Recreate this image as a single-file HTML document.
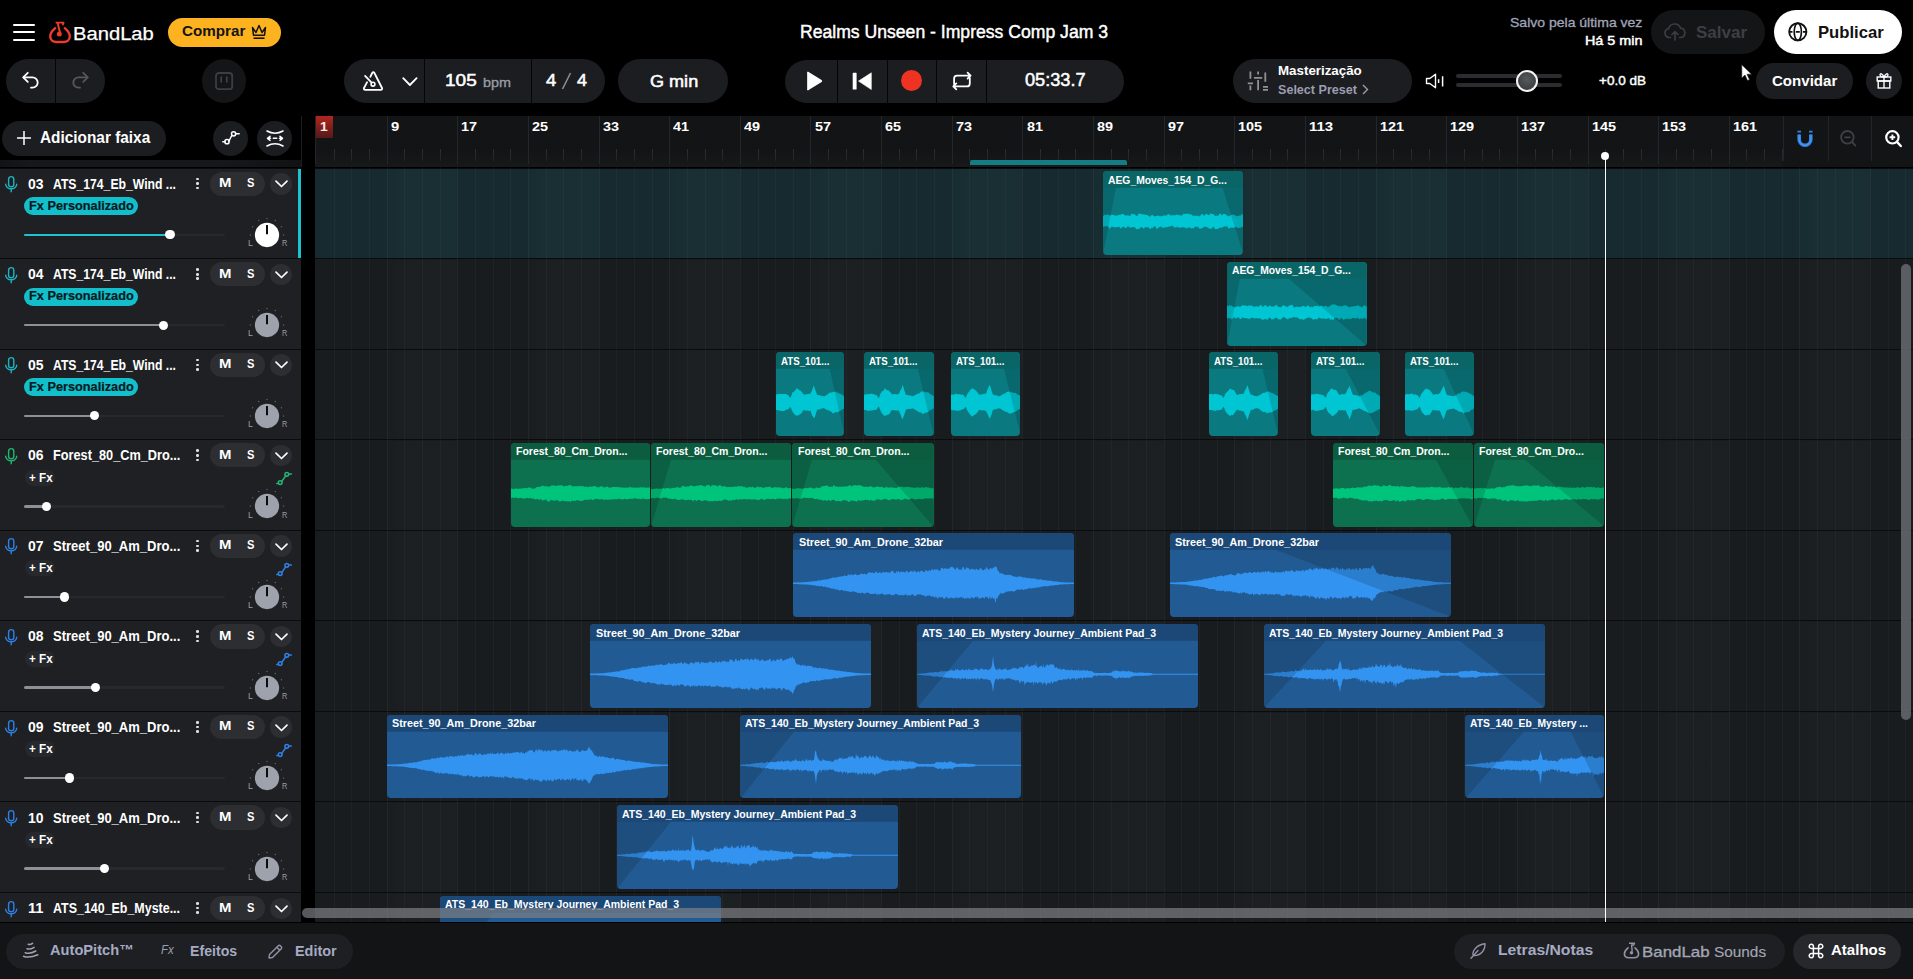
<!DOCTYPE html><html><head><meta charset="utf-8"><title>BandLab Studio</title><style>
*{margin:0;padding:0;box-sizing:border-box}
html,body{width:1913px;height:979px;overflow:hidden;background:#000;font-family:"Liberation Sans",sans-serif;color:#fff}
.abs{position:absolute}
.pill{position:absolute;border-radius:999px}
.t{position:absolute;white-space:nowrap;line-height:1}
svg{position:absolute;overflow:visible}
</style></head><body>
<div class="abs" style="left:13px;top:23.5px;width:22.3px;height:2.3px;background:#fff;border-radius:1px"></div>
<div class="abs" style="left:13px;top:31px;width:22.3px;height:2.3px;background:#fff;border-radius:1px"></div>
<div class="abs" style="left:13px;top:39px;width:22.3px;height:2.3px;background:#fff;border-radius:1px"></div>
<svg style="left:48px;top:20px" width="24" height="24" viewBox="0 0 24 24">
<path d="M7.2 8.2 C4.4 10.6 2.2 13.4 2.2 16.6 C2.2 20.2 5 22 8.5 22 H15.5 C19 22 21.8 20.2 21.8 16.6 C21.8 13.4 19.6 10.6 16.8 8.2" fill="none" stroke="#ee3b2b" stroke-width="2.4" stroke-linecap="round"/>
<path d="M8.4 2.6 H15.6 L14.9 4.4" fill="none" stroke="#ee3b2b" stroke-width="1.9" stroke-linejoin="round" stroke-linecap="round"/>
<path d="M9.6 2.8 L11.9 12.2" stroke="#ee3b2b" stroke-width="2"/>
<circle cx="11.3" cy="14" r="2.5" fill="#ee3b2b"/>
</svg>
<div class="t" style="left:73.34px;top:23.50px;font-size:19.13px;font-weight:normal;color:#fff;-webkit-text-stroke:0.25px #fff;transform:scaleX(1.0563);transform-origin:0 0">BandLab</div>
<div class="pill" style="left:168px;top:18px;width:113px;height:29px;background:#fdb21f"></div>
<div class="t" style="left:182.00px;top:24.39px;font-size:14.66px;font-weight:bold;color:#141414;;transform:scaleX(1.0379);transform-origin:0 0">Comprar</div>
<svg style="left:251px;top:23px" width="16" height="17" viewBox="0 0 16 17">
<path d="M1.5 4.5 L5 9.5 L8 2.5 L11 9.5 L14.5 4.5 L13.5 12.2 H2.5 Z" fill="none" stroke="#141414" stroke-width="1.5" stroke-linejoin="round"/>
<path d="M2.5 15.2 H13.5" stroke="#141414" stroke-width="1.6"/>
</svg>
<div class="t" style="left:800.12px;top:23.25px;font-size:18.02px;font-weight:normal;color:#fff;-webkit-text-stroke:0.45px #fff;transform:scaleX(0.9766);transform-origin:0 0">Realms Unseen - Impress Comp Jam 3</div>
<div class="t" style="left:1509.60px;top:17.20px;font-size:12.29px;font-weight:normal;color:#a0a4b8;-webkit-text-stroke:0.3px #a0a4b8;transform:scaleX(1.1406);transform-origin:0 0">Salvo pela última vez</div>
<div class="t" style="left:1585.22px;top:34.71px;font-size:12.15px;font-weight:normal;color:#fff;-webkit-text-stroke:0.45px #fff;transform:scaleX(1.1830);transform-origin:0 0">Há 5 min</div>
<div class="pill" style="left:1651px;top:10.4px;width:114.4px;height:43.3px;background:#141517"></div>
<svg style="left:1664px;top:23px" width="22" height="18" viewBox="0 0 22 18">
<path d="M6.5 14.5 H5.5 A4.5 4.5 0 0 1 4.6 5.6 A6.3 6.3 0 0 1 16.6 5.2 A4.7 4.7 0 0 1 17 14.5 H15.5" fill="none" stroke="#3b3d42" stroke-width="1.7" stroke-linecap="round"/>
<path d="M11 17 V8.5 M8 11.5 L11 8.5 L14 11.5" fill="none" stroke="#3b3d42" stroke-width="1.7" stroke-linecap="round" stroke-linejoin="round"/>
</svg>
<div class="t" style="left:1696.20px;top:24.10px;font-size:16.06px;font-weight:bold;color:#3d3f44;;transform:scaleX(1.0598);transform-origin:0 0">Salvar</div>
<div class="pill" style="left:1774px;top:9.8px;width:128px;height:44px;background:#fff"></div>
<svg style="left:1788px;top:22px" width="20" height="20" viewBox="0 0 20 20">
<circle cx="9.8" cy="9.8" r="8.6" fill="none" stroke="#111" stroke-width="1.9"/>
<ellipse cx="9.8" cy="9.8" rx="3.6" ry="8.6" fill="none" stroke="#111" stroke-width="1.7"/>
<path d="M1.2 9.8 H4.5 M7.8 9.8 H11.8 M15 9.8 H18.4" stroke="#111" stroke-width="1.7"/>
</svg>
<div class="t" style="left:1818.03px;top:25.16px;font-size:15.64px;font-weight:bold;color:#111;;transform:scaleX(1.0665);transform-origin:0 0">Publicar</div>
<div class="pill" style="left:6px;top:59px;width:99px;height:44px;background:#1c1d20"></div>
<div class="abs" style="left:55px;top:59px;width:1.2px;height:44px;background:#050505"></div>
<svg style="left:21px;top:71px" width="20" height="20" viewBox="0 0 20 20">
<path d="M6.8 1.8 L2.2 6.3 L6.8 10.8" fill="none" stroke="#fff" stroke-width="1.8" stroke-linejoin="round" stroke-linecap="round"/>
<path d="M2.6 6.3 H11.5 A5.2 5.2 0 0 1 11.5 16.7 H10" fill="none" stroke="#fff" stroke-width="1.8" stroke-linecap="round"/>
</svg>
<svg style="left:70px;top:71px" width="20" height="20" viewBox="0 0 20 20">
<path d="M13.2 1.8 L17.8 6.3 L13.2 10.8" fill="none" stroke="#55575c" stroke-width="1.8" stroke-linejoin="round" stroke-linecap="round"/>
<path d="M17.4 6.3 H8.5 A5.2 5.2 0 0 0 8.5 16.7 H10" fill="none" stroke="#55575c" stroke-width="1.8" stroke-linecap="round"/>
</svg>
<div class="pill" style="left:202px;top:59px;width:44px;height:44px;background:#141517"></div>
<svg style="left:214px;top:71px" width="20" height="20" viewBox="0 0 20 20">
<rect x="2" y="2" width="16.2" height="16.2" rx="2.8" fill="none" stroke="#3c3e42" stroke-width="1.8"/>
<path d="M7.2 5.4 V11.4 M12.8 5.4 V11.4" stroke="#45474b" stroke-width="1.5"/>
</svg>
<div class="pill" style="left:344px;top:59px;width:261px;height:44px;background:#1c1d20"></div>
<div class="abs" style="left:424px;top:59px;width:1.2px;height:44px;background:#050505"></div>
<div class="abs" style="left:531px;top:59px;width:1.2px;height:44px;background:#050505"></div>
<svg style="left:362px;top:71px" width="22" height="20" viewBox="0 0 22 20">
<path d="M8.3 5.8 L10.2 2 Q11.3 0.4 12.4 2 L20 17 Q20.6 18.8 18.8 18.8 H3.2 Q1.4 18.8 2 17 L5.1 11.2" fill="none" stroke="#fff" stroke-width="1.8" stroke-linejoin="round" stroke-linecap="round"/>
<path d="M3.1 4.9 L9.6 11.6" stroke="#fff" stroke-width="1.8" stroke-linecap="round"/>
<circle cx="11" cy="13.2" r="1.9" fill="none" stroke="#fff" stroke-width="1.6"/>
</svg>
<svg style="left:402px;top:77px" width="16" height="10" viewBox="0 0 16 10">
<path d="M1.2 1.2 L7.9 8 L14.6 1.2" fill="none" stroke="#fff" stroke-width="1.8" stroke-linecap="round" stroke-linejoin="round"/>
</svg>
<div class="t" style="left:445.26px;top:72.93px;font-size:16.62px;font-weight:normal;color:#fff;-webkit-text-stroke:0.5px #fff;transform:scaleX(1.1445);transform-origin:0 0">105</div>
<div class="t" style="left:483.00px;top:75.57px;font-size:13.27px;font-weight:normal;color:#9a9ea8;-webkit-text-stroke:0.3px #9a9ea8;transform:scaleX(1.0833);transform-origin:0 0">bpm</div>
<div class="t" style="left:546.00px;top:72.93px;font-size:16.62px;font-weight:normal;color:#fff;-webkit-text-stroke:0.5px #fff;transform:scaleX(1.1111);transform-origin:0 0">4</div>
<svg style="left:561px;top:72px" width="11" height="18" viewBox="0 0 11 18"><path d="M9.5 1 L1.5 17" stroke="#8d9096" stroke-width="1.5"/></svg>
<div class="t" style="left:576.50px;top:72.93px;font-size:16.62px;font-weight:normal;color:#fff;-webkit-text-stroke:0.5px #fff;transform:scaleX(1.0778);transform-origin:0 0">4</div>
<div class="pill" style="left:618px;top:59px;width:110px;height:43.6px;background:#1c1d20"></div>
<div class="t" style="left:649.60px;top:73.15px;font-size:16.48px;font-weight:normal;color:#fff;-webkit-text-stroke:0.5px #fff;transform:scaleX(1.0968);transform-origin:0 0">G min</div>
<div class="pill" style="left:784.5px;top:59.5px;width:339px;height:43.5px;background:#1c1d20"></div>
<div class="abs" style="left:837px;top:59.5px;width:1.2px;height:43.5px;background:#050505"></div>
<div class="abs" style="left:887px;top:59.5px;width:1.2px;height:43.5px;background:#050505"></div>
<div class="abs" style="left:936px;top:59.5px;width:1.2px;height:43.5px;background:#050505"></div>
<div class="abs" style="left:986px;top:59.5px;width:1.2px;height:43.5px;background:#050505"></div>
<svg style="left:806px;top:71px" width="17" height="20" viewBox="0 0 17 20">
<path d="M1.8 1.6 Q1.3 1 2.3 1.4 L15.3 9.6 Q15.8 10 15.3 10.4 L2.3 18.6 Q1.3 19 1.8 18.4 Z" fill="#fff" stroke="#fff" stroke-width="1.2" stroke-linejoin="round"/>
</svg>
<svg style="left:852px;top:72px" width="20" height="18" viewBox="0 0 20 18">
<rect x="0.7" y="0.8" width="3.9" height="16.7" rx="0.6" fill="#fff"/><path d="M19.3 0.8 L6.5 9.1 L19.3 17.5 Z" fill="#fff" stroke="#fff" stroke-width="0.6" stroke-linejoin="round"/>
</svg>
<div class="abs" style="left:901.3px;top:70.4px;width:21px;height:21px;border-radius:50%;background:#ee3322"></div>
<svg style="left:952px;top:71px" width="21" height="20" viewBox="0 0 21 20">
<path d="M2.1 13 V7.6 A3 3 0 0 1 5.1 4.6 H18.6 M15.6 1.6 L18.6 4.6 L15.6 7.6" fill="none" stroke="#fff" stroke-width="1.8" stroke-linejoin="round" stroke-linecap="round"/>
<path d="M17.8 7 V12.4 A3 3 0 0 1 14.8 15.4 H1.3 M4.3 12.4 L1.3 15.4 L4.3 18.4" fill="none" stroke="#fff" stroke-width="1.8" stroke-linejoin="round" stroke-linecap="round"/>
</svg>
<div class="t" style="left:1024.90px;top:72.47px;font-size:17.88px;font-weight:normal;color:#fff;-webkit-text-stroke:0.5px #fff;transform:scaleX(1.0175);transform-origin:0 0">05:33.7</div>
<div class="pill" style="left:1233px;top:59px;width:178.7px;height:43.7px;background:#1c1d20"></div>
<svg style="left:1247px;top:71px" width="22" height="20" viewBox="0 0 22 20">
<path d="M3.4 0.4 V7.8 M3.4 14.5 V19.3 M11.1 0.4 V3.5 M11.1 9 V19.3 M18.3 1.4 V10.8" stroke="#8e9197" stroke-width="1.8"/>
<path d="M0.8 12.3 H6 M7 6.8 H15.2 M16 15.8 H21 M16 18.8 H21" stroke="#8e9197" stroke-width="1.8"/>
</svg>
<div class="t" style="left:1278.20px;top:65.02px;font-size:12.85px;font-weight:bold;color:#fff;;transform:scaleX(1.0381);transform-origin:0 0">Masterização</div>
<div class="t" style="left:1278.20px;top:83.70px;font-size:12.29px;font-weight:bold;color:#9a9eb0;;transform:scaleX(1.0239);transform-origin:0 0">Select Preset</div>
<svg style="left:1362px;top:84px" width="7" height="11" viewBox="0 0 7 11"><path d="M1 1 L5.5 5.5 L1 10" fill="none" stroke="#9a9eb0" stroke-width="1.4"/></svg>
<svg style="left:1425px;top:73px" width="20" height="16" viewBox="0 0 20 16">
<path d="M1.5 5.5 H4.8 L10.5 1.2 V14.8 L4.8 10.5 H1.5 Z" fill="none" stroke="#fff" stroke-width="1.4" stroke-linejoin="round"/>
<path d="M13.6 6.2 V10 M17.6 3.2 V13.4" stroke="#fff" stroke-width="1.5"/>
</svg>
<div class="abs" style="left:1456.2px;top:74.3px;width:105.8px;height:3.6px;background:#2a2c2f;border-radius:2px"></div>
<div class="abs" style="left:1456.2px;top:83.2px;width:105.8px;height:3.8px;background:#2a2c2f;border-radius:2px"></div>
<div class="abs" style="left:1516.3px;top:70px;width:22.2px;height:22.2px;border-radius:50%;background:radial-gradient(circle at 50% 40%,#56585b,#333538);border:2.4px solid #f4f4f4"></div>
<div class="t" style="left:1599.30px;top:74.15px;font-size:13.41px;font-weight:normal;color:#fff;-webkit-text-stroke:0.45px #fff;transform:scaleX(1.0076);transform-origin:0 0">+0.0 dB</div>
<svg style="left:1741px;top:63.5px" width="12" height="18" viewBox="0 0 12 18">
<path d="M0.8 0.8 L0.8 14 L4 11 L6.5 16.5 L8.5 15.6 L6 10.2 L10.5 10.2 Z" fill="#fff" stroke="#222" stroke-width="0.6"/>
</svg>
<div class="pill" style="left:1756.3px;top:63.3px;width:96.7px;height:35.4px;background:#1c1d20"></div>
<div class="t" style="left:1771.90px;top:73.86px;font-size:14.11px;font-weight:bold;color:#fff;;transform:scaleX(1.0672);transform-origin:0 0">Convidar</div>
<div class="pill" style="left:1866.4px;top:63.3px;width:35.4px;height:35.4px;background:#1c1d20"></div>
<svg style="left:1876px;top:72px" width="16" height="17" viewBox="0 0 16 17">
<rect x="1.2" y="5" width="13.6" height="4" fill="none" stroke="#fff" stroke-width="1.4"/>
<rect x="2.2" y="9" width="11.6" height="7" fill="none" stroke="#fff" stroke-width="1.4"/>
<path d="M8 5 V16" stroke="#fff" stroke-width="1.4"/>
<path d="M8 5 C6.5 1.2 3.8 1 4 3 C4.2 4.6 6.5 5 8 5 C9.5 5 11.8 4.6 12 3 C12.2 1 9.5 1.2 8 5" fill="none" stroke="#fff" stroke-width="1.3"/>
</svg>
<div class="pill" style="left:2.4px;top:121px;width:163.5px;height:34.8px;background:#1c1d20"></div>
<svg style="left:16.9px;top:130.7px" width="14" height="14" viewBox="0 0 14 14">
<path d="M7 0 V14 M0 7 H14" stroke="#fff" stroke-width="1.5"/>
</svg>
<div class="t" style="left:40.00px;top:129.96px;font-size:15.64px;font-weight:bold;color:#fff;;transform:scaleX(0.9838);transform-origin:0 0">Adicionar faixa</div>
<div class="pill" style="left:213.3px;top:121px;width:34.5px;height:34.8px;background:#1c1d20"></div>
<svg style="left:222px;top:130px" width="18" height="15" viewBox="0 0 18 15">
<path d="M0.8 11.7 H3 M7 11 L9.5 6 M13.5 3.8 H17.2" stroke="#fff" stroke-width="1.5" stroke-linecap="round"/>
<circle cx="5" cy="11.7" r="2.1" fill="none" stroke="#fff" stroke-width="1.5"/>
<circle cx="11.6" cy="3.8" r="2.1" fill="none" stroke="#fff" stroke-width="1.5"/>
</svg>
<div class="pill" style="left:257.2px;top:121px;width:34.5px;height:34.8px;background:#1c1d20"></div>
<svg style="left:266px;top:129.5px" width="18" height="17" viewBox="0 0 18 17">
<path d="M1 1 Q9 5.5 17 1 M1 16 Q9 11.5 17 16" fill="none" stroke="#fff" stroke-width="1.6" stroke-linecap="round"/>
<path d="M1.5 8.3 L4 6.3 M1.5 8.3 L4 10.3 M16.5 8.3 L14 6.3 M16.5 8.3 L14 10.3 M1.5 8.3 H4.5 M7.3 8.3 H10.7 M13.5 8.3 H16.5" fill="none" stroke="#fff" stroke-width="1.5" stroke-linecap="round"/>
</svg>
<div class="abs" style="left:0;top:159.7px;width:301px;height:7px;background:linear-gradient(90deg,#121315,#17181b 10%,#17181b 70%,#111214)"></div>
<div class="abs" style="left:300.6px;top:116px;width:1px;height:51px;background:#1d1e21"></div>
<div class="abs" style="left:315px;top:115.7px;width:1598px;height:51px;background:linear-gradient(180deg,#131416 0%,#131416 70%,#17191b 100%)"></div>
<div class="abs" style="left:315px;top:115.7px;width:18.3px;height:22.2px;background:linear-gradient(180deg,#b3271f 0%,#7c1f1c 55%,#561a1a 100%)"></div>
<div class="t" style="left:320.40px;top:120.10px;font-size:12.99px;font-weight:bold;color:#ffe9e6;;transform:scaleX(1.0714);transform-origin:0 0">1</div>
<div class="abs" style="left:315px;top:115.7px;width:1px;height:48px;background:#222427"></div>
<div class="abs" style="left:386.64px;top:115.7px;width:1px;height:48px;background:#242629"></div>
<div class="t" style="left:390.74px;top:120.09px;font-size:13.13px;font-weight:bold;color:#fff;;transform:scaleX(1.1286);transform-origin:0 0">9</div>
<div class="abs" style="left:457.28px;top:115.7px;width:1px;height:48px;background:#242629"></div>
<div class="t" style="left:461.38px;top:120.09px;font-size:13.13px;font-weight:bold;color:#fff;;transform:scaleX(1.0979);transform-origin:0 0">17</div>
<div class="abs" style="left:527.92px;top:115.7px;width:1px;height:48px;background:#242629"></div>
<div class="t" style="left:532.02px;top:120.09px;font-size:13.13px;font-weight:bold;color:#fff;;transform:scaleX(1.0979);transform-origin:0 0">25</div>
<div class="abs" style="left:598.56px;top:115.7px;width:1px;height:48px;background:#242629"></div>
<div class="t" style="left:602.66px;top:120.09px;font-size:13.13px;font-weight:bold;color:#fff;;transform:scaleX(1.0979);transform-origin:0 0">33</div>
<div class="abs" style="left:669.20px;top:115.7px;width:1px;height:48px;background:#242629"></div>
<div class="t" style="left:673.30px;top:120.09px;font-size:13.13px;font-weight:bold;color:#fff;;transform:scaleX(1.0979);transform-origin:0 0">41</div>
<div class="abs" style="left:739.84px;top:115.7px;width:1px;height:48px;background:#242629"></div>
<div class="t" style="left:743.94px;top:120.09px;font-size:13.13px;font-weight:bold;color:#fff;;transform:scaleX(1.0979);transform-origin:0 0">49</div>
<div class="abs" style="left:810.48px;top:115.7px;width:1px;height:48px;background:#242629"></div>
<div class="t" style="left:814.58px;top:120.09px;font-size:13.13px;font-weight:bold;color:#fff;;transform:scaleX(1.0979);transform-origin:0 0">57</div>
<div class="abs" style="left:881.12px;top:115.7px;width:1px;height:48px;background:#242629"></div>
<div class="t" style="left:885.22px;top:120.09px;font-size:13.13px;font-weight:bold;color:#fff;;transform:scaleX(1.0979);transform-origin:0 0">65</div>
<div class="abs" style="left:951.76px;top:115.7px;width:1px;height:48px;background:#242629"></div>
<div class="t" style="left:955.86px;top:120.09px;font-size:13.13px;font-weight:bold;color:#fff;;transform:scaleX(1.0979);transform-origin:0 0">73</div>
<div class="abs" style="left:1022.40px;top:115.7px;width:1px;height:48px;background:#242629"></div>
<div class="t" style="left:1026.50px;top:120.09px;font-size:13.13px;font-weight:bold;color:#fff;;transform:scaleX(1.0979);transform-origin:0 0">81</div>
<div class="abs" style="left:1093.04px;top:115.7px;width:1px;height:48px;background:#242629"></div>
<div class="t" style="left:1097.14px;top:120.09px;font-size:13.13px;font-weight:bold;color:#fff;;transform:scaleX(1.0979);transform-origin:0 0">89</div>
<div class="abs" style="left:1163.68px;top:115.7px;width:1px;height:48px;background:#242629"></div>
<div class="t" style="left:1167.78px;top:120.09px;font-size:13.13px;font-weight:bold;color:#fff;;transform:scaleX(1.0979);transform-origin:0 0">97</div>
<div class="abs" style="left:1234.32px;top:115.7px;width:1px;height:48px;background:#242629"></div>
<div class="t" style="left:1238.42px;top:120.09px;font-size:13.13px;font-weight:bold;color:#fff;;transform:scaleX(1.1019);transform-origin:0 0">105</div>
<div class="abs" style="left:1304.96px;top:115.7px;width:1px;height:48px;background:#242629"></div>
<div class="t" style="left:1309.06px;top:120.09px;font-size:13.13px;font-weight:bold;color:#fff;;transform:scaleX(1.1401);transform-origin:0 0">113</div>
<div class="abs" style="left:1375.60px;top:115.7px;width:1px;height:48px;background:#242629"></div>
<div class="t" style="left:1379.70px;top:120.09px;font-size:13.13px;font-weight:bold;color:#fff;;transform:scaleX(1.1019);transform-origin:0 0">121</div>
<div class="abs" style="left:1446.24px;top:115.7px;width:1px;height:48px;background:#242629"></div>
<div class="t" style="left:1450.34px;top:120.09px;font-size:13.13px;font-weight:bold;color:#fff;;transform:scaleX(1.1019);transform-origin:0 0">129</div>
<div class="abs" style="left:1516.88px;top:115.7px;width:1px;height:48px;background:#242629"></div>
<div class="t" style="left:1520.98px;top:120.09px;font-size:13.13px;font-weight:bold;color:#fff;;transform:scaleX(1.1019);transform-origin:0 0">137</div>
<div class="abs" style="left:1587.52px;top:115.7px;width:1px;height:48px;background:#242629"></div>
<div class="t" style="left:1591.62px;top:120.09px;font-size:13.13px;font-weight:bold;color:#fff;;transform:scaleX(1.1019);transform-origin:0 0">145</div>
<div class="abs" style="left:1658.16px;top:115.7px;width:1px;height:48px;background:#242629"></div>
<div class="t" style="left:1662.26px;top:120.09px;font-size:13.13px;font-weight:bold;color:#fff;;transform:scaleX(1.1019);transform-origin:0 0">153</div>
<div class="abs" style="left:1728.80px;top:115.7px;width:1px;height:48px;background:#242629"></div>
<div class="t" style="left:1732.90px;top:120.09px;font-size:13.13px;font-weight:bold;color:#fff;;transform:scaleX(1.1019);transform-origin:0 0">161</div>
<div class="abs" style="left:333.66px;top:148.5px;width:1px;height:12.5px;background:linear-gradient(#2c2e31,#222427)"></div>
<div class="abs" style="left:351.32px;top:148.5px;width:1px;height:12.5px;background:linear-gradient(#2c2e31,#222427)"></div>
<div class="abs" style="left:368.98px;top:148.5px;width:1px;height:12.5px;background:linear-gradient(#2c2e31,#222427)"></div>
<div class="abs" style="left:404.30px;top:148.5px;width:1px;height:12.5px;background:linear-gradient(#2c2e31,#222427)"></div>
<div class="abs" style="left:421.96px;top:148.5px;width:1px;height:12.5px;background:linear-gradient(#2c2e31,#222427)"></div>
<div class="abs" style="left:439.62px;top:148.5px;width:1px;height:12.5px;background:linear-gradient(#2c2e31,#222427)"></div>
<div class="abs" style="left:474.94px;top:148.5px;width:1px;height:12.5px;background:linear-gradient(#2c2e31,#222427)"></div>
<div class="abs" style="left:492.60px;top:148.5px;width:1px;height:12.5px;background:linear-gradient(#2c2e31,#222427)"></div>
<div class="abs" style="left:510.26px;top:148.5px;width:1px;height:12.5px;background:linear-gradient(#2c2e31,#222427)"></div>
<div class="abs" style="left:545.58px;top:148.5px;width:1px;height:12.5px;background:linear-gradient(#2c2e31,#222427)"></div>
<div class="abs" style="left:563.24px;top:148.5px;width:1px;height:12.5px;background:linear-gradient(#2c2e31,#222427)"></div>
<div class="abs" style="left:580.90px;top:148.5px;width:1px;height:12.5px;background:linear-gradient(#2c2e31,#222427)"></div>
<div class="abs" style="left:616.22px;top:148.5px;width:1px;height:12.5px;background:linear-gradient(#2c2e31,#222427)"></div>
<div class="abs" style="left:633.88px;top:148.5px;width:1px;height:12.5px;background:linear-gradient(#2c2e31,#222427)"></div>
<div class="abs" style="left:651.54px;top:148.5px;width:1px;height:12.5px;background:linear-gradient(#2c2e31,#222427)"></div>
<div class="abs" style="left:686.86px;top:148.5px;width:1px;height:12.5px;background:linear-gradient(#2c2e31,#222427)"></div>
<div class="abs" style="left:704.52px;top:148.5px;width:1px;height:12.5px;background:linear-gradient(#2c2e31,#222427)"></div>
<div class="abs" style="left:722.18px;top:148.5px;width:1px;height:12.5px;background:linear-gradient(#2c2e31,#222427)"></div>
<div class="abs" style="left:757.50px;top:148.5px;width:1px;height:12.5px;background:linear-gradient(#2c2e31,#222427)"></div>
<div class="abs" style="left:775.16px;top:148.5px;width:1px;height:12.5px;background:linear-gradient(#2c2e31,#222427)"></div>
<div class="abs" style="left:792.82px;top:148.5px;width:1px;height:12.5px;background:linear-gradient(#2c2e31,#222427)"></div>
<div class="abs" style="left:828.14px;top:148.5px;width:1px;height:12.5px;background:linear-gradient(#2c2e31,#222427)"></div>
<div class="abs" style="left:845.80px;top:148.5px;width:1px;height:12.5px;background:linear-gradient(#2c2e31,#222427)"></div>
<div class="abs" style="left:863.46px;top:148.5px;width:1px;height:12.5px;background:linear-gradient(#2c2e31,#222427)"></div>
<div class="abs" style="left:898.78px;top:148.5px;width:1px;height:12.5px;background:linear-gradient(#2c2e31,#222427)"></div>
<div class="abs" style="left:916.44px;top:148.5px;width:1px;height:12.5px;background:linear-gradient(#2c2e31,#222427)"></div>
<div class="abs" style="left:934.10px;top:148.5px;width:1px;height:12.5px;background:linear-gradient(#2c2e31,#222427)"></div>
<div class="abs" style="left:969.42px;top:148.5px;width:1px;height:12.5px;background:linear-gradient(#2c2e31,#222427)"></div>
<div class="abs" style="left:987.08px;top:148.5px;width:1px;height:12.5px;background:linear-gradient(#2c2e31,#222427)"></div>
<div class="abs" style="left:1004.74px;top:148.5px;width:1px;height:12.5px;background:linear-gradient(#2c2e31,#222427)"></div>
<div class="abs" style="left:1040.06px;top:148.5px;width:1px;height:12.5px;background:linear-gradient(#2c2e31,#222427)"></div>
<div class="abs" style="left:1057.72px;top:148.5px;width:1px;height:12.5px;background:linear-gradient(#2c2e31,#222427)"></div>
<div class="abs" style="left:1075.38px;top:148.5px;width:1px;height:12.5px;background:linear-gradient(#2c2e31,#222427)"></div>
<div class="abs" style="left:1110.70px;top:148.5px;width:1px;height:12.5px;background:linear-gradient(#2c2e31,#222427)"></div>
<div class="abs" style="left:1128.36px;top:148.5px;width:1px;height:12.5px;background:linear-gradient(#2c2e31,#222427)"></div>
<div class="abs" style="left:1146.02px;top:148.5px;width:1px;height:12.5px;background:linear-gradient(#2c2e31,#222427)"></div>
<div class="abs" style="left:1181.34px;top:148.5px;width:1px;height:12.5px;background:linear-gradient(#2c2e31,#222427)"></div>
<div class="abs" style="left:1199.00px;top:148.5px;width:1px;height:12.5px;background:linear-gradient(#2c2e31,#222427)"></div>
<div class="abs" style="left:1216.66px;top:148.5px;width:1px;height:12.5px;background:linear-gradient(#2c2e31,#222427)"></div>
<div class="abs" style="left:1251.98px;top:148.5px;width:1px;height:12.5px;background:linear-gradient(#2c2e31,#222427)"></div>
<div class="abs" style="left:1269.64px;top:148.5px;width:1px;height:12.5px;background:linear-gradient(#2c2e31,#222427)"></div>
<div class="abs" style="left:1287.30px;top:148.5px;width:1px;height:12.5px;background:linear-gradient(#2c2e31,#222427)"></div>
<div class="abs" style="left:1322.62px;top:148.5px;width:1px;height:12.5px;background:linear-gradient(#2c2e31,#222427)"></div>
<div class="abs" style="left:1340.28px;top:148.5px;width:1px;height:12.5px;background:linear-gradient(#2c2e31,#222427)"></div>
<div class="abs" style="left:1357.94px;top:148.5px;width:1px;height:12.5px;background:linear-gradient(#2c2e31,#222427)"></div>
<div class="abs" style="left:1393.26px;top:148.5px;width:1px;height:12.5px;background:linear-gradient(#2c2e31,#222427)"></div>
<div class="abs" style="left:1410.92px;top:148.5px;width:1px;height:12.5px;background:linear-gradient(#2c2e31,#222427)"></div>
<div class="abs" style="left:1428.58px;top:148.5px;width:1px;height:12.5px;background:linear-gradient(#2c2e31,#222427)"></div>
<div class="abs" style="left:1463.90px;top:148.5px;width:1px;height:12.5px;background:linear-gradient(#2c2e31,#222427)"></div>
<div class="abs" style="left:1481.56px;top:148.5px;width:1px;height:12.5px;background:linear-gradient(#2c2e31,#222427)"></div>
<div class="abs" style="left:1499.22px;top:148.5px;width:1px;height:12.5px;background:linear-gradient(#2c2e31,#222427)"></div>
<div class="abs" style="left:1534.54px;top:148.5px;width:1px;height:12.5px;background:linear-gradient(#2c2e31,#222427)"></div>
<div class="abs" style="left:1552.20px;top:148.5px;width:1px;height:12.5px;background:linear-gradient(#2c2e31,#222427)"></div>
<div class="abs" style="left:1569.86px;top:148.5px;width:1px;height:12.5px;background:linear-gradient(#2c2e31,#222427)"></div>
<div class="abs" style="left:1605.18px;top:148.5px;width:1px;height:12.5px;background:linear-gradient(#2c2e31,#222427)"></div>
<div class="abs" style="left:1622.84px;top:148.5px;width:1px;height:12.5px;background:linear-gradient(#2c2e31,#222427)"></div>
<div class="abs" style="left:1640.50px;top:148.5px;width:1px;height:12.5px;background:linear-gradient(#2c2e31,#222427)"></div>
<div class="abs" style="left:1675.82px;top:148.5px;width:1px;height:12.5px;background:linear-gradient(#2c2e31,#222427)"></div>
<div class="abs" style="left:1693.48px;top:148.5px;width:1px;height:12.5px;background:linear-gradient(#2c2e31,#222427)"></div>
<div class="abs" style="left:1711.14px;top:148.5px;width:1px;height:12.5px;background:linear-gradient(#2c2e31,#222427)"></div>
<div class="abs" style="left:1746.46px;top:148.5px;width:1px;height:12.5px;background:linear-gradient(#2c2e31,#222427)"></div>
<div class="abs" style="left:1764.12px;top:148.5px;width:1px;height:12.5px;background:linear-gradient(#2c2e31,#222427)"></div>
<div class="abs" style="left:1781.78px;top:148.5px;width:1px;height:12.5px;background:linear-gradient(#2c2e31,#222427)"></div>
<div class="abs" style="left:969.8px;top:160px;width:157.6px;height:5px;background:#167c84;border-radius:2px 2px 0 0"></div>
<div class="abs" style="left:1783px;top:115.7px;width:130px;height:51px;background:#131416"></div>
<div class="abs" style="left:1783px;top:115.7px;width:1px;height:45px;background:#222427"></div>
<div class="abs" style="left:1827.5px;top:115.7px;width:1px;height:45px;background:#222427"></div>
<div class="abs" style="left:1871.3px;top:115.7px;width:1px;height:45px;background:#222427"></div>
<svg style="left:1796px;top:129px" width="18" height="20" viewBox="0 0 18 20">
<path d="M3.2 5.5 V10.5 A5.8 5.8 0 0 0 14.8 10.5 V5.5" fill="none" stroke="#2f86e8" stroke-width="3.6"/>
<path d="M3.2 5.5 V10.5 A5.8 5.8 0 0 0 14.8 10.5 V5.5" fill="none" stroke="#5a9ff0" stroke-width="0.8"/>
<path d="M1.4 2.6 H5 M13 2.6 H16.6" stroke="#2f86e8" stroke-width="1.8"/>
</svg>
<svg style="left:1839px;top:129px" width="20" height="20" viewBox="0 0 20 20">
<circle cx="8.4" cy="8.3" r="6.3" fill="none" stroke="#3e4044" stroke-width="1.8"/>
<path d="M6 8.3 H10.8 M13.2 13.1 L16.4 16.6" stroke="#3e4044" stroke-width="1.8" stroke-linecap="round"/>
</svg>
<svg style="left:1884.2px;top:129px" width="20" height="20" viewBox="0 0 20 20">
<circle cx="8.4" cy="8.3" r="6.2" fill="none" stroke="#fff" stroke-width="2.2"/>
<path d="M5.6 8.3 H11.2 M8.4 5.5 V11.1" stroke="#fff" stroke-width="1.9"/>
<path d="M13.2 13.1 L16.8 17" stroke="#fff" stroke-width="2.4" stroke-linecap="round"/>
</svg>
<div class="abs" style="left:0;top:167px;width:1913px;height:755px;overflow:hidden">
<div class="abs" style="left:0;top:0.60px;width:301px;height:90.55px;background:#1e2023;border-top:1.6px solid #0a0b0c"></div>
<div class="abs" style="left:315px;top:0.60px;width:1598px;height:90.55px;background:#172a2f;border-top:1.6px solid #0a0b0c"></div>
<div class="abs" style="left:0;top:91.15px;width:301px;height:90.55px;background:#1e2023;border-top:1.6px solid #0a0b0c"></div>
<div class="abs" style="left:315px;top:91.15px;width:1598px;height:90.55px;background:#191c1f;border-top:1.6px solid #0a0b0c"></div>
<div class="abs" style="left:0;top:181.70px;width:301px;height:90.55px;background:#1e2023;border-top:1.6px solid #0a0b0c"></div>
<div class="abs" style="left:315px;top:181.70px;width:1598px;height:90.55px;background:#191c1f;border-top:1.6px solid #0a0b0c"></div>
<div class="abs" style="left:0;top:272.25px;width:301px;height:90.55px;background:#1e2023;border-top:1.6px solid #0a0b0c"></div>
<div class="abs" style="left:315px;top:272.25px;width:1598px;height:90.55px;background:#191c1f;border-top:1.6px solid #0a0b0c"></div>
<div class="abs" style="left:0;top:362.80px;width:301px;height:90.55px;background:#1e2023;border-top:1.6px solid #0a0b0c"></div>
<div class="abs" style="left:315px;top:362.80px;width:1598px;height:90.55px;background:#191c1f;border-top:1.6px solid #0a0b0c"></div>
<div class="abs" style="left:0;top:453.35px;width:301px;height:90.55px;background:#1e2023;border-top:1.6px solid #0a0b0c"></div>
<div class="abs" style="left:315px;top:453.35px;width:1598px;height:90.55px;background:#191c1f;border-top:1.6px solid #0a0b0c"></div>
<div class="abs" style="left:0;top:543.90px;width:301px;height:90.55px;background:#1e2023;border-top:1.6px solid #0a0b0c"></div>
<div class="abs" style="left:315px;top:543.90px;width:1598px;height:90.55px;background:#191c1f;border-top:1.6px solid #0a0b0c"></div>
<div class="abs" style="left:0;top:634.45px;width:301px;height:90.55px;background:#1e2023;border-top:1.6px solid #0a0b0c"></div>
<div class="abs" style="left:315px;top:634.45px;width:1598px;height:90.55px;background:#191c1f;border-top:1.6px solid #0a0b0c"></div>
<div class="abs" style="left:0;top:725.00px;width:301px;height:90.55px;background:#1e2023;border-top:1.6px solid #0a0b0c"></div>
<div class="abs" style="left:315px;top:725.00px;width:1598px;height:90.55px;background:#191c1f;border-top:1.6px solid #0a0b0c"></div>
<div class="abs" style="left:301px;top:0;width:14px;height:755px;background:#000"></div>
<div class="abs" style="left:386.64px;top:2.20px;width:70.64px;height:88.95px;background:linear-gradient(90deg,rgba(70,190,200,0.014),rgba(70,190,200,0.035) 30%,rgba(70,190,200,0.032))"></div>
<div class="abs" style="left:386.64px;top:92.75px;width:70.64px;height:88.95px;background:linear-gradient(90deg,rgba(255,255,255,0.007),rgba(255,255,255,0.017) 30%,rgba(255,255,255,0.015))"></div>
<div class="abs" style="left:386.64px;top:183.30px;width:70.64px;height:88.95px;background:linear-gradient(90deg,rgba(255,255,255,0.007),rgba(255,255,255,0.017) 30%,rgba(255,255,255,0.015))"></div>
<div class="abs" style="left:386.64px;top:273.85px;width:70.64px;height:88.95px;background:linear-gradient(90deg,rgba(255,255,255,0.007),rgba(255,255,255,0.017) 30%,rgba(255,255,255,0.015))"></div>
<div class="abs" style="left:386.64px;top:364.40px;width:70.64px;height:88.95px;background:linear-gradient(90deg,rgba(255,255,255,0.007),rgba(255,255,255,0.017) 30%,rgba(255,255,255,0.015))"></div>
<div class="abs" style="left:386.64px;top:454.95px;width:70.64px;height:88.95px;background:linear-gradient(90deg,rgba(255,255,255,0.007),rgba(255,255,255,0.017) 30%,rgba(255,255,255,0.015))"></div>
<div class="abs" style="left:386.64px;top:545.50px;width:70.64px;height:88.95px;background:linear-gradient(90deg,rgba(255,255,255,0.007),rgba(255,255,255,0.017) 30%,rgba(255,255,255,0.015))"></div>
<div class="abs" style="left:386.64px;top:636.05px;width:70.64px;height:88.95px;background:linear-gradient(90deg,rgba(255,255,255,0.007),rgba(255,255,255,0.017) 30%,rgba(255,255,255,0.015))"></div>
<div class="abs" style="left:386.64px;top:726.60px;width:70.64px;height:88.95px;background:linear-gradient(90deg,rgba(255,255,255,0.007),rgba(255,255,255,0.017) 30%,rgba(255,255,255,0.015))"></div>
<div class="abs" style="left:527.92px;top:2.20px;width:70.64px;height:88.95px;background:linear-gradient(90deg,rgba(70,190,200,0.014),rgba(70,190,200,0.035) 30%,rgba(70,190,200,0.032))"></div>
<div class="abs" style="left:527.92px;top:92.75px;width:70.64px;height:88.95px;background:linear-gradient(90deg,rgba(255,255,255,0.007),rgba(255,255,255,0.017) 30%,rgba(255,255,255,0.015))"></div>
<div class="abs" style="left:527.92px;top:183.30px;width:70.64px;height:88.95px;background:linear-gradient(90deg,rgba(255,255,255,0.007),rgba(255,255,255,0.017) 30%,rgba(255,255,255,0.015))"></div>
<div class="abs" style="left:527.92px;top:273.85px;width:70.64px;height:88.95px;background:linear-gradient(90deg,rgba(255,255,255,0.007),rgba(255,255,255,0.017) 30%,rgba(255,255,255,0.015))"></div>
<div class="abs" style="left:527.92px;top:364.40px;width:70.64px;height:88.95px;background:linear-gradient(90deg,rgba(255,255,255,0.007),rgba(255,255,255,0.017) 30%,rgba(255,255,255,0.015))"></div>
<div class="abs" style="left:527.92px;top:454.95px;width:70.64px;height:88.95px;background:linear-gradient(90deg,rgba(255,255,255,0.007),rgba(255,255,255,0.017) 30%,rgba(255,255,255,0.015))"></div>
<div class="abs" style="left:527.92px;top:545.50px;width:70.64px;height:88.95px;background:linear-gradient(90deg,rgba(255,255,255,0.007),rgba(255,255,255,0.017) 30%,rgba(255,255,255,0.015))"></div>
<div class="abs" style="left:527.92px;top:636.05px;width:70.64px;height:88.95px;background:linear-gradient(90deg,rgba(255,255,255,0.007),rgba(255,255,255,0.017) 30%,rgba(255,255,255,0.015))"></div>
<div class="abs" style="left:527.92px;top:726.60px;width:70.64px;height:88.95px;background:linear-gradient(90deg,rgba(255,255,255,0.007),rgba(255,255,255,0.017) 30%,rgba(255,255,255,0.015))"></div>
<div class="abs" style="left:669.20px;top:2.20px;width:70.64px;height:88.95px;background:linear-gradient(90deg,rgba(70,190,200,0.014),rgba(70,190,200,0.035) 30%,rgba(70,190,200,0.032))"></div>
<div class="abs" style="left:669.20px;top:92.75px;width:70.64px;height:88.95px;background:linear-gradient(90deg,rgba(255,255,255,0.007),rgba(255,255,255,0.017) 30%,rgba(255,255,255,0.015))"></div>
<div class="abs" style="left:669.20px;top:183.30px;width:70.64px;height:88.95px;background:linear-gradient(90deg,rgba(255,255,255,0.007),rgba(255,255,255,0.017) 30%,rgba(255,255,255,0.015))"></div>
<div class="abs" style="left:669.20px;top:273.85px;width:70.64px;height:88.95px;background:linear-gradient(90deg,rgba(255,255,255,0.007),rgba(255,255,255,0.017) 30%,rgba(255,255,255,0.015))"></div>
<div class="abs" style="left:669.20px;top:364.40px;width:70.64px;height:88.95px;background:linear-gradient(90deg,rgba(255,255,255,0.007),rgba(255,255,255,0.017) 30%,rgba(255,255,255,0.015))"></div>
<div class="abs" style="left:669.20px;top:454.95px;width:70.64px;height:88.95px;background:linear-gradient(90deg,rgba(255,255,255,0.007),rgba(255,255,255,0.017) 30%,rgba(255,255,255,0.015))"></div>
<div class="abs" style="left:669.20px;top:545.50px;width:70.64px;height:88.95px;background:linear-gradient(90deg,rgba(255,255,255,0.007),rgba(255,255,255,0.017) 30%,rgba(255,255,255,0.015))"></div>
<div class="abs" style="left:669.20px;top:636.05px;width:70.64px;height:88.95px;background:linear-gradient(90deg,rgba(255,255,255,0.007),rgba(255,255,255,0.017) 30%,rgba(255,255,255,0.015))"></div>
<div class="abs" style="left:669.20px;top:726.60px;width:70.64px;height:88.95px;background:linear-gradient(90deg,rgba(255,255,255,0.007),rgba(255,255,255,0.017) 30%,rgba(255,255,255,0.015))"></div>
<div class="abs" style="left:810.48px;top:2.20px;width:70.64px;height:88.95px;background:linear-gradient(90deg,rgba(70,190,200,0.014),rgba(70,190,200,0.035) 30%,rgba(70,190,200,0.032))"></div>
<div class="abs" style="left:810.48px;top:92.75px;width:70.64px;height:88.95px;background:linear-gradient(90deg,rgba(255,255,255,0.007),rgba(255,255,255,0.017) 30%,rgba(255,255,255,0.015))"></div>
<div class="abs" style="left:810.48px;top:183.30px;width:70.64px;height:88.95px;background:linear-gradient(90deg,rgba(255,255,255,0.007),rgba(255,255,255,0.017) 30%,rgba(255,255,255,0.015))"></div>
<div class="abs" style="left:810.48px;top:273.85px;width:70.64px;height:88.95px;background:linear-gradient(90deg,rgba(255,255,255,0.007),rgba(255,255,255,0.017) 30%,rgba(255,255,255,0.015))"></div>
<div class="abs" style="left:810.48px;top:364.40px;width:70.64px;height:88.95px;background:linear-gradient(90deg,rgba(255,255,255,0.007),rgba(255,255,255,0.017) 30%,rgba(255,255,255,0.015))"></div>
<div class="abs" style="left:810.48px;top:454.95px;width:70.64px;height:88.95px;background:linear-gradient(90deg,rgba(255,255,255,0.007),rgba(255,255,255,0.017) 30%,rgba(255,255,255,0.015))"></div>
<div class="abs" style="left:810.48px;top:545.50px;width:70.64px;height:88.95px;background:linear-gradient(90deg,rgba(255,255,255,0.007),rgba(255,255,255,0.017) 30%,rgba(255,255,255,0.015))"></div>
<div class="abs" style="left:810.48px;top:636.05px;width:70.64px;height:88.95px;background:linear-gradient(90deg,rgba(255,255,255,0.007),rgba(255,255,255,0.017) 30%,rgba(255,255,255,0.015))"></div>
<div class="abs" style="left:810.48px;top:726.60px;width:70.64px;height:88.95px;background:linear-gradient(90deg,rgba(255,255,255,0.007),rgba(255,255,255,0.017) 30%,rgba(255,255,255,0.015))"></div>
<div class="abs" style="left:951.76px;top:2.20px;width:70.64px;height:88.95px;background:linear-gradient(90deg,rgba(70,190,200,0.014),rgba(70,190,200,0.035) 30%,rgba(70,190,200,0.032))"></div>
<div class="abs" style="left:951.76px;top:92.75px;width:70.64px;height:88.95px;background:linear-gradient(90deg,rgba(255,255,255,0.007),rgba(255,255,255,0.017) 30%,rgba(255,255,255,0.015))"></div>
<div class="abs" style="left:951.76px;top:183.30px;width:70.64px;height:88.95px;background:linear-gradient(90deg,rgba(255,255,255,0.007),rgba(255,255,255,0.017) 30%,rgba(255,255,255,0.015))"></div>
<div class="abs" style="left:951.76px;top:273.85px;width:70.64px;height:88.95px;background:linear-gradient(90deg,rgba(255,255,255,0.007),rgba(255,255,255,0.017) 30%,rgba(255,255,255,0.015))"></div>
<div class="abs" style="left:951.76px;top:364.40px;width:70.64px;height:88.95px;background:linear-gradient(90deg,rgba(255,255,255,0.007),rgba(255,255,255,0.017) 30%,rgba(255,255,255,0.015))"></div>
<div class="abs" style="left:951.76px;top:454.95px;width:70.64px;height:88.95px;background:linear-gradient(90deg,rgba(255,255,255,0.007),rgba(255,255,255,0.017) 30%,rgba(255,255,255,0.015))"></div>
<div class="abs" style="left:951.76px;top:545.50px;width:70.64px;height:88.95px;background:linear-gradient(90deg,rgba(255,255,255,0.007),rgba(255,255,255,0.017) 30%,rgba(255,255,255,0.015))"></div>
<div class="abs" style="left:951.76px;top:636.05px;width:70.64px;height:88.95px;background:linear-gradient(90deg,rgba(255,255,255,0.007),rgba(255,255,255,0.017) 30%,rgba(255,255,255,0.015))"></div>
<div class="abs" style="left:951.76px;top:726.60px;width:70.64px;height:88.95px;background:linear-gradient(90deg,rgba(255,255,255,0.007),rgba(255,255,255,0.017) 30%,rgba(255,255,255,0.015))"></div>
<div class="abs" style="left:1093.04px;top:2.20px;width:70.64px;height:88.95px;background:linear-gradient(90deg,rgba(70,190,200,0.014),rgba(70,190,200,0.035) 30%,rgba(70,190,200,0.032))"></div>
<div class="abs" style="left:1093.04px;top:92.75px;width:70.64px;height:88.95px;background:linear-gradient(90deg,rgba(255,255,255,0.007),rgba(255,255,255,0.017) 30%,rgba(255,255,255,0.015))"></div>
<div class="abs" style="left:1093.04px;top:183.30px;width:70.64px;height:88.95px;background:linear-gradient(90deg,rgba(255,255,255,0.007),rgba(255,255,255,0.017) 30%,rgba(255,255,255,0.015))"></div>
<div class="abs" style="left:1093.04px;top:273.85px;width:70.64px;height:88.95px;background:linear-gradient(90deg,rgba(255,255,255,0.007),rgba(255,255,255,0.017) 30%,rgba(255,255,255,0.015))"></div>
<div class="abs" style="left:1093.04px;top:364.40px;width:70.64px;height:88.95px;background:linear-gradient(90deg,rgba(255,255,255,0.007),rgba(255,255,255,0.017) 30%,rgba(255,255,255,0.015))"></div>
<div class="abs" style="left:1093.04px;top:454.95px;width:70.64px;height:88.95px;background:linear-gradient(90deg,rgba(255,255,255,0.007),rgba(255,255,255,0.017) 30%,rgba(255,255,255,0.015))"></div>
<div class="abs" style="left:1093.04px;top:545.50px;width:70.64px;height:88.95px;background:linear-gradient(90deg,rgba(255,255,255,0.007),rgba(255,255,255,0.017) 30%,rgba(255,255,255,0.015))"></div>
<div class="abs" style="left:1093.04px;top:636.05px;width:70.64px;height:88.95px;background:linear-gradient(90deg,rgba(255,255,255,0.007),rgba(255,255,255,0.017) 30%,rgba(255,255,255,0.015))"></div>
<div class="abs" style="left:1093.04px;top:726.60px;width:70.64px;height:88.95px;background:linear-gradient(90deg,rgba(255,255,255,0.007),rgba(255,255,255,0.017) 30%,rgba(255,255,255,0.015))"></div>
<div class="abs" style="left:1234.32px;top:2.20px;width:70.64px;height:88.95px;background:linear-gradient(90deg,rgba(70,190,200,0.014),rgba(70,190,200,0.035) 30%,rgba(70,190,200,0.032))"></div>
<div class="abs" style="left:1234.32px;top:92.75px;width:70.64px;height:88.95px;background:linear-gradient(90deg,rgba(255,255,255,0.007),rgba(255,255,255,0.017) 30%,rgba(255,255,255,0.015))"></div>
<div class="abs" style="left:1234.32px;top:183.30px;width:70.64px;height:88.95px;background:linear-gradient(90deg,rgba(255,255,255,0.007),rgba(255,255,255,0.017) 30%,rgba(255,255,255,0.015))"></div>
<div class="abs" style="left:1234.32px;top:273.85px;width:70.64px;height:88.95px;background:linear-gradient(90deg,rgba(255,255,255,0.007),rgba(255,255,255,0.017) 30%,rgba(255,255,255,0.015))"></div>
<div class="abs" style="left:1234.32px;top:364.40px;width:70.64px;height:88.95px;background:linear-gradient(90deg,rgba(255,255,255,0.007),rgba(255,255,255,0.017) 30%,rgba(255,255,255,0.015))"></div>
<div class="abs" style="left:1234.32px;top:454.95px;width:70.64px;height:88.95px;background:linear-gradient(90deg,rgba(255,255,255,0.007),rgba(255,255,255,0.017) 30%,rgba(255,255,255,0.015))"></div>
<div class="abs" style="left:1234.32px;top:545.50px;width:70.64px;height:88.95px;background:linear-gradient(90deg,rgba(255,255,255,0.007),rgba(255,255,255,0.017) 30%,rgba(255,255,255,0.015))"></div>
<div class="abs" style="left:1234.32px;top:636.05px;width:70.64px;height:88.95px;background:linear-gradient(90deg,rgba(255,255,255,0.007),rgba(255,255,255,0.017) 30%,rgba(255,255,255,0.015))"></div>
<div class="abs" style="left:1234.32px;top:726.60px;width:70.64px;height:88.95px;background:linear-gradient(90deg,rgba(255,255,255,0.007),rgba(255,255,255,0.017) 30%,rgba(255,255,255,0.015))"></div>
<div class="abs" style="left:1375.60px;top:2.20px;width:70.64px;height:88.95px;background:linear-gradient(90deg,rgba(70,190,200,0.014),rgba(70,190,200,0.035) 30%,rgba(70,190,200,0.032))"></div>
<div class="abs" style="left:1375.60px;top:92.75px;width:70.64px;height:88.95px;background:linear-gradient(90deg,rgba(255,255,255,0.007),rgba(255,255,255,0.017) 30%,rgba(255,255,255,0.015))"></div>
<div class="abs" style="left:1375.60px;top:183.30px;width:70.64px;height:88.95px;background:linear-gradient(90deg,rgba(255,255,255,0.007),rgba(255,255,255,0.017) 30%,rgba(255,255,255,0.015))"></div>
<div class="abs" style="left:1375.60px;top:273.85px;width:70.64px;height:88.95px;background:linear-gradient(90deg,rgba(255,255,255,0.007),rgba(255,255,255,0.017) 30%,rgba(255,255,255,0.015))"></div>
<div class="abs" style="left:1375.60px;top:364.40px;width:70.64px;height:88.95px;background:linear-gradient(90deg,rgba(255,255,255,0.007),rgba(255,255,255,0.017) 30%,rgba(255,255,255,0.015))"></div>
<div class="abs" style="left:1375.60px;top:454.95px;width:70.64px;height:88.95px;background:linear-gradient(90deg,rgba(255,255,255,0.007),rgba(255,255,255,0.017) 30%,rgba(255,255,255,0.015))"></div>
<div class="abs" style="left:1375.60px;top:545.50px;width:70.64px;height:88.95px;background:linear-gradient(90deg,rgba(255,255,255,0.007),rgba(255,255,255,0.017) 30%,rgba(255,255,255,0.015))"></div>
<div class="abs" style="left:1375.60px;top:636.05px;width:70.64px;height:88.95px;background:linear-gradient(90deg,rgba(255,255,255,0.007),rgba(255,255,255,0.017) 30%,rgba(255,255,255,0.015))"></div>
<div class="abs" style="left:1375.60px;top:726.60px;width:70.64px;height:88.95px;background:linear-gradient(90deg,rgba(255,255,255,0.007),rgba(255,255,255,0.017) 30%,rgba(255,255,255,0.015))"></div>
<div class="abs" style="left:1516.88px;top:2.20px;width:70.64px;height:88.95px;background:linear-gradient(90deg,rgba(70,190,200,0.014),rgba(70,190,200,0.035) 30%,rgba(70,190,200,0.032))"></div>
<div class="abs" style="left:1516.88px;top:92.75px;width:70.64px;height:88.95px;background:linear-gradient(90deg,rgba(255,255,255,0.007),rgba(255,255,255,0.017) 30%,rgba(255,255,255,0.015))"></div>
<div class="abs" style="left:1516.88px;top:183.30px;width:70.64px;height:88.95px;background:linear-gradient(90deg,rgba(255,255,255,0.007),rgba(255,255,255,0.017) 30%,rgba(255,255,255,0.015))"></div>
<div class="abs" style="left:1516.88px;top:273.85px;width:70.64px;height:88.95px;background:linear-gradient(90deg,rgba(255,255,255,0.007),rgba(255,255,255,0.017) 30%,rgba(255,255,255,0.015))"></div>
<div class="abs" style="left:1516.88px;top:364.40px;width:70.64px;height:88.95px;background:linear-gradient(90deg,rgba(255,255,255,0.007),rgba(255,255,255,0.017) 30%,rgba(255,255,255,0.015))"></div>
<div class="abs" style="left:1516.88px;top:454.95px;width:70.64px;height:88.95px;background:linear-gradient(90deg,rgba(255,255,255,0.007),rgba(255,255,255,0.017) 30%,rgba(255,255,255,0.015))"></div>
<div class="abs" style="left:1516.88px;top:545.50px;width:70.64px;height:88.95px;background:linear-gradient(90deg,rgba(255,255,255,0.007),rgba(255,255,255,0.017) 30%,rgba(255,255,255,0.015))"></div>
<div class="abs" style="left:1516.88px;top:636.05px;width:70.64px;height:88.95px;background:linear-gradient(90deg,rgba(255,255,255,0.007),rgba(255,255,255,0.017) 30%,rgba(255,255,255,0.015))"></div>
<div class="abs" style="left:1516.88px;top:726.60px;width:70.64px;height:88.95px;background:linear-gradient(90deg,rgba(255,255,255,0.007),rgba(255,255,255,0.017) 30%,rgba(255,255,255,0.015))"></div>
<div class="abs" style="left:1658.16px;top:2.20px;width:70.64px;height:88.95px;background:linear-gradient(90deg,rgba(70,190,200,0.014),rgba(70,190,200,0.035) 30%,rgba(70,190,200,0.032))"></div>
<div class="abs" style="left:1658.16px;top:92.75px;width:70.64px;height:88.95px;background:linear-gradient(90deg,rgba(255,255,255,0.007),rgba(255,255,255,0.017) 30%,rgba(255,255,255,0.015))"></div>
<div class="abs" style="left:1658.16px;top:183.30px;width:70.64px;height:88.95px;background:linear-gradient(90deg,rgba(255,255,255,0.007),rgba(255,255,255,0.017) 30%,rgba(255,255,255,0.015))"></div>
<div class="abs" style="left:1658.16px;top:273.85px;width:70.64px;height:88.95px;background:linear-gradient(90deg,rgba(255,255,255,0.007),rgba(255,255,255,0.017) 30%,rgba(255,255,255,0.015))"></div>
<div class="abs" style="left:1658.16px;top:364.40px;width:70.64px;height:88.95px;background:linear-gradient(90deg,rgba(255,255,255,0.007),rgba(255,255,255,0.017) 30%,rgba(255,255,255,0.015))"></div>
<div class="abs" style="left:1658.16px;top:454.95px;width:70.64px;height:88.95px;background:linear-gradient(90deg,rgba(255,255,255,0.007),rgba(255,255,255,0.017) 30%,rgba(255,255,255,0.015))"></div>
<div class="abs" style="left:1658.16px;top:545.50px;width:70.64px;height:88.95px;background:linear-gradient(90deg,rgba(255,255,255,0.007),rgba(255,255,255,0.017) 30%,rgba(255,255,255,0.015))"></div>
<div class="abs" style="left:1658.16px;top:636.05px;width:70.64px;height:88.95px;background:linear-gradient(90deg,rgba(255,255,255,0.007),rgba(255,255,255,0.017) 30%,rgba(255,255,255,0.015))"></div>
<div class="abs" style="left:1658.16px;top:726.60px;width:70.64px;height:88.95px;background:linear-gradient(90deg,rgba(255,255,255,0.007),rgba(255,255,255,0.017) 30%,rgba(255,255,255,0.015))"></div>
<div class="abs" style="left:1799.44px;top:2.20px;width:70.64px;height:88.95px;background:linear-gradient(90deg,rgba(70,190,200,0.014),rgba(70,190,200,0.035) 30%,rgba(70,190,200,0.032))"></div>
<div class="abs" style="left:1799.44px;top:92.75px;width:70.64px;height:88.95px;background:linear-gradient(90deg,rgba(255,255,255,0.007),rgba(255,255,255,0.017) 30%,rgba(255,255,255,0.015))"></div>
<div class="abs" style="left:1799.44px;top:183.30px;width:70.64px;height:88.95px;background:linear-gradient(90deg,rgba(255,255,255,0.007),rgba(255,255,255,0.017) 30%,rgba(255,255,255,0.015))"></div>
<div class="abs" style="left:1799.44px;top:273.85px;width:70.64px;height:88.95px;background:linear-gradient(90deg,rgba(255,255,255,0.007),rgba(255,255,255,0.017) 30%,rgba(255,255,255,0.015))"></div>
<div class="abs" style="left:1799.44px;top:364.40px;width:70.64px;height:88.95px;background:linear-gradient(90deg,rgba(255,255,255,0.007),rgba(255,255,255,0.017) 30%,rgba(255,255,255,0.015))"></div>
<div class="abs" style="left:1799.44px;top:454.95px;width:70.64px;height:88.95px;background:linear-gradient(90deg,rgba(255,255,255,0.007),rgba(255,255,255,0.017) 30%,rgba(255,255,255,0.015))"></div>
<div class="abs" style="left:1799.44px;top:545.50px;width:70.64px;height:88.95px;background:linear-gradient(90deg,rgba(255,255,255,0.007),rgba(255,255,255,0.017) 30%,rgba(255,255,255,0.015))"></div>
<div class="abs" style="left:1799.44px;top:636.05px;width:70.64px;height:88.95px;background:linear-gradient(90deg,rgba(255,255,255,0.007),rgba(255,255,255,0.017) 30%,rgba(255,255,255,0.015))"></div>
<div class="abs" style="left:1799.44px;top:726.60px;width:70.64px;height:88.95px;background:linear-gradient(90deg,rgba(255,255,255,0.007),rgba(255,255,255,0.017) 30%,rgba(255,255,255,0.015))"></div>
<div class="abs" style="left:333.66px;top:0;width:1px;height:755px;background:rgba(255,255,255,0.03)"></div>
<div class="abs" style="left:351.32px;top:0;width:1px;height:755px;background:rgba(255,255,255,0.03)"></div>
<div class="abs" style="left:368.98px;top:0;width:1px;height:755px;background:rgba(255,255,255,0.03)"></div>
<div class="abs" style="left:386.64px;top:0;width:1px;height:755px;background:rgba(255,255,255,0.045)"></div>
<div class="abs" style="left:404.30px;top:0;width:1px;height:755px;background:rgba(255,255,255,0.03)"></div>
<div class="abs" style="left:421.96px;top:0;width:1px;height:755px;background:rgba(255,255,255,0.03)"></div>
<div class="abs" style="left:439.62px;top:0;width:1px;height:755px;background:rgba(255,255,255,0.03)"></div>
<div class="abs" style="left:457.28px;top:0;width:1px;height:755px;background:rgba(255,255,255,0.045)"></div>
<div class="abs" style="left:474.94px;top:0;width:1px;height:755px;background:rgba(255,255,255,0.03)"></div>
<div class="abs" style="left:492.60px;top:0;width:1px;height:755px;background:rgba(255,255,255,0.03)"></div>
<div class="abs" style="left:510.26px;top:0;width:1px;height:755px;background:rgba(255,255,255,0.03)"></div>
<div class="abs" style="left:527.92px;top:0;width:1px;height:755px;background:rgba(255,255,255,0.045)"></div>
<div class="abs" style="left:545.58px;top:0;width:1px;height:755px;background:rgba(255,255,255,0.03)"></div>
<div class="abs" style="left:563.24px;top:0;width:1px;height:755px;background:rgba(255,255,255,0.03)"></div>
<div class="abs" style="left:580.90px;top:0;width:1px;height:755px;background:rgba(255,255,255,0.03)"></div>
<div class="abs" style="left:598.56px;top:0;width:1px;height:755px;background:rgba(255,255,255,0.045)"></div>
<div class="abs" style="left:616.22px;top:0;width:1px;height:755px;background:rgba(255,255,255,0.03)"></div>
<div class="abs" style="left:633.88px;top:0;width:1px;height:755px;background:rgba(255,255,255,0.03)"></div>
<div class="abs" style="left:651.54px;top:0;width:1px;height:755px;background:rgba(255,255,255,0.03)"></div>
<div class="abs" style="left:669.20px;top:0;width:1px;height:755px;background:rgba(255,255,255,0.045)"></div>
<div class="abs" style="left:686.86px;top:0;width:1px;height:755px;background:rgba(255,255,255,0.03)"></div>
<div class="abs" style="left:704.52px;top:0;width:1px;height:755px;background:rgba(255,255,255,0.03)"></div>
<div class="abs" style="left:722.18px;top:0;width:1px;height:755px;background:rgba(255,255,255,0.03)"></div>
<div class="abs" style="left:739.84px;top:0;width:1px;height:755px;background:rgba(255,255,255,0.045)"></div>
<div class="abs" style="left:757.50px;top:0;width:1px;height:755px;background:rgba(255,255,255,0.03)"></div>
<div class="abs" style="left:775.16px;top:0;width:1px;height:755px;background:rgba(255,255,255,0.03)"></div>
<div class="abs" style="left:792.82px;top:0;width:1px;height:755px;background:rgba(255,255,255,0.03)"></div>
<div class="abs" style="left:810.48px;top:0;width:1px;height:755px;background:rgba(255,255,255,0.045)"></div>
<div class="abs" style="left:828.14px;top:0;width:1px;height:755px;background:rgba(255,255,255,0.03)"></div>
<div class="abs" style="left:845.80px;top:0;width:1px;height:755px;background:rgba(255,255,255,0.03)"></div>
<div class="abs" style="left:863.46px;top:0;width:1px;height:755px;background:rgba(255,255,255,0.03)"></div>
<div class="abs" style="left:881.12px;top:0;width:1px;height:755px;background:rgba(255,255,255,0.045)"></div>
<div class="abs" style="left:898.78px;top:0;width:1px;height:755px;background:rgba(255,255,255,0.03)"></div>
<div class="abs" style="left:916.44px;top:0;width:1px;height:755px;background:rgba(255,255,255,0.03)"></div>
<div class="abs" style="left:934.10px;top:0;width:1px;height:755px;background:rgba(255,255,255,0.03)"></div>
<div class="abs" style="left:951.76px;top:0;width:1px;height:755px;background:rgba(255,255,255,0.045)"></div>
<div class="abs" style="left:969.42px;top:0;width:1px;height:755px;background:rgba(255,255,255,0.03)"></div>
<div class="abs" style="left:987.08px;top:0;width:1px;height:755px;background:rgba(255,255,255,0.03)"></div>
<div class="abs" style="left:1004.74px;top:0;width:1px;height:755px;background:rgba(255,255,255,0.03)"></div>
<div class="abs" style="left:1022.40px;top:0;width:1px;height:755px;background:rgba(255,255,255,0.045)"></div>
<div class="abs" style="left:1040.06px;top:0;width:1px;height:755px;background:rgba(255,255,255,0.03)"></div>
<div class="abs" style="left:1057.72px;top:0;width:1px;height:755px;background:rgba(255,255,255,0.03)"></div>
<div class="abs" style="left:1075.38px;top:0;width:1px;height:755px;background:rgba(255,255,255,0.03)"></div>
<div class="abs" style="left:1093.04px;top:0;width:1px;height:755px;background:rgba(255,255,255,0.045)"></div>
<div class="abs" style="left:1110.70px;top:0;width:1px;height:755px;background:rgba(255,255,255,0.03)"></div>
<div class="abs" style="left:1128.36px;top:0;width:1px;height:755px;background:rgba(255,255,255,0.03)"></div>
<div class="abs" style="left:1146.02px;top:0;width:1px;height:755px;background:rgba(255,255,255,0.03)"></div>
<div class="abs" style="left:1163.68px;top:0;width:1px;height:755px;background:rgba(255,255,255,0.045)"></div>
<div class="abs" style="left:1181.34px;top:0;width:1px;height:755px;background:rgba(255,255,255,0.03)"></div>
<div class="abs" style="left:1199.00px;top:0;width:1px;height:755px;background:rgba(255,255,255,0.03)"></div>
<div class="abs" style="left:1216.66px;top:0;width:1px;height:755px;background:rgba(255,255,255,0.03)"></div>
<div class="abs" style="left:1234.32px;top:0;width:1px;height:755px;background:rgba(255,255,255,0.045)"></div>
<div class="abs" style="left:1251.98px;top:0;width:1px;height:755px;background:rgba(255,255,255,0.03)"></div>
<div class="abs" style="left:1269.64px;top:0;width:1px;height:755px;background:rgba(255,255,255,0.03)"></div>
<div class="abs" style="left:1287.30px;top:0;width:1px;height:755px;background:rgba(255,255,255,0.03)"></div>
<div class="abs" style="left:1304.96px;top:0;width:1px;height:755px;background:rgba(255,255,255,0.045)"></div>
<div class="abs" style="left:1322.62px;top:0;width:1px;height:755px;background:rgba(255,255,255,0.03)"></div>
<div class="abs" style="left:1340.28px;top:0;width:1px;height:755px;background:rgba(255,255,255,0.03)"></div>
<div class="abs" style="left:1357.94px;top:0;width:1px;height:755px;background:rgba(255,255,255,0.03)"></div>
<div class="abs" style="left:1375.60px;top:0;width:1px;height:755px;background:rgba(255,255,255,0.045)"></div>
<div class="abs" style="left:1393.26px;top:0;width:1px;height:755px;background:rgba(255,255,255,0.03)"></div>
<div class="abs" style="left:1410.92px;top:0;width:1px;height:755px;background:rgba(255,255,255,0.03)"></div>
<div class="abs" style="left:1428.58px;top:0;width:1px;height:755px;background:rgba(255,255,255,0.03)"></div>
<div class="abs" style="left:1446.24px;top:0;width:1px;height:755px;background:rgba(255,255,255,0.045)"></div>
<div class="abs" style="left:1463.90px;top:0;width:1px;height:755px;background:rgba(255,255,255,0.03)"></div>
<div class="abs" style="left:1481.56px;top:0;width:1px;height:755px;background:rgba(255,255,255,0.03)"></div>
<div class="abs" style="left:1499.22px;top:0;width:1px;height:755px;background:rgba(255,255,255,0.03)"></div>
<div class="abs" style="left:1516.88px;top:0;width:1px;height:755px;background:rgba(255,255,255,0.045)"></div>
<div class="abs" style="left:1534.54px;top:0;width:1px;height:755px;background:rgba(255,255,255,0.03)"></div>
<div class="abs" style="left:1552.20px;top:0;width:1px;height:755px;background:rgba(255,255,255,0.03)"></div>
<div class="abs" style="left:1569.86px;top:0;width:1px;height:755px;background:rgba(255,255,255,0.03)"></div>
<div class="abs" style="left:1587.52px;top:0;width:1px;height:755px;background:rgba(255,255,255,0.045)"></div>
<div class="abs" style="left:1605.18px;top:0;width:1px;height:755px;background:rgba(255,255,255,0.03)"></div>
<div class="abs" style="left:1622.84px;top:0;width:1px;height:755px;background:rgba(255,255,255,0.03)"></div>
<div class="abs" style="left:1640.50px;top:0;width:1px;height:755px;background:rgba(255,255,255,0.03)"></div>
<div class="abs" style="left:1658.16px;top:0;width:1px;height:755px;background:rgba(255,255,255,0.045)"></div>
<div class="abs" style="left:1675.82px;top:0;width:1px;height:755px;background:rgba(255,255,255,0.03)"></div>
<div class="abs" style="left:1693.48px;top:0;width:1px;height:755px;background:rgba(255,255,255,0.03)"></div>
<div class="abs" style="left:1711.14px;top:0;width:1px;height:755px;background:rgba(255,255,255,0.03)"></div>
<div class="abs" style="left:1728.80px;top:0;width:1px;height:755px;background:rgba(255,255,255,0.045)"></div>
<div class="abs" style="left:1746.46px;top:0;width:1px;height:755px;background:rgba(255,255,255,0.03)"></div>
<div class="abs" style="left:1764.12px;top:0;width:1px;height:755px;background:rgba(255,255,255,0.03)"></div>
<div class="abs" style="left:1781.78px;top:0;width:1px;height:755px;background:rgba(255,255,255,0.03)"></div>
<div class="abs" style="left:1799.44px;top:0;width:1px;height:755px;background:rgba(255,255,255,0.045)"></div>
<div class="abs" style="left:1817.10px;top:0;width:1px;height:755px;background:rgba(255,255,255,0.03)"></div>
<div class="abs" style="left:1834.76px;top:0;width:1px;height:755px;background:rgba(255,255,255,0.03)"></div>
<div class="abs" style="left:1852.42px;top:0;width:1px;height:755px;background:rgba(255,255,255,0.03)"></div>
<div class="abs" style="left:1870.08px;top:0;width:1px;height:755px;background:rgba(255,255,255,0.045)"></div>
<div class="abs" style="left:1887.74px;top:0;width:1px;height:755px;background:rgba(255,255,255,0.03)"></div>
<div class="abs" style="left:1905.40px;top:0;width:1px;height:755px;background:rgba(255,255,255,0.03)"></div>
<div class="abs" style="left:297.8px;top:2.20px;width:3.2px;height:88.95px;background:#1ec3d3"></div>
<svg style="left:4.7px;top:9.20px" width="13" height="17" viewBox="0 0 13 17">
<rect x="3.6" y="0.6" width="5.2" height="10.2" rx="2.6" fill="none" stroke="#1fb3c2" stroke-width="1.4"/>
<path d="M0.7 8.2 A5.5 4.6 0 0 0 11.7 8.2 M6.2 12.8 V15.8" fill="none" stroke="#1fb3c2" stroke-width="1.4" stroke-linecap="round"/>
</svg>
<div class="t" style="left:28.20px;top:9.66px;font-size:14.11px;font-weight:bold;color:#fff;;transform:scaleX(0.9907);transform-origin:0 0">03</div>
<div class="t" style="left:52.90px;top:9.66px;font-size:14.11px;font-weight:bold;color:#fff;;transform:scaleX(0.8643);transform-origin:0 0">ATS_174_Eb_Wind ...</div>
<div class="abs" style="left:196.2px;top:10.70px;width:2.6px;height:2.6px;border-radius:50%;background:#e0e0e0"></div>
<div class="abs" style="left:196.2px;top:15.40px;width:2.6px;height:2.6px;border-radius:50%;background:#e0e0e0"></div>
<div class="abs" style="left:196.2px;top:19.90px;width:2.6px;height:2.6px;border-radius:50%;background:#e0e0e0"></div>
<div class="pill" style="left:209.6px;top:4.50px;width:55.7px;height:24.3px;background:#2c2e32"></div>
<div class="t" style="left:218.60px;top:10.12px;font-size:12.85px;font-weight:bold;color:#fff;;transform:scaleX(1.1600);transform-origin:0 0">M</div>
<div class="t" style="left:246.90px;top:10.12px;font-size:12.85px;font-weight:bold;color:#fff;;transform:scaleX(0.8667);transform-origin:0 0">S</div>
<div class="abs" style="left:270.4px;top:6.10px;width:21.5px;height:21.5px;border-radius:50%;background:#2c2e32"></div>
<svg style="left:274.5px;top:13.30px" width="13" height="8" viewBox="0 0 13 8">
<path d="M1 1.2 L6.5 6.5 L12 1.2" fill="none" stroke="#fff" stroke-width="1.7" stroke-linecap="round" stroke-linejoin="round"/>
</svg>
<div class="pill" style="left:23.9px;top:30.00px;width:114.1px;height:18px;background:#14bfcc"></div>
<div class="t" style="left:29.00px;top:32.51px;font-size:12.15px;font-weight:bold;color:#071a1f;-webkit-text-stroke:0.2px #071a1f;transform:scaleX(1.0489);transform-origin:0 0">Fx Personalizado</div>
<div class="abs" style="left:24px;top:66.50px;width:201px;height:2.4px;background:#27292d;border-radius:2px"></div>
<div class="abs" style="left:24px;top:66.50px;width:146.00px;height:2.4px;background:#1ec3d3;border-radius:2px"></div>
<div class="abs" style="left:165.30px;top:63.00px;width:9.4px;height:9.4px;border-radius:50%;background:#fff"></div>
<svg style="left:250.30px;top:50.80px" width="34" height="34" viewBox="0 0 34 34"><circle cx="0.40" cy="17.00" r="0.75" fill="#5d6066"/><circle cx="2.62" cy="8.70" r="0.75" fill="#5d6066"/><circle cx="8.70" cy="2.62" r="0.75" fill="#5d6066"/><circle cx="17.00" cy="0.40" r="0.75" fill="#5d6066"/><circle cx="25.30" cy="2.62" r="0.75" fill="#5d6066"/><circle cx="31.38" cy="8.70" r="0.75" fill="#5d6066"/><circle cx="33.60" cy="17.00" r="0.75" fill="#5d6066"/>
<circle cx="17" cy="17" r="12.15" fill="#ffffff"/><path d="M17 6.9 V16.2" stroke="#0c0c0c" stroke-width="2"/></svg>
<div class="t" style="left:248.00px;top:71.88px;font-size:9.36px;font-weight:normal;color:#9a9ea6;;transform:scaleX(0.9400);transform-origin:0 0">L</div>
<div class="t" style="left:281.80px;top:71.88px;font-size:9.36px;font-weight:normal;color:#9a9ea6;;transform:scaleX(0.7857);transform-origin:0 0">R</div>
<svg style="left:4.7px;top:99.75px" width="13" height="17" viewBox="0 0 13 17">
<rect x="3.6" y="0.6" width="5.2" height="10.2" rx="2.6" fill="none" stroke="#1fb3c2" stroke-width="1.4"/>
<path d="M0.7 8.2 A5.5 4.6 0 0 0 11.7 8.2 M6.2 12.8 V15.8" fill="none" stroke="#1fb3c2" stroke-width="1.4" stroke-linecap="round"/>
</svg>
<div class="t" style="left:28.20px;top:100.21px;font-size:14.11px;font-weight:bold;color:#fff;;transform:scaleX(0.9907);transform-origin:0 0">04</div>
<div class="t" style="left:52.90px;top:100.21px;font-size:14.11px;font-weight:bold;color:#fff;;transform:scaleX(0.8643);transform-origin:0 0">ATS_174_Eb_Wind ...</div>
<div class="abs" style="left:196.2px;top:101.25px;width:2.6px;height:2.6px;border-radius:50%;background:#e0e0e0"></div>
<div class="abs" style="left:196.2px;top:105.95px;width:2.6px;height:2.6px;border-radius:50%;background:#e0e0e0"></div>
<div class="abs" style="left:196.2px;top:110.45px;width:2.6px;height:2.6px;border-radius:50%;background:#e0e0e0"></div>
<div class="pill" style="left:209.6px;top:95.05px;width:55.7px;height:24.3px;background:#2c2e32"></div>
<div class="t" style="left:218.60px;top:100.67px;font-size:12.85px;font-weight:bold;color:#fff;;transform:scaleX(1.1600);transform-origin:0 0">M</div>
<div class="t" style="left:246.90px;top:100.67px;font-size:12.85px;font-weight:bold;color:#fff;;transform:scaleX(0.8667);transform-origin:0 0">S</div>
<div class="abs" style="left:270.4px;top:96.65px;width:21.5px;height:21.5px;border-radius:50%;background:#2c2e32"></div>
<svg style="left:274.5px;top:103.85px" width="13" height="8" viewBox="0 0 13 8">
<path d="M1 1.2 L6.5 6.5 L12 1.2" fill="none" stroke="#fff" stroke-width="1.7" stroke-linecap="round" stroke-linejoin="round"/>
</svg>
<div class="pill" style="left:23.9px;top:120.55px;width:114.1px;height:18px;background:#14bfcc"></div>
<div class="t" style="left:29.00px;top:123.06px;font-size:12.15px;font-weight:bold;color:#071a1f;-webkit-text-stroke:0.2px #071a1f;transform:scaleX(1.0489);transform-origin:0 0">Fx Personalizado</div>
<div class="abs" style="left:24px;top:157.05px;width:201px;height:2.4px;background:#27292d;border-radius:2px"></div>
<div class="abs" style="left:24px;top:157.05px;width:139.50px;height:2.4px;background:#8d9099;border-radius:2px"></div>
<div class="abs" style="left:158.80px;top:153.55px;width:9.4px;height:9.4px;border-radius:50%;background:#fff"></div>
<svg style="left:250.30px;top:141.35px" width="34" height="34" viewBox="0 0 34 34"><circle cx="0.40" cy="17.00" r="0.75" fill="#5d6066"/><circle cx="2.62" cy="8.70" r="0.75" fill="#5d6066"/><circle cx="8.70" cy="2.62" r="0.75" fill="#5d6066"/><circle cx="17.00" cy="0.40" r="0.75" fill="#5d6066"/><circle cx="25.30" cy="2.62" r="0.75" fill="#5d6066"/><circle cx="31.38" cy="8.70" r="0.75" fill="#5d6066"/><circle cx="33.60" cy="17.00" r="0.75" fill="#5d6066"/>
<circle cx="17" cy="17" r="12.15" fill="#9ea2ac"/><path d="M17 6.9 V16.2" stroke="#0c0c0c" stroke-width="2"/></svg>
<div class="t" style="left:248.00px;top:162.43px;font-size:9.36px;font-weight:normal;color:#9a9ea6;;transform:scaleX(0.9400);transform-origin:0 0">L</div>
<div class="t" style="left:281.80px;top:162.43px;font-size:9.36px;font-weight:normal;color:#9a9ea6;;transform:scaleX(0.7857);transform-origin:0 0">R</div>
<svg style="left:4.7px;top:190.30px" width="13" height="17" viewBox="0 0 13 17">
<rect x="3.6" y="0.6" width="5.2" height="10.2" rx="2.6" fill="none" stroke="#1fb3c2" stroke-width="1.4"/>
<path d="M0.7 8.2 A5.5 4.6 0 0 0 11.7 8.2 M6.2 12.8 V15.8" fill="none" stroke="#1fb3c2" stroke-width="1.4" stroke-linecap="round"/>
</svg>
<div class="t" style="left:28.20px;top:190.76px;font-size:14.11px;font-weight:bold;color:#fff;;transform:scaleX(0.9907);transform-origin:0 0">05</div>
<div class="t" style="left:52.90px;top:190.76px;font-size:14.11px;font-weight:bold;color:#fff;;transform:scaleX(0.8643);transform-origin:0 0">ATS_174_Eb_Wind ...</div>
<div class="abs" style="left:196.2px;top:191.80px;width:2.6px;height:2.6px;border-radius:50%;background:#e0e0e0"></div>
<div class="abs" style="left:196.2px;top:196.50px;width:2.6px;height:2.6px;border-radius:50%;background:#e0e0e0"></div>
<div class="abs" style="left:196.2px;top:201.00px;width:2.6px;height:2.6px;border-radius:50%;background:#e0e0e0"></div>
<div class="pill" style="left:209.6px;top:185.60px;width:55.7px;height:24.3px;background:#2c2e32"></div>
<div class="t" style="left:218.60px;top:191.22px;font-size:12.85px;font-weight:bold;color:#fff;;transform:scaleX(1.1600);transform-origin:0 0">M</div>
<div class="t" style="left:246.90px;top:191.22px;font-size:12.85px;font-weight:bold;color:#fff;;transform:scaleX(0.8667);transform-origin:0 0">S</div>
<div class="abs" style="left:270.4px;top:187.20px;width:21.5px;height:21.5px;border-radius:50%;background:#2c2e32"></div>
<svg style="left:274.5px;top:194.40px" width="13" height="8" viewBox="0 0 13 8">
<path d="M1 1.2 L6.5 6.5 L12 1.2" fill="none" stroke="#fff" stroke-width="1.7" stroke-linecap="round" stroke-linejoin="round"/>
</svg>
<div class="pill" style="left:23.9px;top:211.10px;width:114.1px;height:18px;background:#14bfcc"></div>
<div class="t" style="left:29.00px;top:213.61px;font-size:12.15px;font-weight:bold;color:#071a1f;-webkit-text-stroke:0.2px #071a1f;transform:scaleX(1.0489);transform-origin:0 0">Fx Personalizado</div>
<div class="abs" style="left:24px;top:247.60px;width:201px;height:2.4px;background:#27292d;border-radius:2px"></div>
<div class="abs" style="left:24px;top:247.60px;width:70.50px;height:2.4px;background:#8d9099;border-radius:2px"></div>
<div class="abs" style="left:89.80px;top:244.10px;width:9.4px;height:9.4px;border-radius:50%;background:#fff"></div>
<svg style="left:250.30px;top:231.90px" width="34" height="34" viewBox="0 0 34 34"><circle cx="0.40" cy="17.00" r="0.75" fill="#5d6066"/><circle cx="2.62" cy="8.70" r="0.75" fill="#5d6066"/><circle cx="8.70" cy="2.62" r="0.75" fill="#5d6066"/><circle cx="17.00" cy="0.40" r="0.75" fill="#5d6066"/><circle cx="25.30" cy="2.62" r="0.75" fill="#5d6066"/><circle cx="31.38" cy="8.70" r="0.75" fill="#5d6066"/><circle cx="33.60" cy="17.00" r="0.75" fill="#5d6066"/>
<circle cx="17" cy="17" r="12.15" fill="#9ea2ac"/><path d="M17 6.9 V16.2" stroke="#0c0c0c" stroke-width="2"/></svg>
<div class="t" style="left:248.00px;top:252.98px;font-size:9.36px;font-weight:normal;color:#9a9ea6;;transform:scaleX(0.9400);transform-origin:0 0">L</div>
<div class="t" style="left:281.80px;top:252.98px;font-size:9.36px;font-weight:normal;color:#9a9ea6;;transform:scaleX(0.7857);transform-origin:0 0">R</div>
<svg style="left:4.7px;top:280.85px" width="13" height="17" viewBox="0 0 13 17">
<rect x="3.6" y="0.6" width="5.2" height="10.2" rx="2.6" fill="none" stroke="#22b573" stroke-width="1.4"/>
<path d="M0.7 8.2 A5.5 4.6 0 0 0 11.7 8.2 M6.2 12.8 V15.8" fill="none" stroke="#22b573" stroke-width="1.4" stroke-linecap="round"/>
</svg>
<div class="t" style="left:28.20px;top:281.31px;font-size:14.11px;font-weight:bold;color:#fff;;transform:scaleX(0.9907);transform-origin:0 0">06</div>
<div class="t" style="left:52.90px;top:281.31px;font-size:14.11px;font-weight:bold;color:#fff;;transform:scaleX(0.9021);transform-origin:0 0">Forest_80_Cm_Dro...</div>
<div class="abs" style="left:196.2px;top:282.35px;width:2.6px;height:2.6px;border-radius:50%;background:#e0e0e0"></div>
<div class="abs" style="left:196.2px;top:287.05px;width:2.6px;height:2.6px;border-radius:50%;background:#e0e0e0"></div>
<div class="abs" style="left:196.2px;top:291.55px;width:2.6px;height:2.6px;border-radius:50%;background:#e0e0e0"></div>
<div class="pill" style="left:209.6px;top:276.15px;width:55.7px;height:24.3px;background:#2c2e32"></div>
<div class="t" style="left:218.60px;top:281.77px;font-size:12.85px;font-weight:bold;color:#fff;;transform:scaleX(1.1600);transform-origin:0 0">M</div>
<div class="t" style="left:246.90px;top:281.77px;font-size:12.85px;font-weight:bold;color:#fff;;transform:scaleX(0.8667);transform-origin:0 0">S</div>
<div class="abs" style="left:270.4px;top:277.75px;width:21.5px;height:21.5px;border-radius:50%;background:#2c2e32"></div>
<svg style="left:274.5px;top:284.95px" width="13" height="8" viewBox="0 0 13 8">
<path d="M1 1.2 L6.5 6.5 L12 1.2" fill="none" stroke="#fff" stroke-width="1.7" stroke-linecap="round" stroke-linejoin="round"/>
</svg>
<div class="pill" style="left:24.5px;top:302.65px;width:30.5px;height:16px;background:#26282c"></div>
<div class="t" style="left:28.50px;top:304.68px;font-size:12.01px;font-weight:bold;color:#fff;;transform:scaleX(0.9728);transform-origin:0 0">+ Fx</div>
<svg style="left:276px;top:304.25px" width="16" height="14" viewBox="0 0 16 14">
<path d="M0.8 12.4 H2.2 M5.6 10.6 L9.6 5 M12.8 3 H15.4" stroke="#22b573" stroke-width="1.5" stroke-linecap="round"/>
<circle cx="4.2" cy="11.6" r="1.9" fill="none" stroke="#22b573" stroke-width="1.5"/>
<circle cx="10.8" cy="3.3" r="1.9" fill="none" stroke="#22b573" stroke-width="1.5"/>
</svg>
<div class="abs" style="left:24px;top:338.15px;width:201px;height:2.4px;background:#27292d;border-radius:2px"></div>
<div class="abs" style="left:24px;top:338.15px;width:22.80px;height:2.4px;background:#8d9099;border-radius:2px"></div>
<div class="abs" style="left:42.10px;top:334.65px;width:9.4px;height:9.4px;border-radius:50%;background:#fff"></div>
<svg style="left:250.30px;top:322.45px" width="34" height="34" viewBox="0 0 34 34"><circle cx="0.40" cy="17.00" r="0.75" fill="#5d6066"/><circle cx="2.62" cy="8.70" r="0.75" fill="#5d6066"/><circle cx="8.70" cy="2.62" r="0.75" fill="#5d6066"/><circle cx="17.00" cy="0.40" r="0.75" fill="#5d6066"/><circle cx="25.30" cy="2.62" r="0.75" fill="#5d6066"/><circle cx="31.38" cy="8.70" r="0.75" fill="#5d6066"/><circle cx="33.60" cy="17.00" r="0.75" fill="#5d6066"/>
<circle cx="17" cy="17" r="12.15" fill="#9ea2ac"/><path d="M17 6.9 V16.2" stroke="#0c0c0c" stroke-width="2"/></svg>
<div class="t" style="left:248.00px;top:343.53px;font-size:9.36px;font-weight:normal;color:#9a9ea6;;transform:scaleX(0.9400);transform-origin:0 0">L</div>
<div class="t" style="left:281.80px;top:343.53px;font-size:9.36px;font-weight:normal;color:#9a9ea6;;transform:scaleX(0.7857);transform-origin:0 0">R</div>
<svg style="left:4.7px;top:371.40px" width="13" height="17" viewBox="0 0 13 17">
<rect x="3.6" y="0.6" width="5.2" height="10.2" rx="2.6" fill="none" stroke="#2f80e6" stroke-width="1.4"/>
<path d="M0.7 8.2 A5.5 4.6 0 0 0 11.7 8.2 M6.2 12.8 V15.8" fill="none" stroke="#2f80e6" stroke-width="1.4" stroke-linecap="round"/>
</svg>
<div class="t" style="left:28.20px;top:371.86px;font-size:14.11px;font-weight:bold;color:#fff;;transform:scaleX(0.9907);transform-origin:0 0">07</div>
<div class="t" style="left:52.90px;top:371.86px;font-size:14.11px;font-weight:bold;color:#fff;;transform:scaleX(0.9227);transform-origin:0 0">Street_90_Am_Dro...</div>
<div class="abs" style="left:196.2px;top:372.90px;width:2.6px;height:2.6px;border-radius:50%;background:#e0e0e0"></div>
<div class="abs" style="left:196.2px;top:377.60px;width:2.6px;height:2.6px;border-radius:50%;background:#e0e0e0"></div>
<div class="abs" style="left:196.2px;top:382.10px;width:2.6px;height:2.6px;border-radius:50%;background:#e0e0e0"></div>
<div class="pill" style="left:209.6px;top:366.70px;width:55.7px;height:24.3px;background:#2c2e32"></div>
<div class="t" style="left:218.60px;top:372.32px;font-size:12.85px;font-weight:bold;color:#fff;;transform:scaleX(1.1600);transform-origin:0 0">M</div>
<div class="t" style="left:246.90px;top:372.32px;font-size:12.85px;font-weight:bold;color:#fff;;transform:scaleX(0.8667);transform-origin:0 0">S</div>
<div class="abs" style="left:270.4px;top:368.30px;width:21.5px;height:21.5px;border-radius:50%;background:#2c2e32"></div>
<svg style="left:274.5px;top:375.50px" width="13" height="8" viewBox="0 0 13 8">
<path d="M1 1.2 L6.5 6.5 L12 1.2" fill="none" stroke="#fff" stroke-width="1.7" stroke-linecap="round" stroke-linejoin="round"/>
</svg>
<div class="pill" style="left:24.5px;top:393.20px;width:30.5px;height:16px;background:#26282c"></div>
<div class="t" style="left:28.50px;top:395.23px;font-size:12.01px;font-weight:bold;color:#fff;;transform:scaleX(0.9728);transform-origin:0 0">+ Fx</div>
<svg style="left:276px;top:394.80px" width="16" height="14" viewBox="0 0 16 14">
<path d="M0.8 12.4 H2.2 M5.6 10.6 L9.6 5 M12.8 3 H15.4" stroke="#2f80e6" stroke-width="1.5" stroke-linecap="round"/>
<circle cx="4.2" cy="11.6" r="1.9" fill="none" stroke="#2f80e6" stroke-width="1.5"/>
<circle cx="10.8" cy="3.3" r="1.9" fill="none" stroke="#2f80e6" stroke-width="1.5"/>
</svg>
<div class="abs" style="left:24px;top:428.70px;width:201px;height:2.4px;background:#27292d;border-radius:2px"></div>
<div class="abs" style="left:24px;top:428.70px;width:40.80px;height:2.4px;background:#8d9099;border-radius:2px"></div>
<div class="abs" style="left:60.10px;top:425.20px;width:9.4px;height:9.4px;border-radius:50%;background:#fff"></div>
<svg style="left:250.30px;top:413.00px" width="34" height="34" viewBox="0 0 34 34"><circle cx="0.40" cy="17.00" r="0.75" fill="#5d6066"/><circle cx="2.62" cy="8.70" r="0.75" fill="#5d6066"/><circle cx="8.70" cy="2.62" r="0.75" fill="#5d6066"/><circle cx="17.00" cy="0.40" r="0.75" fill="#5d6066"/><circle cx="25.30" cy="2.62" r="0.75" fill="#5d6066"/><circle cx="31.38" cy="8.70" r="0.75" fill="#5d6066"/><circle cx="33.60" cy="17.00" r="0.75" fill="#5d6066"/>
<circle cx="17" cy="17" r="12.15" fill="#9ea2ac"/><path d="M17 6.9 V16.2" stroke="#0c0c0c" stroke-width="2"/></svg>
<div class="t" style="left:248.00px;top:434.08px;font-size:9.36px;font-weight:normal;color:#9a9ea6;;transform:scaleX(0.9400);transform-origin:0 0">L</div>
<div class="t" style="left:281.80px;top:434.08px;font-size:9.36px;font-weight:normal;color:#9a9ea6;;transform:scaleX(0.7857);transform-origin:0 0">R</div>
<svg style="left:4.7px;top:461.95px" width="13" height="17" viewBox="0 0 13 17">
<rect x="3.6" y="0.6" width="5.2" height="10.2" rx="2.6" fill="none" stroke="#2f80e6" stroke-width="1.4"/>
<path d="M0.7 8.2 A5.5 4.6 0 0 0 11.7 8.2 M6.2 12.8 V15.8" fill="none" stroke="#2f80e6" stroke-width="1.4" stroke-linecap="round"/>
</svg>
<div class="t" style="left:28.20px;top:462.41px;font-size:14.11px;font-weight:bold;color:#fff;;transform:scaleX(0.9907);transform-origin:0 0">08</div>
<div class="t" style="left:52.90px;top:462.41px;font-size:14.11px;font-weight:bold;color:#fff;;transform:scaleX(0.9227);transform-origin:0 0">Street_90_Am_Dro...</div>
<div class="abs" style="left:196.2px;top:463.45px;width:2.6px;height:2.6px;border-radius:50%;background:#e0e0e0"></div>
<div class="abs" style="left:196.2px;top:468.15px;width:2.6px;height:2.6px;border-radius:50%;background:#e0e0e0"></div>
<div class="abs" style="left:196.2px;top:472.65px;width:2.6px;height:2.6px;border-radius:50%;background:#e0e0e0"></div>
<div class="pill" style="left:209.6px;top:457.25px;width:55.7px;height:24.3px;background:#2c2e32"></div>
<div class="t" style="left:218.60px;top:462.87px;font-size:12.85px;font-weight:bold;color:#fff;;transform:scaleX(1.1600);transform-origin:0 0">M</div>
<div class="t" style="left:246.90px;top:462.87px;font-size:12.85px;font-weight:bold;color:#fff;;transform:scaleX(0.8667);transform-origin:0 0">S</div>
<div class="abs" style="left:270.4px;top:458.85px;width:21.5px;height:21.5px;border-radius:50%;background:#2c2e32"></div>
<svg style="left:274.5px;top:466.05px" width="13" height="8" viewBox="0 0 13 8">
<path d="M1 1.2 L6.5 6.5 L12 1.2" fill="none" stroke="#fff" stroke-width="1.7" stroke-linecap="round" stroke-linejoin="round"/>
</svg>
<div class="pill" style="left:24.5px;top:483.75px;width:30.5px;height:16px;background:#26282c"></div>
<div class="t" style="left:28.50px;top:485.78px;font-size:12.01px;font-weight:bold;color:#fff;;transform:scaleX(0.9728);transform-origin:0 0">+ Fx</div>
<svg style="left:276px;top:485.35px" width="16" height="14" viewBox="0 0 16 14">
<path d="M0.8 12.4 H2.2 M5.6 10.6 L9.6 5 M12.8 3 H15.4" stroke="#2f80e6" stroke-width="1.5" stroke-linecap="round"/>
<circle cx="4.2" cy="11.6" r="1.9" fill="none" stroke="#2f80e6" stroke-width="1.5"/>
<circle cx="10.8" cy="3.3" r="1.9" fill="none" stroke="#2f80e6" stroke-width="1.5"/>
</svg>
<div class="abs" style="left:24px;top:519.25px;width:201px;height:2.4px;background:#27292d;border-radius:2px"></div>
<div class="abs" style="left:24px;top:519.25px;width:71.50px;height:2.4px;background:#8d9099;border-radius:2px"></div>
<div class="abs" style="left:90.80px;top:515.75px;width:9.4px;height:9.4px;border-radius:50%;background:#fff"></div>
<svg style="left:250.30px;top:503.55px" width="34" height="34" viewBox="0 0 34 34"><circle cx="0.40" cy="17.00" r="0.75" fill="#5d6066"/><circle cx="2.62" cy="8.70" r="0.75" fill="#5d6066"/><circle cx="8.70" cy="2.62" r="0.75" fill="#5d6066"/><circle cx="17.00" cy="0.40" r="0.75" fill="#5d6066"/><circle cx="25.30" cy="2.62" r="0.75" fill="#5d6066"/><circle cx="31.38" cy="8.70" r="0.75" fill="#5d6066"/><circle cx="33.60" cy="17.00" r="0.75" fill="#5d6066"/>
<circle cx="17" cy="17" r="12.15" fill="#9ea2ac"/><path d="M17 6.9 V16.2" stroke="#0c0c0c" stroke-width="2"/></svg>
<div class="t" style="left:248.00px;top:524.63px;font-size:9.36px;font-weight:normal;color:#9a9ea6;;transform:scaleX(0.9400);transform-origin:0 0">L</div>
<div class="t" style="left:281.80px;top:524.63px;font-size:9.36px;font-weight:normal;color:#9a9ea6;;transform:scaleX(0.7857);transform-origin:0 0">R</div>
<svg style="left:4.7px;top:552.50px" width="13" height="17" viewBox="0 0 13 17">
<rect x="3.6" y="0.6" width="5.2" height="10.2" rx="2.6" fill="none" stroke="#2f80e6" stroke-width="1.4"/>
<path d="M0.7 8.2 A5.5 4.6 0 0 0 11.7 8.2 M6.2 12.8 V15.8" fill="none" stroke="#2f80e6" stroke-width="1.4" stroke-linecap="round"/>
</svg>
<div class="t" style="left:28.20px;top:552.96px;font-size:14.11px;font-weight:bold;color:#fff;;transform:scaleX(0.9907);transform-origin:0 0">09</div>
<div class="t" style="left:52.90px;top:552.96px;font-size:14.11px;font-weight:bold;color:#fff;;transform:scaleX(0.9227);transform-origin:0 0">Street_90_Am_Dro...</div>
<div class="abs" style="left:196.2px;top:554.00px;width:2.6px;height:2.6px;border-radius:50%;background:#e0e0e0"></div>
<div class="abs" style="left:196.2px;top:558.70px;width:2.6px;height:2.6px;border-radius:50%;background:#e0e0e0"></div>
<div class="abs" style="left:196.2px;top:563.20px;width:2.6px;height:2.6px;border-radius:50%;background:#e0e0e0"></div>
<div class="pill" style="left:209.6px;top:547.80px;width:55.7px;height:24.3px;background:#2c2e32"></div>
<div class="t" style="left:218.60px;top:553.42px;font-size:12.85px;font-weight:bold;color:#fff;;transform:scaleX(1.1600);transform-origin:0 0">M</div>
<div class="t" style="left:246.90px;top:553.42px;font-size:12.85px;font-weight:bold;color:#fff;;transform:scaleX(0.8667);transform-origin:0 0">S</div>
<div class="abs" style="left:270.4px;top:549.40px;width:21.5px;height:21.5px;border-radius:50%;background:#2c2e32"></div>
<svg style="left:274.5px;top:556.60px" width="13" height="8" viewBox="0 0 13 8">
<path d="M1 1.2 L6.5 6.5 L12 1.2" fill="none" stroke="#fff" stroke-width="1.7" stroke-linecap="round" stroke-linejoin="round"/>
</svg>
<div class="pill" style="left:24.5px;top:574.30px;width:30.5px;height:16px;background:#26282c"></div>
<div class="t" style="left:28.50px;top:576.33px;font-size:12.01px;font-weight:bold;color:#fff;;transform:scaleX(0.9728);transform-origin:0 0">+ Fx</div>
<svg style="left:276px;top:575.90px" width="16" height="14" viewBox="0 0 16 14">
<path d="M0.8 12.4 H2.2 M5.6 10.6 L9.6 5 M12.8 3 H15.4" stroke="#2f80e6" stroke-width="1.5" stroke-linecap="round"/>
<circle cx="4.2" cy="11.6" r="1.9" fill="none" stroke="#2f80e6" stroke-width="1.5"/>
<circle cx="10.8" cy="3.3" r="1.9" fill="none" stroke="#2f80e6" stroke-width="1.5"/>
</svg>
<div class="abs" style="left:24px;top:609.80px;width:201px;height:2.4px;background:#27292d;border-radius:2px"></div>
<div class="abs" style="left:24px;top:609.80px;width:45.50px;height:2.4px;background:#8d9099;border-radius:2px"></div>
<div class="abs" style="left:64.80px;top:606.30px;width:9.4px;height:9.4px;border-radius:50%;background:#fff"></div>
<svg style="left:250.30px;top:594.10px" width="34" height="34" viewBox="0 0 34 34"><circle cx="0.40" cy="17.00" r="0.75" fill="#5d6066"/><circle cx="2.62" cy="8.70" r="0.75" fill="#5d6066"/><circle cx="8.70" cy="2.62" r="0.75" fill="#5d6066"/><circle cx="17.00" cy="0.40" r="0.75" fill="#5d6066"/><circle cx="25.30" cy="2.62" r="0.75" fill="#5d6066"/><circle cx="31.38" cy="8.70" r="0.75" fill="#5d6066"/><circle cx="33.60" cy="17.00" r="0.75" fill="#5d6066"/>
<circle cx="17" cy="17" r="12.15" fill="#9ea2ac"/><path d="M17 6.9 V16.2" stroke="#0c0c0c" stroke-width="2"/></svg>
<div class="t" style="left:248.00px;top:615.18px;font-size:9.36px;font-weight:normal;color:#9a9ea6;;transform:scaleX(0.9400);transform-origin:0 0">L</div>
<div class="t" style="left:281.80px;top:615.18px;font-size:9.36px;font-weight:normal;color:#9a9ea6;;transform:scaleX(0.7857);transform-origin:0 0">R</div>
<svg style="left:4.7px;top:643.05px" width="13" height="17" viewBox="0 0 13 17">
<rect x="3.6" y="0.6" width="5.2" height="10.2" rx="2.6" fill="none" stroke="#2f80e6" stroke-width="1.4"/>
<path d="M0.7 8.2 A5.5 4.6 0 0 0 11.7 8.2 M6.2 12.8 V15.8" fill="none" stroke="#2f80e6" stroke-width="1.4" stroke-linecap="round"/>
</svg>
<div class="t" style="left:28.20px;top:643.51px;font-size:14.11px;font-weight:bold;color:#fff;;transform:scaleX(0.9907);transform-origin:0 0">10</div>
<div class="t" style="left:52.90px;top:643.51px;font-size:14.11px;font-weight:bold;color:#fff;;transform:scaleX(0.9227);transform-origin:0 0">Street_90_Am_Dro...</div>
<div class="abs" style="left:196.2px;top:644.55px;width:2.6px;height:2.6px;border-radius:50%;background:#e0e0e0"></div>
<div class="abs" style="left:196.2px;top:649.25px;width:2.6px;height:2.6px;border-radius:50%;background:#e0e0e0"></div>
<div class="abs" style="left:196.2px;top:653.75px;width:2.6px;height:2.6px;border-radius:50%;background:#e0e0e0"></div>
<div class="pill" style="left:209.6px;top:638.35px;width:55.7px;height:24.3px;background:#2c2e32"></div>
<div class="t" style="left:218.60px;top:643.97px;font-size:12.85px;font-weight:bold;color:#fff;;transform:scaleX(1.1600);transform-origin:0 0">M</div>
<div class="t" style="left:246.90px;top:643.97px;font-size:12.85px;font-weight:bold;color:#fff;;transform:scaleX(0.8667);transform-origin:0 0">S</div>
<div class="abs" style="left:270.4px;top:639.95px;width:21.5px;height:21.5px;border-radius:50%;background:#2c2e32"></div>
<svg style="left:274.5px;top:647.15px" width="13" height="8" viewBox="0 0 13 8">
<path d="M1 1.2 L6.5 6.5 L12 1.2" fill="none" stroke="#fff" stroke-width="1.7" stroke-linecap="round" stroke-linejoin="round"/>
</svg>
<div class="pill" style="left:24.5px;top:664.85px;width:30.5px;height:16px;background:#26282c"></div>
<div class="t" style="left:28.50px;top:666.88px;font-size:12.01px;font-weight:bold;color:#fff;;transform:scaleX(0.9728);transform-origin:0 0">+ Fx</div>
<div class="abs" style="left:24px;top:700.35px;width:201px;height:2.4px;background:#27292d;border-radius:2px"></div>
<div class="abs" style="left:24px;top:700.35px;width:80.60px;height:2.4px;background:#8d9099;border-radius:2px"></div>
<div class="abs" style="left:99.90px;top:696.85px;width:9.4px;height:9.4px;border-radius:50%;background:#fff"></div>
<svg style="left:250.30px;top:684.65px" width="34" height="34" viewBox="0 0 34 34"><circle cx="0.40" cy="17.00" r="0.75" fill="#5d6066"/><circle cx="2.62" cy="8.70" r="0.75" fill="#5d6066"/><circle cx="8.70" cy="2.62" r="0.75" fill="#5d6066"/><circle cx="17.00" cy="0.40" r="0.75" fill="#5d6066"/><circle cx="25.30" cy="2.62" r="0.75" fill="#5d6066"/><circle cx="31.38" cy="8.70" r="0.75" fill="#5d6066"/><circle cx="33.60" cy="17.00" r="0.75" fill="#5d6066"/>
<circle cx="17" cy="17" r="12.15" fill="#9ea2ac"/><path d="M17 6.9 V16.2" stroke="#0c0c0c" stroke-width="2"/></svg>
<div class="t" style="left:248.00px;top:705.73px;font-size:9.36px;font-weight:normal;color:#9a9ea6;;transform:scaleX(0.9400);transform-origin:0 0">L</div>
<div class="t" style="left:281.80px;top:705.73px;font-size:9.36px;font-weight:normal;color:#9a9ea6;;transform:scaleX(0.7857);transform-origin:0 0">R</div>
<svg style="left:4.7px;top:733.60px" width="13" height="17" viewBox="0 0 13 17">
<rect x="3.6" y="0.6" width="5.2" height="10.2" rx="2.6" fill="none" stroke="#2f80e6" stroke-width="1.4"/>
<path d="M0.7 8.2 A5.5 4.6 0 0 0 11.7 8.2 M6.2 12.8 V15.8" fill="none" stroke="#2f80e6" stroke-width="1.4" stroke-linecap="round"/>
</svg>
<div class="t" style="left:28.20px;top:734.06px;font-size:14.11px;font-weight:bold;color:#fff;;transform:scaleX(1.0419);transform-origin:0 0">11</div>
<div class="t" style="left:52.90px;top:734.06px;font-size:14.11px;font-weight:bold;color:#fff;;transform:scaleX(0.8818);transform-origin:0 0">ATS_140_Eb_Myste...</div>
<div class="abs" style="left:196.2px;top:735.10px;width:2.6px;height:2.6px;border-radius:50%;background:#e0e0e0"></div>
<div class="abs" style="left:196.2px;top:739.80px;width:2.6px;height:2.6px;border-radius:50%;background:#e0e0e0"></div>
<div class="abs" style="left:196.2px;top:744.30px;width:2.6px;height:2.6px;border-radius:50%;background:#e0e0e0"></div>
<div class="pill" style="left:209.6px;top:728.90px;width:55.7px;height:24.3px;background:#2c2e32"></div>
<div class="t" style="left:218.60px;top:734.52px;font-size:12.85px;font-weight:bold;color:#fff;;transform:scaleX(1.1600);transform-origin:0 0">M</div>
<div class="t" style="left:246.90px;top:734.52px;font-size:12.85px;font-weight:bold;color:#fff;;transform:scaleX(0.8667);transform-origin:0 0">S</div>
<div class="abs" style="left:270.4px;top:730.50px;width:21.5px;height:21.5px;border-radius:50%;background:#2c2e32"></div>
<svg style="left:274.5px;top:737.70px" width="13" height="8" viewBox="0 0 13 8">
<path d="M1 1.2 L6.5 6.5 L12 1.2" fill="none" stroke="#fff" stroke-width="1.7" stroke-linecap="round" stroke-linejoin="round"/>
</svg>
<div class="pill" style="left:24.5px;top:755.40px;width:30.5px;height:16px;background:#26282c"></div>
<div class="t" style="left:28.50px;top:757.43px;font-size:12.01px;font-weight:bold;color:#fff;;transform:scaleX(0.9728);transform-origin:0 0">+ Fx</div>
<div class="abs" style="left:24px;top:790.90px;width:201px;height:2.4px;background:#27292d;border-radius:2px"></div>
<div class="abs" style="left:24px;top:790.90px;width:36.00px;height:2.4px;background:#8d9099;border-radius:2px"></div>
<div class="abs" style="left:55.30px;top:787.40px;width:9.4px;height:9.4px;border-radius:50%;background:#fff"></div>
<svg style="left:250.30px;top:775.20px" width="34" height="34" viewBox="0 0 34 34"><circle cx="0.40" cy="17.00" r="0.75" fill="#5d6066"/><circle cx="2.62" cy="8.70" r="0.75" fill="#5d6066"/><circle cx="8.70" cy="2.62" r="0.75" fill="#5d6066"/><circle cx="17.00" cy="0.40" r="0.75" fill="#5d6066"/><circle cx="25.30" cy="2.62" r="0.75" fill="#5d6066"/><circle cx="31.38" cy="8.70" r="0.75" fill="#5d6066"/><circle cx="33.60" cy="17.00" r="0.75" fill="#5d6066"/>
<circle cx="17" cy="17" r="12.15" fill="#9ea2ac"/><path d="M17 6.9 V16.2" stroke="#0c0c0c" stroke-width="2"/></svg>
<div class="t" style="left:248.00px;top:796.28px;font-size:9.36px;font-weight:normal;color:#9a9ea6;;transform:scaleX(0.9400);transform-origin:0 0">L</div>
<div class="t" style="left:281.80px;top:796.28px;font-size:9.36px;font-weight:normal;color:#9a9ea6;;transform:scaleX(0.7857);transform-origin:0 0">R</div>
<div class="abs" style="left:1102.60px;top:4.20px;width:140.50px;height:83.8px;border-radius:4px;overflow:hidden;background:#0b7a80"><svg style="left:0;top:0" width="140.50" height="83.8" viewBox="0 0 140.50 83.8"><rect x="0" y="0" width="140.50" height="16.8" fill="#0a6567"/><path d="M0.0 44.9 L0.5 44.7 L1.0 44.2 L1.5 43.8 L2.0 44.0 L2.5 44.3 L3.0 43.4 L3.5 43.9 L4.0 43.8 L4.5 43.4 L5.0 43.3 L5.5 44.1 L6.0 44.3 L6.5 44.4 L7.0 44.2 L7.5 44.6 L8.0 44.3 L8.5 43.7 L9.0 43.6 L9.5 43.9 L10.0 43.8 L10.5 43.9 L11.0 44.3 L11.5 44.4 L12.0 44.7 L12.5 44.0 L13.0 44.5 L13.5 44.4 L14.0 45.3 L14.5 44.4 L15.0 44.3 L15.5 43.8 L16.0 44.2 L16.5 43.4 L17.0 44.3 L17.5 43.7 L18.0 43.4 L18.5 43.1 L19.0 43.2 L19.5 43.1 L20.0 42.9 L20.5 42.8 L21.0 43.8 L21.5 44.0 L22.0 44.3 L22.5 44.6 L23.0 45.0 L23.5 44.4 L24.0 44.2 L24.5 44.4 L25.0 44.3 L25.5 44.7 L26.0 44.7 L26.5 44.8 L27.0 45.5 L27.5 44.6 L28.0 43.6 L28.5 43.1 L29.0 42.8 L29.5 43.2 L30.0 42.8 L30.5 43.1 L31.0 43.4 L31.5 43.0 L32.0 44.1 L32.5 43.8 L33.0 45.2 L33.5 45.0 L34.0 45.1 L34.5 44.8 L35.0 43.5 L35.5 43.0 L36.0 42.5 L36.5 42.2 L37.0 43.0 L37.5 43.3 L38.0 42.9 L38.5 42.5 L39.0 43.3 L39.5 43.6 L40.0 43.0 L40.5 43.4 L41.0 43.7 L41.5 43.2 L42.0 43.9 L42.5 43.5 L43.0 44.1 L43.5 44.1 L44.0 44.1 L44.5 44.3 L45.0 44.5 L45.5 45.1 L46.0 45.0 L46.5 45.4 L47.0 45.7 L47.5 45.3 L48.0 44.6 L48.5 44.2 L49.0 43.9 L49.5 43.5 L50.0 44.4 L50.5 44.9 L51.0 45.0 L51.5 45.4 L52.0 45.5 L52.5 45.3 L53.0 44.9 L53.5 45.0 L54.0 45.1 L54.5 44.5 L55.0 44.3 L55.5 44.9 L56.0 45.3 L56.5 45.3 L57.0 44.5 L57.5 45.6 L58.0 45.1 L58.5 45.3 L59.0 45.4 L59.5 44.6 L60.0 45.1 L60.5 44.7 L61.0 44.3 L61.5 44.8 L62.0 44.0 L62.5 44.6 L63.0 44.8 L63.5 44.7 L64.0 43.8 L64.5 43.7 L65.0 43.2 L65.5 43.2 L66.0 43.2 L66.5 43.4 L67.0 43.9 L67.5 44.5 L68.0 44.2 L68.5 44.4 L69.0 44.5 L69.5 44.0 L70.0 43.7 L70.5 44.4 L71.0 44.4 L71.5 44.4 L72.0 44.0 L72.5 44.2 L73.0 44.0 L73.5 43.7 L74.0 44.0 L74.5 43.5 L75.0 43.5 L75.5 44.6 L76.0 43.8 L76.5 44.1 L77.0 44.8 L77.5 44.6 L78.0 44.5 L78.5 44.3 L79.0 44.8 L79.5 44.2 L80.0 43.3 L80.5 42.8 L81.0 42.4 L81.5 42.9 L82.0 42.7 L82.5 43.2 L83.0 42.6 L83.5 42.5 L84.0 42.8 L84.5 42.8 L85.0 43.5 L85.5 42.8 L86.0 42.7 L86.5 42.8 L87.0 43.4 L87.5 43.2 L88.0 43.8 L88.5 43.4 L89.0 43.7 L89.5 44.6 L90.0 45.0 L90.5 44.7 L91.0 44.6 L91.5 44.4 L92.0 44.8 L92.5 45.3 L93.0 44.4 L93.5 45.2 L94.0 44.3 L94.5 45.0 L95.0 44.8 L95.5 44.5 L96.0 45.4 L96.5 45.5 L97.0 45.1 L97.5 44.4 L98.0 43.7 L98.5 43.3 L99.0 42.8 L99.5 43.4 L100.0 43.2 L100.5 44.5 L101.0 44.5 L101.5 44.2 L102.0 44.2 L102.5 43.3 L103.0 43.0 L103.5 43.0 L104.0 42.8 L104.5 43.4 L105.0 44.1 L105.5 44.3 L106.0 43.8 L106.5 43.4 L107.0 43.7 L107.5 42.5 L108.0 42.1 L108.5 42.7 L109.0 42.7 L109.5 43.2 L110.0 42.9 L110.5 43.0 L111.0 43.4 L111.5 44.8 L112.0 44.4 L112.5 45.2 L113.0 45.3 L113.5 44.6 L114.0 44.7 L114.5 44.7 L115.0 44.4 L115.5 44.7 L116.0 43.5 L116.5 43.1 L117.0 42.3 L117.5 42.5 L118.0 43.6 L118.5 43.7 L119.0 44.4 L119.5 44.1 L120.0 43.3 L120.5 42.8 L121.0 42.9 L121.5 42.9 L122.0 43.3 L122.5 43.2 L123.0 43.4 L123.5 44.7 L124.0 44.0 L124.5 45.1 L125.0 45.2 L125.5 45.4 L126.0 45.0 L126.5 45.2 L127.0 44.7 L127.5 44.0 L128.0 44.2 L128.5 43.5 L129.0 44.1 L129.5 43.5 L130.0 43.7 L130.5 43.7 L131.0 43.5 L131.5 44.0 L132.0 44.5 L132.5 44.8 L133.0 44.7 L133.5 45.3 L134.0 45.4 L134.5 45.0 L135.0 45.1 L135.5 45.1 L136.0 44.6 L136.5 44.7 L137.0 44.3 L137.5 44.9 L138.0 44.0 L138.5 43.4 L139.0 42.8 L139.5 43.3 L140.0 43.4 L140.5 42.9 L140.5 55.4 L140.0 56.2 L139.5 56.1 L139.0 55.6 L138.5 56.2 L138.0 56.8 L137.5 56.6 L137.0 57.0 L136.5 56.8 L136.0 56.6 L135.5 57.0 L135.0 57.1 L134.5 56.9 L134.0 56.5 L133.5 56.0 L133.0 55.6 L132.5 56.3 L132.0 56.6 L131.5 56.4 L131.0 56.6 L130.5 56.8 L130.0 57.2 L129.5 56.4 L129.0 56.6 L128.5 56.4 L128.0 56.4 L127.5 56.4 L127.0 57.2 L126.5 57.1 L126.0 57.6 L125.5 57.7 L125.0 56.6 L124.5 55.6 L124.0 55.2 L123.5 55.6 L123.0 55.7 L122.5 55.3 L122.0 55.1 L121.5 55.7 L121.0 55.3 L120.5 55.4 L120.0 56.5 L119.5 56.2 L119.0 56.7 L118.5 56.6 L118.0 56.8 L117.5 56.4 L117.0 56.5 L116.5 57.5 L116.0 56.8 L115.5 57.4 L115.0 57.6 L114.5 58.2 L114.0 58.1 L113.5 57.9 L113.0 57.7 L112.5 58.5 L112.0 57.9 L111.5 57.0 L111.0 56.8 L110.5 55.7 L110.0 55.9 L109.5 56.1 L109.0 57.4 L108.5 57.8 L108.0 58.2 L107.5 57.4 L107.0 57.2 L106.5 57.9 L106.0 57.6 L105.5 57.1 L105.0 56.6 L104.5 56.4 L104.0 55.9 L103.5 56.0 L103.0 55.9 L102.5 56.1 L102.0 55.5 L101.5 55.5 L101.0 56.1 L100.5 55.9 L100.0 57.0 L99.5 57.2 L99.0 57.2 L98.5 57.0 L98.0 57.0 L97.5 58.0 L97.0 58.1 L96.5 58.1 L96.0 56.9 L95.5 56.1 L95.0 56.2 L94.5 55.8 L94.0 55.8 L93.5 55.8 L93.0 55.9 L92.5 55.5 L92.0 55.6 L91.5 56.3 L91.0 57.1 L90.5 57.7 L90.0 57.0 L89.5 57.1 L89.0 57.4 L88.5 57.4 L88.0 57.3 L87.5 56.7 L87.0 56.9 L86.5 56.5 L86.0 56.6 L85.5 56.2 L85.0 56.5 L84.5 57.1 L84.0 57.3 L83.5 57.2 L83.0 57.6 L82.5 56.8 L82.0 56.5 L81.5 56.4 L81.0 56.4 L80.5 55.9 L80.0 56.3 L79.5 56.5 L79.0 56.6 L78.5 56.1 L78.0 56.5 L77.5 56.9 L77.0 56.6 L76.5 56.4 L76.0 57.0 L75.5 56.2 L75.0 55.9 L74.5 56.2 L74.0 55.3 L73.5 56.4 L73.0 56.7 L72.5 56.0 L72.0 56.8 L71.5 56.8 L71.0 55.9 L70.5 55.9 L70.0 55.0 L69.5 54.8 L69.0 55.0 L68.5 54.7 L68.0 55.0 L67.5 55.5 L67.0 55.1 L66.5 55.6 L66.0 55.9 L65.5 55.6 L65.0 55.7 L64.5 56.0 L64.0 55.9 L63.5 55.9 L63.0 56.4 L62.5 55.6 L62.0 56.6 L61.5 56.8 L61.0 56.7 L60.5 57.0 L60.0 56.4 L59.5 56.8 L59.0 55.5 L58.5 56.1 L58.0 55.9 L57.5 55.3 L57.0 56.1 L56.5 55.9 L56.0 56.3 L55.5 56.3 L55.0 57.4 L54.5 57.5 L54.0 57.8 L53.5 57.9 L53.0 56.5 L52.5 55.6 L52.0 55.4 L51.5 55.2 L51.0 55.3 L50.5 56.2 L50.0 56.4 L49.5 57.2 L49.0 57.1 L48.5 56.6 L48.0 57.9 L47.5 57.8 L47.0 57.7 L46.5 57.3 L46.0 57.4 L45.5 56.3 L45.0 56.3 L44.5 56.3 L44.0 56.3 L43.5 55.8 L43.0 56.0 L42.5 56.4 L42.0 56.0 L41.5 57.0 L41.0 57.6 L40.5 57.5 L40.0 56.9 L39.5 57.0 L39.0 56.3 L38.5 55.7 L38.0 56.4 L37.5 56.4 L37.0 57.2 L36.5 57.6 L36.0 57.7 L35.5 58.0 L35.0 58.1 L34.5 57.7 L34.0 58.3 L33.5 58.2 L33.0 57.8 L32.5 57.3 L32.0 56.0 L31.5 56.4 L31.0 56.6 L30.5 56.0 L30.0 56.1 L29.5 55.9 L29.0 56.1 L28.5 56.5 L28.0 56.5 L27.5 56.8 L27.0 57.0 L26.5 55.8 L26.0 56.2 L25.5 55.5 L25.0 55.3 L24.5 55.6 L24.0 56.3 L23.5 56.4 L23.0 56.5 L22.5 57.4 L22.0 57.1 L21.5 55.9 L21.0 56.1 L20.5 55.6 L20.0 55.7 L19.5 56.0 L19.0 56.4 L18.5 57.3 L18.0 57.2 L17.5 57.5 L17.0 56.1 L16.5 55.7 L16.0 56.3 L15.5 56.3 L15.0 56.3 L14.5 55.8 L14.0 56.0 L13.5 56.0 L13.0 56.5 L12.5 56.5 L12.0 56.6 L11.5 56.1 L11.0 56.2 L10.5 55.9 L10.0 55.7 L9.5 56.0 L9.0 55.6 L8.5 56.1 L8.0 56.3 L7.5 56.4 L7.0 57.7 L6.5 57.6 L6.0 56.9 L5.5 55.7 L5.0 55.0 L4.5 55.5 L4.0 55.2 L3.5 54.9 L3.0 55.6 L2.5 55.3 L2.0 55.7 L1.5 55.0 L1.0 55.3 L0.5 55.9 L0.0 55.4 Z" fill="#00c6d3"/><path d="M0 16.8 L13 16.8 L0 83.8 Z" fill="#000" fill-opacity="0.14"/><path d="M140.50 16.8 L119.50 16.8 L140.50 83.8 Z" fill="#000" fill-opacity="0.14"/></svg>
<div class="t" style="left:5.50px;top:3.61px;font-size:10.61px;font-weight:bold;color:#fff;;transform:scaleX(0.9736);transform-origin:0 0">AEG_Moves_154_D_G...</div>
</div>
<div class="abs" style="left:1226.90px;top:94.75px;width:139.70px;height:83.8px;border-radius:4px;overflow:hidden;background:#0b7a80"><svg style="left:0;top:0" width="139.70" height="83.8" viewBox="0 0 139.70 83.8"><rect x="0" y="0" width="139.70" height="16.8" fill="#0a6567"/><path d="M0.0 44.4 L0.5 43.8 L1.0 44.1 L1.5 43.8 L2.0 43.4 L2.5 43.3 L3.0 43.5 L3.5 43.9 L4.0 43.7 L4.5 43.3 L5.0 43.6 L5.5 44.2 L6.0 44.9 L6.5 45.2 L7.0 44.8 L7.5 45.1 L8.0 45.8 L8.5 45.1 L9.0 45.0 L9.5 45.0 L10.0 44.6 L10.5 44.2 L11.0 44.4 L11.5 44.1 L12.0 44.6 L12.5 45.0 L13.0 44.8 L13.5 44.9 L14.0 44.0 L14.5 43.9 L15.0 43.6 L15.5 43.1 L16.0 43.7 L16.5 43.3 L17.0 43.2 L17.5 43.6 L18.0 43.8 L18.5 43.6 L19.0 43.8 L19.5 43.4 L20.0 44.1 L20.5 44.2 L21.0 43.9 L21.5 43.5 L22.0 43.5 L22.5 43.6 L23.0 43.2 L23.5 43.8 L24.0 44.1 L24.5 43.5 L25.0 43.6 L25.5 44.2 L26.0 44.1 L26.5 44.8 L27.0 45.1 L27.5 44.9 L28.0 44.0 L28.5 44.8 L29.0 44.2 L29.5 44.3 L30.0 44.6 L30.5 44.6 L31.0 45.0 L31.5 44.3 L32.0 44.5 L32.5 43.7 L33.0 43.7 L33.5 42.9 L34.0 42.8 L34.5 43.0 L35.0 44.4 L35.5 44.9 L36.0 44.7 L36.5 44.5 L37.0 44.6 L37.5 43.6 L38.0 42.9 L38.5 43.3 L39.0 43.4 L39.5 44.1 L40.0 44.3 L40.5 45.0 L41.0 44.7 L41.5 44.6 L42.0 43.7 L42.5 43.8 L43.0 43.5 L43.5 43.9 L44.0 44.3 L44.5 44.7 L45.0 44.8 L45.5 44.4 L46.0 44.7 L46.5 44.8 L47.0 44.0 L47.5 44.5 L48.0 43.5 L48.5 43.5 L49.0 43.4 L49.5 42.8 L50.0 43.0 L50.5 44.3 L51.0 45.2 L51.5 45.1 L52.0 45.0 L52.5 45.2 L53.0 45.0 L53.5 45.4 L54.0 45.1 L54.5 45.2 L55.0 44.4 L55.5 43.8 L56.0 43.3 L56.5 43.2 L57.0 43.0 L57.5 44.1 L58.0 44.3 L58.5 44.4 L59.0 43.8 L59.5 44.6 L60.0 45.4 L60.5 44.8 L61.0 44.7 L61.5 44.3 L62.0 44.1 L62.5 43.0 L63.0 43.2 L63.5 43.4 L64.0 42.6 L64.5 42.7 L65.0 43.4 L65.5 42.8 L66.0 44.2 L66.5 44.6 L67.0 45.5 L67.5 45.6 L68.0 45.5 L68.5 44.7 L69.0 44.9 L69.5 44.8 L70.0 44.8 L70.5 44.9 L71.0 44.5 L71.5 45.0 L72.0 45.6 L72.5 44.9 L73.0 44.9 L73.5 44.9 L74.0 44.7 L74.5 44.5 L75.0 44.2 L75.5 44.2 L76.0 43.9 L76.5 43.9 L77.0 43.9 L77.5 44.5 L78.0 44.8 L78.5 45.0 L79.0 44.8 L79.5 44.9 L80.0 43.8 L80.5 43.8 L81.0 43.3 L81.5 43.7 L82.0 43.8 L82.5 44.7 L83.0 45.3 L83.5 45.4 L84.0 45.1 L84.5 44.8 L85.0 44.6 L85.5 45.4 L86.0 45.2 L86.5 44.7 L87.0 44.2 L87.5 43.8 L88.0 43.9 L88.5 43.8 L89.0 44.3 L89.5 44.0 L90.0 44.2 L90.5 43.8 L91.0 43.8 L91.5 44.0 L92.0 43.8 L92.5 44.8 L93.0 44.4 L93.5 43.5 L94.0 43.9 L94.5 44.1 L95.0 43.5 L95.5 44.0 L96.0 43.9 L96.5 44.3 L97.0 44.4 L97.5 44.6 L98.0 44.1 L98.5 43.7 L99.0 43.7 L99.5 44.1 L100.0 44.2 L100.5 45.1 L101.0 45.4 L101.5 44.7 L102.0 44.6 L102.5 43.9 L103.0 44.1 L103.5 43.6 L104.0 43.3 L104.5 42.8 L105.0 42.5 L105.5 42.4 L106.0 42.8 L106.5 42.8 L107.0 42.2 L107.5 42.1 L108.0 42.6 L108.5 43.1 L109.0 42.8 L109.5 43.2 L110.0 43.6 L110.5 43.8 L111.0 43.8 L111.5 43.8 L112.0 44.6 L112.5 44.2 L113.0 43.7 L113.5 44.0 L114.0 44.5 L114.5 44.4 L115.0 44.7 L115.5 43.8 L116.0 43.6 L116.5 43.9 L117.0 43.4 L117.5 43.3 L118.0 43.4 L118.5 43.6 L119.0 43.7 L119.5 43.7 L120.0 43.3 L120.5 44.6 L121.0 44.8 L121.5 45.1 L122.0 45.4 L122.5 45.0 L123.0 45.1 L123.5 44.9 L124.0 44.9 L124.5 44.8 L125.0 44.1 L125.5 44.7 L126.0 44.6 L126.5 44.2 L127.0 44.4 L127.5 44.1 L128.0 43.9 L128.5 44.5 L129.0 43.7 L129.5 44.1 L130.0 43.7 L130.5 43.0 L131.0 42.9 L131.5 43.5 L132.0 44.3 L132.5 44.2 L133.0 44.5 L133.5 44.1 L134.0 45.2 L134.5 45.6 L135.0 45.3 L135.5 45.0 L136.0 44.5 L136.5 44.0 L137.0 43.0 L137.5 43.5 L138.0 43.2 L138.5 44.1 L139.0 44.4 L139.5 44.6 L139.7 44.2 L139.7 57.6 L139.5 56.9 L139.0 57.3 L138.5 56.7 L138.0 56.1 L137.5 55.4 L137.0 55.9 L136.5 56.2 L136.0 56.5 L135.5 57.2 L135.0 56.6 L134.5 56.4 L134.0 56.4 L133.5 56.3 L133.0 56.9 L132.5 57.2 L132.0 56.4 L131.5 56.7 L131.0 56.2 L130.5 55.6 L130.0 55.4 L129.5 56.4 L129.0 56.4 L128.5 56.4 L128.0 55.8 L127.5 56.4 L127.0 55.8 L126.5 56.2 L126.0 56.1 L125.5 56.1 L125.0 56.0 L124.5 56.9 L124.0 56.6 L123.5 57.4 L123.0 56.8 L122.5 57.6 L122.0 56.8 L121.5 56.6 L121.0 56.7 L120.5 57.5 L120.0 56.6 L119.5 56.1 L119.0 57.2 L118.5 57.3 L118.0 57.1 L117.5 57.3 L117.0 57.4 L116.5 57.7 L116.0 57.5 L115.5 57.0 L115.0 56.1 L114.5 55.8 L114.0 56.3 L113.5 56.6 L113.0 57.8 L112.5 57.2 L112.0 58.0 L111.5 56.6 L111.0 56.2 L110.5 56.6 L110.0 56.1 L109.5 55.7 L109.0 55.5 L108.5 56.2 L108.0 55.3 L107.5 56.0 L107.0 56.8 L106.5 57.7 L106.0 58.2 L105.5 57.5 L105.0 57.4 L104.5 57.3 L104.0 57.6 L103.5 58.3 L103.0 57.3 L102.5 57.1 L102.0 56.2 L101.5 55.7 L101.0 56.5 L100.5 56.2 L100.0 57.1 L99.5 56.4 L99.0 57.0 L98.5 57.1 L98.0 56.9 L97.5 57.1 L97.0 56.1 L96.5 56.2 L96.0 57.0 L95.5 56.6 L95.0 56.9 L94.5 56.3 L94.0 56.2 L93.5 56.4 L93.0 55.9 L92.5 55.5 L92.0 55.9 L91.5 55.7 L91.0 56.6 L90.5 56.9 L90.0 57.4 L89.5 57.5 L89.0 56.8 L88.5 57.1 L88.0 57.3 L87.5 57.4 L87.0 57.5 L86.5 57.8 L86.0 57.1 L85.5 57.4 L85.0 56.7 L84.5 56.6 L84.0 56.0 L83.5 55.7 L83.0 55.9 L82.5 55.8 L82.0 55.2 L81.5 55.4 L81.0 55.4 L80.5 55.7 L80.0 56.2 L79.5 56.3 L79.0 56.7 L78.5 56.4 L78.0 56.9 L77.5 57.2 L77.0 58.0 L76.5 58.1 L76.0 57.6 L75.5 57.2 L75.0 57.1 L74.5 57.3 L74.0 57.2 L73.5 57.3 L73.0 57.2 L72.5 57.2 L72.0 57.1 L71.5 56.0 L71.0 55.8 L70.5 56.0 L70.0 55.1 L69.5 55.5 L69.0 55.7 L68.5 55.3 L68.0 55.4 L67.5 55.0 L67.0 54.8 L66.5 54.9 L66.0 56.0 L65.5 55.3 L65.0 55.4 L64.5 56.0 L64.0 56.0 L63.5 56.4 L63.0 55.8 L62.5 55.6 L62.0 56.9 L61.5 56.6 L61.0 57.5 L60.5 56.8 L60.0 57.2 L59.5 56.9 L59.0 56.0 L58.5 55.9 L58.0 55.8 L57.5 55.4 L57.0 55.3 L56.5 55.2 L56.0 54.8 L55.5 55.6 L55.0 56.7 L54.5 56.7 L54.0 57.2 L53.5 57.4 L53.0 57.7 L52.5 57.0 L52.0 57.4 L51.5 57.5 L51.0 57.1 L50.5 56.5 L50.0 56.0 L49.5 55.5 L49.0 56.0 L48.5 55.8 L48.0 55.8 L47.5 56.7 L47.0 56.7 L46.5 57.0 L46.0 56.7 L45.5 57.5 L45.0 58.2 L44.5 57.0 L44.0 57.0 L43.5 55.8 L43.0 56.3 L42.5 55.3 L42.0 55.8 L41.5 56.5 L41.0 57.3 L40.5 57.7 L40.0 57.8 L39.5 57.7 L39.0 57.1 L38.5 57.0 L38.0 56.7 L37.5 57.2 L37.0 57.7 L36.5 57.6 L36.0 57.6 L35.5 58.3 L35.0 57.5 L34.5 57.0 L34.0 57.0 L33.5 56.1 L33.0 57.0 L32.5 56.2 L32.0 56.6 L31.5 56.2 L31.0 56.2 L30.5 56.5 L30.0 56.4 L29.5 56.0 L29.0 56.0 L28.5 56.6 L28.0 55.9 L27.5 56.4 L27.0 56.5 L26.5 56.5 L26.0 55.6 L25.5 55.7 L25.0 55.7 L24.5 55.9 L24.0 56.3 L23.5 56.0 L23.0 57.0 L22.5 56.6 L22.0 57.4 L21.5 56.7 L21.0 56.2 L20.5 56.6 L20.0 56.3 L19.5 56.5 L19.0 56.6 L18.5 55.7 L18.0 55.9 L17.5 56.0 L17.0 56.2 L16.5 56.0 L16.0 55.8 L15.5 55.1 L15.0 55.4 L14.5 56.8 L14.0 56.9 L13.5 57.0 L13.0 56.7 L12.5 56.8 L12.0 55.6 L11.5 55.3 L11.0 55.5 L10.5 55.5 L10.0 55.7 L9.5 56.0 L9.0 56.5 L8.5 56.2 L8.0 55.9 L7.5 55.6 L7.0 55.8 L6.5 55.1 L6.0 56.3 L5.5 56.9 L5.0 56.8 L4.5 57.4 L4.0 57.4 L3.5 56.1 L3.0 56.1 L2.5 55.9 L2.0 56.3 L1.5 56.2 L1.0 56.3 L0.5 56.1 L0.0 56.4 Z" fill="#00c6d3"/><path d="M0 16.8 L13 16.8 L0 83.8 Z" fill="#000" fill-opacity="0.14"/><path d="M139.70 16.8 L61.70 16.8 L139.70 83.8 Z" fill="#000" fill-opacity="0.14"/></svg>
<div class="t" style="left:5.50px;top:3.61px;font-size:10.61px;font-weight:bold;color:#fff;;transform:scaleX(0.9736);transform-origin:0 0">AEG_Moves_154_D_G...</div>
</div>
<div class="abs" style="left:775.60px;top:185.30px;width:68.60px;height:83.8px;border-radius:4px;overflow:hidden;background:#0b7a80"><svg style="left:0;top:0" width="68.60" height="83.8" viewBox="0 0 68.60 83.8"><rect x="0" y="0" width="68.60" height="16.8" fill="#0a6567"/><path d="M0.0 42.4 L0.5 42.4 L1.0 42.4 L1.5 42.3 L2.0 42.1 L2.5 42.1 L3.0 42.1 L3.5 42.1 L4.0 42.0 L4.5 41.7 L5.0 41.9 L5.5 41.9 L6.0 42.0 L6.5 42.0 L7.0 41.9 L7.5 41.9 L8.0 41.8 L8.5 42.1 L9.0 42.1 L9.5 42.0 L10.0 42.3 L10.5 42.2 L11.0 42.6 L11.5 42.7 L12.0 43.0 L12.5 43.5 L13.0 44.2 L13.5 45.0 L14.0 45.5 L14.5 45.8 L15.0 44.6 L15.5 43.2 L16.0 41.8 L16.5 40.2 L17.0 40.0 L17.5 40.2 L18.0 39.9 L18.5 39.1 L19.0 38.8 L19.5 37.8 L20.0 37.6 L20.5 36.2 L21.0 36.2 L21.5 36.7 L22.0 37.1 L22.5 37.5 L23.0 37.9 L23.5 38.3 L24.0 38.7 L24.5 38.6 L25.0 38.9 L25.5 39.9 L26.0 40.3 L26.5 41.0 L27.0 41.7 L27.5 42.3 L28.0 42.4 L28.5 42.8 L29.0 42.4 L29.5 42.5 L30.0 42.3 L30.5 42.4 L31.0 42.0 L31.5 42.1 L32.0 42.0 L32.5 42.0 L33.0 41.8 L33.5 41.9 L34.0 41.7 L34.5 41.5 L35.0 40.5 L35.5 39.5 L36.0 38.6 L36.5 36.9 L37.0 35.9 L37.5 34.1 L38.0 33.7 L38.5 35.7 L39.0 37.2 L39.5 38.4 L40.0 39.9 L40.5 41.2 L41.0 42.6 L41.5 43.0 L42.0 43.0 L42.5 43.2 L43.0 43.0 L43.5 43.0 L44.0 43.4 L44.5 43.5 L45.0 43.9 L45.5 43.8 L46.0 43.8 L46.5 44.0 L47.0 44.0 L47.5 44.3 L48.0 44.6 L48.5 44.3 L49.0 43.9 L49.5 43.6 L50.0 43.4 L50.5 43.1 L51.0 42.8 L51.5 42.4 L52.0 41.8 L52.5 41.4 L53.0 41.1 L53.5 40.8 L54.0 40.5 L54.5 40.5 L55.0 40.6 L55.5 40.7 L56.0 40.3 L56.5 40.2 L57.0 39.9 L57.5 39.8 L58.0 39.7 L58.5 40.3 L59.0 39.9 L59.5 39.8 L60.0 39.6 L60.5 39.9 L61.0 40.6 L61.5 40.8 L62.0 40.6 L62.5 41.0 L63.0 41.4 L63.5 41.5 L64.0 41.6 L64.5 41.8 L65.0 42.2 L65.5 42.5 L66.0 42.8 L66.5 43.0 L67.0 43.3 L67.5 43.7 L68.0 44.0 L68.5 44.4 L68.6 44.7 L68.6 56.2 L68.5 56.1 L68.0 56.5 L67.5 56.7 L67.0 57.2 L66.5 57.3 L66.0 57.7 L65.5 58.1 L65.0 58.1 L64.5 58.6 L64.0 58.8 L63.5 59.3 L63.0 59.5 L62.5 59.7 L62.0 60.3 L61.5 60.5 L61.0 60.1 L60.5 60.1 L60.0 60.2 L59.5 60.2 L59.0 60.3 L58.5 60.5 L58.0 60.9 L57.5 61.4 L57.0 61.3 L56.5 61.0 L56.0 60.2 L55.5 60.0 L55.0 59.6 L54.5 59.5 L54.0 59.1 L53.5 58.8 L53.0 58.6 L52.5 58.6 L52.0 58.3 L51.5 58.0 L51.0 57.9 L50.5 57.8 L50.0 57.6 L49.5 57.3 L49.0 56.9 L48.5 56.5 L48.0 55.9 L47.5 56.1 L47.0 56.3 L46.5 56.6 L46.0 56.5 L45.5 56.7 L45.0 56.6 L44.5 57.1 L44.0 57.3 L43.5 57.4 L43.0 57.5 L42.5 57.3 L42.0 57.5 L41.5 57.6 L41.0 58.0 L40.5 59.9 L40.0 60.9 L39.5 62.9 L39.0 64.4 L38.5 65.5 L38.0 66.6 L37.5 65.5 L37.0 64.6 L36.5 64.1 L36.0 63.2 L35.5 61.5 L35.0 60.1 L34.5 58.8 L34.0 58.5 L33.5 58.9 L33.0 58.8 L32.5 58.7 L32.0 58.6 L31.5 58.5 L31.0 58.5 L30.5 58.5 L30.0 58.8 L29.5 58.7 L29.0 58.3 L28.5 58.3 L28.0 58.1 L27.5 58.0 L27.0 58.3 L26.5 59.4 L26.0 60.4 L25.5 61.2 L25.0 61.5 L24.5 62.1 L24.0 61.8 L23.5 62.4 L23.0 63.3 L22.5 63.4 L22.0 63.3 L21.5 63.3 L21.0 63.4 L20.5 63.8 L20.0 63.2 L19.5 63.2 L19.0 62.8 L18.5 62.1 L18.0 61.6 L17.5 61.3 L17.0 60.5 L16.5 59.5 L16.0 58.4 L15.5 57.2 L15.0 55.9 L14.5 54.9 L14.0 55.2 L13.5 55.8 L13.0 56.6 L12.5 57.0 L12.0 57.2 L11.5 57.4 L11.0 57.6 L10.5 57.7 L10.0 57.8 L9.5 58.3 L9.0 58.4 L8.5 58.7 L8.0 59.0 L7.5 59.0 L7.0 59.0 L6.5 59.0 L6.0 59.0 L5.5 58.9 L5.0 58.7 L4.5 58.8 L4.0 58.7 L3.5 58.7 L3.0 58.6 L2.5 58.3 L2.0 58.1 L1.5 58.0 L1.0 57.9 L0.5 57.9 L0.0 58.1 Z" fill="#00c6d3"/><path d="M68.60 16.8 L53.60 16.8 L68.60 83.8 Z" fill="#000" fill-opacity="0.14"/></svg>
<div class="t" style="left:5.50px;top:3.61px;font-size:10.61px;font-weight:bold;color:#fff;;transform:scaleX(0.9144);transform-origin:0 0">ATS_101...</div>
</div>
<div class="abs" style="left:863.90px;top:185.30px;width:69.80px;height:83.8px;border-radius:4px;overflow:hidden;background:#0b7a80"><svg style="left:0;top:0" width="69.80" height="83.8" viewBox="0 0 69.80 83.8"><rect x="0" y="0" width="69.80" height="16.8" fill="#0a6567"/><path d="M0.0 42.8 L0.5 42.8 L1.0 42.4 L1.5 42.5 L2.0 42.3 L2.5 42.3 L3.0 42.2 L3.5 42.3 L4.0 42.3 L4.5 42.2 L5.0 42.0 L5.5 42.0 L6.0 42.1 L6.5 42.0 L7.0 41.8 L7.5 41.5 L8.0 41.8 L8.5 41.8 L9.0 42.2 L9.5 42.3 L10.0 42.3 L10.5 42.5 L11.0 42.6 L11.5 42.9 L12.0 43.0 L12.5 43.2 L13.0 43.8 L13.5 44.7 L14.0 45.3 L14.5 46.1 L15.0 45.4 L15.5 44.4 L16.0 42.9 L16.5 41.5 L17.0 41.0 L17.5 40.1 L18.0 39.5 L18.5 39.1 L19.0 39.0 L19.5 38.8 L20.0 38.0 L20.5 36.7 L21.0 36.1 L21.5 36.9 L22.0 37.5 L22.5 37.9 L23.0 38.2 L23.5 38.1 L24.0 38.5 L24.5 38.3 L25.0 38.8 L25.5 39.7 L26.0 39.9 L26.5 40.3 L27.0 40.8 L27.5 41.7 L28.0 42.5 L28.5 42.5 L29.0 42.3 L29.5 42.1 L30.0 42.1 L30.5 42.2 L31.0 42.0 L31.5 42.0 L32.0 42.1 L32.5 42.3 L33.0 42.6 L33.5 42.3 L34.0 42.3 L34.5 41.9 L35.0 41.8 L35.5 40.4 L36.0 39.4 L36.5 38.1 L37.0 37.5 L37.5 36.7 L38.0 35.0 L38.5 33.3 L39.0 33.4 L39.5 35.5 L40.0 37.3 L40.5 38.9 L41.0 40.1 L41.5 42.0 L42.0 42.9 L42.5 42.9 L43.0 42.7 L43.5 42.7 L44.0 43.1 L44.5 43.4 L45.0 43.7 L45.5 43.6 L46.0 43.6 L46.5 43.4 L47.0 43.6 L47.5 44.0 L48.0 44.2 L48.5 44.1 L49.0 44.4 L49.5 44.0 L50.0 43.8 L50.5 43.3 L51.0 43.1 L51.5 42.9 L52.0 42.4 L52.5 42.3 L53.0 41.9 L53.5 41.8 L54.0 41.7 L54.5 41.5 L55.0 41.4 L55.5 41.3 L56.0 40.9 L56.5 40.1 L57.0 39.7 L57.5 39.4 L58.0 39.5 L58.5 39.5 L59.0 39.5 L59.5 39.5 L60.0 39.4 L60.5 39.7 L61.0 40.1 L61.5 40.2 L62.0 40.6 L62.5 40.2 L63.0 40.1 L63.5 40.2 L64.0 40.3 L64.5 40.6 L65.0 41.0 L65.5 41.4 L66.0 41.8 L66.5 42.0 L67.0 42.4 L67.5 42.7 L68.0 43.2 L68.5 43.3 L69.0 43.8 L69.5 44.1 L69.8 44.1 L69.8 56.3 L69.5 56.6 L69.0 57.1 L68.5 57.1 L68.0 57.3 L67.5 57.5 L67.0 57.8 L66.5 58.2 L66.0 58.4 L65.5 58.6 L65.0 59.3 L64.5 59.6 L64.0 60.0 L63.5 60.1 L63.0 60.6 L62.5 60.7 L62.0 60.5 L61.5 60.8 L61.0 61.0 L60.5 61.0 L60.0 61.5 L59.5 61.8 L59.0 61.9 L58.5 62.0 L58.0 61.3 L57.5 60.9 L57.0 60.6 L56.5 60.3 L56.0 60.5 L55.5 60.4 L55.0 60.1 L54.5 59.7 L54.0 59.5 L53.5 59.4 L53.0 58.8 L52.5 58.6 L52.0 58.4 L51.5 58.1 L51.0 57.7 L50.5 57.3 L50.0 57.0 L49.5 56.4 L49.0 56.2 L48.5 56.5 L48.0 56.7 L47.5 56.8 L47.0 56.8 L46.5 56.9 L46.0 57.0 L45.5 56.8 L45.0 56.9 L44.5 57.0 L44.0 57.0 L43.5 57.1 L43.0 57.5 L42.5 57.6 L42.0 57.7 L41.5 58.9 L41.0 60.4 L40.5 61.9 L40.0 63.5 L39.5 64.6 L39.0 66.0 L38.5 67.1 L38.0 66.6 L37.5 65.1 L37.0 63.8 L36.5 62.6 L36.0 61.3 L35.5 60.2 L35.0 58.6 L34.5 58.5 L34.0 58.2 L33.5 58.5 L33.0 58.4 L32.5 58.5 L32.0 58.6 L31.5 58.4 L31.0 58.4 L30.5 58.3 L30.0 58.1 L29.5 58.0 L29.0 58.2 L28.5 58.2 L28.0 58.1 L27.5 58.3 L27.0 59.0 L26.5 60.1 L26.0 61.0 L25.5 61.8 L25.0 62.3 L24.5 62.6 L24.0 62.4 L23.5 62.8 L23.0 63.2 L22.5 63.3 L22.0 63.2 L21.5 63.7 L21.0 63.6 L20.5 63.7 L20.0 63.7 L19.5 63.2 L19.0 62.2 L18.5 62.0 L18.0 61.0 L17.5 60.4 L17.0 59.6 L16.5 58.5 L16.0 57.4 L15.5 56.3 L15.0 55.1 L14.5 54.6 L14.0 55.4 L13.5 56.0 L13.0 56.8 L12.5 57.7 L12.0 57.9 L11.5 58.0 L11.0 57.7 L10.5 58.0 L10.0 57.9 L9.5 58.1 L9.0 58.4 L8.5 58.3 L8.0 58.5 L7.5 58.6 L7.0 58.6 L6.5 58.5 L6.0 58.7 L5.5 58.8 L5.0 58.6 L4.5 58.8 L4.0 58.9 L3.5 58.9 L3.0 58.6 L2.5 58.3 L2.0 58.1 L1.5 57.8 L1.0 57.9 L0.5 58.1 L0.0 58.1 Z" fill="#00c6d3"/><path d="M69.80 16.8 L53.80 16.8 L69.80 83.8 Z" fill="#000" fill-opacity="0.14"/></svg>
<div class="t" style="left:5.50px;top:3.61px;font-size:10.61px;font-weight:bold;color:#fff;;transform:scaleX(0.9144);transform-origin:0 0">ATS_101...</div>
</div>
<div class="abs" style="left:950.70px;top:185.30px;width:69.80px;height:83.8px;border-radius:4px;overflow:hidden;background:#0b7a80"><svg style="left:0;top:0" width="69.80" height="83.8" viewBox="0 0 69.80 83.8"><rect x="0" y="0" width="69.80" height="16.8" fill="#0a6567"/><path d="M0.0 42.4 L0.5 42.4 L1.0 42.6 L1.5 42.8 L2.0 42.8 L2.5 42.6 L3.0 42.7 L3.5 42.5 L4.0 42.1 L4.5 41.5 L5.0 41.8 L5.5 42.2 L6.0 42.3 L6.5 42.2 L7.0 42.0 L7.5 42.4 L8.0 42.3 L8.5 42.3 L9.0 42.2 L9.5 42.5 L10.0 42.7 L10.5 42.7 L11.0 42.6 L11.5 42.6 L12.0 42.9 L12.5 43.0 L13.0 43.7 L13.5 44.7 L14.0 45.3 L14.5 45.7 L15.0 45.0 L15.5 43.7 L16.0 42.7 L16.5 41.7 L17.0 40.9 L17.5 40.3 L18.0 39.7 L18.5 39.2 L19.0 38.2 L19.5 37.8 L20.0 36.9 L20.5 36.7 L21.0 36.7 L21.5 36.6 L22.0 36.6 L22.5 37.0 L23.0 37.1 L23.5 37.7 L24.0 37.5 L24.5 38.4 L25.0 38.6 L25.5 39.3 L26.0 39.8 L26.5 40.4 L27.0 40.9 L27.5 41.9 L28.0 42.6 L28.5 42.4 L29.0 42.4 L29.5 42.7 L30.0 42.6 L30.5 42.5 L31.0 42.6 L31.5 42.4 L32.0 42.1 L32.5 41.9 L33.0 41.8 L33.5 41.6 L34.0 41.8 L34.5 41.9 L35.0 41.5 L35.5 40.2 L36.0 38.6 L36.5 37.6 L37.0 36.4 L37.5 35.2 L38.0 33.8 L38.5 33.0 L39.0 33.7 L39.5 35.1 L40.0 36.9 L40.5 38.7 L41.0 40.0 L41.5 41.5 L42.0 42.6 L42.5 42.8 L43.0 42.9 L43.5 43.0 L44.0 43.1 L44.5 43.3 L45.0 43.7 L45.5 43.6 L46.0 43.4 L46.5 43.4 L47.0 43.7 L47.5 44.0 L48.0 44.4 L48.5 44.2 L49.0 44.1 L49.5 43.7 L50.0 43.3 L50.5 43.2 L51.0 42.8 L51.5 42.6 L52.0 42.2 L52.5 41.8 L53.0 41.7 L53.5 41.8 L54.0 41.7 L54.5 41.2 L55.0 40.8 L55.5 40.1 L56.0 40.0 L56.5 39.9 L57.0 39.6 L57.5 39.6 L58.0 39.7 L58.5 39.8 L59.0 39.9 L59.5 40.1 L60.0 40.4 L60.5 40.0 L61.0 40.2 L61.5 40.3 L62.0 40.5 L62.5 41.0 L63.0 41.1 L63.5 41.0 L64.0 40.8 L64.5 40.7 L65.0 41.2 L65.5 41.7 L66.0 41.9 L66.5 42.4 L67.0 42.6 L67.5 42.8 L68.0 43.1 L68.5 43.6 L69.0 44.1 L69.5 44.1 L69.8 44.3 L69.8 56.4 L69.5 56.7 L69.0 56.9 L68.5 57.3 L68.0 57.2 L67.5 57.6 L67.0 57.8 L66.5 58.2 L66.0 58.8 L65.5 59.1 L65.0 59.3 L64.5 59.7 L64.0 60.0 L63.5 60.0 L63.0 59.8 L62.5 60.2 L62.0 60.5 L61.5 60.9 L61.0 61.2 L60.5 61.1 L60.0 61.5 L59.5 61.6 L59.0 61.7 L58.5 61.4 L58.0 61.3 L57.5 61.1 L57.0 60.5 L56.5 60.4 L56.0 60.1 L55.5 59.7 L55.0 59.7 L54.5 59.8 L54.0 59.5 L53.5 59.3 L53.0 58.8 L52.5 58.4 L52.0 58.3 L51.5 58.2 L51.0 57.9 L50.5 57.6 L50.0 57.1 L49.5 56.8 L49.0 56.4 L48.5 56.4 L48.0 56.3 L47.5 56.4 L47.0 56.5 L46.5 56.6 L46.0 56.7 L45.5 57.1 L45.0 57.3 L44.5 57.4 L44.0 57.2 L43.5 57.2 L43.0 57.5 L42.5 57.8 L42.0 57.9 L41.5 59.1 L41.0 60.7 L40.5 62.5 L40.0 63.4 L39.5 65.1 L39.0 66.2 L38.5 66.5 L38.0 65.2 L37.5 64.2 L37.0 63.0 L36.5 61.8 L36.0 60.8 L35.5 60.0 L35.0 58.9 L34.5 58.5 L34.0 58.7 L33.5 58.4 L33.0 58.5 L32.5 58.2 L32.0 58.4 L31.5 58.1 L31.0 58.2 L30.5 58.2 L30.0 58.3 L29.5 58.3 L29.0 57.8 L28.5 57.9 L28.0 57.8 L27.5 58.8 L27.0 59.6 L26.5 60.4 L26.0 60.7 L25.5 61.2 L25.0 61.9 L24.5 62.1 L24.0 62.7 L23.5 63.0 L23.0 62.9 L22.5 63.5 L22.0 63.7 L21.5 64.4 L21.0 64.5 L20.5 63.9 L20.0 63.6 L19.5 62.9 L19.0 62.2 L18.5 61.7 L18.0 60.9 L17.5 60.2 L17.0 59.7 L16.5 59.0 L16.0 57.9 L15.5 56.4 L15.0 55.3 L14.5 54.8 L14.0 55.6 L13.5 56.4 L13.0 57.1 L12.5 57.3 L12.0 57.1 L11.5 57.3 L11.0 57.6 L10.5 57.9 L10.0 58.1 L9.5 58.4 L9.0 58.6 L8.5 58.6 L8.0 58.4 L7.5 58.7 L7.0 58.7 L6.5 58.8 L6.0 58.9 L5.5 58.6 L5.0 58.6 L4.5 58.4 L4.0 58.5 L3.5 58.4 L3.0 58.1 L2.5 58.0 L2.0 58.3 L1.5 58.4 L1.0 57.9 L0.5 57.8 L0.0 57.8 Z" fill="#00c6d3"/><path d="M69.80 16.8 L52.80 16.8 L69.80 83.8 Z" fill="#000" fill-opacity="0.14"/></svg>
<div class="t" style="left:5.50px;top:3.61px;font-size:10.61px;font-weight:bold;color:#fff;;transform:scaleX(0.9144);transform-origin:0 0">ATS_101...</div>
</div>
<div class="abs" style="left:1208.90px;top:185.30px;width:69.40px;height:83.8px;border-radius:4px;overflow:hidden;background:#0b7a80"><svg style="left:0;top:0" width="69.40" height="83.8" viewBox="0 0 69.40 83.8"><rect x="0" y="0" width="69.40" height="16.8" fill="#0a6567"/><path d="M0.0 42.2 L0.5 42.1 L1.0 42.1 L1.5 42.1 L2.0 42.0 L2.5 41.9 L3.0 41.9 L3.5 42.2 L4.0 42.4 L4.5 42.5 L5.0 42.2 L5.5 42.0 L6.0 41.8 L6.5 41.7 L7.0 42.0 L7.5 42.0 L8.0 42.2 L8.5 42.2 L9.0 42.2 L9.5 42.6 L10.0 42.6 L10.5 43.1 L11.0 43.1 L11.5 43.2 L12.0 43.4 L12.5 43.3 L13.0 44.0 L13.5 44.6 L14.0 45.3 L14.5 46.1 L15.0 45.2 L15.5 43.8 L16.0 42.8 L16.5 41.2 L17.0 40.9 L17.5 40.4 L18.0 40.3 L18.5 39.6 L19.0 39.1 L19.5 38.8 L20.0 37.8 L20.5 37.0 L21.0 36.4 L21.5 36.8 L22.0 37.2 L22.5 37.5 L23.0 37.8 L23.5 37.6 L24.0 38.2 L24.5 37.9 L25.0 38.0 L25.5 38.9 L26.0 39.7 L26.5 40.7 L27.0 41.6 L27.5 42.5 L28.0 43.0 L28.5 43.0 L29.0 42.8 L29.5 42.2 L30.0 42.2 L30.5 42.2 L31.0 42.2 L31.5 42.0 L32.0 42.0 L32.5 41.9 L33.0 42.0 L33.5 41.9 L34.0 41.9 L34.5 41.8 L35.0 41.0 L35.5 39.4 L36.0 38.2 L36.5 37.4 L37.0 36.5 L37.5 35.8 L38.0 34.2 L38.5 33.4 L39.0 34.4 L39.5 36.4 L40.0 37.8 L40.5 39.7 L41.0 40.7 L41.5 42.2 L42.0 42.8 L42.5 42.7 L43.0 43.0 L43.5 43.0 L44.0 43.3 L44.5 43.3 L45.0 43.7 L45.5 43.7 L46.0 44.0 L46.5 44.1 L47.0 44.2 L47.5 44.3 L48.0 44.1 L48.5 44.3 L49.0 44.1 L49.5 43.5 L50.0 43.2 L50.5 43.2 L51.0 43.0 L51.5 42.5 L52.0 42.4 L52.5 41.9 L53.0 41.7 L53.5 41.3 L54.0 41.1 L54.5 40.9 L55.0 40.8 L55.5 40.8 L56.0 40.6 L56.5 40.5 L57.0 40.4 L57.5 40.1 L58.0 39.5 L58.5 39.7 L59.0 39.6 L59.5 39.5 L60.0 39.4 L60.5 39.7 L61.0 40.1 L61.5 40.6 L62.0 40.8 L62.5 40.8 L63.0 41.0 L63.5 41.0 L64.0 41.5 L64.5 41.6 L65.0 41.8 L65.5 42.2 L66.0 42.8 L66.5 42.9 L67.0 43.0 L67.5 43.2 L68.0 43.7 L68.5 43.8 L69.0 44.0 L69.4 44.2 L69.4 56.1 L69.0 56.6 L68.5 57.0 L68.0 57.4 L67.5 57.8 L67.0 58.0 L66.5 58.0 L66.0 58.4 L65.5 58.6 L65.0 58.9 L64.5 59.1 L64.0 59.5 L63.5 59.9 L63.0 60.4 L62.5 60.3 L62.0 60.3 L61.5 60.5 L61.0 60.7 L60.5 60.5 L60.0 60.3 L59.5 60.5 L59.0 61.2 L58.5 61.5 L58.0 61.0 L57.5 60.8 L57.0 60.4 L56.5 60.2 L56.0 59.9 L55.5 59.6 L55.0 59.9 L54.5 59.8 L54.0 60.0 L53.5 59.6 L53.0 59.3 L52.5 59.0 L52.0 58.7 L51.5 57.8 L51.0 57.5 L50.5 57.3 L50.0 57.1 L49.5 56.8 L49.0 56.5 L48.5 56.2 L48.0 56.0 L47.5 56.4 L47.0 56.3 L46.5 56.6 L46.0 56.6 L45.5 56.8 L45.0 56.9 L44.5 57.4 L44.0 57.5 L43.5 57.9 L43.0 57.9 L42.5 57.6 L42.0 57.9 L41.5 58.4 L41.0 60.1 L40.5 61.5 L40.0 62.9 L39.5 64.7 L39.0 66.4 L38.5 67.9 L38.0 66.8 L37.5 65.5 L37.0 64.1 L36.5 63.2 L36.0 62.5 L35.5 60.9 L35.0 60.0 L34.5 59.2 L34.0 58.9 L33.5 59.1 L33.0 59.2 L32.5 58.9 L32.0 58.6 L31.5 58.7 L31.0 58.6 L30.5 58.6 L30.0 58.3 L29.5 58.4 L29.0 57.8 L28.5 57.8 L28.0 57.7 L27.5 58.2 L27.0 59.0 L26.5 59.6 L26.0 60.5 L25.5 60.8 L25.0 61.8 L24.5 62.7 L24.0 63.3 L23.5 63.3 L23.0 62.9 L22.5 62.7 L22.0 63.3 L21.5 63.8 L21.0 64.4 L20.5 63.8 L20.0 63.1 L19.5 62.7 L19.0 62.3 L18.5 62.0 L18.0 61.3 L17.5 60.9 L17.0 60.0 L16.5 59.2 L16.0 58.1 L15.5 56.8 L15.0 55.5 L14.5 54.7 L14.0 55.4 L13.5 56.1 L13.0 56.8 L12.5 57.6 L12.0 57.7 L11.5 58.0 L11.0 57.9 L10.5 58.1 L10.0 58.2 L9.5 58.2 L9.0 58.1 L8.5 58.2 L8.0 58.3 L7.5 58.5 L7.0 58.7 L6.5 58.9 L6.0 58.8 L5.5 58.8 L5.0 58.6 L4.5 58.7 L4.0 58.6 L3.5 58.2 L3.0 58.1 L2.5 58.1 L2.0 58.1 L1.5 58.1 L1.0 57.9 L0.5 57.8 L0.0 57.7 Z" fill="#00c6d3"/><path d="M69.40 16.8 L53.40 16.8 L69.40 83.8 Z" fill="#000" fill-opacity="0.14"/></svg>
<div class="t" style="left:5.50px;top:3.61px;font-size:10.61px;font-weight:bold;color:#fff;;transform:scaleX(0.9144);transform-origin:0 0">ATS_101...</div>
</div>
<div class="abs" style="left:1310.70px;top:185.30px;width:69.60px;height:83.8px;border-radius:4px;overflow:hidden;background:#0b7a80"><svg style="left:0;top:0" width="69.60" height="83.8" viewBox="0 0 69.60 83.8"><rect x="0" y="0" width="69.60" height="16.8" fill="#0a6567"/><path d="M0.0 42.6 L0.5 42.4 L1.0 42.2 L1.5 42.3 L2.0 42.2 L2.5 42.5 L3.0 42.7 L3.5 42.3 L4.0 42.1 L4.5 41.6 L5.0 41.7 L5.5 42.1 L6.0 42.0 L6.5 42.1 L7.0 41.8 L7.5 41.9 L8.0 42.2 L8.5 42.3 L9.0 42.8 L9.5 42.5 L10.0 42.5 L10.5 42.4 L11.0 42.9 L11.5 42.9 L12.0 43.2 L12.5 43.4 L13.0 43.9 L13.5 44.5 L14.0 45.1 L14.5 45.9 L15.0 44.9 L15.5 43.7 L16.0 42.4 L16.5 41.3 L17.0 40.4 L17.5 40.1 L18.0 39.6 L18.5 39.1 L19.0 38.0 L19.5 37.4 L20.0 36.9 L20.5 36.5 L21.0 36.2 L21.5 36.8 L22.0 37.6 L22.5 37.6 L23.0 38.1 L23.5 37.7 L24.0 38.1 L24.5 37.9 L25.0 38.1 L25.5 38.6 L26.0 39.3 L26.5 40.3 L27.0 41.0 L27.5 42.1 L28.0 42.7 L28.5 42.8 L29.0 42.7 L29.5 42.4 L30.0 42.5 L30.5 42.4 L31.0 42.1 L31.5 41.7 L32.0 41.9 L32.5 42.4 L33.0 42.5 L33.5 42.3 L34.0 41.7 L34.5 41.5 L35.0 41.2 L35.5 40.0 L36.0 38.7 L36.5 37.6 L37.0 36.8 L37.5 36.3 L38.0 35.0 L38.5 33.9 L39.0 34.7 L39.5 36.4 L40.0 37.6 L40.5 39.4 L41.0 40.6 L41.5 41.9 L42.0 42.5 L42.5 42.9 L43.0 43.1 L43.5 43.1 L44.0 43.0 L44.5 43.1 L45.0 43.2 L45.5 43.4 L46.0 43.4 L46.5 43.4 L47.0 43.8 L47.5 44.1 L48.0 44.3 L48.5 44.4 L49.0 44.1 L49.5 43.6 L50.0 43.3 L50.5 43.3 L51.0 43.4 L51.5 42.9 L52.0 42.6 L52.5 42.4 L53.0 42.0 L53.5 41.6 L54.0 41.1 L54.5 40.8 L55.0 40.7 L55.5 40.5 L56.0 40.2 L56.5 39.7 L57.0 39.4 L57.5 39.3 L58.0 38.9 L58.5 38.6 L59.0 39.1 L59.5 39.1 L60.0 39.3 L60.5 39.5 L61.0 40.3 L61.5 40.3 L62.0 40.6 L62.5 40.3 L63.0 40.2 L63.5 40.7 L64.0 40.6 L64.5 41.0 L65.0 41.3 L65.5 42.0 L66.0 42.3 L66.5 42.7 L67.0 42.7 L67.5 43.0 L68.0 43.3 L68.5 43.9 L69.0 44.3 L69.5 44.5 L69.6 44.7 L69.6 56.3 L69.5 56.3 L69.0 56.7 L68.5 57.0 L68.0 57.3 L67.5 57.7 L67.0 57.8 L66.5 58.2 L66.0 58.3 L65.5 58.6 L65.0 58.9 L64.5 58.9 L64.0 59.4 L63.5 60.0 L63.0 60.0 L62.5 60.2 L62.0 60.6 L61.5 60.8 L61.0 61.0 L60.5 61.3 L60.0 61.3 L59.5 61.3 L59.0 61.0 L58.5 61.2 L58.0 61.0 L57.5 60.9 L57.0 60.3 L56.5 60.4 L56.0 60.1 L55.5 59.9 L55.0 59.4 L54.5 59.1 L54.0 59.1 L53.5 59.1 L53.0 58.9 L52.5 58.6 L52.0 58.3 L51.5 57.9 L51.0 57.5 L50.5 57.4 L50.0 56.9 L49.5 56.9 L49.0 56.6 L48.5 56.3 L48.0 56.4 L47.5 56.5 L47.0 56.8 L46.5 57.0 L46.0 57.1 L45.5 57.3 L45.0 57.2 L44.5 57.6 L44.0 57.7 L43.5 57.9 L43.0 58.0 L42.5 57.8 L42.0 57.6 L41.5 58.3 L41.0 60.0 L40.5 61.9 L40.0 63.3 L39.5 64.7 L39.0 66.1 L38.5 67.5 L38.0 66.2 L37.5 64.5 L37.0 63.5 L36.5 62.4 L36.0 61.7 L35.5 60.4 L35.0 59.1 L34.5 58.2 L34.0 58.3 L33.5 58.3 L33.0 58.4 L32.5 58.4 L32.0 58.2 L31.5 58.3 L31.0 58.1 L30.5 58.3 L30.0 58.6 L29.5 58.4 L29.0 58.0 L28.5 58.1 L28.0 57.9 L27.5 58.5 L27.0 59.4 L26.5 60.0 L26.0 60.6 L25.5 61.2 L25.0 61.8 L24.5 62.3 L24.0 62.2 L23.5 62.5 L23.0 63.4 L22.5 64.0 L22.0 63.8 L21.5 64.0 L21.0 63.6 L20.5 63.7 L20.0 62.7 L19.5 62.3 L19.0 62.1 L18.5 61.5 L18.0 61.1 L17.5 60.7 L17.0 60.1 L16.5 59.2 L16.0 57.9 L15.5 56.7 L15.0 55.6 L14.5 54.9 L14.0 55.5 L13.5 56.3 L13.0 56.9 L12.5 57.4 L12.0 57.4 L11.5 57.6 L11.0 57.9 L10.5 58.1 L10.0 58.0 L9.5 57.9 L9.0 58.2 L8.5 58.3 L8.0 58.6 L7.5 58.6 L7.0 58.9 L6.5 59.0 L6.0 58.9 L5.5 58.8 L5.0 59.0 L4.5 58.8 L4.0 58.7 L3.5 58.5 L3.0 58.2 L2.5 58.3 L2.0 57.9 L1.5 57.7 L1.0 57.8 L0.5 58.4 L0.0 58.4 Z" fill="#00c6d3"/><path d="M69.60 16.8 L34.60 16.8 L69.60 83.8 Z" fill="#000" fill-opacity="0.14"/></svg>
<div class="t" style="left:5.50px;top:3.61px;font-size:10.61px;font-weight:bold;color:#fff;;transform:scaleX(0.9144);transform-origin:0 0">ATS_101...</div>
</div>
<div class="abs" style="left:1404.70px;top:185.30px;width:69.60px;height:83.8px;border-radius:4px;overflow:hidden;background:#0b7a80"><svg style="left:0;top:0" width="69.60" height="83.8" viewBox="0 0 69.60 83.8"><rect x="0" y="0" width="69.60" height="16.8" fill="#0a6567"/><path d="M0.0 42.7 L0.5 42.7 L1.0 42.3 L1.5 42.0 L2.0 42.0 L2.5 42.2 L3.0 42.0 L3.5 42.2 L4.0 42.4 L4.5 42.3 L5.0 42.1 L5.5 41.9 L6.0 41.6 L6.5 41.4 L7.0 41.5 L7.5 41.9 L8.0 42.2 L8.5 42.3 L9.0 42.7 L9.5 42.7 L10.0 42.3 L10.5 42.4 L11.0 42.5 L11.5 42.9 L12.0 43.3 L12.5 43.3 L13.0 44.0 L13.5 44.5 L14.0 45.3 L14.5 46.0 L15.0 45.1 L15.5 44.0 L16.0 42.7 L16.5 41.4 L17.0 40.9 L17.5 40.5 L18.0 39.9 L18.5 39.1 L19.0 38.6 L19.5 37.9 L20.0 37.5 L20.5 36.7 L21.0 36.4 L21.5 36.6 L22.0 37.1 L22.5 37.5 L23.0 37.2 L23.5 37.3 L24.0 37.7 L24.5 38.1 L25.0 38.4 L25.5 39.1 L26.0 39.8 L26.5 40.3 L27.0 41.1 L27.5 42.1 L28.0 42.6 L28.5 42.8 L29.0 42.7 L29.5 42.5 L30.0 42.6 L30.5 42.3 L31.0 42.1 L31.5 42.1 L32.0 42.4 L32.5 42.2 L33.0 42.2 L33.5 42.3 L34.0 41.5 L34.5 41.3 L35.0 41.2 L35.5 39.9 L36.0 38.7 L36.5 37.7 L37.0 37.4 L37.5 35.9 L38.0 35.2 L38.5 33.7 L39.0 34.3 L39.5 36.1 L40.0 37.9 L40.5 39.2 L41.0 40.6 L41.5 42.2 L42.0 42.8 L42.5 43.0 L43.0 43.2 L43.5 43.4 L44.0 43.5 L44.5 43.3 L45.0 43.5 L45.5 43.5 L46.0 43.9 L46.5 44.1 L47.0 44.2 L47.5 44.1 L48.0 44.2 L48.5 44.3 L49.0 44.1 L49.5 43.7 L50.0 43.7 L50.5 43.6 L51.0 43.2 L51.5 42.9 L52.0 42.3 L52.5 41.7 L53.0 41.6 L53.5 41.6 L54.0 41.9 L54.5 41.3 L55.0 41.2 L55.5 41.1 L56.0 40.7 L56.5 39.8 L57.0 39.7 L57.5 39.5 L58.0 39.8 L58.5 39.6 L59.0 39.6 L59.5 39.6 L60.0 39.9 L60.5 40.0 L61.0 39.8 L61.5 39.9 L62.0 40.3 L62.5 40.7 L63.0 40.5 L63.5 40.9 L64.0 41.0 L64.5 41.4 L65.0 41.7 L65.5 42.0 L66.0 42.1 L66.5 42.5 L67.0 42.7 L67.5 43.2 L68.0 43.4 L68.5 44.1 L69.0 44.3 L69.5 44.3 L69.6 44.3 L69.6 56.5 L69.5 56.2 L69.0 56.4 L68.5 56.7 L68.0 57.3 L67.5 57.4 L67.0 57.6 L66.5 57.7 L66.0 58.1 L65.5 58.6 L65.0 59.1 L64.5 59.6 L64.0 60.0 L63.5 60.1 L63.0 60.3 L62.5 60.1 L62.0 60.2 L61.5 59.9 L61.0 60.3 L60.5 60.6 L60.0 60.4 L59.5 60.8 L59.0 61.2 L58.5 61.5 L58.0 61.1 L57.5 60.5 L57.0 60.1 L56.5 59.9 L56.0 59.9 L55.5 59.9 L55.0 59.6 L54.5 59.7 L54.0 59.4 L53.5 59.3 L53.0 58.8 L52.5 58.5 L52.0 58.2 L51.5 58.0 L51.0 57.8 L50.5 57.5 L50.0 57.2 L49.5 57.0 L49.0 56.7 L48.5 56.4 L48.0 56.4 L47.5 56.6 L47.0 56.9 L46.5 57.0 L46.0 57.1 L45.5 56.9 L45.0 56.9 L44.5 57.3 L44.0 57.7 L43.5 57.7 L43.0 58.0 L42.5 57.8 L42.0 57.9 L41.5 58.7 L41.0 60.1 L40.5 61.6 L40.0 63.3 L39.5 64.7 L39.0 66.0 L38.5 67.4 L38.0 66.4 L37.5 65.1 L37.0 63.7 L36.5 62.9 L36.0 61.6 L35.5 60.5 L35.0 58.9 L34.5 58.7 L34.0 58.7 L33.5 58.5 L33.0 58.6 L32.5 58.5 L32.0 58.5 L31.5 58.3 L31.0 58.4 L30.5 58.4 L30.0 58.2 L29.5 58.4 L29.0 58.1 L28.5 58.0 L28.0 57.8 L27.5 58.3 L27.0 59.0 L26.5 59.7 L26.0 60.7 L25.5 61.6 L25.0 62.1 L24.5 63.0 L24.0 63.4 L23.5 62.9 L23.0 62.6 L22.5 62.8 L22.0 63.2 L21.5 63.2 L21.0 63.7 L20.5 63.2 L20.0 63.1 L19.5 63.0 L19.0 62.2 L18.5 61.6 L18.0 61.6 L17.5 60.8 L17.0 60.3 L16.5 59.2 L16.0 58.0 L15.5 56.5 L15.0 55.4 L14.5 54.5 L14.0 55.2 L13.5 55.8 L13.0 56.6 L12.5 57.1 L12.0 57.4 L11.5 57.4 L11.0 57.5 L10.5 57.8 L10.0 58.0 L9.5 58.2 L9.0 58.6 L8.5 58.6 L8.0 58.6 L7.5 58.5 L7.0 58.7 L6.5 58.5 L6.0 58.7 L5.5 58.6 L5.0 58.4 L4.5 58.6 L4.0 58.3 L3.5 58.3 L3.0 58.3 L2.5 58.4 L2.0 58.6 L1.5 58.3 L1.0 58.3 L0.5 57.9 L0.0 57.9 Z" fill="#00c6d3"/><path d="M69.60 16.8 L38.60 16.8 L69.60 83.8 Z" fill="#000" fill-opacity="0.14"/></svg>
<div class="t" style="left:5.50px;top:3.61px;font-size:10.61px;font-weight:bold;color:#fff;;transform:scaleX(0.9144);transform-origin:0 0">ATS_101...</div>
</div>
<div class="abs" style="left:510.70px;top:275.85px;width:139.50px;height:83.8px;border-radius:4px;overflow:hidden;background:#0d704e"><svg style="left:0;top:0" width="139.50" height="83.8" viewBox="0 0 139.50 83.8"><rect x="0" y="0" width="139.50" height="16.8" fill="#0c5d40"/><path d="M0.0 45.5 L0.5 45.6 L1.0 45.9 L1.5 45.6 L2.0 46.1 L2.5 46.2 L3.0 45.9 L3.5 46.1 L4.0 45.8 L4.5 45.6 L5.0 45.6 L5.5 45.4 L6.0 45.4 L6.5 46.0 L7.0 45.7 L7.5 45.9 L8.0 45.8 L8.5 45.8 L9.0 45.6 L9.5 45.7 L10.0 45.6 L10.5 45.8 L11.0 45.3 L11.5 45.5 L12.0 45.2 L12.5 45.4 L13.0 45.2 L13.5 44.8 L14.0 44.9 L14.5 44.8 L15.0 45.0 L15.5 45.4 L16.0 45.3 L16.5 45.1 L17.0 45.0 L17.5 44.5 L18.0 44.6 L18.5 44.4 L19.0 44.6 L19.5 44.6 L20.0 45.2 L20.5 45.3 L21.0 45.5 L21.5 45.6 L22.0 45.7 L22.5 45.7 L23.0 45.7 L23.5 45.2 L24.0 45.3 L24.5 45.3 L25.0 44.8 L25.5 44.2 L26.0 43.7 L26.5 44.1 L27.0 43.8 L27.5 43.9 L28.0 44.0 L28.5 43.9 L29.0 43.5 L29.5 43.4 L30.0 43.2 L30.5 43.3 L31.0 42.8 L31.5 42.6 L32.0 42.5 L32.5 43.1 L33.0 43.3 L33.5 43.2 L34.0 43.4 L34.5 42.9 L35.0 43.3 L35.5 43.2 L36.0 43.2 L36.5 43.6 L37.0 43.7 L37.5 43.6 L38.0 43.8 L38.5 43.6 L39.0 43.5 L39.5 43.2 L40.0 42.9 L40.5 42.1 L41.0 42.8 L41.5 42.6 L42.0 42.4 L42.5 42.4 L43.0 42.3 L43.5 42.8 L44.0 42.8 L44.5 42.6 L45.0 43.0 L45.5 43.0 L46.0 42.9 L46.5 42.4 L47.0 42.3 L47.5 42.3 L48.0 42.3 L48.5 42.3 L49.0 42.9 L49.5 42.1 L50.0 42.4 L50.5 42.0 L51.0 42.0 L51.5 42.9 L52.0 42.9 L52.5 43.4 L53.0 43.2 L53.5 43.2 L54.0 42.6 L54.5 43.0 L55.0 43.0 L55.5 42.9 L56.0 42.8 L56.5 42.9 L57.0 42.5 L57.5 42.5 L58.0 42.1 L58.5 42.3 L59.0 42.2 L59.5 42.1 L60.0 42.2 L60.5 42.8 L61.0 42.9 L61.5 43.5 L62.0 43.6 L62.5 43.2 L63.0 43.5 L63.5 43.0 L64.0 43.2 L64.5 43.2 L65.0 43.2 L65.5 43.5 L66.0 43.1 L66.5 43.3 L67.0 43.4 L67.5 43.0 L68.0 42.9 L68.5 42.7 L69.0 42.9 L69.5 43.1 L70.0 43.0 L70.5 43.5 L71.0 43.2 L71.5 43.1 L72.0 42.8 L72.5 43.2 L73.0 43.8 L73.5 43.8 L74.0 43.8 L74.5 43.7 L75.0 43.4 L75.5 43.7 L76.0 43.9 L76.5 44.1 L77.0 44.2 L77.5 44.0 L78.0 43.7 L78.5 43.3 L79.0 43.6 L79.5 43.6 L80.0 43.9 L80.5 43.4 L81.0 43.4 L81.5 43.7 L82.0 43.1 L82.5 43.2 L83.0 43.0 L83.5 43.0 L84.0 43.0 L84.5 43.2 L85.0 43.7 L85.5 44.0 L86.0 43.9 L86.5 44.1 L87.0 44.6 L87.5 44.3 L88.0 44.4 L88.5 43.9 L89.0 43.2 L89.5 43.3 L90.0 43.4 L90.5 43.4 L91.0 43.2 L91.5 43.7 L92.0 43.6 L92.5 44.2 L93.0 44.4 L93.5 44.4 L94.0 44.2 L94.5 44.0 L95.0 43.8 L95.5 44.0 L96.0 43.2 L96.5 43.5 L97.0 44.2 L97.5 44.3 L98.0 44.7 L98.5 44.2 L99.0 44.6 L99.5 44.8 L100.0 44.8 L100.5 44.4 L101.0 44.2 L101.5 43.9 L102.0 43.9 L102.5 43.8 L103.0 44.0 L103.5 44.0 L104.0 44.0 L104.5 44.0 L105.0 44.2 L105.5 44.2 L106.0 44.1 L106.5 43.7 L107.0 43.7 L107.5 44.3 L108.0 44.4 L108.5 44.0 L109.0 44.2 L109.5 44.7 L110.0 44.5 L110.5 44.2 L111.0 44.4 L111.5 44.8 L112.0 44.6 L112.5 44.7 L113.0 44.5 L113.5 44.6 L114.0 45.0 L114.5 44.7 L115.0 44.5 L115.5 44.4 L116.0 44.4 L116.5 44.4 L117.0 44.7 L117.5 44.5 L118.0 44.5 L118.5 43.9 L119.0 43.8 L119.5 44.2 L120.0 44.3 L120.5 44.4 L121.0 44.6 L121.5 44.7 L122.0 44.7 L122.5 44.2 L123.0 44.4 L123.5 44.8 L124.0 44.4 L124.5 45.0 L125.0 44.3 L125.5 44.7 L126.0 44.5 L126.5 44.8 L127.0 44.7 L127.5 44.6 L128.0 44.5 L128.5 44.5 L129.0 44.6 L129.5 44.2 L130.0 44.0 L130.5 44.3 L131.0 44.7 L131.5 44.2 L132.0 44.7 L132.5 44.1 L133.0 44.3 L133.5 44.6 L134.0 44.6 L134.5 44.7 L135.0 44.7 L135.5 44.5 L136.0 44.7 L136.5 44.5 L137.0 44.8 L137.5 44.8 L138.0 44.4 L138.5 44.3 L139.0 44.2 L139.5 44.3 L139.5 43.9 L139.5 55.3 L139.5 55.4 L139.0 56.1 L138.5 56.0 L138.0 56.1 L137.5 56.1 L137.0 56.3 L136.5 56.2 L136.0 56.6 L135.5 56.1 L135.0 56.1 L134.5 56.3 L134.0 56.1 L133.5 55.8 L133.0 55.8 L132.5 55.5 L132.0 55.8 L131.5 55.6 L131.0 55.7 L130.5 55.9 L130.0 56.4 L129.5 56.0 L129.0 56.2 L128.5 55.9 L128.0 55.6 L127.5 55.7 L127.0 56.0 L126.5 56.1 L126.0 55.8 L125.5 55.6 L125.0 55.5 L124.5 55.3 L124.0 55.5 L123.5 55.6 L123.0 55.3 L122.5 55.3 L122.0 55.8 L121.5 55.9 L121.0 56.3 L120.5 56.1 L120.0 55.8 L119.5 55.6 L119.0 55.8 L118.5 56.1 L118.0 55.9 L117.5 56.0 L117.0 56.4 L116.5 56.1 L116.0 56.4 L115.5 56.2 L115.0 55.9 L114.5 56.0 L114.0 56.0 L113.5 55.8 L113.0 55.8 L112.5 56.5 L112.0 56.6 L111.5 56.5 L111.0 56.2 L110.5 56.2 L110.0 56.4 L109.5 56.1 L109.0 56.0 L108.5 55.8 L108.0 55.9 L107.5 55.8 L107.0 55.8 L106.5 56.0 L106.0 55.9 L105.5 56.5 L105.0 56.6 L104.5 56.2 L104.0 56.3 L103.5 56.1 L103.0 56.4 L102.5 56.2 L102.0 56.4 L101.5 56.3 L101.0 56.2 L100.5 56.3 L100.0 57.1 L99.5 56.7 L99.0 56.6 L98.5 56.8 L98.0 56.6 L97.5 56.7 L97.0 56.7 L96.5 57.0 L96.0 56.6 L95.5 56.8 L95.0 56.8 L94.5 56.7 L94.0 56.6 L93.5 56.6 L93.0 57.0 L92.5 57.0 L92.0 56.7 L91.5 56.2 L91.0 55.9 L90.5 55.9 L90.0 56.2 L89.5 56.5 L89.0 56.8 L88.5 56.7 L88.0 56.1 L87.5 56.2 L87.0 55.9 L86.5 55.9 L86.0 55.9 L85.5 55.8 L85.0 56.0 L84.5 55.9 L84.0 55.7 L83.5 56.0 L83.0 56.7 L82.5 57.2 L82.0 57.4 L81.5 56.8 L81.0 56.7 L80.5 56.2 L80.0 56.5 L79.5 56.4 L79.0 56.4 L78.5 56.6 L78.0 56.4 L77.5 56.8 L77.0 56.7 L76.5 56.9 L76.0 57.2 L75.5 56.9 L75.0 56.9 L74.5 56.6 L74.0 56.5 L73.5 56.9 L73.0 57.1 L72.5 57.5 L72.0 57.2 L71.5 57.7 L71.0 57.9 L70.5 57.9 L70.0 58.2 L69.5 57.9 L69.0 57.4 L68.5 57.8 L68.0 57.9 L67.5 57.1 L67.0 57.4 L66.5 57.2 L66.0 57.1 L65.5 57.6 L65.0 57.5 L64.5 58.1 L64.0 57.9 L63.5 57.5 L63.0 58.1 L62.5 58.1 L62.0 57.7 L61.5 57.8 L61.0 57.7 L60.5 57.6 L60.0 58.4 L59.5 58.9 L59.0 58.8 L58.5 58.0 L58.0 58.3 L57.5 58.4 L57.0 58.4 L56.5 58.1 L56.0 58.7 L55.5 58.5 L55.0 58.0 L54.5 58.1 L54.0 58.1 L53.5 58.0 L53.0 58.1 L52.5 58.1 L52.0 57.8 L51.5 57.5 L51.0 57.8 L50.5 57.8 L50.0 57.9 L49.5 58.4 L49.0 58.8 L48.5 58.5 L48.0 58.2 L47.5 57.5 L47.0 57.4 L46.5 57.5 L46.0 56.8 L45.5 57.4 L45.0 56.9 L44.5 57.5 L44.0 57.2 L43.5 58.0 L43.0 57.4 L42.5 58.0 L42.0 57.5 L41.5 57.3 L41.0 57.1 L40.5 56.8 L40.0 57.2 L39.5 57.2 L39.0 58.1 L38.5 58.5 L38.0 58.4 L37.5 58.2 L37.0 58.6 L36.5 58.4 L36.0 58.0 L35.5 56.8 L35.0 56.6 L34.5 56.6 L34.0 56.8 L33.5 57.1 L33.0 57.0 L32.5 57.0 L32.0 57.5 L31.5 57.8 L31.0 57.1 L30.5 56.8 L30.0 56.3 L29.5 56.0 L29.0 56.3 L28.5 56.9 L28.0 57.2 L27.5 56.7 L27.0 56.0 L26.5 56.0 L26.0 55.9 L25.5 56.1 L25.0 56.4 L24.5 56.7 L24.0 56.0 L23.5 56.2 L23.0 55.6 L22.5 55.8 L22.0 55.7 L21.5 55.5 L21.0 55.6 L20.5 55.8 L20.0 55.1 L19.5 55.0 L19.0 54.8 L18.5 55.0 L18.0 55.4 L17.5 55.3 L17.0 55.2 L16.5 54.8 L16.0 54.9 L15.5 54.9 L15.0 55.3 L14.5 55.5 L14.0 55.4 L13.5 55.6 L13.0 55.4 L12.5 55.7 L12.0 55.6 L11.5 55.4 L11.0 55.0 L10.5 55.0 L10.0 54.9 L9.5 54.7 L9.0 55.1 L8.5 55.0 L8.0 55.2 L7.5 55.2 L7.0 55.4 L6.5 55.0 L6.0 54.8 L5.5 54.5 L5.0 54.5 L4.5 54.8 L4.0 54.8 L3.5 55.1 L3.0 55.0 L2.5 54.6 L2.0 54.5 L1.5 54.4 L1.0 54.9 L0.5 55.0 L0.0 55.2 Z" fill="#00c47c"/></svg>
<div class="t" style="left:5.50px;top:3.61px;font-size:10.61px;font-weight:bold;color:#fff;;transform:scaleX(0.9896);transform-origin:0 0">Forest_80_Cm_Dron...</div>
</div>
<div class="abs" style="left:650.90px;top:275.85px;width:140.50px;height:83.8px;border-radius:4px;overflow:hidden;background:#0d704e"><svg style="left:0;top:0" width="140.50" height="83.8" viewBox="0 0 140.50 83.8"><rect x="0" y="0" width="140.50" height="16.8" fill="#0c5d40"/><path d="M0.0 46.2 L0.5 45.9 L1.0 46.2 L1.5 46.2 L2.0 46.2 L2.5 45.9 L3.0 45.9 L3.5 45.7 L4.0 45.8 L4.5 45.7 L5.0 45.4 L5.5 45.2 L6.0 45.6 L6.5 45.6 L7.0 45.9 L7.5 46.0 L8.0 45.8 L8.5 46.0 L9.0 45.8 L9.5 45.7 L10.0 45.8 L10.5 45.8 L11.0 45.8 L11.5 45.3 L12.0 45.3 L12.5 45.2 L13.0 45.3 L13.5 45.4 L14.0 45.7 L14.5 45.6 L15.0 45.1 L15.5 45.2 L16.0 45.1 L16.5 44.9 L17.0 45.0 L17.5 45.2 L18.0 45.2 L18.5 45.3 L19.0 45.8 L19.5 45.5 L20.0 45.7 L20.5 45.0 L21.0 45.1 L21.5 45.2 L22.0 44.8 L22.5 44.9 L23.0 45.2 L23.5 45.1 L24.0 44.9 L24.5 44.5 L25.0 44.8 L25.5 44.4 L26.0 43.9 L26.5 44.0 L27.0 44.2 L27.5 44.5 L28.0 44.8 L28.5 45.0 L29.0 45.0 L29.5 44.5 L30.0 44.6 L30.5 44.0 L31.0 43.3 L31.5 42.8 L32.0 42.7 L32.5 43.0 L33.0 43.3 L33.5 43.6 L34.0 43.8 L34.5 43.9 L35.0 43.4 L35.5 43.9 L36.0 43.4 L36.5 43.1 L37.0 43.5 L37.5 43.4 L38.0 43.3 L38.5 42.9 L39.0 42.9 L39.5 42.4 L40.0 42.6 L40.5 42.1 L41.0 42.7 L41.5 43.3 L42.0 43.2 L42.5 43.3 L43.0 43.2 L43.5 43.3 L44.0 43.1 L44.5 43.2 L45.0 42.9 L45.5 42.5 L46.0 42.8 L46.5 43.1 L47.0 42.7 L47.5 42.5 L48.0 42.2 L48.5 42.5 L49.0 42.1 L49.5 42.3 L50.0 42.3 L50.5 41.9 L51.0 42.3 L51.5 42.7 L52.0 43.1 L52.5 43.1 L53.0 43.0 L53.5 43.4 L54.0 43.6 L54.5 43.5 L55.0 43.1 L55.5 42.1 L56.0 42.4 L56.5 41.9 L57.0 42.3 L57.5 41.6 L58.0 42.1 L58.5 42.3 L59.0 43.3 L59.5 43.9 L60.0 43.6 L60.5 42.5 L61.0 42.3 L61.5 42.2 L62.0 42.2 L62.5 41.9 L63.0 42.0 L63.5 42.4 L64.0 42.2 L64.5 42.6 L65.0 42.2 L65.5 42.8 L66.0 43.0 L66.5 43.7 L67.0 43.0 L67.5 42.7 L68.0 42.2 L68.5 42.1 L69.0 42.5 L69.5 42.5 L70.0 42.4 L70.5 43.1 L71.0 43.3 L71.5 43.4 L72.0 43.6 L72.5 43.4 L73.0 42.9 L73.5 42.7 L74.0 43.4 L74.5 43.8 L75.0 43.7 L75.5 44.1 L76.0 43.7 L76.5 44.2 L77.0 44.2 L77.5 44.0 L78.0 43.7 L78.5 44.1 L79.0 43.9 L79.5 44.1 L80.0 44.0 L80.5 44.2 L81.0 43.7 L81.5 44.1 L82.0 44.0 L82.5 43.7 L83.0 43.6 L83.5 43.8 L84.0 43.7 L84.5 43.5 L85.0 43.7 L85.5 43.7 L86.0 43.2 L86.5 43.6 L87.0 43.2 L87.5 43.1 L88.0 43.2 L88.5 43.4 L89.0 43.0 L89.5 43.1 L90.0 43.6 L90.5 43.0 L91.0 43.2 L91.5 43.5 L92.0 43.7 L92.5 43.9 L93.0 43.5 L93.5 43.7 L94.0 44.3 L94.5 44.6 L95.0 44.7 L95.5 44.6 L96.0 44.7 L96.5 44.9 L97.0 44.5 L97.5 43.9 L98.0 44.2 L98.5 44.0 L99.0 44.0 L99.5 44.3 L100.0 44.4 L100.5 44.3 L101.0 44.2 L101.5 43.6 L102.0 43.9 L102.5 44.3 L103.0 44.5 L103.5 44.9 L104.0 44.9 L104.5 44.5 L105.0 44.6 L105.5 44.2 L106.0 44.1 L106.5 43.8 L107.0 43.5 L107.5 43.6 L108.0 44.3 L108.5 44.3 L109.0 44.4 L109.5 44.0 L110.0 43.8 L110.5 44.0 L111.0 44.6 L111.5 44.6 L112.0 44.8 L112.5 45.1 L113.0 44.4 L113.5 44.4 L114.0 44.5 L114.5 44.3 L115.0 44.2 L115.5 43.8 L116.0 44.0 L116.5 44.2 L117.0 44.1 L117.5 44.1 L118.0 43.7 L118.5 43.5 L119.0 43.8 L119.5 43.8 L120.0 44.5 L120.5 44.9 L121.0 44.9 L121.5 44.5 L122.0 44.9 L122.5 44.6 L123.0 44.6 L123.5 44.1 L124.0 43.9 L124.5 44.2 L125.0 44.6 L125.5 44.5 L126.0 44.6 L126.5 44.4 L127.0 44.2 L127.5 44.2 L128.0 44.2 L128.5 44.2 L129.0 44.7 L129.5 44.7 L130.0 44.5 L130.5 44.6 L131.0 44.9 L131.5 45.3 L132.0 44.9 L132.5 45.3 L133.0 45.2 L133.5 45.2 L134.0 44.4 L134.5 44.2 L135.0 44.0 L135.5 44.2 L136.0 45.2 L136.5 45.1 L137.0 45.2 L137.5 45.3 L138.0 45.4 L138.5 44.9 L139.0 45.0 L139.5 44.9 L140.0 45.2 L140.5 44.7 L140.5 55.8 L140.0 55.4 L139.5 55.7 L139.0 55.6 L138.5 55.3 L138.0 55.1 L137.5 55.7 L137.0 56.0 L136.5 56.5 L136.0 56.2 L135.5 55.8 L135.0 55.7 L134.5 56.0 L134.0 55.6 L133.5 56.2 L133.0 56.3 L132.5 55.9 L132.0 55.7 L131.5 55.8 L131.0 55.9 L130.5 56.0 L130.0 55.4 L129.5 55.4 L129.0 55.6 L128.5 55.5 L128.0 55.4 L127.5 55.6 L127.0 55.5 L126.5 56.1 L126.0 55.8 L125.5 55.7 L125.0 56.5 L124.5 56.7 L124.0 56.4 L123.5 56.0 L123.0 56.2 L122.5 55.7 L122.0 56.1 L121.5 55.7 L121.0 56.1 L120.5 56.0 L120.0 56.1 L119.5 56.3 L119.0 56.3 L118.5 56.3 L118.0 55.8 L117.5 55.8 L117.0 56.0 L116.5 56.0 L116.0 55.7 L115.5 56.1 L115.0 55.9 L114.5 56.5 L114.0 56.9 L113.5 56.9 L113.0 56.5 L112.5 56.8 L112.0 56.4 L111.5 56.3 L111.0 55.7 L110.5 55.6 L110.0 55.9 L109.5 56.3 L109.0 56.4 L108.5 57.1 L108.0 57.0 L107.5 56.8 L107.0 56.8 L106.5 57.0 L106.0 56.7 L105.5 56.5 L105.0 56.9 L104.5 56.5 L104.0 56.2 L103.5 56.0 L103.0 55.9 L102.5 56.4 L102.0 56.7 L101.5 56.5 L101.0 56.2 L100.5 56.6 L100.0 56.9 L99.5 56.5 L99.0 56.3 L98.5 56.2 L98.0 56.1 L97.5 56.3 L97.0 56.4 L96.5 56.0 L96.0 56.5 L95.5 56.3 L95.0 56.4 L94.5 56.5 L94.0 56.0 L93.5 55.9 L93.0 56.1 L92.5 56.1 L92.0 56.2 L91.5 56.6 L91.0 56.5 L90.5 56.5 L90.0 56.1 L89.5 56.2 L89.0 56.2 L88.5 56.6 L88.0 56.6 L87.5 57.0 L87.0 56.8 L86.5 56.5 L86.0 56.3 L85.5 56.3 L85.0 56.4 L84.5 56.6 L84.0 57.0 L83.5 57.0 L83.0 56.9 L82.5 57.3 L82.0 56.8 L81.5 57.1 L81.0 57.3 L80.5 57.6 L80.0 57.9 L79.5 57.4 L79.0 57.7 L78.5 57.2 L78.0 57.5 L77.5 57.9 L77.0 57.4 L76.5 57.2 L76.0 57.0 L75.5 57.0 L75.0 56.6 L74.5 56.3 L74.0 56.4 L73.5 56.4 L73.0 56.6 L72.5 57.3 L72.0 57.6 L71.5 57.1 L71.0 57.8 L70.5 58.0 L70.0 58.0 L69.5 57.8 L69.0 57.9 L68.5 57.5 L68.0 57.5 L67.5 57.9 L67.0 57.7 L66.5 57.8 L66.0 58.3 L65.5 57.9 L65.0 58.1 L64.5 58.3 L64.0 57.8 L63.5 58.1 L63.0 57.6 L62.5 58.2 L62.0 57.9 L61.5 58.6 L61.0 58.5 L60.5 58.1 L60.0 58.1 L59.5 58.2 L59.0 58.1 L58.5 58.2 L58.0 58.2 L57.5 58.6 L57.0 57.8 L56.5 58.1 L56.0 57.6 L55.5 57.8 L55.0 57.3 L54.5 57.1 L54.0 56.9 L53.5 57.6 L53.0 57.6 L52.5 57.5 L52.0 57.8 L51.5 58.3 L51.0 58.5 L50.5 58.0 L50.0 57.7 L49.5 57.6 L49.0 57.0 L48.5 57.1 L48.0 57.3 L47.5 56.9 L47.0 57.1 L46.5 57.2 L46.0 57.9 L45.5 58.2 L45.0 57.5 L44.5 57.2 L44.0 57.0 L43.5 57.2 L43.0 57.0 L42.5 58.3 L42.0 58.0 L41.5 58.1 L41.0 57.4 L40.5 56.8 L40.0 57.1 L39.5 56.9 L39.0 56.6 L38.5 57.0 L38.0 57.1 L37.5 56.8 L37.0 56.6 L36.5 56.9 L36.0 56.9 L35.5 57.0 L35.0 57.2 L34.5 57.2 L34.0 57.3 L33.5 56.9 L33.0 56.8 L32.5 56.4 L32.0 56.4 L31.5 56.1 L31.0 56.4 L30.5 56.6 L30.0 56.6 L29.5 56.5 L29.0 57.0 L28.5 56.8 L28.0 57.0 L27.5 56.9 L27.0 56.9 L26.5 56.9 L26.0 56.7 L25.5 56.3 L25.0 56.0 L24.5 55.8 L24.0 55.7 L23.5 55.7 L23.0 56.1 L22.5 56.0 L22.0 55.8 L21.5 56.2 L21.0 56.0 L20.5 56.2 L20.0 55.7 L19.5 55.4 L19.0 55.4 L18.5 55.9 L18.0 55.8 L17.5 55.7 L17.0 55.3 L16.5 55.0 L16.0 55.1 L15.5 54.8 L15.0 54.6 L14.5 54.6 L14.0 54.6 L13.5 54.8 L13.0 54.5 L12.5 54.5 L12.0 54.7 L11.5 54.7 L11.0 55.4 L10.5 55.3 L10.0 55.5 L9.5 55.4 L9.0 55.2 L8.5 55.2 L8.0 55.1 L7.5 55.0 L7.0 55.1 L6.5 54.7 L6.0 54.8 L5.5 54.6 L5.0 55.0 L4.5 55.0 L4.0 55.3 L3.5 55.6 L3.0 55.2 L2.5 55.0 L2.0 55.2 L1.5 55.1 L1.0 55.1 L0.5 54.9 L0.0 55.2 Z" fill="#00c47c"/><path d="M0 16.8 L20 16.8 L0 83.8 Z" fill="#000" fill-opacity="0.14"/></svg>
<div class="t" style="left:5.50px;top:3.61px;font-size:10.61px;font-weight:bold;color:#fff;;transform:scaleX(0.9896);transform-origin:0 0">Forest_80_Cm_Dron...</div>
</div>
<div class="abs" style="left:792.10px;top:275.85px;width:141.60px;height:83.8px;border-radius:4px;overflow:hidden;background:#0d704e"><svg style="left:0;top:0" width="141.60" height="83.8" viewBox="0 0 141.60 83.8"><rect x="0" y="0" width="141.60" height="16.8" fill="#0c5d40"/><path d="M0.0 46.2 L0.5 45.8 L1.0 45.8 L1.5 46.0 L2.0 46.1 L2.5 45.8 L3.0 45.8 L3.5 45.8 L4.0 45.8 L4.5 45.3 L5.0 45.0 L5.5 45.1 L6.0 45.3 L6.5 45.2 L7.0 45.6 L7.5 45.2 L8.0 45.2 L8.5 45.5 L9.0 45.3 L9.5 45.6 L10.0 45.6 L10.5 45.9 L11.0 46.0 L11.5 45.3 L12.0 45.2 L12.5 45.3 L13.0 45.2 L13.5 45.2 L14.0 44.7 L14.5 45.1 L15.0 45.1 L15.5 45.3 L16.0 45.3 L16.5 45.3 L17.0 44.6 L17.5 44.7 L18.0 44.8 L18.5 44.6 L19.0 44.6 L19.5 44.7 L20.0 44.8 L20.5 45.3 L21.0 45.6 L21.5 45.5 L22.0 45.5 L22.5 45.5 L23.0 45.4 L23.5 45.1 L24.0 44.6 L24.5 44.3 L25.0 44.4 L25.5 45.0 L26.0 44.9 L26.5 45.1 L27.0 45.2 L27.5 44.9 L28.0 44.7 L28.5 44.8 L29.0 44.0 L29.5 43.6 L30.0 43.4 L30.5 43.1 L31.0 43.1 L31.5 43.4 L32.0 42.9 L32.5 43.1 L33.0 42.9 L33.5 42.6 L34.0 42.9 L34.5 42.4 L35.0 42.0 L35.5 42.9 L36.0 42.8 L36.5 43.4 L37.0 43.7 L37.5 43.5 L38.0 44.1 L38.5 44.0 L39.0 43.4 L39.5 43.6 L40.0 43.9 L40.5 43.9 L41.0 43.1 L41.5 42.4 L42.0 41.7 L42.5 42.7 L43.0 42.9 L43.5 43.6 L44.0 43.6 L44.5 43.3 L45.0 43.9 L45.5 43.3 L46.0 43.4 L46.5 43.9 L47.0 44.1 L47.5 43.6 L48.0 43.5 L48.5 43.8 L49.0 44.0 L49.5 43.6 L50.0 43.6 L50.5 43.8 L51.0 43.7 L51.5 43.8 L52.0 43.5 L52.5 43.3 L53.0 42.9 L53.5 43.6 L54.0 43.6 L54.5 43.4 L55.0 43.5 L55.5 43.4 L56.0 42.9 L56.5 43.1 L57.0 42.4 L57.5 42.3 L58.0 42.0 L58.5 42.3 L59.0 43.1 L59.5 43.6 L60.0 43.5 L60.5 42.8 L61.0 42.2 L61.5 42.4 L62.0 42.2 L62.5 42.2 L63.0 42.6 L63.5 42.1 L64.0 42.0 L64.5 42.4 L65.0 42.6 L65.5 42.4 L66.0 42.3 L66.5 42.3 L67.0 42.3 L67.5 42.3 L68.0 42.1 L68.5 42.3 L69.0 42.7 L69.5 43.1 L70.0 42.9 L70.5 42.9 L71.0 43.5 L71.5 43.7 L72.0 43.9 L72.5 43.9 L73.0 43.7 L73.5 43.3 L74.0 43.9 L74.5 43.9 L75.0 43.8 L75.5 43.4 L76.0 43.9 L76.5 44.0 L77.0 43.9 L77.5 43.6 L78.0 43.4 L78.5 42.7 L79.0 43.1 L79.5 43.4 L80.0 43.9 L80.5 43.9 L81.0 44.2 L81.5 44.4 L82.0 44.6 L82.5 44.6 L83.0 44.1 L83.5 44.1 L84.0 44.1 L84.5 44.2 L85.0 43.4 L85.5 43.2 L86.0 43.2 L86.5 43.5 L87.0 44.0 L87.5 44.2 L88.0 44.2 L88.5 43.9 L89.0 43.7 L89.5 43.4 L90.0 44.3 L90.5 44.3 L91.0 44.5 L91.5 44.6 L92.0 44.6 L92.5 45.0 L93.0 44.9 L93.5 44.3 L94.0 43.9 L94.5 43.5 L95.0 43.8 L95.5 44.6 L96.0 45.0 L96.5 44.6 L97.0 45.0 L97.5 44.2 L98.0 44.7 L98.5 44.3 L99.0 44.1 L99.5 44.6 L100.0 44.6 L100.5 44.4 L101.0 44.4 L101.5 44.9 L102.0 44.7 L102.5 44.6 L103.0 44.7 L103.5 45.0 L104.0 45.2 L104.5 44.9 L105.0 44.9 L105.5 44.7 L106.0 44.1 L106.5 43.6 L107.0 43.6 L107.5 43.7 L108.0 43.9 L108.5 43.8 L109.0 43.7 L109.5 44.1 L110.0 43.5 L110.5 43.8 L111.0 44.0 L111.5 44.4 L112.0 44.5 L112.5 44.3 L113.0 44.0 L113.5 44.0 L114.0 43.8 L114.5 43.8 L115.0 43.9 L115.5 43.8 L116.0 44.2 L116.5 44.1 L117.0 44.0 L117.5 44.1 L118.0 44.3 L118.5 44.2 L119.0 44.5 L119.5 44.6 L120.0 44.4 L120.5 44.6 L121.0 44.6 L121.5 44.5 L122.0 44.8 L122.5 45.1 L123.0 45.0 L123.5 44.6 L124.0 44.6 L124.5 44.4 L125.0 44.4 L125.5 44.4 L126.0 44.1 L126.5 44.2 L127.0 44.5 L127.5 44.7 L128.0 45.2 L128.5 44.8 L129.0 44.5 L129.5 43.9 L130.0 44.1 L130.5 44.4 L131.0 44.8 L131.5 44.7 L132.0 44.5 L132.5 44.8 L133.0 44.3 L133.5 44.3 L134.0 44.1 L134.5 44.0 L135.0 44.2 L135.5 44.5 L136.0 44.5 L136.5 44.5 L137.0 44.6 L137.5 45.1 L138.0 45.3 L138.5 45.2 L139.0 45.0 L139.5 45.4 L140.0 44.9 L140.5 45.1 L141.0 45.3 L141.5 45.4 L141.6 45.3 L141.6 55.5 L141.5 55.9 L141.0 55.5 L140.5 55.6 L140.0 55.4 L139.5 55.1 L139.0 55.5 L138.5 55.5 L138.0 55.4 L137.5 55.2 L137.0 55.3 L136.5 55.6 L136.0 55.7 L135.5 55.4 L135.0 55.3 L134.5 55.5 L134.0 55.7 L133.5 55.2 L133.0 55.4 L132.5 55.4 L132.0 55.7 L131.5 55.9 L131.0 56.1 L130.5 56.2 L130.0 56.3 L129.5 56.2 L129.0 56.3 L128.5 56.3 L128.0 55.8 L127.5 55.9 L127.0 56.0 L126.5 55.9 L126.0 55.6 L125.5 56.0 L125.0 56.5 L124.5 56.3 L124.0 56.4 L123.5 56.6 L123.0 56.4 L122.5 56.3 L122.0 56.2 L121.5 55.7 L121.0 55.7 L120.5 55.8 L120.0 55.5 L119.5 55.6 L119.0 55.8 L118.5 56.1 L118.0 56.2 L117.5 56.3 L117.0 56.7 L116.5 56.5 L116.0 56.5 L115.5 56.4 L115.0 55.9 L114.5 55.7 L114.0 55.7 L113.5 55.8 L113.0 55.6 L112.5 55.7 L112.0 56.2 L111.5 56.2 L111.0 56.6 L110.5 56.7 L110.0 56.5 L109.5 56.9 L109.0 56.7 L108.5 57.3 L108.0 56.9 L107.5 56.4 L107.0 55.7 L106.5 56.2 L106.0 56.0 L105.5 56.0 L105.0 56.2 L104.5 56.7 L104.0 56.6 L103.5 56.5 L103.0 56.5 L102.5 56.6 L102.0 56.2 L101.5 55.8 L101.0 56.4 L100.5 55.9 L100.0 56.1 L99.5 56.3 L99.0 56.4 L98.5 56.8 L98.0 57.2 L97.5 57.3 L97.0 56.9 L96.5 57.0 L96.0 57.3 L95.5 56.6 L95.0 56.6 L94.5 56.3 L94.0 56.2 L93.5 55.9 L93.0 56.1 L92.5 55.8 L92.0 56.0 L91.5 56.3 L91.0 56.3 L90.5 56.8 L90.0 56.9 L89.5 57.1 L89.0 57.1 L88.5 57.2 L88.0 56.6 L87.5 56.5 L87.0 56.6 L86.5 56.4 L86.0 55.9 L85.5 55.8 L85.0 56.6 L84.5 57.0 L84.0 56.8 L83.5 57.5 L83.0 57.1 L82.5 57.7 L82.0 57.7 L81.5 57.7 L81.0 57.8 L80.5 57.6 L80.0 57.7 L79.5 57.3 L79.0 56.8 L78.5 56.8 L78.0 57.6 L77.5 57.9 L77.0 57.8 L76.5 57.3 L76.0 56.9 L75.5 56.7 L75.0 56.8 L74.5 56.9 L74.0 56.9 L73.5 56.6 L73.0 57.1 L72.5 56.9 L72.0 57.3 L71.5 57.2 L71.0 57.5 L70.5 57.4 L70.0 57.2 L69.5 57.6 L69.0 57.7 L68.5 58.2 L68.0 58.1 L67.5 57.6 L67.0 56.9 L66.5 56.9 L66.0 57.6 L65.5 58.0 L65.0 58.8 L64.5 58.7 L64.0 58.1 L63.5 58.4 L63.0 57.8 L62.5 57.7 L62.0 58.1 L61.5 58.0 L61.0 57.6 L60.5 57.8 L60.0 57.8 L59.5 57.6 L59.0 57.3 L58.5 58.0 L58.0 58.6 L57.5 59.0 L57.0 58.8 L56.5 59.0 L56.0 58.5 L55.5 58.2 L55.0 57.8 L54.5 57.2 L54.0 57.6 L53.5 57.4 L53.0 57.2 L52.5 57.0 L52.0 57.3 L51.5 57.4 L51.0 57.2 L50.5 57.3 L50.0 58.0 L49.5 58.2 L49.0 58.0 L48.5 58.4 L48.0 58.4 L47.5 57.9 L47.0 58.0 L46.5 57.9 L46.0 58.1 L45.5 58.3 L45.0 58.1 L44.5 57.9 L44.0 58.3 L43.5 58.6 L43.0 57.3 L42.5 56.8 L42.0 56.9 L41.5 57.0 L41.0 56.7 L40.5 56.7 L40.0 57.2 L39.5 57.2 L39.0 58.1 L38.5 58.0 L38.0 58.1 L37.5 57.2 L37.0 56.9 L36.5 57.0 L36.0 57.4 L35.5 57.7 L35.0 58.0 L34.5 58.0 L34.0 57.2 L33.5 57.2 L33.0 56.9 L32.5 57.3 L32.0 57.8 L31.5 57.7 L31.0 57.6 L30.5 57.2 L30.0 57.1 L29.5 56.8 L29.0 56.8 L28.5 56.9 L28.0 56.7 L27.5 56.8 L27.0 56.6 L26.5 56.5 L26.0 56.5 L25.5 56.0 L25.0 55.7 L24.5 55.8 L24.0 55.9 L23.5 56.0 L23.0 56.2 L22.5 56.2 L22.0 55.7 L21.5 55.6 L21.0 55.6 L20.5 55.3 L20.0 55.0 L19.5 54.8 L19.0 54.7 L18.5 54.8 L18.0 55.3 L17.5 55.3 L17.0 55.1 L16.5 54.9 L16.0 55.0 L15.5 55.0 L15.0 54.9 L14.5 54.8 L14.0 54.9 L13.5 55.1 L13.0 54.7 L12.5 54.8 L12.0 54.7 L11.5 54.7 L11.0 55.1 L10.5 55.3 L10.0 55.4 L9.5 55.5 L9.0 55.8 L8.5 55.6 L8.0 55.9 L7.5 55.8 L7.0 55.5 L6.5 55.5 L6.0 55.3 L5.5 55.1 L5.0 55.1 L4.5 55.3 L4.0 55.1 L3.5 55.5 L3.0 55.4 L2.5 55.7 L2.0 55.5 L1.5 55.6 L1.0 55.2 L0.5 55.0 L0.0 55.0 Z" fill="#00c47c"/><path d="M0 16.8 L20 16.8 L0 83.8 Z" fill="#000" fill-opacity="0.14"/><path d="M141.60 16.8 L83.60 16.8 L141.60 83.8 Z" fill="#000" fill-opacity="0.14"/></svg>
<div class="t" style="left:5.50px;top:3.61px;font-size:10.61px;font-weight:bold;color:#fff;;transform:scaleX(0.9896);transform-origin:0 0">Forest_80_Cm_Dron...</div>
</div>
<div class="abs" style="left:1332.90px;top:275.85px;width:139.90px;height:83.8px;border-radius:4px;overflow:hidden;background:#0d704e"><svg style="left:0;top:0" width="139.90" height="83.8" viewBox="0 0 139.90 83.8"><rect x="0" y="0" width="139.90" height="16.8" fill="#0c5d40"/><path d="M0.0 45.7 L0.5 45.8 L1.0 45.7 L1.5 45.5 L2.0 45.5 L2.5 45.5 L3.0 45.3 L3.5 45.0 L4.0 45.5 L4.5 45.6 L5.0 45.8 L5.5 45.9 L6.0 45.5 L6.5 45.5 L7.0 45.5 L7.5 45.4 L8.0 44.9 L8.5 45.1 L9.0 45.2 L9.5 44.7 L10.0 44.9 L10.5 44.7 L11.0 45.2 L11.5 45.3 L12.0 45.9 L12.5 45.9 L13.0 45.4 L13.5 45.3 L14.0 45.0 L14.5 45.2 L15.0 45.0 L15.5 45.4 L16.0 45.1 L16.5 45.4 L17.0 45.4 L17.5 45.1 L18.0 45.2 L18.5 44.7 L19.0 44.8 L19.5 44.6 L20.0 44.6 L20.5 45.0 L21.0 45.3 L21.5 45.0 L22.0 44.8 L22.5 44.9 L23.0 45.0 L23.5 44.7 L24.0 44.5 L24.5 43.9 L25.0 44.3 L25.5 44.3 L26.0 44.5 L26.5 44.4 L27.0 44.4 L27.5 44.4 L28.0 44.6 L28.5 44.4 L29.0 44.1 L29.5 44.5 L30.0 44.4 L30.5 43.9 L31.0 43.5 L31.5 43.3 L32.0 43.6 L32.5 44.2 L33.0 43.8 L33.5 43.7 L34.0 43.3 L34.5 43.1 L35.0 43.0 L35.5 42.8 L36.0 42.5 L36.5 42.3 L37.0 42.7 L37.5 42.8 L38.0 43.2 L38.5 43.1 L39.0 43.0 L39.5 42.8 L40.0 42.5 L40.5 42.0 L41.0 42.5 L41.5 42.4 L42.0 42.3 L42.5 42.0 L43.0 42.7 L43.5 42.6 L44.0 42.5 L44.5 42.4 L45.0 42.4 L45.5 42.8 L46.0 42.8 L46.5 42.9 L47.0 43.7 L47.5 43.5 L48.0 43.3 L48.5 43.3 L49.0 43.8 L49.5 43.6 L50.0 43.0 L50.5 42.2 L51.0 42.0 L51.5 42.6 L52.0 42.7 L52.5 43.1 L53.0 43.1 L53.5 43.0 L54.0 43.4 L54.5 43.1 L55.0 42.9 L55.5 42.4 L56.0 42.3 L56.5 41.8 L57.0 41.9 L57.5 42.6 L58.0 42.2 L58.5 43.1 L59.0 43.2 L59.5 43.6 L60.0 43.0 L60.5 43.2 L61.0 43.0 L61.5 43.1 L62.0 43.3 L62.5 43.3 L63.0 43.5 L63.5 43.5 L64.0 43.1 L64.5 43.0 L65.0 43.1 L65.5 43.6 L66.0 43.3 L66.5 44.1 L67.0 43.7 L67.5 43.4 L68.0 43.2 L68.5 42.6 L69.0 43.0 L69.5 43.6 L70.0 43.7 L70.5 43.2 L71.0 43.5 L71.5 43.5 L72.0 43.6 L72.5 43.7 L73.0 43.7 L73.5 44.0 L74.0 43.8 L74.5 44.3 L75.0 44.0 L75.5 44.0 L76.0 44.3 L76.5 44.0 L77.0 44.0 L77.5 43.9 L78.0 43.6 L78.5 43.3 L79.0 42.9 L79.5 43.3 L80.0 43.5 L80.5 43.3 L81.0 43.6 L81.5 43.5 L82.0 43.5 L82.5 44.1 L83.0 44.0 L83.5 44.6 L84.0 44.6 L84.5 44.4 L85.0 44.2 L85.5 44.6 L86.0 44.3 L86.5 44.6 L87.0 44.3 L87.5 44.8 L88.0 44.4 L88.5 44.7 L89.0 44.3 L89.5 44.2 L90.0 44.2 L90.5 44.5 L91.0 44.7 L91.5 44.7 L92.0 44.4 L92.5 44.3 L93.0 44.3 L93.5 44.3 L94.0 44.3 L94.5 44.3 L95.0 44.5 L95.5 44.3 L96.0 44.4 L96.5 44.6 L97.0 44.1 L97.5 44.1 L98.0 43.7 L98.5 43.7 L99.0 43.8 L99.5 43.9 L100.0 44.1 L100.5 44.2 L101.0 44.4 L101.5 44.1 L102.0 44.0 L102.5 44.4 L103.0 44.6 L103.5 44.3 L104.0 44.1 L104.5 44.4 L105.0 44.4 L105.5 44.4 L106.0 43.9 L106.5 43.7 L107.0 44.1 L107.5 44.0 L108.0 44.7 L108.5 44.8 L109.0 44.6 L109.5 44.6 L110.0 44.9 L110.5 44.8 L111.0 44.8 L111.5 44.6 L112.0 44.4 L112.5 44.7 L113.0 44.7 L113.5 44.6 L114.0 44.4 L114.5 44.5 L115.0 44.3 L115.5 43.7 L116.0 44.1 L116.5 44.7 L117.0 44.8 L117.5 44.8 L118.0 44.4 L118.5 44.1 L119.0 43.9 L119.5 44.4 L120.0 44.7 L120.5 45.2 L121.0 45.3 L121.5 45.0 L122.0 44.4 L122.5 44.6 L123.0 44.7 L123.5 44.7 L124.0 44.8 L124.5 44.9 L125.0 44.4 L125.5 44.8 L126.0 45.1 L126.5 44.7 L127.0 44.5 L127.5 44.1 L128.0 43.8 L128.5 43.9 L129.0 44.3 L129.5 44.2 L130.0 44.5 L130.5 45.1 L131.0 45.1 L131.5 44.9 L132.0 44.8 L132.5 44.6 L133.0 44.4 L133.5 44.7 L134.0 44.5 L134.5 44.4 L135.0 44.3 L135.5 44.6 L136.0 45.0 L136.5 45.5 L137.0 45.4 L137.5 45.3 L138.0 45.5 L138.5 45.4 L139.0 45.1 L139.5 44.9 L139.9 44.8 L139.9 55.9 L139.5 56.2 L139.0 55.9 L138.5 56.4 L138.0 56.2 L137.5 55.9 L137.0 55.7 L136.5 55.6 L136.0 55.3 L135.5 55.7 L135.0 55.8 L134.5 55.5 L134.0 55.8 L133.5 55.6 L133.0 55.3 L132.5 55.6 L132.0 55.6 L131.5 55.2 L131.0 55.3 L130.5 55.4 L130.0 55.3 L129.5 55.3 L129.0 55.4 L128.5 55.4 L128.0 55.3 L127.5 55.3 L127.0 55.7 L126.5 55.5 L126.0 55.8 L125.5 55.8 L125.0 56.1 L124.5 56.2 L124.0 56.1 L123.5 56.3 L123.0 56.2 L122.5 55.8 L122.0 56.2 L121.5 56.2 L121.0 56.1 L120.5 55.7 L120.0 55.9 L119.5 55.9 L119.0 55.7 L118.5 56.0 L118.0 56.0 L117.5 55.5 L117.0 56.0 L116.5 55.8 L116.0 56.0 L115.5 56.1 L115.0 56.2 L114.5 56.3 L114.0 56.1 L113.5 56.7 L113.0 56.3 L112.5 56.9 L112.0 56.9 L111.5 56.8 L111.0 56.1 L110.5 55.5 L110.0 55.9 L109.5 55.4 L109.0 55.8 L108.5 55.5 L108.0 56.0 L107.5 56.3 L107.0 56.7 L106.5 56.8 L106.0 56.5 L105.5 56.8 L105.0 56.6 L104.5 57.0 L104.0 56.6 L103.5 57.0 L103.0 57.3 L102.5 56.8 L102.0 57.2 L101.5 57.0 L101.0 57.2 L100.5 56.8 L100.0 57.0 L99.5 56.6 L99.0 57.0 L98.5 56.6 L98.0 56.6 L97.5 56.5 L97.0 56.7 L96.5 56.3 L96.0 56.3 L95.5 56.0 L95.0 55.9 L94.5 56.1 L94.0 56.2 L93.5 56.1 L93.0 56.0 L92.5 56.4 L92.0 56.3 L91.5 56.9 L91.0 56.8 L90.5 57.3 L90.0 56.8 L89.5 57.1 L89.0 57.1 L88.5 56.4 L88.0 56.0 L87.5 56.2 L87.0 55.9 L86.5 55.8 L86.0 55.7 L85.5 56.0 L85.0 55.8 L84.5 56.0 L84.0 56.0 L83.5 56.3 L83.0 56.7 L82.5 57.1 L82.0 57.2 L81.5 57.6 L81.0 57.6 L80.5 57.3 L80.0 57.7 L79.5 57.0 L79.0 57.2 L78.5 57.1 L78.0 57.2 L77.5 57.8 L77.0 57.9 L76.5 57.4 L76.0 56.9 L75.5 56.8 L75.0 56.7 L74.5 56.8 L74.0 57.7 L73.5 57.9 L73.0 57.4 L72.5 58.2 L72.0 58.4 L71.5 58.5 L71.0 58.1 L70.5 58.0 L70.0 57.3 L69.5 57.7 L69.0 58.1 L68.5 58.3 L68.0 57.9 L67.5 58.6 L67.0 58.8 L66.5 58.8 L66.0 58.3 L65.5 57.9 L65.0 56.9 L64.5 57.5 L64.0 57.9 L63.5 58.3 L63.0 58.6 L62.5 58.2 L62.0 57.6 L61.5 57.3 L61.0 57.5 L60.5 57.0 L60.0 57.0 L59.5 57.7 L59.0 57.8 L58.5 58.1 L58.0 57.8 L57.5 57.8 L57.0 58.3 L56.5 57.9 L56.0 58.3 L55.5 57.7 L55.0 57.5 L54.5 57.1 L54.0 57.0 L53.5 57.1 L53.0 57.4 L52.5 56.7 L52.0 57.2 L51.5 57.1 L51.0 57.3 L50.5 57.2 L50.0 57.8 L49.5 58.3 L49.0 58.0 L48.5 58.4 L48.0 58.2 L47.5 58.0 L47.0 57.9 L46.5 57.8 L46.0 58.4 L45.5 58.2 L45.0 58.2 L44.5 57.8 L44.0 57.9 L43.5 57.6 L43.0 57.7 L42.5 58.0 L42.0 57.8 L41.5 58.0 L41.0 57.6 L40.5 57.8 L40.0 58.4 L39.5 58.4 L39.0 58.5 L38.5 58.3 L38.0 58.5 L37.5 58.0 L37.0 58.4 L36.5 57.9 L36.0 58.5 L35.5 58.5 L35.0 58.0 L34.5 57.8 L34.0 57.4 L33.5 57.0 L33.0 57.3 L32.5 57.5 L32.0 57.5 L31.5 57.2 L31.0 57.7 L30.5 57.6 L30.0 57.7 L29.5 57.1 L29.0 57.2 L28.5 57.3 L28.0 57.2 L27.5 56.5 L27.0 56.8 L26.5 56.7 L26.0 56.2 L25.5 56.2 L25.0 56.0 L24.5 55.4 L24.0 55.9 L23.5 55.7 L23.0 55.6 L22.5 56.1 L22.0 55.8 L21.5 55.6 L21.0 55.9 L20.5 55.6 L20.0 55.5 L19.5 55.0 L19.0 54.7 L18.5 55.2 L18.0 54.8 L17.5 54.8 L17.0 55.0 L16.5 54.8 L16.0 54.8 L15.5 55.3 L15.0 55.5 L14.5 55.7 L14.0 55.6 L13.5 55.3 L13.0 55.1 L12.5 55.3 L12.0 55.3 L11.5 54.9 L11.0 54.6 L10.5 54.6 L10.0 54.9 L9.5 55.2 L9.0 55.2 L8.5 55.3 L8.0 55.5 L7.5 55.4 L7.0 55.5 L6.5 55.7 L6.0 55.8 L5.5 55.7 L5.0 55.6 L4.5 55.4 L4.0 54.9 L3.5 54.8 L3.0 54.6 L2.5 54.8 L2.0 54.8 L1.5 55.1 L1.0 54.8 L0.5 55.1 L0.0 55.0 Z" fill="#00c47c"/><path d="M139.90 16.8 L102.90 16.8 L139.90 83.8 Z" fill="#000" fill-opacity="0.14"/></svg>
<div class="t" style="left:5.50px;top:3.61px;font-size:10.61px;font-weight:bold;color:#fff;;transform:scaleX(0.9896);transform-origin:0 0">Forest_80_Cm_Dron...</div>
</div>
<div class="abs" style="left:1473.50px;top:275.85px;width:130.80px;height:83.8px;border-radius:4px;overflow:hidden;background:#0d704e"><svg style="left:0;top:0" width="130.80" height="83.8" viewBox="0 0 130.80 83.8"><rect x="0" y="0" width="130.80" height="16.8" fill="#0c5d40"/><path d="M0.0 45.8 L0.5 45.8 L1.0 45.4 L1.5 45.4 L2.0 45.3 L2.5 45.1 L3.0 45.2 L3.5 45.0 L4.0 45.2 L4.5 45.0 L5.0 45.2 L5.5 45.1 L6.0 45.2 L6.5 45.0 L7.0 44.8 L7.5 44.9 L8.0 45.2 L8.5 45.8 L9.0 45.3 L9.5 45.3 L10.0 44.9 L10.5 44.9 L11.0 44.8 L11.5 45.3 L12.0 45.6 L12.5 45.5 L13.0 45.7 L13.5 45.7 L14.0 45.7 L14.5 45.5 L15.0 45.6 L15.5 45.9 L16.0 45.7 L16.5 45.8 L17.0 45.1 L17.5 45.4 L18.0 45.3 L18.5 45.5 L19.0 45.4 L19.5 45.7 L20.0 45.7 L20.5 45.2 L21.0 45.2 L21.5 45.2 L22.0 44.7 L22.5 44.4 L23.0 44.3 L23.5 44.1 L24.0 44.2 L24.5 44.2 L25.0 44.2 L25.5 43.6 L26.0 44.0 L26.5 43.8 L27.0 43.8 L27.5 44.6 L28.0 44.2 L28.5 44.4 L29.0 44.6 L29.5 44.1 L30.0 44.1 L30.5 44.4 L31.0 43.8 L31.5 43.5 L32.0 43.7 L32.5 43.3 L33.0 42.7 L33.5 43.2 L34.0 43.0 L34.5 42.8 L35.0 42.4 L35.5 42.5 L36.0 42.6 L36.5 42.8 L37.0 42.7 L37.5 42.2 L38.0 42.2 L38.5 42.0 L39.0 42.6 L39.5 42.2 L40.0 42.6 L40.5 42.7 L41.0 42.5 L41.5 43.0 L42.0 42.6 L42.5 42.9 L43.0 43.4 L43.5 43.0 L44.0 43.6 L44.5 43.1 L45.0 43.4 L45.5 42.9 L46.0 43.6 L46.5 43.3 L47.0 43.0 L47.5 43.3 L48.0 43.0 L48.5 42.9 L49.0 42.7 L49.5 42.8 L50.0 42.8 L50.5 42.8 L51.0 42.3 L51.5 42.7 L52.0 42.5 L52.5 42.3 L53.0 42.3 L53.5 42.5 L54.0 42.6 L54.5 42.8 L55.0 42.9 L55.5 43.2 L56.0 43.2 L56.5 43.1 L57.0 43.0 L57.5 43.1 L58.0 43.5 L58.5 42.6 L59.0 42.4 L59.5 42.2 L60.0 42.6 L60.5 42.2 L61.0 42.4 L61.5 42.5 L62.0 42.9 L62.5 42.9 L63.0 42.1 L63.5 42.4 L64.0 42.1 L64.5 42.5 L65.0 42.3 L65.5 43.2 L66.0 43.6 L66.5 43.4 L67.0 43.5 L67.5 43.9 L68.0 43.9 L68.5 43.8 L69.0 44.1 L69.5 44.1 L70.0 43.8 L70.5 43.7 L71.0 42.8 L71.5 43.1 L72.0 42.8 L72.5 43.1 L73.0 43.1 L73.5 43.3 L74.0 43.5 L74.5 43.4 L75.0 43.6 L75.5 43.7 L76.0 43.3 L76.5 43.2 L77.0 43.4 L77.5 43.3 L78.0 43.8 L78.5 43.9 L79.0 44.3 L79.5 43.6 L80.0 43.4 L80.5 43.6 L81.0 44.0 L81.5 44.2 L82.0 44.4 L82.5 44.7 L83.0 44.3 L83.5 43.7 L84.0 43.8 L84.5 43.9 L85.0 43.5 L85.5 43.4 L86.0 43.3 L86.5 43.9 L87.0 43.8 L87.5 43.9 L88.0 44.0 L88.5 44.2 L89.0 44.3 L89.5 44.5 L90.0 44.3 L90.5 44.3 L91.0 44.8 L91.5 44.4 L92.0 44.3 L92.5 44.3 L93.0 44.5 L93.5 44.4 L94.0 44.7 L94.5 44.6 L95.0 44.8 L95.5 44.4 L96.0 44.7 L96.5 44.3 L97.0 44.5 L97.5 45.0 L98.0 45.1 L98.5 44.7 L99.0 44.8 L99.5 44.5 L100.0 44.4 L100.5 44.8 L101.0 45.0 L101.5 44.8 L102.0 44.6 L102.5 44.5 L103.0 44.6 L103.5 44.3 L104.0 44.3 L104.5 44.2 L105.0 44.6 L105.5 44.7 L106.0 44.7 L106.5 44.6 L107.0 44.9 L107.5 44.2 L108.0 43.9 L108.5 43.7 L109.0 44.2 L109.5 44.1 L110.0 44.7 L110.5 44.7 L111.0 44.7 L111.5 44.2 L112.0 44.2 L112.5 44.2 L113.0 43.8 L113.5 44.0 L114.0 43.7 L114.5 43.9 L115.0 43.9 L115.5 43.9 L116.0 44.3 L116.5 44.3 L117.0 44.1 L117.5 43.7 L118.0 44.1 L118.5 44.6 L119.0 44.3 L119.5 44.2 L120.0 44.4 L120.5 44.1 L121.0 44.3 L121.5 44.5 L122.0 45.1 L122.5 45.3 L123.0 45.0 L123.5 44.6 L124.0 44.1 L124.5 44.5 L125.0 44.3 L125.5 44.9 L126.0 45.0 L126.5 45.0 L127.0 45.1 L127.5 45.0 L128.0 44.8 L128.5 44.5 L129.0 44.2 L129.5 44.4 L130.0 44.5 L130.5 44.6 L130.8 44.4 L130.8 55.5 L130.5 55.7 L130.0 55.4 L129.5 55.5 L129.0 55.5 L128.5 55.1 L128.0 55.5 L127.5 55.1 L127.0 55.4 L126.5 55.8 L126.0 56.0 L125.5 56.5 L125.0 56.2 L124.5 56.5 L124.0 56.4 L123.5 56.5 L123.0 56.2 L122.5 56.6 L122.0 56.4 L121.5 56.2 L121.0 55.9 L120.5 55.9 L120.0 55.8 L119.5 56.2 L119.0 56.5 L118.5 56.0 L118.0 56.0 L117.5 55.7 L117.0 56.2 L116.5 56.3 L116.0 56.6 L115.5 56.9 L115.0 56.4 L114.5 57.0 L114.0 57.0 L113.5 56.6 L113.0 56.4 L112.5 56.3 L112.0 56.0 L111.5 55.9 L111.0 56.3 L110.5 56.1 L110.0 56.3 L109.5 55.9 L109.0 55.9 L108.5 56.1 L108.0 55.8 L107.5 56.3 L107.0 56.8 L106.5 56.9 L106.0 56.5 L105.5 56.1 L105.0 56.1 L104.5 56.1 L104.0 56.5 L103.5 56.6 L103.0 56.4 L102.5 57.0 L102.0 56.7 L101.5 56.6 L101.0 56.4 L100.5 56.2 L100.0 55.9 L99.5 55.9 L99.0 56.5 L98.5 56.3 L98.0 56.8 L97.5 56.6 L97.0 56.7 L96.5 56.3 L96.0 56.9 L95.5 56.8 L95.0 56.8 L94.5 56.8 L94.0 56.7 L93.5 56.5 L93.0 56.2 L92.5 55.8 L92.0 56.3 L91.5 56.2 L91.0 56.1 L90.5 55.8 L90.0 56.7 L89.5 56.5 L89.0 56.8 L88.5 56.7 L88.0 57.1 L87.5 57.2 L87.0 56.9 L86.5 56.7 L86.0 56.6 L85.5 56.5 L85.0 56.3 L84.5 56.5 L84.0 56.4 L83.5 56.4 L83.0 57.1 L82.5 57.4 L82.0 57.4 L81.5 57.2 L81.0 57.0 L80.5 57.1 L80.0 57.0 L79.5 56.9 L79.0 56.3 L78.5 56.4 L78.0 56.3 L77.5 56.5 L77.0 57.0 L76.5 57.0 L76.0 57.3 L75.5 57.6 L75.0 57.5 L74.5 57.3 L74.0 57.4 L73.5 57.9 L73.0 57.9 L72.5 57.3 L72.0 56.7 L71.5 56.8 L71.0 57.3 L70.5 58.0 L70.0 58.1 L69.5 58.1 L69.0 57.8 L68.5 57.3 L68.0 57.2 L67.5 57.4 L67.0 56.8 L66.5 57.1 L66.0 57.3 L65.5 57.2 L65.0 57.3 L64.5 57.3 L64.0 57.2 L63.5 57.5 L63.0 57.7 L62.5 58.0 L62.0 57.3 L61.5 57.9 L61.0 57.5 L60.5 58.0 L60.0 57.4 L59.5 58.0 L59.0 57.7 L58.5 58.2 L58.0 57.5 L57.5 58.0 L57.0 58.0 L56.5 57.9 L56.0 57.9 L55.5 58.3 L55.0 57.7 L54.5 57.9 L54.0 58.4 L53.5 58.2 L53.0 58.4 L52.5 58.3 L52.0 58.7 L51.5 58.7 L51.0 58.3 L50.5 58.6 L50.0 58.3 L49.5 58.3 L49.0 58.6 L48.5 58.5 L48.0 58.3 L47.5 57.8 L47.0 58.3 L46.5 58.5 L46.0 58.3 L45.5 58.3 L45.0 58.1 L44.5 57.8 L44.0 57.3 L43.5 57.1 L43.0 57.6 L42.5 58.3 L42.0 58.0 L41.5 57.9 L41.0 58.0 L40.5 57.5 L40.0 58.1 L39.5 57.6 L39.0 57.4 L38.5 57.3 L38.0 57.4 L37.5 57.2 L37.0 57.1 L36.5 56.9 L36.0 57.8 L35.5 57.9 L35.0 58.3 L34.5 58.6 L34.0 58.3 L33.5 58.3 L33.0 58.4 L32.5 57.9 L32.0 57.1 L31.5 56.8 L31.0 57.4 L30.5 57.3 L30.0 57.6 L29.5 57.9 L29.0 57.8 L28.5 57.3 L28.0 57.4 L27.5 57.4 L27.0 56.7 L26.5 56.2 L26.0 56.3 L25.5 56.3 L25.0 56.8 L24.5 57.1 L24.0 56.5 L23.5 56.6 L23.0 56.2 L22.5 56.0 L22.0 56.1 L21.5 55.5 L21.0 55.2 L20.5 55.4 L20.0 55.4 L19.5 55.5 L19.0 55.4 L18.5 55.4 L18.0 55.6 L17.5 55.4 L17.0 55.6 L16.5 55.5 L16.0 55.8 L15.5 55.8 L15.0 56.0 L14.5 56.1 L14.0 55.8 L13.5 56.0 L13.0 55.6 L12.5 55.4 L12.0 55.0 L11.5 55.0 L11.0 55.0 L10.5 54.7 L10.0 54.9 L9.5 55.0 L9.0 54.4 L8.5 54.9 L8.0 54.8 L7.5 54.9 L7.0 55.0 L6.5 55.0 L6.0 54.9 L5.5 54.8 L5.0 54.7 L4.5 54.9 L4.0 55.1 L3.5 55.1 L3.0 55.2 L2.5 55.4 L2.0 55.7 L1.5 55.4 L1.0 55.3 L0.5 55.0 L0.0 54.9 Z" fill="#00c47c"/><path d="M0 16.8 L21 16.8 L0 83.8 Z" fill="#000" fill-opacity="0.14"/><path d="M130.80 16.8 L50.80 16.8 L130.80 83.8 Z" fill="#000" fill-opacity="0.14"/></svg>
<div class="t" style="left:5.50px;top:3.61px;font-size:10.61px;font-weight:bold;color:#fff;;transform:scaleX(0.9888);transform-origin:0 0">Forest_80_Cm_Dro...</div>
</div>
<div class="abs" style="left:793.10px;top:366.40px;width:281.40px;height:83.8px;border-radius:4px;overflow:hidden;background:#225b93"><svg style="left:0;top:0" width="281.40" height="83.8" viewBox="0 0 281.40 83.8"><rect x="0" y="0" width="281.40" height="16.8" fill="#1c4878"/><path d="M0.0 49.6 L0.5 49.5 L1.0 49.5 L1.5 49.5 L2.0 49.5 L2.5 49.6 L3.0 49.5 L3.5 49.5 L4.0 49.4 L4.5 49.3 L5.0 49.3 L5.5 49.3 L6.0 49.4 L6.5 49.4 L7.0 49.4 L7.5 49.4 L8.0 49.3 L8.5 49.2 L9.0 49.2 L9.5 49.2 L10.0 49.2 L10.5 49.3 L11.0 49.3 L11.5 49.2 L12.0 49.1 L12.5 49.1 L13.0 49.2 L13.5 49.1 L14.0 49.0 L14.5 49.0 L15.0 49.0 L15.5 48.8 L16.0 48.8 L16.5 48.8 L17.0 48.6 L17.5 48.5 L18.0 48.5 L18.5 48.7 L19.0 48.5 L19.5 48.4 L20.0 48.3 L20.5 48.3 L21.0 48.4 L21.5 48.1 L22.0 47.9 L22.5 47.9 L23.0 48.2 L23.5 47.9 L24.0 47.8 L24.5 47.7 L25.0 47.4 L25.5 47.4 L26.0 47.3 L26.5 47.3 L27.0 47.4 L27.5 47.6 L28.0 47.3 L28.5 47.1 L29.0 47.0 L29.5 46.7 L30.0 46.6 L30.5 47.0 L31.0 46.9 L31.5 46.5 L32.0 46.3 L32.5 46.4 L33.0 46.5 L33.5 46.4 L34.0 46.6 L34.5 46.2 L35.0 46.2 L35.5 46.1 L36.0 45.8 L36.5 45.8 L37.0 45.4 L37.5 45.1 L38.0 45.3 L38.5 45.5 L39.0 44.8 L39.5 44.4 L40.0 44.5 L40.5 44.4 L41.0 44.2 L41.5 44.9 L42.0 44.7 L42.5 44.4 L43.0 44.5 L43.5 44.4 L44.0 44.5 L44.5 44.1 L45.0 44.1 L45.5 43.9 L46.0 43.4 L46.5 43.8 L47.0 43.6 L47.5 43.3 L48.0 43.8 L48.5 43.6 L49.0 43.5 L49.5 43.1 L50.0 43.1 L50.5 43.2 L51.0 43.2 L51.5 42.2 L52.0 42.3 L52.5 42.9 L53.0 42.9 L53.5 42.9 L54.0 43.2 L54.5 41.9 L55.0 41.4 L55.5 41.2 L56.0 41.7 L56.5 41.7 L57.0 42.2 L57.5 42.2 L58.0 41.2 L58.5 41.2 L59.0 41.7 L59.5 42.4 L60.0 41.8 L60.5 42.0 L61.0 41.9 L61.5 41.5 L62.0 41.1 L62.5 41.1 L63.0 41.2 L63.5 41.9 L64.0 42.0 L64.5 42.2 L65.0 42.3 L65.5 41.9 L66.0 41.7 L66.5 41.4 L67.0 41.7 L67.5 41.1 L68.0 40.6 L68.5 40.3 L69.0 40.7 L69.5 40.9 L70.0 41.1 L70.5 41.5 L71.0 40.8 L71.5 40.4 L72.0 40.8 L72.5 41.2 L73.0 41.7 L73.5 41.5 L74.0 40.8 L74.5 40.5 L75.0 40.2 L75.5 39.6 L76.0 39.2 L76.5 39.6 L77.0 39.2 L77.5 39.4 L78.0 39.9 L78.5 40.0 L79.0 39.1 L79.5 39.4 L80.0 40.1 L80.5 40.0 L81.0 40.2 L81.5 40.1 L82.0 39.4 L82.5 38.3 L83.0 38.8 L83.5 38.8 L84.0 39.8 L84.5 40.0 L85.0 39.7 L85.5 40.2 L86.0 39.5 L86.5 39.3 L87.0 39.1 L87.5 39.6 L88.0 40.7 L88.5 40.0 L89.0 39.5 L89.5 39.4 L90.0 38.6 L90.5 39.1 L91.0 39.8 L91.5 39.6 L92.0 39.6 L92.5 39.0 L93.0 39.1 L93.5 39.6 L94.0 38.8 L94.5 39.6 L95.0 39.5 L95.5 39.2 L96.0 39.3 L96.5 40.0 L97.0 40.0 L97.5 39.1 L98.0 38.0 L98.5 38.3 L99.0 38.0 L99.5 37.8 L100.0 38.1 L100.5 38.8 L101.0 39.9 L101.5 39.9 L102.0 40.3 L102.5 39.9 L103.0 38.9 L103.5 38.0 L104.0 38.4 L104.5 39.8 L105.0 38.6 L105.5 38.0 L106.0 37.9 L106.5 39.6 L107.0 39.6 L107.5 39.0 L108.0 38.5 L108.5 39.0 L109.0 38.0 L109.5 39.1 L110.0 39.0 L110.5 39.1 L111.0 38.9 L111.5 39.1 L112.0 39.8 L112.5 39.6 L113.0 37.9 L113.5 37.7 L114.0 38.0 L114.5 38.6 L115.0 39.3 L115.5 39.3 L116.0 39.4 L116.5 38.9 L117.0 38.5 L117.5 37.8 L118.0 38.4 L118.5 37.9 L119.0 38.1 L119.5 38.7 L120.0 39.3 L120.5 38.4 L121.0 36.9 L121.5 38.0 L122.0 38.2 L122.5 38.5 L123.0 39.6 L123.5 39.3 L124.0 38.5 L124.5 38.9 L125.0 38.6 L125.5 37.9 L126.0 38.2 L126.5 39.4 L127.0 39.2 L127.5 38.0 L128.0 37.5 L128.5 37.7 L129.0 38.3 L129.5 38.1 L130.0 38.0 L130.5 39.1 L131.0 38.9 L131.5 39.4 L132.0 38.5 L132.5 37.4 L133.0 36.7 L133.5 37.2 L134.0 37.8 L134.5 38.5 L135.0 38.1 L135.5 38.3 L136.0 37.1 L136.5 37.0 L137.0 37.5 L137.5 38.3 L138.0 37.9 L138.5 36.2 L139.0 36.3 L139.5 35.9 L140.0 36.8 L140.5 37.6 L141.0 36.9 L141.5 36.1 L142.0 36.3 L142.5 36.4 L143.0 37.1 L143.5 36.4 L144.0 35.7 L144.5 36.5 L145.0 36.9 L145.5 37.1 L146.0 37.7 L146.5 37.9 L147.0 37.5 L147.5 37.0 L148.0 35.5 L148.5 34.7 L149.0 34.7 L149.5 34.7 L150.0 35.4 L150.5 36.2 L151.0 35.8 L151.5 35.2 L152.0 34.7 L152.5 36.0 L153.0 36.3 L153.5 35.0 L154.0 35.4 L154.5 35.8 L155.0 36.2 L155.5 35.7 L156.0 35.5 L156.5 35.4 L157.0 34.5 L157.5 34.2 L158.0 34.0 L158.5 33.6 L159.0 34.4 L159.5 33.6 L160.0 34.6 L160.5 34.4 L161.0 35.4 L161.5 36.1 L162.0 35.8 L162.5 36.9 L163.0 36.3 L163.5 34.5 L164.0 34.5 L164.5 34.5 L165.0 35.6 L165.5 35.9 L166.0 36.7 L166.5 37.1 L167.0 35.4 L167.5 36.6 L168.0 36.9 L168.5 37.3 L169.0 35.7 L169.5 34.5 L170.0 34.0 L170.5 33.8 L171.0 35.1 L171.5 36.7 L172.0 36.8 L172.5 35.5 L173.0 35.9 L173.5 34.1 L174.0 34.4 L174.5 35.2 L175.0 34.4 L175.5 35.3 L176.0 35.4 L176.5 36.5 L177.0 36.8 L177.5 36.9 L178.0 35.8 L178.5 35.4 L179.0 36.1 L179.5 36.6 L180.0 35.9 L180.5 36.0 L181.0 36.7 L181.5 36.2 L182.0 37.2 L182.5 36.6 L183.0 36.0 L183.5 36.0 L184.0 35.4 L184.5 36.9 L185.0 36.7 L185.5 37.2 L186.0 36.9 L186.5 35.9 L187.0 35.8 L187.5 34.7 L188.0 35.0 L188.5 35.8 L189.0 37.3 L189.5 36.8 L190.0 36.9 L190.5 37.4 L191.0 36.7 L191.5 35.9 L192.0 36.1 L192.5 37.4 L193.0 35.1 L193.5 33.7 L194.0 34.8 L194.5 35.7 L195.0 36.1 L195.5 36.4 L196.0 37.4 L196.5 36.3 L197.0 35.1 L197.5 35.1 L198.0 35.2 L198.5 35.8 L199.0 35.7 L199.5 35.8 L200.0 34.4 L200.5 35.0 L201.0 34.4 L201.5 34.3 L202.0 33.6 L202.5 33.3 L203.0 33.7 L203.5 34.0 L204.0 35.1 L204.5 37.4 L205.0 37.6 L205.5 38.1 L206.0 38.6 L206.5 39.9 L207.0 40.7 L207.5 40.1 L208.0 40.1 L208.5 40.5 L209.0 40.5 L209.5 40.4 L210.0 40.5 L210.5 41.2 L211.0 41.5 L211.5 41.8 L212.0 41.4 L212.5 41.9 L213.0 41.7 L213.5 42.0 L214.0 41.9 L214.5 42.0 L215.0 41.6 L215.5 42.0 L216.0 41.7 L216.5 41.8 L217.0 42.0 L217.5 41.9 L218.0 42.3 L218.5 42.6 L219.0 42.4 L219.5 43.0 L220.0 43.3 L220.5 43.1 L221.0 43.4 L221.5 43.7 L222.0 43.9 L222.5 43.6 L223.0 43.8 L223.5 43.9 L224.0 44.2 L224.5 43.9 L225.0 43.4 L225.5 43.2 L226.0 43.2 L226.5 43.5 L227.0 43.6 L227.5 43.9 L228.0 43.7 L228.5 43.6 L229.0 43.7 L229.5 44.4 L230.0 44.3 L230.5 44.5 L231.0 44.6 L231.5 44.3 L232.0 44.3 L232.5 44.7 L233.0 45.0 L233.5 45.2 L234.0 44.8 L234.5 44.7 L235.0 45.0 L235.5 45.2 L236.0 45.2 L236.5 45.1 L237.0 45.3 L237.5 45.6 L238.0 45.6 L238.5 45.6 L239.0 45.6 L239.5 45.5 L240.0 45.4 L240.5 45.6 L241.0 45.5 L241.5 45.5 L242.0 45.3 L242.5 45.9 L243.0 46.2 L243.5 46.1 L244.0 46.2 L244.5 46.3 L245.0 46.4 L245.5 46.7 L246.0 46.5 L246.5 46.5 L247.0 46.3 L247.5 46.3 L248.0 46.4 L248.5 46.4 L249.0 46.4 L249.5 46.9 L250.0 46.9 L250.5 47.1 L251.0 47.2 L251.5 47.0 L252.0 46.9 L252.5 47.2 L253.0 47.4 L253.5 47.6 L254.0 47.6 L254.5 47.6 L255.0 47.8 L255.5 47.9 L256.0 47.5 L256.5 47.5 L257.0 47.6 L257.5 47.8 L258.0 48.0 L258.5 48.1 L259.0 48.0 L259.5 48.0 L260.0 48.2 L260.5 48.4 L261.0 48.4 L261.5 48.4 L262.0 48.5 L262.5 48.5 L263.0 48.6 L263.5 48.6 L264.0 48.6 L264.5 48.8 L265.0 48.7 L265.5 48.8 L266.0 49.0 L266.5 49.0 L267.0 49.1 L267.5 49.2 L268.0 49.1 L268.5 49.1 L269.0 49.2 L269.5 49.3 L270.0 49.2 L270.5 49.3 L271.0 49.2 L271.5 49.3 L272.0 49.4 L272.5 49.4 L273.0 49.3 L273.5 49.4 L274.0 49.4 L274.5 49.4 L275.0 49.4 L275.5 49.4 L276.0 49.5 L276.5 49.5 L277.0 49.6 L277.5 49.6 L278.0 49.5 L278.5 49.5 L279.0 49.6 L279.5 49.6 L280.0 49.6 L280.5 49.7 L281.0 49.7 L281.4 49.7 L281.4 50.9 L281.0 51.0 L280.5 51.0 L280.0 51.0 L279.5 50.9 L279.0 50.9 L278.5 51.0 L278.0 51.1 L277.5 51.1 L277.0 51.1 L276.5 51.1 L276.0 51.2 L275.5 51.2 L275.0 51.2 L274.5 51.3 L274.0 51.2 L273.5 51.2 L273.0 51.2 L272.5 51.3 L272.0 51.3 L271.5 51.3 L271.0 51.3 L270.5 51.3 L270.0 51.4 L269.5 51.5 L269.0 51.6 L268.5 51.6 L268.0 51.5 L267.5 51.4 L267.0 51.5 L266.5 51.6 L266.0 51.7 L265.5 51.9 L265.0 51.9 L264.5 51.9 L264.0 51.9 L263.5 52.0 L263.0 51.9 L262.5 51.9 L262.0 52.3 L261.5 52.3 L261.0 52.3 L260.5 52.4 L260.0 52.6 L259.5 52.7 L259.0 52.6 L258.5 52.5 L258.0 52.6 L257.5 52.6 L257.0 52.6 L256.5 53.0 L256.0 53.0 L255.5 53.1 L255.0 53.1 L254.5 53.2 L254.0 53.2 L253.5 53.3 L253.0 53.5 L252.5 53.2 L252.0 53.3 L251.5 53.2 L251.0 53.1 L250.5 53.3 L250.0 53.3 L249.5 53.5 L249.0 53.7 L248.5 54.1 L248.0 53.8 L247.5 53.8 L247.0 53.9 L246.5 54.2 L246.0 54.4 L245.5 54.4 L245.0 54.2 L244.5 54.2 L244.0 54.5 L243.5 54.7 L243.0 54.9 L242.5 54.7 L242.0 54.4 L241.5 54.9 L241.0 55.2 L240.5 55.1 L240.0 55.3 L239.5 55.2 L239.0 55.1 L238.5 55.5 L238.0 55.2 L237.5 55.3 L237.0 55.5 L236.5 54.9 L236.0 55.3 L235.5 55.7 L235.0 55.5 L234.5 55.7 L234.0 55.8 L233.5 56.5 L233.0 56.5 L232.5 55.9 L232.0 55.9 L231.5 56.5 L231.0 57.1 L230.5 56.8 L230.0 57.0 L229.5 56.6 L229.0 56.4 L228.5 56.3 L228.0 56.1 L227.5 56.4 L227.0 56.8 L226.5 57.0 L226.0 56.7 L225.5 56.5 L225.0 56.4 L224.5 56.6 L224.0 56.6 L223.5 57.1 L223.0 57.2 L222.5 57.9 L222.0 58.0 L221.5 57.9 L221.0 58.5 L220.5 58.8 L220.0 58.6 L219.5 58.3 L219.0 58.3 L218.5 57.9 L218.0 58.0 L217.5 58.1 L217.0 58.6 L216.5 58.7 L216.0 58.5 L215.5 58.0 L215.0 58.5 L214.5 58.7 L214.0 58.5 L213.5 58.5 L213.0 58.8 L212.5 59.5 L212.0 59.4 L211.5 59.8 L211.0 60.1 L210.5 60.0 L210.0 60.6 L209.5 60.8 L209.0 60.6 L208.5 60.4 L208.0 59.4 L207.5 60.2 L207.0 61.4 L206.5 61.6 L206.0 61.7 L205.5 62.7 L205.0 64.1 L204.5 65.8 L204.0 65.0 L203.5 64.5 L203.0 67.7 L202.5 69.9 L202.0 67.5 L201.5 65.3 L201.0 65.2 L200.5 65.7 L200.0 66.0 L199.5 63.9 L199.0 64.4 L198.5 65.0 L198.0 66.7 L197.5 65.1 L197.0 63.6 L196.5 64.3 L196.0 66.7 L195.5 65.5 L195.0 65.0 L194.5 64.2 L194.0 64.5 L193.5 64.0 L193.0 64.2 L192.5 63.1 L192.0 64.5 L191.5 66.0 L191.0 65.3 L190.5 64.7 L190.0 64.2 L189.5 64.0 L189.0 65.0 L188.5 64.8 L188.0 65.5 L187.5 64.9 L187.0 64.9 L186.5 65.7 L186.0 66.1 L185.5 65.6 L185.0 63.3 L184.5 63.6 L184.0 64.5 L183.5 64.6 L183.0 63.8 L182.5 63.9 L182.0 64.6 L181.5 64.7 L181.0 65.5 L180.5 64.9 L180.0 65.5 L179.5 64.5 L179.0 64.8 L178.5 64.0 L178.0 64.2 L177.5 65.7 L177.0 65.4 L176.5 65.5 L176.0 65.4 L175.5 65.6 L175.0 64.4 L174.5 64.8 L174.0 65.3 L173.5 65.9 L173.0 65.0 L172.5 64.9 L172.0 65.9 L171.5 65.4 L171.0 65.4 L170.5 64.8 L170.0 64.2 L169.5 65.5 L169.0 64.2 L168.5 64.5 L168.0 63.5 L167.5 64.6 L167.0 64.4 L166.5 64.8 L166.0 64.9 L165.5 64.6 L165.0 64.7 L164.5 64.4 L164.0 66.0 L163.5 65.0 L163.0 64.1 L162.5 64.0 L162.0 65.3 L161.5 65.7 L161.0 64.6 L160.5 65.6 L160.0 64.9 L159.5 65.3 L159.0 65.0 L158.5 64.4 L158.0 64.4 L157.5 65.1 L157.0 65.5 L156.5 64.4 L156.0 65.4 L155.5 65.0 L155.0 66.3 L154.5 65.0 L154.0 63.7 L153.5 63.7 L153.0 64.0 L152.5 65.1 L152.0 65.3 L151.5 65.9 L151.0 65.8 L150.5 65.8 L150.0 64.9 L149.5 63.8 L149.0 63.8 L148.5 64.1 L148.0 64.5 L147.5 64.8 L147.0 64.6 L146.5 63.9 L146.0 64.0 L145.5 64.5 L145.0 65.8 L144.5 65.5 L144.0 64.5 L143.5 64.4 L143.0 63.4 L142.5 63.5 L142.0 64.8 L141.5 64.7 L141.0 63.7 L140.5 63.2 L140.0 63.5 L139.5 63.6 L139.0 63.8 L138.5 63.3 L138.0 63.4 L137.5 62.9 L137.0 62.8 L136.5 61.9 L136.0 62.8 L135.5 62.6 L135.0 63.0 L134.5 62.5 L134.0 62.9 L133.5 62.7 L133.0 63.2 L132.5 63.4 L132.0 63.8 L131.5 62.9 L131.0 62.3 L130.5 62.1 L130.0 62.5 L129.5 62.8 L129.0 61.8 L128.5 61.9 L128.0 61.6 L127.5 61.3 L127.0 61.6 L126.5 61.2 L126.0 61.4 L125.5 61.3 L125.0 62.1 L124.5 61.4 L124.0 61.1 L123.5 62.4 L123.0 62.3 L122.5 62.7 L122.0 63.5 L121.5 62.7 L121.0 62.9 L120.5 62.1 L120.0 61.4 L119.5 61.2 L119.0 60.7 L118.5 61.8 L118.0 62.5 L117.5 62.4 L117.0 62.5 L116.5 62.2 L116.0 62.4 L115.5 61.8 L115.0 62.5 L114.5 63.3 L114.0 62.4 L113.5 61.2 L113.0 61.4 L112.5 62.0 L112.0 61.6 L111.5 62.1 L111.0 61.8 L110.5 62.5 L110.0 62.8 L109.5 61.9 L109.0 62.3 L108.5 61.8 L108.0 62.2 L107.5 61.9 L107.0 62.2 L106.5 62.2 L106.0 62.1 L105.5 62.2 L105.0 61.9 L104.5 61.1 L104.0 61.1 L103.5 61.2 L103.0 61.1 L102.5 60.5 L102.0 61.4 L101.5 61.6 L101.0 62.3 L100.5 62.2 L100.0 62.5 L99.5 61.8 L99.0 61.9 L98.5 62.1 L98.0 62.4 L97.5 61.9 L97.0 61.1 L96.5 61.0 L96.0 61.0 L95.5 61.3 L95.0 61.4 L94.5 61.3 L94.0 61.5 L93.5 61.5 L93.0 61.2 L92.5 61.5 L92.0 61.7 L91.5 62.3 L91.0 62.0 L90.5 61.3 L90.0 60.7 L89.5 60.4 L89.0 60.8 L88.5 60.6 L88.0 60.9 L87.5 60.7 L87.0 61.4 L86.5 61.3 L86.0 61.8 L85.5 60.9 L85.0 61.0 L84.5 61.5 L84.0 61.9 L83.5 61.5 L83.0 60.5 L82.5 60.1 L82.0 60.9 L81.5 60.5 L81.0 61.0 L80.5 61.0 L80.0 61.1 L79.5 60.9 L79.0 61.0 L78.5 61.0 L78.0 60.9 L77.5 60.9 L77.0 61.1 L76.5 60.4 L76.0 60.0 L75.5 59.5 L75.0 59.7 L74.5 60.0 L74.0 59.2 L73.5 59.6 L73.0 60.1 L72.5 60.7 L72.0 60.2 L71.5 60.4 L71.0 60.4 L70.5 60.6 L70.0 60.0 L69.5 59.5 L69.0 59.2 L68.5 60.2 L68.0 60.4 L67.5 60.2 L67.0 59.7 L66.5 60.1 L66.0 60.3 L65.5 59.9 L65.0 59.4 L64.5 60.1 L64.0 59.7 L63.5 59.4 L63.0 58.8 L62.5 58.9 L62.0 58.8 L61.5 59.3 L61.0 58.7 L60.5 58.1 L60.0 58.3 L59.5 58.5 L59.0 58.9 L58.5 58.6 L58.0 58.8 L57.5 59.2 L57.0 58.7 L56.5 59.0 L56.0 58.2 L55.5 58.4 L55.0 58.2 L54.5 58.1 L54.0 58.4 L53.5 58.0 L53.0 58.2 L52.5 58.1 L52.0 57.6 L51.5 57.5 L51.0 58.0 L50.5 58.6 L50.0 57.3 L49.5 57.0 L49.0 56.9 L48.5 56.9 L48.0 56.9 L47.5 57.3 L47.0 57.4 L46.5 57.3 L46.0 57.5 L45.5 57.2 L45.0 56.7 L44.5 56.6 L44.0 56.5 L43.5 56.5 L43.0 56.6 L42.5 56.4 L42.0 56.4 L41.5 56.1 L41.0 55.4 L40.5 55.2 L40.0 55.9 L39.5 55.7 L39.0 55.8 L38.5 55.6 L38.0 55.5 L37.5 55.2 L37.0 55.0 L36.5 54.7 L36.0 54.8 L35.5 54.8 L35.0 54.5 L34.5 54.4 L34.0 54.3 L33.5 54.2 L33.0 53.9 L32.5 53.7 L32.0 53.6 L31.5 53.6 L31.0 54.1 L30.5 53.9 L30.0 53.5 L29.5 53.5 L29.0 53.3 L28.5 53.1 L28.0 53.0 L27.5 53.1 L27.0 53.3 L26.5 53.4 L26.0 53.2 L25.5 52.7 L25.0 52.8 L24.5 53.0 L24.0 53.0 L23.5 52.8 L23.0 52.9 L22.5 52.5 L22.0 52.4 L21.5 52.3 L21.0 52.3 L20.5 52.3 L20.0 52.2 L19.5 52.1 L19.0 52.2 L18.5 52.2 L18.0 51.9 L17.5 51.7 L17.0 51.7 L16.5 51.7 L16.0 51.7 L15.5 51.7 L15.0 51.6 L14.5 51.5 L14.0 51.4 L13.5 51.4 L13.0 51.4 L12.5 51.5 L12.0 51.5 L11.5 51.4 L11.0 51.3 L10.5 51.4 L10.0 51.4 L9.5 51.5 L9.0 51.4 L8.5 51.4 L8.0 51.2 L7.5 51.3 L7.0 51.2 L6.5 51.2 L6.0 51.3 L5.5 51.3 L5.0 51.2 L4.5 51.1 L4.0 51.1 L3.5 51.1 L3.0 51.1 L2.5 51.1 L2.0 51.1 L1.5 51.1 L1.0 51.1 L0.5 51.1 L0.0 51.1 Z" fill="#3393f0"/></svg>
<div class="t" style="left:5.50px;top:3.61px;font-size:10.61px;font-weight:bold;color:#fff;;transform:scaleX(1.0169);transform-origin:0 0">Street_90_Am_Drone_32bar</div>
</div>
<div class="abs" style="left:1169.80px;top:366.40px;width:281.40px;height:83.8px;border-radius:4px;overflow:hidden;background:#225b93"><svg style="left:0;top:0" width="281.40" height="83.8" viewBox="0 0 281.40 83.8"><rect x="0" y="0" width="281.40" height="16.8" fill="#1c4878"/><path d="M0.0 49.6 L0.5 49.5 L1.0 49.5 L1.5 49.6 L2.0 49.5 L2.5 49.5 L3.0 49.4 L3.5 49.3 L4.0 49.4 L4.5 49.4 L5.0 49.4 L5.5 49.4 L6.0 49.3 L6.5 49.3 L7.0 49.3 L7.5 49.3 L8.0 49.3 L8.5 49.2 L9.0 49.2 L9.5 49.2 L10.0 49.2 L10.5 49.2 L11.0 49.1 L11.5 49.2 L12.0 49.1 L12.5 49.0 L13.0 49.1 L13.5 49.0 L14.0 49.1 L14.5 49.1 L15.0 49.0 L15.5 49.0 L16.0 48.9 L16.5 48.9 L17.0 48.7 L17.5 48.6 L18.0 48.6 L18.5 48.6 L19.0 48.5 L19.5 48.3 L20.0 48.2 L20.5 48.2 L21.0 48.2 L21.5 48.2 L22.0 48.2 L22.5 48.0 L23.0 47.9 L23.5 47.8 L24.0 48.0 L24.5 47.8 L25.0 47.6 L25.5 47.4 L26.0 47.3 L26.5 47.4 L27.0 47.5 L27.5 47.5 L28.0 47.4 L28.5 47.0 L29.0 46.9 L29.5 46.8 L30.0 46.8 L30.5 47.0 L31.0 46.9 L31.5 46.7 L32.0 46.6 L32.5 46.5 L33.0 46.6 L33.5 46.2 L34.0 45.8 L34.5 45.7 L35.0 45.9 L35.5 45.5 L36.0 45.5 L36.5 45.4 L37.0 45.9 L37.5 45.7 L38.0 45.5 L38.5 45.4 L39.0 45.0 L39.5 45.0 L40.0 44.7 L40.5 44.7 L41.0 44.9 L41.5 44.9 L42.0 45.0 L42.5 44.3 L43.0 44.0 L43.5 43.9 L44.0 43.5 L44.5 43.9 L45.0 44.2 L45.5 44.4 L46.0 44.4 L46.5 44.2 L47.0 43.3 L47.5 43.2 L48.0 43.2 L48.5 43.3 L49.0 43.2 L49.5 42.8 L50.0 42.9 L50.5 42.5 L51.0 42.7 L51.5 42.6 L52.0 42.8 L52.5 43.0 L53.0 43.1 L53.5 43.5 L54.0 43.3 L54.5 43.0 L55.0 42.1 L55.5 42.4 L56.0 41.9 L56.5 41.9 L57.0 42.4 L57.5 42.3 L58.0 41.4 L58.5 41.8 L59.0 41.5 L59.5 41.8 L60.0 41.3 L60.5 41.2 L61.0 41.1 L61.5 41.2 L62.0 41.6 L62.5 42.0 L63.0 42.0 L63.5 41.9 L64.0 42.5 L64.5 42.4 L65.0 42.3 L65.5 42.0 L66.0 42.1 L66.5 41.6 L67.0 40.2 L67.5 40.3 L68.0 40.0 L68.5 40.4 L69.0 40.0 L69.5 40.4 L70.0 41.3 L70.5 41.8 L71.0 40.6 L71.5 40.6 L72.0 40.5 L72.5 41.0 L73.0 41.1 L73.5 39.6 L74.0 39.5 L74.5 40.3 L75.0 39.7 L75.5 39.4 L76.0 39.8 L76.5 39.8 L77.0 40.0 L77.5 40.2 L78.0 40.5 L78.5 39.7 L79.0 38.8 L79.5 39.4 L80.0 39.3 L80.5 38.8 L81.0 40.0 L81.5 39.9 L82.0 40.1 L82.5 40.1 L83.0 39.5 L83.5 39.0 L84.0 39.0 L84.5 39.0 L85.0 39.2 L85.5 39.0 L86.0 40.0 L86.5 39.7 L87.0 39.1 L87.5 39.0 L88.0 38.5 L88.5 39.0 L89.0 39.6 L89.5 39.5 L90.0 39.6 L90.5 40.0 L91.0 38.5 L91.5 39.1 L92.0 39.1 L92.5 39.3 L93.0 39.2 L93.5 38.3 L94.0 39.0 L94.5 39.5 L95.0 38.8 L95.5 37.9 L96.0 38.0 L96.5 39.6 L97.0 39.4 L97.5 38.0 L98.0 37.9 L98.5 38.0 L99.0 38.7 L99.5 38.7 L100.0 38.4 L100.5 38.7 L101.0 39.9 L101.5 39.2 L102.0 39.6 L102.5 39.3 L103.0 39.5 L103.5 40.1 L104.0 40.0 L104.5 39.3 L105.0 39.1 L105.5 38.3 L106.0 38.6 L106.5 39.2 L107.0 39.7 L107.5 39.5 L108.0 39.0 L108.5 39.3 L109.0 38.7 L109.5 39.4 L110.0 39.4 L110.5 39.0 L111.0 39.2 L111.5 39.5 L112.0 39.7 L112.5 38.7 L113.0 38.3 L113.5 37.9 L114.0 39.4 L114.5 39.7 L115.0 38.6 L115.5 37.2 L116.0 37.7 L116.5 37.9 L117.0 38.1 L117.5 38.2 L118.0 38.5 L118.5 38.0 L119.0 37.9 L119.5 38.6 L120.0 38.6 L120.5 37.8 L121.0 37.4 L121.5 37.1 L122.0 37.4 L122.5 37.5 L123.0 37.7 L123.5 38.2 L124.0 38.7 L124.5 38.9 L125.0 38.9 L125.5 38.2 L126.0 37.4 L126.5 37.3 L127.0 37.5 L127.5 37.8 L128.0 38.1 L128.5 38.2 L129.0 37.7 L129.5 37.2 L130.0 38.1 L130.5 37.9 L131.0 39.1 L131.5 37.6 L132.0 37.6 L132.5 37.0 L133.0 37.2 L133.5 37.0 L134.0 39.0 L134.5 38.4 L135.0 37.1 L135.5 37.3 L136.0 37.2 L136.5 36.8 L137.0 37.0 L137.5 37.3 L138.0 37.2 L138.5 36.9 L139.0 35.9 L139.5 35.8 L140.0 35.1 L140.5 35.9 L141.0 36.0 L141.5 36.8 L142.0 36.6 L142.5 37.1 L143.0 37.8 L143.5 36.4 L144.0 35.1 L144.5 36.1 L145.0 35.6 L145.5 35.9 L146.0 34.9 L146.5 34.9 L147.0 35.2 L147.5 35.6 L148.0 36.0 L148.5 36.8 L149.0 36.6 L149.5 35.4 L150.0 35.3 L150.5 36.4 L151.0 36.5 L151.5 34.9 L152.0 34.9 L152.5 35.5 L153.0 35.5 L153.5 35.8 L154.0 36.8 L154.5 36.3 L155.0 34.7 L155.5 35.2 L156.0 35.5 L156.5 35.9 L157.0 36.3 L157.5 36.5 L158.0 35.7 L158.5 36.8 L159.0 35.3 L159.5 35.5 L160.0 35.7 L160.5 36.7 L161.0 35.8 L161.5 35.0 L162.0 35.1 L162.5 34.6 L163.0 34.5 L163.5 34.9 L164.0 35.0 L164.5 35.8 L165.0 37.1 L165.5 35.9 L166.0 34.1 L166.5 34.4 L167.0 34.4 L167.5 34.6 L168.0 35.3 L168.5 35.8 L169.0 36.2 L169.5 37.6 L170.0 35.7 L170.5 35.5 L171.0 35.6 L171.5 36.6 L172.0 36.2 L172.5 34.6 L173.0 34.9 L173.5 36.4 L174.0 36.4 L174.5 36.4 L175.0 36.4 L175.5 36.9 L176.0 37.2 L176.5 35.8 L177.0 35.4 L177.5 35.5 L178.0 36.6 L178.5 36.5 L179.0 34.9 L179.5 34.5 L180.0 35.6 L180.5 36.4 L181.0 37.0 L181.5 36.5 L182.0 36.5 L182.5 35.6 L183.0 36.1 L183.5 35.7 L184.0 36.3 L184.5 37.0 L185.0 37.1 L185.5 35.1 L186.0 34.6 L186.5 35.3 L187.0 36.1 L187.5 37.4 L188.0 37.1 L188.5 36.9 L189.0 35.4 L189.5 34.9 L190.0 35.0 L190.5 35.0 L191.0 35.8 L191.5 36.6 L192.0 35.7 L192.5 37.2 L193.0 35.5 L193.5 34.9 L194.0 35.2 L194.5 35.7 L195.0 34.9 L195.5 35.2 L196.0 35.1 L196.5 34.8 L197.0 35.1 L197.5 35.9 L198.0 34.6 L198.5 35.1 L199.0 34.9 L199.5 35.3 L200.0 36.3 L200.5 35.7 L201.0 34.6 L201.5 33.8 L202.0 32.8 L202.5 32.2 L203.0 32.6 L203.5 33.0 L204.0 34.4 L204.5 35.1 L205.0 36.2 L205.5 36.2 L206.0 38.1 L206.5 39.5 L207.0 40.0 L207.5 39.5 L208.0 40.2 L208.5 40.4 L209.0 41.6 L209.5 41.4 L210.0 41.2 L210.5 41.1 L211.0 41.6 L211.5 42.1 L212.0 41.0 L212.5 41.0 L213.0 40.9 L213.5 40.5 L214.0 41.1 L214.5 41.5 L215.0 41.7 L215.5 41.6 L216.0 41.8 L216.5 42.0 L217.0 42.4 L217.5 41.8 L218.0 41.7 L218.5 43.1 L219.0 43.3 L219.5 42.8 L220.0 43.1 L220.5 42.6 L221.0 43.1 L221.5 42.8 L222.0 42.7 L222.5 42.7 L223.0 43.4 L223.5 43.5 L224.0 43.7 L224.5 44.0 L225.0 44.2 L225.5 44.2 L226.0 43.6 L226.5 43.4 L227.0 43.6 L227.5 44.0 L228.0 44.1 L228.5 43.4 L229.0 43.7 L229.5 44.2 L230.0 44.2 L230.5 44.0 L231.0 43.7 L231.5 44.5 L232.0 44.7 L232.5 44.7 L233.0 44.2 L233.5 44.3 L234.0 44.0 L234.5 44.1 L235.0 44.4 L235.5 44.6 L236.0 44.8 L236.5 44.9 L237.0 45.0 L237.5 44.9 L238.0 44.9 L238.5 44.8 L239.0 44.9 L239.5 45.3 L240.0 45.1 L240.5 45.7 L241.0 46.1 L241.5 45.7 L242.0 45.4 L242.5 45.7 L243.0 45.8 L243.5 45.9 L244.0 46.2 L244.5 46.2 L245.0 46.3 L245.5 46.4 L246.0 46.4 L246.5 46.0 L247.0 46.4 L247.5 46.6 L248.0 46.5 L248.5 46.7 L249.0 46.8 L249.5 46.6 L250.0 46.5 L250.5 46.8 L251.0 47.0 L251.5 47.3 L252.0 47.2 L252.5 47.3 L253.0 47.0 L253.5 47.3 L254.0 47.4 L254.5 47.6 L255.0 47.7 L255.5 47.7 L256.0 47.6 L256.5 47.5 L257.0 47.5 L257.5 47.6 L258.0 47.9 L258.5 48.1 L259.0 48.1 L259.5 48.0 L260.0 48.0 L260.5 48.1 L261.0 48.2 L261.5 48.3 L262.0 48.4 L262.5 48.6 L263.0 48.7 L263.5 48.6 L264.0 48.7 L264.5 48.7 L265.0 48.9 L265.5 48.9 L266.0 49.0 L266.5 49.1 L267.0 49.0 L267.5 49.1 L268.0 49.1 L268.5 49.2 L269.0 49.2 L269.5 49.3 L270.0 49.2 L270.5 49.1 L271.0 49.2 L271.5 49.2 L272.0 49.2 L272.5 49.3 L273.0 49.3 L273.5 49.4 L274.0 49.4 L274.5 49.4 L275.0 49.4 L275.5 49.4 L276.0 49.4 L276.5 49.5 L277.0 49.6 L277.5 49.6 L278.0 49.6 L278.5 49.6 L279.0 49.6 L279.5 49.7 L280.0 49.6 L280.5 49.6 L281.0 49.7 L281.4 49.7 L281.4 50.9 L281.0 50.9 L280.5 50.9 L280.0 51.0 L279.5 51.0 L279.0 51.0 L278.5 51.1 L278.0 51.1 L277.5 51.0 L277.0 51.0 L276.5 51.1 L276.0 51.2 L275.5 51.1 L275.0 51.1 L274.5 51.2 L274.0 51.1 L273.5 51.2 L273.0 51.2 L272.5 51.2 L272.0 51.3 L271.5 51.3 L271.0 51.4 L270.5 51.3 L270.0 51.4 L269.5 51.5 L269.0 51.5 L268.5 51.5 L268.0 51.5 L267.5 51.5 L267.0 51.5 L266.5 51.5 L266.0 51.6 L265.5 51.8 L265.0 51.9 L264.5 52.0 L264.0 52.0 L263.5 52.1 L263.0 52.2 L262.5 52.1 L262.0 52.1 L261.5 52.2 L261.0 52.4 L260.5 52.4 L260.0 52.5 L259.5 52.6 L259.0 52.6 L258.5 52.7 L258.0 52.6 L257.5 52.7 L257.0 52.9 L256.5 52.9 L256.0 53.1 L255.5 53.2 L255.0 53.2 L254.5 52.9 L254.0 53.0 L253.5 53.1 L253.0 53.1 L252.5 53.2 L252.0 53.4 L251.5 53.5 L251.0 53.7 L250.5 53.7 L250.0 54.2 L249.5 54.2 L249.0 53.9 L248.5 54.1 L248.0 54.0 L247.5 54.1 L247.0 53.8 L246.5 53.8 L246.0 54.0 L245.5 53.8 L245.0 54.0 L244.5 54.4 L244.0 54.5 L243.5 54.5 L243.0 54.5 L242.5 54.4 L242.0 54.5 L241.5 55.0 L241.0 55.3 L240.5 55.1 L240.0 54.9 L239.5 55.0 L239.0 55.3 L238.5 55.7 L238.0 55.2 L237.5 55.0 L237.0 55.6 L236.5 56.1 L236.0 55.6 L235.5 55.2 L235.0 55.9 L234.5 56.1 L234.0 56.3 L233.5 56.4 L233.0 56.5 L232.5 56.1 L232.0 55.6 L231.5 56.0 L231.0 56.0 L230.5 56.2 L230.0 55.9 L229.5 55.8 L229.0 56.2 L228.5 56.3 L228.0 57.4 L227.5 57.5 L227.0 57.0 L226.5 56.9 L226.0 57.2 L225.5 57.5 L225.0 57.1 L224.5 56.9 L224.0 57.0 L223.5 57.9 L223.0 58.0 L222.5 58.4 L222.0 58.6 L221.5 58.3 L221.0 58.6 L220.5 58.3 L220.0 58.6 L219.5 58.1 L219.0 57.5 L218.5 58.2 L218.0 58.2 L217.5 58.8 L217.0 58.4 L216.5 58.4 L216.0 59.2 L215.5 58.8 L215.0 58.2 L214.5 58.2 L214.0 58.3 L213.5 59.3 L213.0 59.3 L212.5 58.5 L212.0 58.3 L211.5 59.5 L211.0 59.3 L210.5 59.1 L210.0 59.4 L209.5 59.8 L209.0 59.8 L208.5 60.6 L208.0 61.1 L207.5 60.9 L207.0 61.0 L206.5 62.0 L206.0 62.4 L205.5 64.3 L205.0 64.4 L204.5 66.2 L204.0 64.7 L203.5 65.0 L203.0 67.2 L202.5 67.3 L202.0 68.0 L201.5 67.8 L201.0 66.8 L200.5 66.5 L200.0 66.0 L199.5 65.1 L199.0 64.8 L198.5 65.4 L198.0 65.0 L197.5 64.6 L197.0 64.3 L196.5 64.2 L196.0 65.7 L195.5 65.3 L195.0 63.7 L194.5 64.2 L194.0 63.7 L193.5 64.8 L193.0 64.4 L192.5 65.0 L192.0 64.1 L191.5 63.7 L191.0 64.0 L190.5 65.0 L190.0 64.2 L189.5 65.0 L189.0 65.0 L188.5 64.2 L188.0 64.3 L187.5 63.1 L187.0 63.0 L186.5 63.5 L186.0 65.1 L185.5 65.0 L185.0 65.7 L184.5 64.7 L184.0 64.8 L183.5 65.9 L183.0 65.5 L182.5 65.4 L182.0 63.5 L181.5 63.8 L181.0 62.8 L180.5 63.1 L180.0 63.6 L179.5 63.1 L179.0 63.2 L178.5 65.1 L178.0 64.8 L177.5 64.8 L177.0 64.9 L176.5 64.4 L176.0 63.7 L175.5 64.1 L175.0 66.0 L174.5 65.2 L174.0 64.3 L173.5 64.8 L173.0 64.1 L172.5 64.1 L172.0 64.9 L171.5 65.2 L171.0 65.2 L170.5 66.4 L170.0 65.6 L169.5 65.2 L169.0 64.8 L168.5 65.3 L168.0 65.5 L167.5 65.4 L167.0 64.8 L166.5 65.2 L166.0 64.7 L165.5 64.2 L165.0 64.1 L164.5 64.4 L164.0 64.5 L163.5 65.3 L163.0 65.7 L162.5 66.0 L162.0 64.3 L161.5 64.2 L161.0 63.8 L160.5 63.5 L160.0 64.2 L159.5 65.5 L159.0 65.9 L158.5 65.7 L158.0 65.0 L157.5 64.7 L157.0 65.1 L156.5 66.6 L156.0 66.8 L155.5 65.4 L155.0 64.9 L154.5 65.8 L154.0 65.7 L153.5 65.0 L153.0 64.7 L152.5 65.4 L152.0 64.5 L151.5 64.0 L151.0 64.9 L150.5 64.3 L150.0 66.0 L149.5 65.9 L149.0 65.4 L148.5 64.7 L148.0 64.4 L147.5 63.8 L147.0 64.3 L146.5 65.9 L146.0 65.4 L145.5 65.5 L145.0 64.9 L144.5 63.8 L144.0 64.4 L143.5 63.7 L143.0 63.1 L142.5 63.6 L142.0 64.1 L141.5 63.8 L141.0 62.2 L140.5 62.5 L140.0 64.7 L139.5 65.1 L139.0 63.7 L138.5 63.1 L138.0 63.2 L137.5 62.6 L137.0 63.1 L136.5 63.6 L136.0 62.5 L135.5 62.3 L135.0 62.4 L134.5 62.4 L134.0 62.5 L133.5 62.5 L133.0 62.8 L132.5 63.0 L132.0 62.7 L131.5 63.4 L131.0 64.4 L130.5 63.2 L130.0 63.5 L129.5 62.6 L129.0 63.1 L128.5 62.6 L128.0 63.0 L127.5 63.0 L127.0 62.8 L126.5 62.3 L126.0 62.5 L125.5 63.6 L125.0 62.8 L124.5 62.3 L124.0 62.4 L123.5 63.4 L123.0 63.6 L122.5 61.8 L122.0 62.1 L121.5 62.1 L121.0 61.2 L120.5 61.0 L120.0 61.9 L119.5 61.8 L119.0 61.8 L118.5 61.9 L118.0 61.4 L117.5 61.1 L117.0 61.9 L116.5 61.4 L116.0 61.2 L115.5 61.8 L115.0 61.9 L114.5 63.5 L114.0 62.6 L113.5 63.0 L113.0 62.8 L112.5 63.1 L112.0 62.7 L111.5 63.2 L111.0 62.5 L110.5 61.8 L110.0 61.7 L109.5 61.2 L109.0 61.2 L108.5 61.1 L108.0 61.4 L107.5 62.0 L107.0 60.6 L106.5 61.0 L106.0 61.0 L105.5 60.7 L105.0 61.4 L104.5 61.9 L104.0 62.0 L103.5 61.4 L103.0 61.1 L102.5 61.5 L102.0 61.2 L101.5 61.2 L101.0 62.0 L100.5 60.9 L100.0 61.6 L99.5 60.9 L99.0 61.2 L98.5 61.7 L98.0 62.0 L97.5 61.7 L97.0 61.0 L96.5 60.6 L96.0 61.0 L95.5 60.7 L95.0 61.0 L94.5 61.1 L94.0 61.3 L93.5 61.7 L93.0 61.1 L92.5 61.3 L92.0 61.2 L91.5 60.3 L91.0 60.8 L90.5 61.4 L90.0 62.5 L89.5 62.0 L89.0 62.2 L88.5 61.4 L88.0 60.8 L87.5 60.9 L87.0 60.7 L86.5 60.8 L86.0 61.8 L85.5 61.6 L85.0 60.8 L84.5 60.9 L84.0 61.7 L83.5 62.7 L83.0 61.4 L82.5 59.9 L82.0 60.8 L81.5 60.9 L81.0 61.4 L80.5 61.3 L80.0 61.3 L79.5 61.7 L79.0 61.2 L78.5 61.1 L78.0 60.7 L77.5 60.5 L77.0 59.9 L76.5 60.1 L76.0 60.8 L75.5 59.9 L75.0 59.5 L74.5 59.2 L74.0 59.5 L73.5 59.4 L73.0 59.6 L72.5 59.3 L72.0 59.9 L71.5 61.2 L71.0 60.1 L70.5 59.5 L70.0 59.8 L69.5 60.8 L69.0 60.6 L68.5 60.3 L68.0 59.9 L67.5 60.0 L67.0 59.8 L66.5 59.5 L66.0 58.9 L65.5 59.4 L65.0 59.9 L64.5 59.5 L64.0 58.9 L63.5 58.4 L63.0 59.5 L62.5 59.4 L62.0 58.4 L61.5 58.2 L61.0 58.3 L60.5 58.5 L60.0 58.4 L59.5 58.2 L59.0 57.8 L58.5 58.6 L58.0 58.5 L57.5 58.5 L57.0 57.9 L56.5 57.7 L56.0 58.0 L55.5 58.9 L55.0 58.9 L54.5 58.6 L54.0 57.5 L53.5 57.4 L53.0 57.5 L52.5 57.9 L52.0 57.8 L51.5 58.1 L51.0 57.8 L50.5 57.8 L50.0 57.9 L49.5 57.8 L49.0 57.5 L48.5 57.8 L48.0 57.7 L47.5 58.0 L47.0 57.7 L46.5 57.8 L46.0 57.5 L45.5 56.8 L45.0 56.5 L44.5 56.3 L44.0 56.4 L43.5 56.1 L43.0 56.3 L42.5 56.3 L42.0 56.1 L41.5 56.0 L41.0 56.2 L40.5 56.1 L40.0 56.0 L39.5 56.2 L39.0 56.0 L38.5 56.0 L38.0 55.1 L37.5 54.8 L37.0 55.0 L36.5 55.2 L36.0 54.9 L35.5 54.8 L35.0 54.7 L34.5 54.2 L34.0 54.2 L33.5 54.1 L33.0 54.0 L32.5 54.0 L32.0 54.0 L31.5 54.0 L31.0 54.0 L30.5 53.7 L30.0 53.6 L29.5 53.7 L29.0 53.6 L28.5 53.7 L28.0 53.1 L27.5 53.0 L27.0 53.1 L26.5 53.2 L26.0 53.2 L25.5 53.3 L25.0 53.2 L24.5 53.1 L24.0 53.1 L23.5 52.9 L23.0 52.7 L22.5 52.7 L22.0 52.6 L21.5 52.6 L21.0 52.5 L20.5 52.4 L20.0 52.4 L19.5 52.4 L19.0 52.3 L18.5 52.2 L18.0 52.0 L17.5 51.8 L17.0 51.8 L16.5 51.8 L16.0 51.7 L15.5 51.7 L15.0 51.6 L14.5 51.6 L14.0 51.6 L13.5 51.6 L13.0 51.6 L12.5 51.5 L12.0 51.5 L11.5 51.5 L11.0 51.5 L10.5 51.4 L10.0 51.5 L9.5 51.4 L9.0 51.3 L8.5 51.3 L8.0 51.3 L7.5 51.2 L7.0 51.2 L6.5 51.2 L6.0 51.2 L5.5 51.2 L5.0 51.1 L4.5 51.2 L4.0 51.2 L3.5 51.1 L3.0 51.1 L2.5 51.1 L2.0 51.1 L1.5 51.0 L1.0 51.0 L0.5 51.1 L0.0 51.0 Z" fill="#3393f0"/><path d="M281.40 16.8 L105.40 16.8 L281.40 83.8 Z" fill="#000" fill-opacity="0.14"/></svg>
<div class="t" style="left:5.50px;top:3.61px;font-size:10.61px;font-weight:bold;color:#fff;;transform:scaleX(1.0169);transform-origin:0 0">Street_90_Am_Drone_32bar</div>
</div>
<div class="abs" style="left:590.00px;top:456.95px;width:281.30px;height:83.8px;border-radius:4px;overflow:hidden;background:#225b93"><svg style="left:0;top:0" width="281.30" height="83.8" viewBox="0 0 281.30 83.8"><rect x="0" y="0" width="281.30" height="16.8" fill="#1c4878"/><path d="M0.0 49.6 L0.5 49.6 L1.0 49.6 L1.5 49.6 L2.0 49.5 L2.5 49.5 L3.0 49.5 L3.5 49.5 L4.0 49.4 L4.5 49.4 L5.0 49.4 L5.5 49.4 L6.0 49.3 L6.5 49.2 L7.0 49.3 L7.5 49.4 L8.0 49.4 L8.5 49.3 L9.0 49.3 L9.5 49.3 L10.0 49.3 L10.5 49.3 L11.0 49.2 L11.5 49.2 L12.0 49.2 L12.5 49.2 L13.0 49.3 L13.5 49.2 L14.0 49.1 L14.5 49.1 L15.0 49.0 L15.5 48.9 L16.0 48.8 L16.5 48.8 L17.0 48.8 L17.5 48.7 L18.0 48.6 L18.5 48.5 L19.0 48.5 L19.5 48.2 L20.0 48.2 L20.5 48.4 L21.0 48.4 L21.5 48.2 L22.0 47.9 L22.5 47.9 L23.0 47.8 L23.5 47.8 L24.0 48.0 L24.5 47.8 L25.0 47.8 L25.5 47.7 L26.0 47.4 L26.5 47.3 L27.0 47.3 L27.5 47.4 L28.0 47.5 L28.5 47.4 L29.0 47.4 L29.5 47.3 L30.0 47.1 L30.5 46.6 L31.0 46.6 L31.5 46.4 L32.0 46.3 L32.5 46.4 L33.0 45.9 L33.5 46.1 L34.0 45.9 L34.5 45.8 L35.0 45.9 L35.5 45.9 L36.0 45.2 L36.5 45.3 L37.0 45.6 L37.5 45.4 L38.0 45.4 L38.5 45.0 L39.0 44.8 L39.5 44.8 L40.0 44.9 L40.5 44.4 L41.0 44.7 L41.5 44.1 L42.0 44.1 L42.5 44.1 L43.0 44.1 L43.5 44.0 L44.0 43.9 L44.5 44.0 L45.0 44.7 L45.5 44.5 L46.0 44.0 L46.5 44.1 L47.0 43.8 L47.5 43.8 L48.0 43.8 L48.5 43.9 L49.0 43.5 L49.5 43.5 L50.0 43.3 L50.5 43.6 L51.0 43.5 L51.5 43.3 L52.0 43.1 L52.5 42.8 L53.0 42.4 L53.5 42.4 L54.0 42.9 L54.5 42.8 L55.0 42.6 L55.5 42.5 L56.0 42.4 L56.5 42.6 L57.0 42.7 L57.5 42.6 L58.0 41.7 L58.5 41.5 L59.0 41.8 L59.5 42.0 L60.0 41.6 L60.5 41.8 L61.0 41.5 L61.5 42.2 L62.0 41.8 L62.5 41.6 L63.0 41.0 L63.5 41.9 L64.0 41.7 L64.5 41.7 L65.0 41.6 L65.5 40.9 L66.0 40.6 L66.5 40.9 L67.0 40.5 L67.5 40.9 L68.0 40.6 L68.5 40.9 L69.0 41.0 L69.5 40.4 L70.0 40.6 L70.5 40.4 L71.0 40.1 L71.5 40.3 L72.0 40.1 L72.5 41.4 L73.0 41.0 L73.5 41.3 L74.0 41.0 L74.5 41.1 L75.0 40.7 L75.5 40.8 L76.0 40.8 L76.5 40.4 L77.0 40.3 L77.5 40.2 L78.0 39.0 L78.5 38.9 L79.0 38.8 L79.5 38.8 L80.0 40.3 L80.5 40.4 L81.0 39.4 L81.5 39.6 L82.0 39.9 L82.5 40.2 L83.0 39.7 L83.5 38.6 L84.0 38.7 L84.5 39.6 L85.0 39.8 L85.5 39.6 L86.0 39.7 L86.5 39.9 L87.0 39.7 L87.5 39.0 L88.0 38.8 L88.5 39.3 L89.0 39.6 L89.5 39.1 L90.0 39.2 L90.5 38.8 L91.0 38.2 L91.5 37.9 L92.0 38.7 L92.5 39.8 L93.0 39.9 L93.5 40.0 L94.0 38.7 L94.5 37.9 L95.0 38.5 L95.5 39.3 L96.0 39.0 L96.5 39.6 L97.0 39.6 L97.5 40.1 L98.0 40.1 L98.5 40.4 L99.0 40.4 L99.5 39.4 L100.0 38.9 L100.5 38.8 L101.0 38.7 L101.5 37.9 L102.0 38.6 L102.5 39.1 L103.0 39.2 L103.5 39.4 L104.0 39.3 L104.5 39.4 L105.0 39.0 L105.5 37.4 L106.0 38.0 L106.5 38.5 L107.0 38.1 L107.5 38.2 L108.0 37.6 L108.5 37.7 L109.0 37.9 L109.5 39.4 L110.0 40.1 L110.5 39.3 L111.0 38.0 L111.5 37.8 L112.0 38.4 L112.5 38.1 L113.0 38.7 L113.5 38.1 L114.0 38.7 L114.5 39.1 L115.0 38.7 L115.5 38.4 L116.0 39.0 L116.5 39.0 L117.0 39.4 L117.5 38.7 L118.0 38.1 L118.5 38.5 L119.0 38.5 L119.5 37.8 L120.0 37.7 L120.5 37.6 L121.0 37.2 L121.5 38.0 L122.0 38.7 L122.5 39.1 L123.0 38.4 L123.5 38.1 L124.0 39.1 L124.5 38.8 L125.0 38.3 L125.5 36.8 L126.0 37.2 L126.5 37.7 L127.0 38.3 L127.5 38.6 L128.0 38.3 L128.5 38.3 L129.0 37.2 L129.5 37.2 L130.0 37.8 L130.5 38.9 L131.0 38.3 L131.5 37.8 L132.0 36.8 L132.5 37.2 L133.0 37.8 L133.5 36.9 L134.0 36.3 L134.5 37.1 L135.0 37.1 L135.5 37.5 L136.0 37.7 L136.5 38.6 L137.0 37.6 L137.5 37.2 L138.0 38.2 L138.5 38.0 L139.0 37.7 L139.5 35.4 L140.0 35.7 L140.5 35.3 L141.0 36.0 L141.5 36.0 L142.0 35.6 L142.5 35.9 L143.0 37.1 L143.5 37.8 L144.0 37.7 L144.5 37.2 L145.0 35.4 L145.5 35.1 L146.0 35.0 L146.5 35.3 L147.0 37.0 L147.5 37.0 L148.0 36.5 L148.5 36.3 L149.0 36.1 L149.5 37.7 L150.0 36.2 L150.5 34.9 L151.0 34.5 L151.5 35.0 L152.0 34.7 L152.5 35.7 L153.0 36.0 L153.5 36.0 L154.0 36.1 L154.5 35.3 L155.0 35.0 L155.5 34.9 L156.0 35.5 L156.5 35.8 L157.0 34.5 L157.5 34.4 L158.0 34.9 L158.5 35.8 L159.0 35.8 L159.5 36.8 L160.0 35.9 L160.5 34.7 L161.0 35.4 L161.5 34.6 L162.0 34.9 L162.5 35.7 L163.0 35.9 L163.5 35.7 L164.0 36.2 L164.5 35.2 L165.0 33.8 L165.5 34.2 L166.0 34.6 L166.5 36.0 L167.0 36.3 L167.5 35.6 L168.0 35.1 L168.5 35.1 L169.0 36.2 L169.5 36.9 L170.0 37.2 L170.5 36.4 L171.0 35.9 L171.5 36.3 L172.0 35.8 L172.5 35.0 L173.0 36.3 L173.5 36.0 L174.0 36.9 L174.5 36.8 L175.0 37.2 L175.5 36.9 L176.0 37.1 L176.5 36.1 L177.0 36.0 L177.5 36.4 L178.0 36.2 L178.5 36.2 L179.0 35.4 L179.5 34.2 L180.0 35.3 L180.5 35.0 L181.0 36.6 L181.5 37.6 L182.0 37.7 L182.5 36.4 L183.0 35.9 L183.5 35.4 L184.0 36.2 L184.5 36.7 L185.0 37.0 L185.5 36.9 L186.0 36.8 L186.5 35.7 L187.0 34.9 L187.5 34.5 L188.0 36.0 L188.5 35.8 L189.0 35.9 L189.5 36.0 L190.0 34.9 L190.5 34.7 L191.0 34.1 L191.5 35.0 L192.0 35.1 L192.5 36.4 L193.0 37.0 L193.5 36.7 L194.0 36.2 L194.5 35.5 L195.0 36.3 L195.5 35.6 L196.0 35.7 L196.5 35.0 L197.0 35.8 L197.5 34.6 L198.0 34.5 L198.5 34.9 L199.0 34.6 L199.5 34.3 L200.0 33.3 L200.5 33.1 L201.0 34.5 L201.5 34.2 L202.0 33.4 L202.5 32.1 L203.0 33.4 L203.5 34.8 L204.0 34.8 L204.5 34.6 L205.0 35.9 L205.5 38.6 L206.0 39.3 L206.5 39.8 L207.0 40.8 L207.5 40.7 L208.0 40.3 L208.5 40.1 L209.0 40.7 L209.5 40.7 L210.0 41.1 L210.5 41.8 L211.0 41.5 L211.5 41.6 L212.0 40.7 L212.5 40.6 L213.0 41.6 L213.5 42.1 L214.0 41.1 L214.5 41.5 L215.0 41.1 L215.5 41.6 L216.0 42.1 L216.5 42.5 L217.0 42.3 L217.5 41.5 L218.0 41.6 L218.5 41.6 L219.0 42.3 L219.5 41.9 L220.0 41.9 L220.5 41.9 L221.0 42.0 L221.5 42.2 L222.0 42.2 L222.5 42.4 L223.0 43.7 L223.5 43.8 L224.0 43.7 L224.5 43.1 L225.0 43.6 L225.5 43.6 L226.0 44.0 L226.5 44.0 L227.0 43.8 L227.5 44.1 L228.0 44.5 L228.5 44.2 L229.0 44.3 L229.5 43.4 L230.0 43.6 L230.5 44.1 L231.0 44.8 L231.5 44.2 L232.0 44.3 L232.5 44.3 L233.0 44.5 L233.5 44.6 L234.0 44.6 L234.5 44.9 L235.0 44.4 L235.5 44.6 L236.0 44.5 L236.5 44.8 L237.0 44.9 L237.5 45.2 L238.0 45.0 L238.5 45.4 L239.0 45.4 L239.5 45.8 L240.0 45.8 L240.5 45.8 L241.0 46.1 L241.5 45.6 L242.0 45.4 L242.5 45.5 L243.0 46.0 L243.5 46.0 L244.0 46.2 L244.5 46.3 L245.0 45.9 L245.5 46.2 L246.0 46.5 L246.5 46.7 L247.0 46.6 L247.5 46.7 L248.0 46.5 L248.5 46.8 L249.0 46.8 L249.5 46.6 L250.0 46.9 L250.5 47.0 L251.0 47.3 L251.5 47.0 L252.0 46.8 L252.5 47.3 L253.0 47.6 L253.5 47.5 L254.0 47.7 L254.5 47.5 L255.0 47.6 L255.5 47.6 L256.0 47.6 L256.5 47.7 L257.0 47.8 L257.5 48.1 L258.0 48.2 L258.5 48.1 L259.0 48.1 L259.5 48.0 L260.0 48.1 L260.5 48.4 L261.0 48.3 L261.5 48.3 L262.0 48.4 L262.5 48.5 L263.0 48.5 L263.5 48.6 L264.0 48.8 L264.5 48.8 L265.0 48.7 L265.5 48.9 L266.0 48.9 L266.5 48.9 L267.0 49.0 L267.5 49.0 L268.0 49.1 L268.5 49.3 L269.0 49.2 L269.5 49.2 L270.0 49.2 L270.5 49.3 L271.0 49.3 L271.5 49.3 L272.0 49.4 L272.5 49.3 L273.0 49.4 L273.5 49.4 L274.0 49.4 L274.5 49.4 L275.0 49.5 L275.5 49.4 L276.0 49.4 L276.5 49.5 L277.0 49.6 L277.5 49.6 L278.0 49.6 L278.5 49.6 L279.0 49.5 L279.5 49.5 L280.0 49.6 L280.5 49.6 L281.0 49.7 L281.3 49.8 L281.3 50.9 L281.0 51.0 L280.5 51.0 L280.0 51.0 L279.5 51.0 L279.0 51.0 L278.5 51.0 L278.0 51.1 L277.5 51.0 L277.0 51.1 L276.5 51.0 L276.0 51.1 L275.5 51.1 L275.0 51.1 L274.5 51.2 L274.0 51.2 L273.5 51.2 L273.0 51.3 L272.5 51.2 L272.0 51.2 L271.5 51.2 L271.0 51.3 L270.5 51.4 L270.0 51.3 L269.5 51.3 L269.0 51.3 L268.5 51.5 L268.0 51.5 L267.5 51.5 L267.0 51.5 L266.5 51.5 L266.0 51.6 L265.5 51.7 L265.0 51.8 L264.5 51.8 L264.0 51.8 L263.5 51.9 L263.0 52.0 L262.5 52.1 L262.0 52.0 L261.5 52.0 L261.0 52.3 L260.5 52.3 L260.0 52.5 L259.5 52.6 L259.0 52.6 L258.5 52.6 L258.0 52.5 L257.5 52.6 L257.0 52.6 L256.5 52.8 L256.0 52.9 L255.5 52.8 L255.0 52.8 L254.5 53.0 L254.0 53.1 L253.5 53.2 L253.0 53.5 L252.5 53.5 L252.0 53.6 L251.5 53.5 L251.0 53.8 L250.5 53.7 L250.0 53.6 L249.5 53.6 L249.0 53.9 L248.5 54.1 L248.0 54.4 L247.5 54.3 L247.0 54.5 L246.5 54.3 L246.0 54.4 L245.5 54.3 L245.0 54.3 L244.5 54.0 L244.0 54.1 L243.5 54.3 L243.0 54.6 L242.5 54.9 L242.0 54.8 L241.5 55.2 L241.0 55.3 L240.5 55.2 L240.0 55.3 L239.5 55.4 L239.0 55.1 L238.5 55.1 L238.0 55.6 L237.5 55.8 L237.0 55.7 L236.5 55.3 L236.0 55.4 L235.5 55.1 L235.0 55.6 L234.5 55.5 L234.0 55.6 L233.5 55.8 L233.0 56.1 L232.5 56.2 L232.0 56.1 L231.5 56.1 L231.0 55.9 L230.5 56.4 L230.0 56.9 L229.5 56.8 L229.0 56.6 L228.5 56.7 L228.0 56.4 L227.5 56.7 L227.0 56.6 L226.5 56.2 L226.0 56.8 L225.5 57.4 L225.0 57.1 L224.5 57.2 L224.0 56.8 L223.5 57.1 L223.0 57.4 L222.5 57.1 L222.0 57.6 L221.5 57.1 L221.0 57.0 L220.5 57.2 L220.0 57.6 L219.5 57.8 L219.0 58.3 L218.5 58.5 L218.0 58.0 L217.5 58.3 L217.0 58.9 L216.5 58.8 L216.0 58.9 L215.5 58.9 L215.0 58.7 L214.5 58.2 L214.0 58.7 L213.5 58.6 L213.0 58.8 L212.5 59.0 L212.0 59.1 L211.5 59.5 L211.0 60.0 L210.5 59.8 L210.0 60.0 L209.5 60.5 L209.0 60.2 L208.5 60.2 L208.0 61.5 L207.5 61.2 L207.0 61.1 L206.5 61.2 L206.0 62.7 L205.5 63.1 L205.0 64.9 L204.5 65.8 L204.0 66.3 L203.5 68.7 L203.0 68.8 L202.5 70.6 L202.0 68.3 L201.5 67.4 L201.0 67.5 L200.5 67.4 L200.0 67.2 L199.5 65.9 L199.0 66.0 L198.5 65.4 L198.0 65.9 L197.5 65.7 L197.0 65.5 L196.5 65.5 L196.0 65.6 L195.5 66.2 L195.0 65.1 L194.5 64.3 L194.0 64.4 L193.5 63.7 L193.0 64.4 L192.5 65.7 L192.0 65.4 L191.5 66.8 L191.0 65.9 L190.5 64.6 L190.0 63.8 L189.5 64.0 L189.0 64.3 L188.5 64.4 L188.0 64.0 L187.5 64.5 L187.0 65.2 L186.5 65.8 L186.0 65.1 L185.5 64.8 L185.0 64.0 L184.5 63.5 L184.0 65.3 L183.5 64.4 L183.0 63.8 L182.5 63.2 L182.0 64.0 L181.5 64.5 L181.0 65.2 L180.5 64.6 L180.0 65.2 L179.5 64.0 L179.0 64.2 L178.5 64.8 L178.0 65.4 L177.5 64.2 L177.0 64.8 L176.5 63.9 L176.0 62.8 L175.5 64.3 L175.0 66.1 L174.5 65.8 L174.0 65.0 L173.5 64.9 L173.0 64.0 L172.5 64.4 L172.0 63.0 L171.5 63.1 L171.0 64.3 L170.5 64.1 L170.0 64.0 L169.5 63.9 L169.0 64.6 L168.5 66.0 L168.0 65.5 L167.5 65.7 L167.0 65.2 L166.5 66.5 L166.0 65.4 L165.5 65.4 L165.0 64.4 L164.5 64.6 L164.0 65.6 L163.5 65.3 L163.0 64.7 L162.5 64.6 L162.0 64.1 L161.5 63.2 L161.0 64.2 L160.5 64.7 L160.0 64.7 L159.5 66.0 L159.0 66.6 L158.5 66.3 L158.0 65.5 L157.5 65.0 L157.0 64.7 L156.5 64.0 L156.0 64.5 L155.5 65.2 L155.0 65.2 L154.5 65.6 L154.0 64.8 L153.5 64.8 L153.0 64.9 L152.5 65.4 L152.0 65.5 L151.5 64.6 L151.0 65.0 L150.5 65.0 L150.0 64.0 L149.5 63.6 L149.0 63.9 L148.5 63.3 L148.0 64.2 L147.5 65.2 L147.0 63.8 L146.5 63.7 L146.0 64.6 L145.5 64.2 L145.0 64.7 L144.5 64.6 L144.0 64.7 L143.5 64.7 L143.0 64.5 L142.5 64.5 L142.0 65.7 L141.5 64.6 L141.0 63.3 L140.5 63.9 L140.0 62.6 L139.5 63.0 L139.0 62.7 L138.5 63.4 L138.0 63.5 L137.5 62.7 L137.0 63.2 L136.5 63.5 L136.0 63.1 L135.5 62.5 L135.0 62.3 L134.5 63.0 L134.0 63.0 L133.5 63.8 L133.0 63.6 L132.5 63.6 L132.0 63.5 L131.5 63.1 L131.0 62.9 L130.5 62.7 L130.0 62.1 L129.5 62.7 L129.0 62.8 L128.5 63.1 L128.0 61.6 L127.5 61.4 L127.0 61.6 L126.5 62.2 L126.0 62.0 L125.5 62.6 L125.0 62.5 L124.5 63.0 L124.0 62.7 L123.5 62.7 L123.0 62.4 L122.5 62.8 L122.0 62.6 L121.5 63.2 L121.0 62.9 L120.5 62.1 L120.0 60.6 L119.5 61.7 L119.0 62.3 L118.5 61.9 L118.0 62.1 L117.5 61.9 L117.0 62.3 L116.5 61.8 L116.0 62.3 L115.5 61.3 L115.0 61.5 L114.5 61.7 L114.0 62.1 L113.5 62.7 L113.0 61.8 L112.5 61.3 L112.0 61.4 L111.5 62.0 L111.0 62.4 L110.5 62.2 L110.0 61.8 L109.5 61.6 L109.0 61.2 L108.5 61.4 L108.0 61.4 L107.5 61.9 L107.0 62.9 L106.5 62.6 L106.0 61.4 L105.5 61.5 L105.0 62.2 L104.5 62.8 L104.0 62.2 L103.5 61.3 L103.0 61.2 L102.5 62.2 L102.0 62.6 L101.5 61.8 L101.0 62.2 L100.5 62.9 L100.0 62.9 L99.5 62.2 L99.0 61.2 L98.5 61.8 L98.0 61.5 L97.5 61.2 L97.0 61.3 L96.5 61.6 L96.0 62.4 L95.5 62.4 L95.0 62.4 L94.5 62.1 L94.0 61.5 L93.5 60.7 L93.0 60.9 L92.5 60.7 L92.0 60.5 L91.5 60.1 L91.0 60.1 L90.5 60.7 L90.0 61.1 L89.5 61.5 L89.0 62.4 L88.5 61.0 L88.0 60.5 L87.5 60.7 L87.0 61.2 L86.5 61.3 L86.0 62.1 L85.5 62.1 L85.0 60.8 L84.5 61.1 L84.0 61.9 L83.5 62.0 L83.0 61.9 L82.5 61.9 L82.0 61.2 L81.5 60.5 L81.0 60.8 L80.5 61.0 L80.0 61.5 L79.5 60.0 L79.0 60.2 L78.5 60.8 L78.0 61.3 L77.5 60.9 L77.0 61.1 L76.5 61.0 L76.0 61.0 L75.5 60.7 L75.0 60.9 L74.5 61.0 L74.0 60.4 L73.5 60.0 L73.0 60.4 L72.5 60.5 L72.0 60.0 L71.5 58.9 L71.0 59.9 L70.5 60.8 L70.0 60.5 L69.5 60.6 L69.0 60.1 L68.5 60.6 L68.0 60.7 L67.5 60.4 L67.0 59.9 L66.5 59.9 L66.0 60.0 L65.5 59.8 L65.0 58.9 L64.5 59.0 L64.0 59.2 L63.5 59.6 L63.0 59.0 L62.5 58.6 L62.0 59.4 L61.5 59.3 L61.0 59.3 L60.5 59.2 L60.0 58.6 L59.5 58.0 L59.0 58.1 L58.5 58.2 L58.0 57.9 L57.5 58.3 L57.0 57.8 L56.5 59.0 L56.0 59.3 L55.5 59.0 L55.0 59.1 L54.5 58.6 L54.0 58.3 L53.5 58.4 L53.0 58.6 L52.5 58.6 L52.0 57.9 L51.5 57.6 L51.0 57.6 L50.5 57.5 L50.0 56.8 L49.5 56.7 L49.0 57.5 L48.5 57.2 L48.0 57.7 L47.5 57.8 L47.0 57.5 L46.5 57.2 L46.0 56.9 L45.5 57.0 L45.0 57.4 L44.5 56.8 L44.0 56.9 L43.5 56.3 L43.0 55.6 L42.5 55.5 L42.0 55.4 L41.5 55.2 L41.0 55.7 L40.5 55.7 L40.0 55.5 L39.5 55.7 L39.0 55.6 L38.5 55.7 L38.0 55.2 L37.5 54.9 L37.0 54.8 L36.5 55.2 L36.0 54.9 L35.5 55.0 L35.0 54.9 L34.5 54.4 L34.0 54.0 L33.5 54.1 L33.0 54.1 L32.5 53.9 L32.0 53.9 L31.5 53.7 L31.0 53.6 L30.5 53.7 L30.0 53.9 L29.5 53.8 L29.0 53.7 L28.5 53.6 L28.0 53.3 L27.5 53.3 L27.0 53.0 L26.5 53.0 L26.0 52.9 L25.5 53.0 L25.0 52.9 L24.5 52.8 L24.0 52.5 L23.5 52.7 L23.0 52.7 L22.5 52.7 L22.0 52.5 L21.5 52.4 L21.0 52.4 L20.5 52.3 L20.0 52.2 L19.5 52.2 L19.0 52.0 L18.5 52.0 L18.0 51.9 L17.5 51.9 L17.0 51.8 L16.5 51.7 L16.0 51.8 L15.5 51.8 L15.0 51.8 L14.5 51.6 L14.0 51.5 L13.5 51.5 L13.0 51.4 L12.5 51.5 L12.0 51.5 L11.5 51.4 L11.0 51.3 L10.5 51.4 L10.0 51.4 L9.5 51.4 L9.0 51.5 L8.5 51.4 L8.0 51.3 L7.5 51.3 L7.0 51.3 L6.5 51.3 L6.0 51.3 L5.5 51.3 L5.0 51.2 L4.5 51.1 L4.0 51.1 L3.5 51.2 L3.0 51.1 L2.5 51.2 L2.0 51.2 L1.5 51.2 L1.0 51.2 L0.5 51.1 L0.0 51.1 Z" fill="#3393f0"/></svg>
<div class="t" style="left:5.50px;top:3.61px;font-size:10.61px;font-weight:bold;color:#fff;;transform:scaleX(1.0169);transform-origin:0 0">Street_90_Am_Drone_32bar</div>
</div>
<div class="abs" style="left:916.50px;top:456.95px;width:281.40px;height:83.8px;border-radius:4px;overflow:hidden;background:#225b93"><svg style="left:0;top:0" width="281.40" height="83.8" viewBox="0 0 281.40 83.8"><rect x="0" y="0" width="281.40" height="16.8" fill="#1c4878"/><path d="M0.0 49.8 L0.5 49.8 L1.0 49.7 L1.5 49.8 L2.0 49.8 L2.5 49.8 L3.0 49.8 L3.5 49.5 L4.0 49.5 L4.5 49.6 L5.0 49.5 L5.5 49.4 L6.0 49.3 L6.5 49.4 L7.0 49.3 L7.5 49.3 L8.0 49.2 L8.5 49.4 L9.0 49.3 L9.5 49.1 L10.0 49.1 L10.5 49.0 L11.0 48.2 L11.5 48.8 L12.0 48.6 L12.5 48.7 L13.0 48.8 L13.5 48.6 L14.0 48.1 L14.5 48.4 L15.0 48.5 L15.5 48.5 L16.0 48.6 L16.5 48.4 L17.0 48.2 L17.5 48.0 L18.0 48.1 L18.5 48.0 L19.0 47.9 L19.5 47.9 L20.0 48.2 L20.5 48.4 L21.0 48.3 L21.5 48.1 L22.0 47.9 L22.5 47.3 L23.0 47.9 L23.5 47.6 L24.0 47.4 L24.5 45.9 L25.0 47.6 L25.5 47.4 L26.0 47.2 L26.5 47.3 L27.0 47.3 L27.5 47.3 L28.0 46.6 L28.5 47.4 L29.0 47.2 L29.5 47.1 L30.0 47.5 L30.5 46.9 L31.0 47.5 L31.5 46.9 L32.0 46.3 L32.5 46.6 L33.0 46.6 L33.5 46.4 L34.0 47.0 L34.5 44.9 L35.0 46.2 L35.5 46.2 L36.0 46.4 L36.5 46.8 L37.0 47.1 L37.5 47.0 L38.0 46.0 L38.5 45.1 L39.0 45.7 L39.5 46.0 L40.0 46.1 L40.5 44.6 L41.0 45.5 L41.5 45.9 L42.0 46.0 L42.5 46.3 L43.0 46.8 L43.5 46.5 L44.0 45.6 L44.5 45.9 L45.0 45.5 L45.5 45.3 L46.0 45.6 L46.5 45.7 L47.0 46.2 L47.5 46.4 L48.0 46.0 L48.5 46.1 L49.0 45.6 L49.5 45.3 L50.0 45.5 L50.5 46.5 L51.0 46.2 L51.5 45.3 L52.0 44.4 L52.5 45.2 L53.0 45.2 L53.5 46.4 L54.0 46.0 L54.5 46.0 L55.0 46.0 L55.5 45.8 L56.0 46.2 L56.5 45.9 L57.0 43.7 L57.5 45.9 L58.0 45.6 L58.5 44.3 L59.0 45.0 L59.5 44.8 L60.0 45.2 L60.5 45.4 L61.0 45.6 L61.5 46.5 L62.0 46.3 L62.5 45.5 L63.0 45.8 L63.5 45.1 L64.0 43.8 L64.5 45.1 L65.0 44.7 L65.5 44.8 L66.0 45.0 L66.5 45.8 L67.0 46.1 L67.5 45.7 L68.0 45.1 L68.5 45.1 L69.0 45.5 L69.5 45.2 L70.0 45.7 L70.5 46.3 L71.0 45.8 L71.5 45.9 L72.0 45.6 L72.5 45.2 L73.0 45.3 L73.5 44.8 L74.0 44.2 L74.5 42.6 L75.0 41.0 L75.5 36.5 L76.0 32.1 L76.5 36.5 L77.0 40.3 L77.5 42.6 L78.0 43.9 L78.5 45.2 L79.0 45.4 L79.5 45.6 L80.0 46.0 L80.5 46.1 L81.0 43.2 L81.5 46.4 L82.0 45.1 L82.5 44.5 L83.0 44.9 L83.5 45.0 L84.0 45.4 L84.5 46.2 L85.0 46.1 L85.5 45.5 L86.0 45.2 L86.5 44.9 L87.0 45.3 L87.5 45.3 L88.0 45.2 L88.5 44.6 L89.0 43.2 L89.5 45.4 L90.0 46.2 L90.5 46.0 L91.0 45.9 L91.5 45.6 L92.0 45.8 L92.5 45.9 L93.0 46.0 L93.5 44.9 L94.0 44.9 L94.5 44.6 L95.0 44.9 L95.5 44.6 L96.0 44.1 L96.5 43.5 L97.0 44.0 L97.5 44.3 L98.0 44.8 L98.5 44.1 L99.0 43.5 L99.5 44.4 L100.0 45.3 L100.5 44.7 L101.0 45.0 L101.5 44.7 L102.0 43.4 L102.5 42.9 L103.0 43.8 L103.5 43.3 L104.0 42.9 L104.5 42.7 L105.0 42.8 L105.5 43.3 L106.0 43.6 L106.5 44.2 L107.0 43.9 L107.5 43.1 L108.0 42.3 L108.5 41.8 L109.0 41.3 L109.5 42.1 L110.0 39.3 L110.5 42.8 L111.0 38.7 L111.5 42.5 L112.0 43.1 L112.5 42.6 L113.0 42.8 L113.5 42.6 L114.0 41.9 L114.5 41.3 L115.0 41.0 L115.5 41.9 L116.0 41.6 L116.5 40.4 L117.0 41.2 L117.5 40.6 L118.0 41.8 L118.5 41.8 L119.0 36.3 L119.5 42.1 L120.0 41.9 L120.5 43.6 L121.0 43.7 L121.5 43.7 L122.0 42.7 L122.5 42.8 L123.0 42.2 L123.5 41.9 L124.0 41.8 L124.5 41.1 L125.0 42.8 L125.5 43.3 L126.0 43.1 L126.5 39.7 L127.0 43.1 L127.5 43.9 L128.0 42.6 L128.5 43.1 L129.0 39.4 L129.5 41.7 L130.0 41.8 L130.5 40.0 L131.0 40.8 L131.5 41.6 L132.0 41.9 L132.5 40.7 L133.0 40.1 L133.5 40.8 L134.0 39.9 L134.5 40.8 L135.0 40.5 L135.5 40.1 L136.0 40.8 L136.5 41.2 L137.0 40.3 L137.5 43.5 L138.0 43.0 L138.5 44.0 L139.0 43.9 L139.5 43.0 L140.0 43.3 L140.5 44.8 L141.0 44.3 L141.5 44.9 L142.0 45.4 L142.5 44.9 L143.0 43.0 L143.5 45.2 L144.0 46.0 L144.5 45.4 L145.0 45.4 L145.5 45.2 L146.0 45.5 L146.5 44.3 L147.0 45.6 L147.5 45.6 L148.0 44.5 L148.5 46.0 L149.0 46.4 L149.5 46.0 L150.0 46.1 L150.5 45.8 L151.0 45.4 L151.5 45.9 L152.0 45.9 L152.5 46.6 L153.0 46.6 L153.5 46.2 L154.0 45.3 L154.5 45.6 L155.0 45.9 L155.5 45.7 L156.0 46.1 L156.5 46.5 L157.0 46.7 L157.5 46.1 L158.0 46.6 L158.5 46.6 L159.0 45.9 L159.5 46.0 L160.0 45.9 L160.5 46.8 L161.0 46.6 L161.5 44.6 L162.0 46.3 L162.5 46.9 L163.0 47.1 L163.5 46.5 L164.0 45.8 L164.5 46.8 L165.0 47.1 L165.5 46.0 L166.0 46.8 L166.5 45.5 L167.0 46.3 L167.5 46.5 L168.0 46.5 L168.5 46.7 L169.0 46.8 L169.5 46.1 L170.0 46.8 L170.5 45.7 L171.0 47.0 L171.5 46.8 L172.0 47.0 L172.5 47.1 L173.0 47.2 L173.5 47.0 L174.0 46.9 L174.5 47.0 L175.0 47.3 L175.5 47.6 L176.0 48.0 L176.5 48.0 L177.0 48.8 L177.5 49.0 L178.0 48.9 L178.5 48.9 L179.0 48.8 L179.5 48.9 L180.0 48.9 L180.5 49.0 L181.0 49.0 L181.5 48.9 L182.0 48.9 L182.5 49.0 L183.0 49.0 L183.5 49.0 L184.0 49.0 L184.5 49.2 L185.0 48.8 L185.5 48.7 L186.0 48.9 L186.5 48.9 L187.0 49.0 L187.5 48.9 L188.0 48.2 L188.5 48.9 L189.0 49.0 L189.5 49.0 L190.0 49.2 L190.5 49.3 L191.0 48.9 L191.5 49.1 L192.0 49.0 L192.5 48.8 L193.0 49.0 L193.5 48.4 L194.0 48.8 L194.5 48.5 L195.0 48.2 L195.5 47.7 L196.0 46.1 L196.5 47.4 L197.0 47.2 L197.5 47.0 L198.0 46.6 L198.5 46.6 L199.0 46.8 L199.5 46.2 L200.0 46.9 L200.5 46.8 L201.0 46.9 L201.5 47.0 L202.0 47.2 L202.5 47.5 L203.0 47.3 L203.5 47.2 L204.0 47.4 L204.5 47.3 L205.0 47.4 L205.5 47.1 L206.0 46.2 L206.5 47.1 L207.0 47.3 L207.5 47.1 L208.0 47.1 L208.5 47.5 L209.0 47.3 L209.5 47.6 L210.0 47.7 L210.5 47.4 L211.0 46.6 L211.5 46.7 L212.0 47.3 L212.5 47.4 L213.0 47.5 L213.5 47.7 L214.0 47.4 L214.5 47.6 L215.0 47.8 L215.5 48.0 L216.0 48.4 L216.5 48.6 L217.0 48.8 L217.5 48.5 L218.0 48.7 L218.5 48.6 L219.0 48.4 L219.5 48.8 L220.0 49.0 L220.5 48.8 L221.0 48.8 L221.5 48.6 L222.0 48.6 L222.5 48.6 L223.0 48.6 L223.5 48.4 L224.0 48.7 L224.5 48.7 L225.0 48.1 L225.5 48.7 L226.0 48.7 L226.5 48.6 L227.0 48.8 L227.5 49.0 L228.0 48.9 L228.5 48.9 L229.0 48.9 L229.5 48.7 L230.0 48.7 L230.5 48.7 L231.0 48.7 L231.5 48.8 L232.0 49.0 L232.5 49.1 L233.0 49.2 L233.5 49.1 L234.0 48.9 L234.5 49.1 L235.0 49.4 L235.5 49.7 L236.0 49.8 L236.5 49.8 L237.0 49.8 L237.5 49.8 L238.0 49.8 L238.5 49.8 L239.0 49.8 L239.5 49.8 L240.0 49.8 L240.5 49.8 L241.0 49.8 L241.5 49.8 L242.0 49.8 L242.5 49.8 L243.0 49.8 L243.5 49.8 L244.0 49.8 L244.5 49.8 L245.0 49.8 L245.5 49.8 L246.0 49.8 L246.5 49.8 L247.0 49.8 L247.5 49.8 L248.0 49.8 L248.5 49.8 L249.0 49.8 L249.5 49.8 L250.0 49.8 L250.5 49.8 L251.0 49.8 L251.5 49.8 L252.0 49.8 L252.5 49.8 L253.0 49.8 L253.5 49.8 L254.0 49.8 L254.5 49.8 L255.0 49.8 L255.5 49.8 L256.0 49.8 L256.5 49.8 L257.0 49.8 L257.5 49.8 L258.0 49.8 L258.5 49.8 L259.0 49.8 L259.5 49.8 L260.0 49.8 L260.5 49.8 L261.0 49.8 L261.5 49.8 L262.0 49.8 L262.5 49.8 L263.0 49.8 L263.5 49.8 L264.0 49.8 L264.5 49.8 L265.0 49.8 L265.5 49.8 L266.0 49.8 L266.5 49.8 L267.0 49.8 L267.5 49.8 L268.0 49.8 L268.5 49.8 L269.0 49.8 L269.5 49.8 L270.0 49.8 L270.5 49.8 L271.0 49.8 L271.5 49.8 L272.0 49.8 L272.5 49.8 L273.0 49.8 L273.5 49.8 L274.0 49.8 L274.5 49.8 L275.0 49.8 L275.5 49.8 L276.0 49.8 L276.5 49.8 L277.0 49.8 L277.5 49.8 L278.0 49.8 L278.5 49.8 L279.0 49.8 L279.5 49.8 L280.0 49.8 L280.5 49.8 L281.0 49.8 L281.4 49.8 L281.4 50.8 L281.0 50.8 L280.5 50.8 L280.0 50.8 L279.5 50.8 L279.0 50.8 L278.5 50.8 L278.0 50.8 L277.5 50.8 L277.0 50.8 L276.5 50.8 L276.0 50.8 L275.5 50.8 L275.0 50.8 L274.5 50.8 L274.0 50.8 L273.5 50.8 L273.0 50.8 L272.5 50.8 L272.0 50.8 L271.5 50.8 L271.0 50.8 L270.5 50.8 L270.0 50.8 L269.5 50.8 L269.0 50.8 L268.5 50.8 L268.0 50.8 L267.5 50.8 L267.0 50.8 L266.5 50.8 L266.0 50.8 L265.5 50.8 L265.0 50.8 L264.5 50.8 L264.0 50.8 L263.5 50.8 L263.0 50.8 L262.5 50.8 L262.0 50.8 L261.5 50.8 L261.0 50.8 L260.5 50.8 L260.0 50.8 L259.5 50.8 L259.0 50.8 L258.5 50.8 L258.0 50.8 L257.5 50.8 L257.0 50.8 L256.5 50.8 L256.0 50.8 L255.5 50.8 L255.0 50.8 L254.5 50.8 L254.0 50.8 L253.5 50.8 L253.0 50.8 L252.5 50.8 L252.0 50.8 L251.5 50.8 L251.0 50.8 L250.5 50.8 L250.0 50.8 L249.5 50.8 L249.0 50.8 L248.5 50.8 L248.0 50.8 L247.5 50.8 L247.0 50.8 L246.5 50.8 L246.0 50.8 L245.5 50.8 L245.0 50.8 L244.5 50.8 L244.0 50.8 L243.5 50.8 L243.0 50.8 L242.5 50.8 L242.0 50.8 L241.5 50.8 L241.0 50.8 L240.5 50.8 L240.0 50.8 L239.5 50.8 L239.0 50.8 L238.5 50.8 L238.0 50.8 L237.5 50.8 L237.0 50.8 L236.5 50.8 L236.0 50.8 L235.5 51.0 L235.0 51.5 L234.5 51.1 L234.0 51.2 L233.5 51.4 L233.0 51.6 L232.5 51.6 L232.0 51.5 L231.5 51.7 L231.0 51.7 L230.5 51.6 L230.0 51.7 L229.5 51.7 L229.0 51.8 L228.5 51.8 L228.0 51.7 L227.5 51.6 L227.0 51.8 L226.5 51.9 L226.0 51.7 L225.5 51.8 L225.0 52.0 L224.5 52.0 L224.0 51.9 L223.5 51.9 L223.0 51.7 L222.5 51.8 L222.0 51.8 L221.5 51.8 L221.0 52.0 L220.5 51.9 L220.0 52.0 L219.5 51.8 L219.0 51.7 L218.5 51.8 L218.0 51.9 L217.5 51.9 L217.0 52.1 L216.5 52.2 L216.0 52.2 L215.5 52.3 L215.0 53.2 L214.5 52.7 L214.0 52.8 L213.5 53.0 L213.0 53.4 L212.5 54.4 L212.0 53.9 L211.5 53.7 L211.0 53.6 L210.5 53.6 L210.0 53.4 L209.5 53.8 L209.0 54.0 L208.5 54.0 L208.0 54.1 L207.5 53.7 L207.0 54.0 L206.5 53.8 L206.0 53.3 L205.5 53.2 L205.0 53.5 L204.5 54.3 L204.0 53.7 L203.5 53.9 L203.0 53.6 L202.5 53.1 L202.0 53.6 L201.5 53.8 L201.0 54.0 L200.5 54.0 L200.0 53.8 L199.5 55.7 L199.0 54.1 L198.5 54.7 L198.0 53.7 L197.5 54.0 L197.0 53.9 L196.5 53.4 L196.0 52.9 L195.5 52.6 L195.0 52.0 L194.5 51.8 L194.0 51.7 L193.5 52.0 L193.0 51.7 L192.5 51.9 L192.0 51.5 L191.5 51.5 L191.0 51.4 L190.5 51.6 L190.0 51.6 L189.5 51.5 L189.0 51.6 L188.5 51.4 L188.0 51.5 L187.5 51.5 L187.0 51.7 L186.5 51.6 L186.0 51.7 L185.5 51.6 L185.0 51.8 L184.5 51.7 L184.0 51.5 L183.5 51.5 L183.0 51.5 L182.5 51.5 L182.0 51.5 L181.5 51.5 L181.0 51.5 L180.5 51.6 L180.0 51.7 L179.5 52.4 L179.0 51.7 L178.5 51.5 L178.0 51.5 L177.5 51.7 L177.0 51.9 L176.5 52.2 L176.0 52.3 L175.5 53.6 L175.0 53.2 L174.5 54.6 L174.0 53.5 L173.5 53.5 L173.0 53.6 L172.5 53.5 L172.0 54.0 L171.5 53.4 L171.0 53.2 L170.5 53.4 L170.0 53.4 L169.5 53.7 L169.0 54.0 L168.5 53.8 L168.0 53.9 L167.5 53.5 L167.0 53.6 L166.5 53.8 L166.0 53.6 L165.5 56.2 L165.0 54.3 L164.5 54.1 L164.0 53.6 L163.5 53.6 L163.0 54.6 L162.5 54.4 L162.0 53.9 L161.5 53.8 L161.0 54.5 L160.5 55.4 L160.0 54.7 L159.5 54.1 L159.0 54.7 L158.5 57.0 L158.0 55.0 L157.5 54.3 L157.0 53.9 L156.5 54.6 L156.0 54.7 L155.5 54.1 L155.0 54.2 L154.5 54.8 L154.0 55.0 L153.5 55.6 L153.0 56.1 L152.5 55.3 L152.0 53.9 L151.5 54.0 L151.0 55.0 L150.5 55.1 L150.0 55.6 L149.5 54.6 L149.0 56.7 L148.5 55.0 L148.0 55.4 L147.5 55.5 L147.0 55.1 L146.5 55.2 L146.0 54.9 L145.5 57.0 L145.0 55.4 L144.5 55.9 L144.0 56.3 L143.5 55.9 L143.0 55.9 L142.5 55.5 L142.0 56.5 L141.5 56.3 L141.0 56.6 L140.5 56.4 L140.0 57.0 L139.5 58.1 L139.0 57.7 L138.5 57.4 L138.0 57.8 L137.5 57.2 L137.0 57.7 L136.5 58.2 L136.0 58.8 L135.5 59.8 L135.0 58.9 L134.5 57.3 L134.0 57.1 L133.5 59.6 L133.0 59.8 L132.5 59.8 L132.0 58.5 L131.5 58.9 L131.0 58.6 L130.5 59.1 L130.0 59.8 L129.5 61.7 L129.0 60.2 L128.5 59.8 L128.0 58.7 L127.5 57.5 L127.0 60.3 L126.5 58.7 L126.0 58.9 L125.5 61.7 L125.0 58.8 L124.5 58.0 L124.0 59.4 L123.5 58.2 L123.0 58.1 L122.5 58.0 L122.0 59.0 L121.5 58.7 L121.0 58.6 L120.5 60.0 L120.0 59.2 L119.5 58.1 L119.0 58.0 L118.5 60.0 L118.0 57.9 L117.5 57.6 L117.0 58.8 L116.5 61.7 L116.0 58.1 L115.5 58.2 L115.0 58.2 L114.5 58.5 L114.0 58.8 L113.5 58.9 L113.0 59.3 L112.5 57.7 L112.0 58.7 L111.5 57.9 L111.0 58.2 L110.5 57.7 L110.0 58.1 L109.5 58.0 L109.0 59.7 L108.5 59.3 L108.0 59.3 L107.5 62.0 L107.0 57.0 L106.5 57.2 L106.0 56.9 L105.5 58.7 L105.0 57.2 L104.5 56.6 L104.0 57.3 L103.5 59.9 L103.0 57.3 L102.5 60.2 L102.0 56.7 L101.5 56.4 L101.0 56.1 L100.5 56.4 L100.0 55.5 L99.5 56.4 L99.0 57.4 L98.5 56.4 L98.0 56.1 L97.5 55.5 L97.0 56.0 L96.5 55.7 L96.0 55.5 L95.5 55.8 L95.0 55.8 L94.5 54.7 L94.0 55.0 L93.5 55.0 L93.0 54.6 L92.5 54.2 L92.0 54.5 L91.5 54.0 L91.0 54.5 L90.5 54.2 L90.0 54.5 L89.5 54.5 L89.0 54.7 L88.5 54.8 L88.0 55.4 L87.5 56.0 L87.0 54.4 L86.5 56.4 L86.0 54.7 L85.5 54.7 L85.0 54.6 L84.5 54.3 L84.0 56.1 L83.5 55.1 L83.0 54.6 L82.5 54.8 L82.0 54.8 L81.5 55.8 L81.0 56.8 L80.5 54.8 L80.0 54.7 L79.5 55.0 L79.0 55.2 L78.5 55.3 L78.0 56.2 L77.5 58.1 L77.0 60.6 L76.5 64.2 L76.0 68.0 L75.5 65.0 L75.0 60.4 L74.5 59.4 L74.0 58.0 L73.5 56.5 L73.0 56.0 L72.5 56.3 L72.0 56.1 L71.5 56.1 L71.0 55.7 L70.5 55.1 L70.0 55.5 L69.5 55.2 L69.0 55.0 L68.5 56.0 L68.0 54.6 L67.5 55.0 L67.0 55.4 L66.5 55.3 L66.0 55.0 L65.5 54.5 L65.0 54.3 L64.5 54.5 L64.0 54.1 L63.5 55.0 L63.0 55.1 L62.5 54.9 L62.0 56.4 L61.5 54.9 L61.0 54.1 L60.5 54.5 L60.0 54.1 L59.5 57.0 L59.0 54.1 L58.5 55.7 L58.0 54.8 L57.5 54.0 L57.0 54.4 L56.5 54.9 L56.0 55.7 L55.5 54.5 L55.0 54.6 L54.5 54.4 L54.0 55.3 L53.5 55.1 L53.0 54.6 L52.5 54.8 L52.0 55.4 L51.5 55.1 L51.0 54.8 L50.5 54.3 L50.0 56.2 L49.5 55.0 L49.0 54.5 L48.5 54.1 L48.0 54.1 L47.5 54.3 L47.0 54.9 L46.5 54.9 L46.0 54.4 L45.5 53.9 L45.0 54.0 L44.5 54.8 L44.0 55.1 L43.5 54.9 L43.0 56.6 L42.5 54.3 L42.0 54.3 L41.5 53.9 L41.0 54.3 L40.5 54.5 L40.0 54.5 L39.5 55.5 L39.0 54.4 L38.5 53.7 L38.0 53.9 L37.5 54.3 L37.0 54.3 L36.5 54.8 L36.0 54.1 L35.5 54.0 L35.0 53.8 L34.5 53.6 L34.0 53.5 L33.5 53.8 L33.0 53.9 L32.5 53.7 L32.0 53.9 L31.5 53.7 L31.0 53.7 L30.5 53.6 L30.0 53.8 L29.5 53.8 L29.0 53.7 L28.5 53.4 L28.0 53.6 L27.5 53.1 L27.0 53.4 L26.5 53.4 L26.0 53.3 L25.5 53.1 L25.0 52.8 L24.5 52.9 L24.0 53.2 L23.5 53.0 L23.0 52.9 L22.5 52.8 L22.0 53.4 L21.5 52.7 L21.0 52.6 L20.5 52.3 L20.0 52.3 L19.5 52.4 L19.0 52.4 L18.5 52.4 L18.0 52.4 L17.5 53.0 L17.0 52.4 L16.5 52.4 L16.0 52.3 L15.5 52.5 L15.0 52.2 L14.5 51.8 L14.0 51.8 L13.5 51.8 L13.0 51.8 L12.5 51.6 L12.0 51.7 L11.5 51.4 L11.0 51.4 L10.5 51.6 L10.0 51.7 L9.5 51.5 L9.0 51.4 L8.5 51.4 L8.0 51.4 L7.5 51.4 L7.0 51.4 L6.5 51.4 L6.0 51.3 L5.5 51.2 L5.0 51.1 L4.5 50.9 L4.0 50.9 L3.5 50.9 L3.0 50.9 L2.5 50.8 L2.0 50.8 L1.5 50.8 L1.0 50.8 L0.5 50.8 L0.0 50.8 Z" fill="#3393f0"/><path d="M0 16.8 L56 16.8 L0 83.8 Z" fill="#000" fill-opacity="0.14"/></svg>
<div class="t" style="left:5.50px;top:3.61px;font-size:10.61px;font-weight:bold;color:#fff;;transform:scaleX(0.9909);transform-origin:0 0">ATS_140_Eb_Mystery Journey_Ambient Pad_3</div>
</div>
<div class="abs" style="left:1263.80px;top:456.95px;width:281.40px;height:83.8px;border-radius:4px;overflow:hidden;background:#225b93"><svg style="left:0;top:0" width="281.40" height="83.8" viewBox="0 0 281.40 83.8"><rect x="0" y="0" width="281.40" height="16.8" fill="#1c4878"/><path d="M0.0 49.8 L0.5 49.8 L1.0 49.8 L1.5 49.8 L2.0 49.7 L2.5 49.7 L3.0 49.7 L3.5 49.7 L4.0 49.7 L4.5 49.6 L5.0 49.3 L5.5 49.6 L6.0 49.6 L6.5 49.4 L7.0 49.4 L7.5 49.5 L8.0 49.3 L8.5 49.4 L9.0 49.2 L9.5 49.1 L10.0 49.0 L10.5 48.8 L11.0 48.7 L11.5 48.5 L12.0 48.7 L12.5 48.1 L13.0 48.7 L13.5 48.3 L14.0 48.8 L14.5 48.5 L15.0 48.5 L15.5 48.5 L16.0 48.6 L16.5 48.6 L17.0 48.3 L17.5 48.6 L18.0 47.7 L18.5 47.8 L19.0 47.8 L19.5 47.8 L20.0 47.5 L20.5 48.1 L21.0 48.1 L21.5 48.3 L22.0 48.1 L22.5 48.2 L23.0 48.0 L23.5 47.7 L24.0 47.1 L24.5 47.3 L25.0 48.0 L25.5 48.0 L26.0 47.4 L26.5 47.2 L27.0 46.8 L27.5 46.9 L28.0 47.0 L28.5 47.5 L29.0 47.4 L29.5 47.5 L30.0 47.1 L30.5 47.3 L31.0 46.8 L31.5 45.6 L32.0 46.3 L32.5 46.5 L33.0 46.8 L33.5 46.9 L34.0 47.1 L34.5 46.9 L35.0 47.2 L35.5 47.1 L36.0 47.2 L36.5 46.7 L37.0 46.3 L37.5 46.4 L38.0 46.1 L38.5 45.7 L39.0 45.5 L39.5 44.7 L40.0 44.5 L40.5 46.6 L41.0 46.8 L41.5 43.9 L42.0 45.6 L42.5 46.0 L43.0 46.0 L43.5 45.9 L44.0 46.1 L44.5 45.9 L45.0 46.1 L45.5 45.9 L46.0 45.6 L46.5 45.5 L47.0 45.5 L47.5 45.9 L48.0 45.8 L48.5 46.0 L49.0 45.7 L49.5 45.6 L50.0 46.2 L50.5 43.7 L51.0 46.4 L51.5 45.7 L52.0 46.1 L52.5 45.7 L53.0 45.5 L53.5 45.3 L54.0 45.5 L54.5 46.1 L55.0 46.0 L55.5 46.0 L56.0 45.4 L56.5 45.0 L57.0 45.2 L57.5 45.8 L58.0 46.4 L58.5 46.6 L59.0 46.6 L59.5 46.1 L60.0 46.4 L60.5 45.9 L61.0 46.2 L61.5 46.0 L62.0 46.0 L62.5 45.6 L63.0 43.5 L63.5 45.3 L64.0 45.1 L64.5 45.5 L65.0 45.7 L65.5 44.7 L66.0 44.7 L66.5 45.0 L67.0 45.7 L67.5 45.8 L68.0 45.7 L68.5 46.4 L69.0 46.2 L69.5 46.0 L70.0 45.8 L70.5 45.4 L71.0 45.3 L71.5 44.6 L72.0 44.9 L72.5 44.3 L73.0 45.1 L73.5 45.5 L74.0 44.3 L74.5 42.1 L75.0 39.5 L75.5 38.8 L76.0 36.4 L76.5 37.4 L77.0 39.0 L77.5 42.0 L78.0 45.0 L78.5 46.1 L79.0 43.7 L79.5 45.5 L80.0 45.5 L80.5 45.2 L81.0 45.0 L81.5 44.6 L82.0 45.1 L82.5 45.0 L83.0 45.6 L83.5 46.1 L84.0 43.2 L84.5 45.7 L85.0 45.5 L85.5 45.9 L86.0 46.2 L86.5 46.3 L87.0 46.5 L87.5 46.4 L88.0 46.0 L88.5 46.2 L89.0 45.5 L89.5 45.6 L90.0 45.6 L90.5 45.7 L91.0 45.5 L91.5 46.1 L92.0 45.4 L92.5 45.8 L93.0 45.8 L93.5 45.4 L94.0 45.2 L94.5 45.8 L95.0 44.9 L95.5 43.9 L96.0 43.9 L96.5 45.2 L97.0 42.9 L97.5 45.3 L98.0 45.6 L98.5 43.1 L99.0 43.9 L99.5 43.8 L100.0 43.2 L100.5 43.8 L101.0 43.9 L101.5 43.8 L102.0 44.1 L102.5 43.5 L103.0 44.1 L103.5 43.7 L104.0 43.6 L104.5 44.3 L105.0 40.9 L105.5 43.5 L106.0 43.4 L106.5 43.2 L107.0 43.2 L107.5 43.1 L108.0 42.6 L108.5 41.8 L109.0 41.9 L109.5 43.4 L110.0 43.3 L110.5 43.2 L111.0 42.7 L111.5 42.0 L112.0 38.9 L112.5 40.7 L113.0 41.9 L113.5 41.5 L114.0 42.5 L114.5 43.1 L115.0 42.5 L115.5 42.9 L116.0 41.7 L116.5 40.3 L117.0 41.0 L117.5 41.3 L118.0 41.3 L118.5 43.3 L119.0 43.5 L119.5 40.8 L120.0 40.9 L120.5 40.8 L121.0 41.6 L121.5 42.7 L122.0 43.4 L122.5 43.1 L123.0 42.0 L123.5 42.3 L124.0 40.0 L124.5 41.1 L125.0 42.3 L125.5 40.4 L126.0 38.2 L126.5 41.5 L127.0 42.3 L127.5 41.9 L128.0 41.9 L128.5 43.0 L129.0 43.2 L129.5 43.0 L130.0 42.3 L130.5 41.9 L131.0 42.0 L131.5 42.1 L132.0 43.4 L132.5 41.9 L133.0 40.2 L133.5 40.5 L134.0 41.8 L134.5 42.5 L135.0 42.1 L135.5 42.1 L136.0 41.2 L136.5 42.0 L137.0 38.9 L137.5 42.7 L138.0 43.0 L138.5 43.0 L139.0 43.4 L139.5 44.0 L140.0 44.3 L140.5 44.0 L141.0 43.5 L141.5 44.0 L142.0 43.3 L142.5 44.6 L143.0 45.3 L143.5 45.4 L144.0 44.2 L144.5 44.3 L145.0 44.4 L145.5 44.6 L146.0 44.9 L146.5 44.8 L147.0 44.8 L147.5 42.9 L148.0 45.7 L148.5 45.7 L149.0 45.3 L149.5 44.8 L150.0 44.6 L150.5 45.1 L151.0 45.3 L151.5 45.6 L152.0 45.6 L152.5 45.4 L153.0 45.8 L153.5 45.9 L154.0 46.0 L154.5 45.7 L155.0 45.1 L155.5 45.3 L156.0 45.3 L156.5 45.6 L157.0 46.5 L157.5 47.0 L158.0 46.2 L158.5 46.4 L159.0 46.0 L159.5 46.2 L160.0 46.2 L160.5 46.5 L161.0 46.8 L161.5 47.0 L162.0 46.9 L162.5 46.6 L163.0 46.8 L163.5 46.8 L164.0 47.1 L164.5 47.0 L165.0 46.8 L165.5 46.5 L166.0 46.9 L166.5 46.7 L167.0 46.5 L167.5 46.5 L168.0 46.8 L168.5 46.7 L169.0 46.7 L169.5 46.8 L170.0 47.3 L170.5 47.2 L171.0 46.8 L171.5 46.2 L172.0 46.8 L172.5 47.0 L173.0 47.1 L173.5 46.8 L174.0 46.0 L174.5 46.7 L175.0 47.4 L175.5 47.8 L176.0 48.4 L176.5 48.4 L177.0 48.8 L177.5 49.1 L178.0 49.1 L178.5 49.1 L179.0 49.1 L179.5 48.9 L180.0 49.0 L180.5 48.9 L181.0 49.2 L181.5 49.2 L182.0 49.1 L182.5 48.8 L183.0 49.1 L183.5 49.1 L184.0 49.3 L184.5 48.6 L185.0 49.1 L185.5 49.1 L186.0 49.1 L186.5 49.1 L187.0 49.1 L187.5 49.0 L188.0 48.9 L188.5 48.8 L189.0 48.5 L189.5 48.9 L190.0 49.2 L190.5 49.2 L191.0 49.1 L191.5 48.6 L192.0 48.9 L192.5 48.8 L193.0 48.8 L193.5 48.9 L194.0 48.9 L194.5 48.6 L195.0 47.2 L195.5 47.3 L196.0 48.1 L196.5 47.5 L197.0 47.2 L197.5 47.4 L198.0 47.5 L198.5 47.3 L199.0 47.1 L199.5 47.3 L200.0 47.4 L200.5 46.8 L201.0 47.0 L201.5 46.9 L202.0 46.8 L202.5 47.0 L203.0 47.1 L203.5 47.5 L204.0 47.1 L204.5 47.7 L205.0 47.1 L205.5 47.1 L206.0 47.3 L206.5 46.9 L207.0 46.5 L207.5 46.8 L208.0 46.3 L208.5 46.8 L209.0 46.8 L209.5 46.9 L210.0 46.7 L210.5 47.0 L211.0 46.6 L211.5 46.9 L212.0 46.9 L212.5 46.9 L213.0 47.2 L213.5 47.7 L214.0 47.9 L214.5 47.9 L215.0 48.1 L215.5 48.1 L216.0 48.3 L216.5 48.5 L217.0 48.8 L217.5 48.7 L218.0 48.8 L218.5 48.5 L219.0 48.5 L219.5 48.5 L220.0 48.6 L220.5 48.6 L221.0 48.6 L221.5 48.8 L222.0 49.0 L222.5 49.0 L223.0 49.0 L223.5 49.0 L224.0 48.9 L224.5 48.8 L225.0 48.8 L225.5 48.8 L226.0 48.8 L226.5 48.9 L227.0 48.8 L227.5 48.7 L228.0 48.8 L228.5 48.6 L229.0 48.6 L229.5 48.7 L230.0 48.9 L230.5 49.1 L231.0 49.0 L231.5 49.0 L232.0 48.7 L232.5 48.3 L233.0 49.2 L233.5 49.1 L234.0 49.3 L234.5 49.4 L235.0 49.5 L235.5 49.7 L236.0 49.8 L236.5 49.8 L237.0 49.8 L237.5 49.8 L238.0 49.8 L238.5 49.8 L239.0 49.8 L239.5 49.8 L240.0 49.8 L240.5 49.8 L241.0 49.8 L241.5 49.8 L242.0 49.8 L242.5 49.8 L243.0 49.8 L243.5 49.8 L244.0 49.8 L244.5 49.8 L245.0 49.8 L245.5 49.8 L246.0 49.8 L246.5 49.8 L247.0 49.8 L247.5 49.8 L248.0 49.8 L248.5 49.8 L249.0 49.8 L249.5 49.8 L250.0 49.8 L250.5 49.8 L251.0 49.8 L251.5 49.8 L252.0 49.8 L252.5 49.8 L253.0 49.8 L253.5 49.8 L254.0 49.8 L254.5 49.8 L255.0 49.8 L255.5 49.8 L256.0 49.8 L256.5 49.8 L257.0 49.8 L257.5 49.8 L258.0 49.8 L258.5 49.8 L259.0 49.8 L259.5 49.8 L260.0 49.8 L260.5 49.8 L261.0 49.8 L261.5 49.8 L262.0 49.8 L262.5 49.8 L263.0 49.8 L263.5 49.8 L264.0 49.8 L264.5 49.8 L265.0 49.8 L265.5 49.8 L266.0 49.8 L266.5 49.8 L267.0 49.8 L267.5 49.8 L268.0 49.8 L268.5 49.8 L269.0 49.8 L269.5 49.8 L270.0 49.8 L270.5 49.8 L271.0 49.8 L271.5 49.8 L272.0 49.8 L272.5 49.8 L273.0 49.8 L273.5 49.8 L274.0 49.8 L274.5 49.8 L275.0 49.8 L275.5 49.8 L276.0 49.8 L276.5 49.8 L277.0 49.8 L277.5 49.8 L278.0 49.8 L278.5 49.8 L279.0 49.8 L279.5 49.8 L280.0 49.8 L280.5 49.8 L281.0 49.8 L281.4 49.8 L281.4 50.8 L281.0 50.8 L280.5 50.8 L280.0 50.8 L279.5 50.8 L279.0 50.8 L278.5 50.8 L278.0 50.8 L277.5 50.8 L277.0 50.9 L276.5 50.8 L276.0 50.8 L275.5 50.8 L275.0 50.8 L274.5 50.8 L274.0 50.8 L273.5 50.8 L273.0 50.8 L272.5 50.8 L272.0 50.8 L271.5 50.8 L271.0 50.8 L270.5 50.8 L270.0 50.8 L269.5 50.8 L269.0 50.8 L268.5 50.8 L268.0 50.8 L267.5 50.8 L267.0 50.8 L266.5 50.8 L266.0 50.8 L265.5 50.8 L265.0 50.8 L264.5 50.8 L264.0 50.8 L263.5 50.8 L263.0 50.8 L262.5 50.8 L262.0 50.8 L261.5 50.8 L261.0 50.8 L260.5 50.8 L260.0 50.8 L259.5 50.8 L259.0 50.8 L258.5 50.8 L258.0 50.8 L257.5 50.8 L257.0 50.8 L256.5 50.8 L256.0 50.8 L255.5 50.8 L255.0 50.8 L254.5 50.8 L254.0 50.8 L253.5 50.8 L253.0 50.8 L252.5 50.8 L252.0 50.8 L251.5 50.8 L251.0 50.8 L250.5 50.8 L250.0 50.8 L249.5 50.8 L249.0 50.8 L248.5 50.8 L248.0 50.8 L247.5 50.8 L247.0 50.8 L246.5 50.8 L246.0 50.8 L245.5 50.8 L245.0 50.8 L244.5 50.8 L244.0 50.8 L243.5 50.8 L243.0 50.8 L242.5 50.8 L242.0 50.8 L241.5 50.8 L241.0 50.8 L240.5 50.8 L240.0 50.8 L239.5 50.8 L239.0 50.8 L238.5 50.8 L238.0 50.8 L237.5 50.8 L237.0 50.8 L236.5 50.8 L236.0 50.8 L235.5 50.8 L235.0 51.0 L234.5 51.1 L234.0 51.3 L233.5 51.7 L233.0 51.7 L232.5 51.8 L232.0 51.8 L231.5 51.5 L231.0 51.5 L230.5 51.6 L230.0 51.7 L229.5 51.8 L229.0 51.8 L228.5 52.0 L228.0 52.1 L227.5 52.2 L227.0 52.0 L226.5 52.2 L226.0 51.9 L225.5 52.0 L225.0 52.0 L224.5 51.7 L224.0 51.8 L223.5 52.0 L223.0 52.0 L222.5 52.7 L222.0 52.1 L221.5 52.1 L221.0 52.2 L220.5 52.1 L220.0 52.1 L219.5 52.4 L219.0 51.8 L218.5 51.9 L218.0 52.2 L217.5 52.2 L217.0 52.1 L216.5 52.2 L216.0 52.3 L215.5 52.4 L215.0 52.7 L214.5 52.7 L214.0 53.1 L213.5 53.1 L213.0 53.4 L212.5 53.7 L212.0 53.6 L211.5 53.9 L211.0 53.8 L210.5 53.7 L210.0 53.4 L209.5 52.8 L209.0 53.0 L208.5 53.0 L208.0 53.2 L207.5 53.3 L207.0 53.2 L206.5 53.3 L206.0 53.5 L205.5 53.4 L205.0 53.6 L204.5 53.4 L204.0 53.6 L203.5 53.0 L203.0 53.8 L202.5 53.8 L202.0 53.8 L201.5 53.2 L201.0 53.6 L200.5 53.6 L200.0 53.9 L199.5 53.5 L199.0 53.3 L198.5 53.6 L198.0 53.8 L197.5 53.5 L197.0 53.4 L196.5 53.3 L196.0 53.0 L195.5 52.7 L195.0 52.3 L194.5 52.0 L194.0 51.6 L193.5 51.5 L193.0 51.5 L192.5 51.4 L192.0 51.5 L191.5 52.0 L191.0 51.5 L190.5 51.6 L190.0 51.8 L189.5 51.9 L189.0 51.7 L188.5 51.8 L188.0 51.7 L187.5 51.7 L187.0 51.5 L186.5 51.5 L186.0 51.5 L185.5 51.6 L185.0 51.9 L184.5 51.7 L184.0 51.8 L183.5 51.9 L183.0 51.7 L182.5 51.8 L182.0 51.7 L181.5 51.5 L181.0 51.5 L180.5 51.6 L180.0 51.4 L179.5 51.4 L179.0 51.4 L178.5 51.7 L178.0 51.8 L177.5 51.5 L177.0 51.6 L176.5 52.1 L176.0 52.5 L175.5 53.0 L175.0 52.7 L174.5 53.1 L174.0 53.7 L173.5 53.7 L173.0 53.8 L172.5 53.9 L172.0 53.7 L171.5 53.1 L171.0 53.5 L170.5 53.5 L170.0 53.4 L169.5 53.2 L169.0 53.4 L168.5 53.4 L168.0 53.4 L167.5 53.3 L167.0 53.3 L166.5 53.7 L166.0 53.4 L165.5 54.1 L165.0 54.1 L164.5 54.1 L164.0 54.2 L163.5 53.6 L163.0 53.7 L162.5 53.7 L162.0 54.5 L161.5 55.2 L161.0 54.6 L160.5 54.4 L160.0 54.5 L159.5 54.0 L159.0 54.4 L158.5 55.2 L158.0 54.8 L157.5 54.5 L157.0 54.4 L156.5 54.5 L156.0 54.8 L155.5 54.0 L155.0 54.5 L154.5 55.6 L154.0 56.2 L153.5 55.1 L153.0 54.7 L152.5 55.1 L152.0 55.2 L151.5 55.4 L151.0 55.3 L150.5 55.3 L150.0 56.2 L149.5 55.8 L149.0 55.4 L148.5 55.8 L148.0 55.6 L147.5 54.6 L147.0 54.7 L146.5 55.2 L146.0 56.2 L145.5 55.2 L145.0 55.4 L144.5 55.6 L144.0 54.8 L143.5 55.3 L143.0 55.7 L142.5 56.1 L142.0 56.0 L141.5 55.4 L141.0 55.9 L140.5 56.5 L140.0 57.8 L139.5 58.3 L139.0 57.6 L138.5 57.4 L138.0 58.7 L137.5 58.5 L137.0 58.4 L136.5 57.7 L136.0 58.9 L135.5 58.9 L135.0 60.0 L134.5 60.0 L134.0 59.6 L133.5 58.5 L133.0 59.9 L132.5 59.4 L132.0 64.1 L131.5 62.0 L131.0 58.9 L130.5 59.6 L130.0 62.0 L129.5 61.6 L129.0 58.7 L128.5 57.8 L128.0 58.0 L127.5 59.6 L127.0 57.2 L126.5 57.0 L126.0 57.6 L125.5 57.7 L125.0 59.2 L124.5 58.3 L124.0 60.0 L123.5 58.3 L123.0 58.6 L122.5 57.2 L122.0 57.4 L121.5 57.1 L121.0 57.2 L120.5 60.0 L120.0 59.8 L119.5 57.9 L119.0 61.0 L118.5 59.2 L118.0 59.8 L117.5 59.0 L117.0 59.2 L116.5 58.6 L116.0 58.2 L115.5 59.0 L115.0 58.7 L114.5 58.7 L114.0 56.9 L113.5 57.2 L113.0 58.1 L112.5 59.7 L112.0 58.8 L111.5 58.4 L111.0 59.1 L110.5 56.7 L110.0 56.6 L109.5 57.2 L109.0 57.6 L108.5 58.3 L108.0 60.5 L107.5 58.4 L107.0 57.7 L106.5 57.5 L106.0 58.1 L105.5 57.2 L105.0 58.6 L104.5 57.1 L104.0 56.3 L103.5 55.9 L103.0 56.0 L102.5 56.1 L102.0 55.7 L101.5 57.7 L101.0 60.3 L100.5 56.5 L100.0 55.8 L99.5 56.4 L99.0 57.5 L98.5 57.3 L98.0 56.2 L97.5 56.3 L97.0 56.8 L96.5 58.1 L96.0 55.6 L95.5 55.5 L95.0 54.8 L94.5 57.7 L94.0 54.3 L93.5 54.5 L93.0 54.8 L92.5 54.9 L92.0 54.5 L91.5 54.0 L91.0 53.8 L90.5 54.0 L90.0 54.2 L89.5 54.2 L89.0 54.3 L88.5 54.0 L88.0 54.6 L87.5 54.5 L87.0 55.1 L86.5 55.1 L86.0 55.0 L85.5 55.1 L85.0 55.3 L84.5 55.0 L84.0 55.3 L83.5 55.7 L83.0 55.3 L82.5 55.1 L82.0 55.5 L81.5 55.9 L81.0 55.6 L80.5 54.6 L80.0 54.5 L79.5 55.2 L79.0 55.2 L78.5 56.2 L78.0 57.8 L77.5 61.3 L77.0 61.7 L76.5 65.3 L76.0 68.2 L75.5 65.3 L75.0 62.0 L74.5 62.4 L74.0 60.3 L73.5 56.3 L73.0 57.8 L72.5 54.9 L72.0 55.2 L71.5 55.4 L71.0 55.9 L70.5 55.0 L70.0 57.1 L69.5 58.4 L69.0 56.0 L68.5 54.4 L68.0 54.2 L67.5 54.4 L67.0 54.4 L66.5 56.1 L66.0 54.5 L65.5 55.3 L65.0 54.7 L64.5 54.8 L64.0 55.0 L63.5 55.1 L63.0 57.1 L62.5 55.8 L62.0 54.7 L61.5 54.5 L61.0 54.8 L60.5 54.6 L60.0 54.9 L59.5 55.7 L59.0 57.1 L58.5 55.2 L58.0 54.6 L57.5 54.9 L57.0 54.9 L56.5 55.4 L56.0 55.4 L55.5 55.5 L55.0 54.8 L54.5 54.4 L54.0 55.1 L53.5 54.9 L53.0 55.2 L52.5 55.4 L52.0 54.7 L51.5 54.5 L51.0 55.8 L50.5 55.5 L50.0 54.9 L49.5 55.0 L49.0 54.7 L48.5 54.7 L48.0 55.5 L47.5 54.8 L47.0 54.5 L46.5 54.1 L46.0 54.0 L45.5 53.7 L45.0 55.5 L44.5 54.5 L44.0 54.6 L43.5 54.9 L43.0 55.3 L42.5 54.4 L42.0 54.9 L41.5 54.5 L41.0 54.1 L40.5 54.0 L40.0 54.4 L39.5 54.2 L39.0 53.8 L38.5 54.0 L38.0 54.0 L37.5 54.2 L37.0 54.3 L36.5 54.1 L36.0 53.8 L35.5 54.1 L35.0 55.7 L34.5 53.6 L34.0 53.7 L33.5 53.5 L33.0 53.6 L32.5 53.3 L32.0 53.3 L31.5 53.3 L31.0 53.3 L30.5 53.7 L30.0 53.5 L29.5 53.9 L29.0 53.5 L28.5 53.0 L28.0 53.0 L27.5 52.9 L27.0 52.9 L26.5 52.5 L26.0 53.2 L25.5 53.1 L25.0 53.1 L24.5 53.8 L24.0 52.8 L23.5 52.9 L23.0 52.6 L22.5 52.6 L22.0 52.6 L21.5 52.8 L21.0 52.7 L20.5 52.8 L20.0 53.1 L19.5 52.7 L19.0 52.7 L18.5 52.2 L18.0 52.1 L17.5 52.2 L17.0 52.0 L16.5 51.9 L16.0 52.3 L15.5 52.5 L15.0 52.3 L14.5 51.9 L14.0 51.8 L13.5 52.7 L13.0 52.0 L12.5 51.7 L12.0 51.8 L11.5 51.9 L11.0 52.0 L10.5 51.9 L10.0 52.4 L9.5 51.8 L9.0 51.6 L8.5 51.5 L8.0 51.4 L7.5 51.3 L7.0 51.4 L6.5 51.3 L6.0 51.2 L5.5 51.1 L5.0 51.2 L4.5 51.1 L4.0 51.1 L3.5 50.9 L3.0 50.9 L2.5 50.9 L2.0 50.8 L1.5 50.8 L1.0 50.8 L0.5 50.8 L0.0 50.8 Z" fill="#3393f0"/><path d="M0 16.8 L62 16.8 L0 83.8 Z" fill="#000" fill-opacity="0.14"/><path d="M281.40 16.8 L195.40 16.8 L281.40 83.8 Z" fill="#000" fill-opacity="0.14"/></svg>
<div class="t" style="left:5.50px;top:3.61px;font-size:10.61px;font-weight:bold;color:#fff;;transform:scaleX(0.9909);transform-origin:0 0">ATS_140_Eb_Mystery Journey_Ambient Pad_3</div>
</div>
<div class="abs" style="left:386.60px;top:547.50px;width:281.40px;height:83.8px;border-radius:4px;overflow:hidden;background:#225b93"><svg style="left:0;top:0" width="281.40" height="83.8" viewBox="0 0 281.40 83.8"><rect x="0" y="0" width="281.40" height="16.8" fill="#1c4878"/><path d="M0.0 49.6 L0.5 49.6 L1.0 49.5 L1.5 49.5 L2.0 49.5 L2.5 49.5 L3.0 49.5 L3.5 49.5 L4.0 49.5 L4.5 49.4 L5.0 49.5 L5.5 49.5 L6.0 49.4 L6.5 49.4 L7.0 49.3 L7.5 49.4 L8.0 49.4 L8.5 49.3 L9.0 49.3 L9.5 49.2 L10.0 49.2 L10.5 49.2 L11.0 49.3 L11.5 49.2 L12.0 49.1 L12.5 49.2 L13.0 49.2 L13.5 49.1 L14.0 49.0 L14.5 49.0 L15.0 48.9 L15.5 48.8 L16.0 48.9 L16.5 48.8 L17.0 48.8 L17.5 48.6 L18.0 48.5 L18.5 48.5 L19.0 48.5 L19.5 48.5 L20.0 48.5 L20.5 48.4 L21.0 48.2 L21.5 48.2 L22.0 48.0 L22.5 47.9 L23.0 47.8 L23.5 47.7 L24.0 47.9 L24.5 47.8 L25.0 47.8 L25.5 47.9 L26.0 47.6 L26.5 47.4 L27.0 47.3 L27.5 47.1 L28.0 47.3 L28.5 47.6 L29.0 47.5 L29.5 47.4 L30.0 47.0 L30.5 46.8 L31.0 46.5 L31.5 46.7 L32.0 46.7 L32.5 46.6 L33.0 46.4 L33.5 46.2 L34.0 45.6 L34.5 45.9 L35.0 45.6 L35.5 45.5 L36.0 45.4 L36.5 45.3 L37.0 45.1 L37.5 45.2 L38.0 45.1 L38.5 44.9 L39.0 44.7 L39.5 44.9 L40.0 44.7 L40.5 44.8 L41.0 44.7 L41.5 44.4 L42.0 44.4 L42.5 44.5 L43.0 44.8 L43.5 44.4 L44.0 43.7 L44.5 43.6 L45.0 43.6 L45.5 43.3 L46.0 43.6 L46.5 43.5 L47.0 43.7 L47.5 43.1 L48.0 43.5 L48.5 44.1 L49.0 43.6 L49.5 43.2 L50.0 42.9 L50.5 42.4 L51.0 42.5 L51.5 43.3 L52.0 43.2 L52.5 42.6 L53.0 42.4 L53.5 42.0 L54.0 42.1 L54.5 42.5 L55.0 42.7 L55.5 42.3 L56.0 42.4 L56.5 42.4 L57.0 42.6 L57.5 42.4 L58.0 42.6 L58.5 42.4 L59.0 41.7 L59.5 41.5 L60.0 41.1 L60.5 41.8 L61.0 42.1 L61.5 42.7 L62.0 41.8 L62.5 40.9 L63.0 41.0 L63.5 41.3 L64.0 40.9 L64.5 41.6 L65.0 41.0 L65.5 41.8 L66.0 41.3 L66.5 42.0 L67.0 41.2 L67.5 41.7 L68.0 42.0 L68.5 41.1 L69.0 40.8 L69.5 40.9 L70.0 41.7 L70.5 41.4 L71.0 40.6 L71.5 40.1 L72.0 40.7 L72.5 41.2 L73.0 41.0 L73.5 40.3 L74.0 39.9 L74.5 40.2 L75.0 40.6 L75.5 40.5 L76.0 40.1 L76.5 40.9 L77.0 40.8 L77.5 40.4 L78.0 40.5 L78.5 40.0 L79.0 40.1 L79.5 39.9 L80.0 39.3 L80.5 38.3 L81.0 38.9 L81.5 39.6 L82.0 39.4 L82.5 39.6 L83.0 39.7 L83.5 39.5 L84.0 39.5 L84.5 39.6 L85.0 39.0 L85.5 39.7 L86.0 40.6 L86.5 40.8 L87.0 40.6 L87.5 39.1 L88.0 38.4 L88.5 37.8 L89.0 38.0 L89.5 38.7 L90.0 40.4 L90.5 40.0 L91.0 39.3 L91.5 39.2 L92.0 38.7 L92.5 38.6 L93.0 38.7 L93.5 38.4 L94.0 39.3 L94.5 40.0 L95.0 40.0 L95.5 40.3 L96.0 40.0 L96.5 39.6 L97.0 39.7 L97.5 39.2 L98.0 39.1 L98.5 39.6 L99.0 39.5 L99.5 39.8 L100.0 38.8 L100.5 38.7 L101.0 38.6 L101.5 38.2 L102.0 39.0 L102.5 39.4 L103.0 37.9 L103.5 38.1 L104.0 38.5 L104.5 38.9 L105.0 39.0 L105.5 37.7 L106.0 38.0 L106.5 39.0 L107.0 38.9 L107.5 39.2 L108.0 38.8 L108.5 39.1 L109.0 39.0 L109.5 39.0 L110.0 37.7 L110.5 38.1 L111.0 37.4 L111.5 38.2 L112.0 39.9 L112.5 39.0 L113.0 38.3 L113.5 37.9 L114.0 38.0 L114.5 37.8 L115.0 37.8 L115.5 38.1 L116.0 38.8 L116.5 39.0 L117.0 39.3 L117.5 39.3 L118.0 39.0 L118.5 37.4 L119.0 38.0 L119.5 38.3 L120.0 38.7 L120.5 38.0 L121.0 37.8 L121.5 37.5 L122.0 39.0 L122.5 38.5 L123.0 37.9 L123.5 38.0 L124.0 38.4 L124.5 38.2 L125.0 37.4 L125.5 37.9 L126.0 37.7 L126.5 37.6 L127.0 37.6 L127.5 37.6 L128.0 37.2 L128.5 37.8 L129.0 37.2 L129.5 37.1 L130.0 37.1 L130.5 37.1 L131.0 37.3 L131.5 37.5 L132.0 37.2 L132.5 37.7 L133.0 38.8 L133.5 37.5 L134.0 36.7 L134.5 36.5 L135.0 37.7 L135.5 37.9 L136.0 37.8 L136.5 37.9 L137.0 38.6 L137.5 39.0 L138.0 37.9 L138.5 37.2 L139.0 36.8 L139.5 37.6 L140.0 37.7 L140.5 36.2 L141.0 35.9 L141.5 36.2 L142.0 35.2 L142.5 36.0 L143.0 35.0 L143.5 35.1 L144.0 35.1 L144.5 35.0 L145.0 35.7 L145.5 35.1 L146.0 35.9 L146.5 37.0 L147.0 37.3 L147.5 37.5 L148.0 36.3 L148.5 35.6 L149.0 34.3 L149.5 34.5 L150.0 35.3 L150.5 36.3 L151.0 36.0 L151.5 34.2 L152.0 34.1 L152.5 34.6 L153.0 35.2 L153.5 35.0 L154.0 35.6 L154.5 35.3 L155.0 34.3 L155.5 35.2 L156.0 36.8 L156.5 36.5 L157.0 35.8 L157.5 36.3 L158.0 34.7 L158.5 35.4 L159.0 35.8 L159.5 37.3 L160.0 36.2 L160.5 35.3 L161.0 35.2 L161.5 35.5 L162.0 35.3 L162.5 35.8 L163.0 36.6 L163.5 36.6 L164.0 35.8 L164.5 35.6 L165.0 35.3 L165.5 35.2 L166.0 35.4 L166.5 34.8 L167.0 35.3 L167.5 34.9 L168.0 34.9 L168.5 34.5 L169.0 35.8 L169.5 35.5 L170.0 36.1 L170.5 35.6 L171.0 36.2 L171.5 36.8 L172.0 36.3 L172.5 35.3 L173.0 35.6 L173.5 35.9 L174.0 35.2 L174.5 34.9 L175.0 35.2 L175.5 35.4 L176.0 34.6 L176.5 35.0 L177.0 34.1 L177.5 34.2 L178.0 35.6 L178.5 35.6 L179.0 34.6 L179.5 34.2 L180.0 35.3 L180.5 35.3 L181.0 36.2 L181.5 36.6 L182.0 36.0 L182.5 35.1 L183.0 35.3 L183.5 35.9 L184.0 36.0 L184.5 35.9 L185.0 35.8 L185.5 36.7 L186.0 37.6 L186.5 36.2 L187.0 36.3 L187.5 35.4 L188.0 36.7 L188.5 36.4 L189.0 35.2 L189.5 35.6 L190.0 34.9 L190.5 34.6 L191.0 35.6 L191.5 35.5 L192.0 37.1 L192.5 36.9 L193.0 37.5 L193.5 36.8 L194.0 36.0 L194.5 35.4 L195.0 35.9 L195.5 34.9 L196.0 34.8 L196.5 35.5 L197.0 36.4 L197.5 35.7 L198.0 36.0 L198.5 35.7 L199.0 36.1 L199.5 35.7 L200.0 35.0 L200.5 35.2 L201.0 33.0 L201.5 33.1 L202.0 32.2 L202.5 32.2 L203.0 33.8 L203.5 34.7 L204.0 34.8 L204.5 35.2 L205.0 36.0 L205.5 36.8 L206.0 37.4 L206.5 38.3 L207.0 39.4 L207.5 40.3 L208.0 40.7 L208.5 40.8 L209.0 40.5 L209.5 40.8 L210.0 41.1 L210.5 41.9 L211.0 42.1 L211.5 41.5 L212.0 41.2 L212.5 40.6 L213.0 41.4 L213.5 41.7 L214.0 41.6 L214.5 42.1 L215.0 41.4 L215.5 41.2 L216.0 41.2 L216.5 41.7 L217.0 41.7 L217.5 42.0 L218.0 42.2 L218.5 42.6 L219.0 42.9 L219.5 42.5 L220.0 41.7 L220.5 42.2 L221.0 43.0 L221.5 43.1 L222.0 43.0 L222.5 43.1 L223.0 43.8 L223.5 43.5 L224.0 43.6 L224.5 43.0 L225.0 43.1 L225.5 42.8 L226.0 42.8 L226.5 42.8 L227.0 43.2 L227.5 43.9 L228.0 44.5 L228.5 44.4 L229.0 44.5 L229.5 43.7 L230.0 43.8 L230.5 43.7 L231.0 44.3 L231.5 44.1 L232.0 44.4 L232.5 44.1 L233.0 44.4 L233.5 44.4 L234.0 44.6 L234.5 45.0 L235.0 45.2 L235.5 44.9 L236.0 45.1 L236.5 44.8 L237.0 45.1 L237.5 45.2 L238.0 45.3 L238.5 45.7 L239.0 46.1 L239.5 46.0 L240.0 46.2 L240.5 45.6 L241.0 45.6 L241.5 45.5 L242.0 45.8 L242.5 45.9 L243.0 45.6 L243.5 45.8 L244.0 46.1 L244.5 46.0 L245.0 46.2 L245.5 46.3 L246.0 46.4 L246.5 46.7 L247.0 46.7 L247.5 46.8 L248.0 46.6 L248.5 46.8 L249.0 47.0 L249.5 47.0 L250.0 47.1 L250.5 46.8 L251.0 46.8 L251.5 46.9 L252.0 46.9 L252.5 47.0 L253.0 47.2 L253.5 47.4 L254.0 47.6 L254.5 47.5 L255.0 47.3 L255.5 47.3 L256.0 47.5 L256.5 47.6 L257.0 47.8 L257.5 47.8 L258.0 47.8 L258.5 47.7 L259.0 47.9 L259.5 48.0 L260.0 48.2 L260.5 48.1 L261.0 48.3 L261.5 48.3 L262.0 48.5 L262.5 48.4 L263.0 48.5 L263.5 48.6 L264.0 48.7 L264.5 48.8 L265.0 49.0 L265.5 48.9 L266.0 49.1 L266.5 49.1 L267.0 49.2 L267.5 49.2 L268.0 49.1 L268.5 49.1 L269.0 49.1 L269.5 49.3 L270.0 49.2 L270.5 49.1 L271.0 49.2 L271.5 49.2 L272.0 49.2 L272.5 49.3 L273.0 49.4 L273.5 49.4 L274.0 49.5 L274.5 49.4 L275.0 49.4 L275.5 49.4 L276.0 49.4 L276.5 49.4 L277.0 49.5 L277.5 49.5 L278.0 49.5 L278.5 49.6 L279.0 49.6 L279.5 49.6 L280.0 49.6 L280.5 49.7 L281.0 49.7 L281.4 49.7 L281.4 50.9 L281.0 50.9 L280.5 50.9 L280.0 50.9 L279.5 51.0 L279.0 51.0 L278.5 51.1 L278.0 51.1 L277.5 51.1 L277.0 51.1 L276.5 51.1 L276.0 51.1 L275.5 51.1 L275.0 51.2 L274.5 51.2 L274.0 51.2 L273.5 51.3 L273.0 51.3 L272.5 51.3 L272.0 51.4 L271.5 51.4 L271.0 51.4 L270.5 51.4 L270.0 51.4 L269.5 51.5 L269.0 51.4 L268.5 51.4 L268.0 51.4 L267.5 51.4 L267.0 51.5 L266.5 51.7 L266.0 51.7 L265.5 51.8 L265.0 51.9 L264.5 51.9 L264.0 52.1 L263.5 52.1 L263.0 51.9 L262.5 52.0 L262.0 52.3 L261.5 52.2 L261.0 52.2 L260.5 52.2 L260.0 52.3 L259.5 52.4 L259.0 52.4 L258.5 52.6 L258.0 52.7 L257.5 52.5 L257.0 52.6 L256.5 52.9 L256.0 53.0 L255.5 53.3 L255.0 53.4 L254.5 53.1 L254.0 53.1 L253.5 53.3 L253.0 53.4 L252.5 53.5 L252.0 53.3 L251.5 53.5 L251.0 53.6 L250.5 53.7 L250.0 53.5 L249.5 53.6 L249.0 54.0 L248.5 54.3 L248.0 54.2 L247.5 54.2 L247.0 54.1 L246.5 53.7 L246.0 54.1 L245.5 54.5 L245.0 54.6 L244.5 54.8 L244.0 54.8 L243.5 54.8 L243.0 55.1 L242.5 55.3 L242.0 55.3 L241.5 54.8 L241.0 54.6 L240.5 54.8 L240.0 55.3 L239.5 55.2 L239.0 55.4 L238.5 55.2 L238.0 55.0 L237.5 55.0 L237.0 55.4 L236.5 55.5 L236.0 55.7 L235.5 55.6 L235.0 55.4 L234.5 55.4 L234.0 55.8 L233.5 56.4 L233.0 56.3 L232.5 56.3 L232.0 56.3 L231.5 56.5 L231.0 56.5 L230.5 56.3 L230.0 56.1 L229.5 56.2 L229.0 56.9 L228.5 56.9 L228.0 56.9 L227.5 57.3 L227.0 57.6 L226.5 57.4 L226.0 57.1 L225.5 56.6 L225.0 57.4 L224.5 58.0 L224.0 57.8 L223.5 58.1 L223.0 58.1 L222.5 57.4 L222.0 57.9 L221.5 57.9 L221.0 58.4 L220.5 58.1 L220.0 57.7 L219.5 57.7 L219.0 58.9 L218.5 58.2 L218.0 58.2 L217.5 58.4 L217.0 58.9 L216.5 59.3 L216.0 59.3 L215.5 58.5 L215.0 58.9 L214.5 59.0 L214.0 58.6 L213.5 58.7 L213.0 58.8 L212.5 59.4 L212.0 59.2 L211.5 59.0 L211.0 59.2 L210.5 59.1 L210.0 59.2 L209.5 59.3 L209.0 58.7 L208.5 59.5 L208.0 60.3 L207.5 60.4 L207.0 59.9 L206.5 60.7 L206.0 61.2 L205.5 62.5 L205.0 63.7 L204.5 65.2 L204.0 65.6 L203.5 66.4 L203.0 67.2 L202.5 68.5 L202.0 68.5 L201.5 68.1 L201.0 67.7 L200.5 66.4 L200.0 65.2 L199.5 65.4 L199.0 64.9 L198.5 64.5 L198.0 64.9 L197.5 64.1 L197.0 63.6 L196.5 64.7 L196.0 66.4 L195.5 65.4 L195.0 65.7 L194.5 65.4 L194.0 63.8 L193.5 64.6 L193.0 65.0 L192.5 65.7 L192.0 65.1 L191.5 65.0 L191.0 65.6 L190.5 65.1 L190.0 65.4 L189.5 64.5 L189.0 63.1 L188.5 63.4 L188.0 63.3 L187.5 64.4 L187.0 64.7 L186.5 64.4 L186.0 63.1 L185.5 63.5 L185.0 63.7 L184.5 64.2 L184.0 66.0 L183.5 66.1 L183.0 65.1 L182.5 63.5 L182.0 64.6 L181.5 64.9 L181.0 64.7 L180.5 63.7 L180.0 64.0 L179.5 64.7 L179.0 65.5 L178.5 65.2 L178.0 65.1 L177.5 65.3 L177.0 65.3 L176.5 64.6 L176.0 63.1 L175.5 63.7 L175.0 64.9 L174.5 65.0 L174.0 64.8 L173.5 65.6 L173.0 64.5 L172.5 63.6 L172.0 63.4 L171.5 64.3 L171.0 64.3 L170.5 64.1 L170.0 64.7 L169.5 65.0 L169.0 65.5 L168.5 64.9 L168.0 64.2 L167.5 63.6 L167.0 64.9 L166.5 65.9 L166.0 66.5 L165.5 66.1 L165.0 66.4 L164.5 65.7 L164.0 64.0 L163.5 65.3 L163.0 65.0 L162.5 66.3 L162.0 65.7 L161.5 65.0 L161.0 65.1 L160.5 63.9 L160.0 65.7 L159.5 67.2 L159.0 65.5 L158.5 65.3 L158.0 65.6 L157.5 64.8 L157.0 64.7 L156.5 64.4 L156.0 64.7 L155.5 66.3 L155.0 66.3 L154.5 66.4 L154.0 66.0 L153.5 66.7 L153.0 67.0 L152.5 66.0 L152.0 65.6 L151.5 65.2 L151.0 65.0 L150.5 64.5 L150.0 65.3 L149.5 65.6 L149.0 64.6 L148.5 64.2 L148.0 64.9 L147.5 65.7 L147.0 65.2 L146.5 65.8 L146.0 65.0 L145.5 63.7 L145.0 63.5 L144.5 64.3 L144.0 65.9 L143.5 64.6 L143.0 63.3 L142.5 63.4 L142.0 63.4 L141.5 64.0 L141.0 64.5 L140.5 64.7 L140.0 65.0 L139.5 65.3 L139.0 65.3 L138.5 65.0 L138.0 64.9 L137.5 64.2 L137.0 64.4 L136.5 64.4 L136.0 64.2 L135.5 63.4 L135.0 63.2 L134.5 63.2 L134.0 63.3 L133.5 63.6 L133.0 64.3 L132.5 63.4 L132.0 62.8 L131.5 63.2 L131.0 63.4 L130.5 63.7 L130.0 63.2 L129.5 64.0 L129.0 63.8 L128.5 63.3 L128.0 63.0 L127.5 63.1 L127.0 63.2 L126.5 62.3 L126.0 61.7 L125.5 62.1 L125.0 62.5 L124.5 63.2 L124.0 63.5 L123.5 63.1 L123.0 62.7 L122.5 63.1 L122.0 62.8 L121.5 62.2 L121.0 61.9 L120.5 61.9 L120.0 62.4 L119.5 62.2 L119.0 60.6 L118.5 61.3 L118.0 61.4 L117.5 61.5 L117.0 63.0 L116.5 63.5 L116.0 62.0 L115.5 61.9 L115.0 62.3 L114.5 62.4 L114.0 62.4 L113.5 61.4 L113.0 61.8 L112.5 62.3 L112.0 63.0 L111.5 62.2 L111.0 61.6 L110.5 61.7 L110.0 62.2 L109.5 61.9 L109.0 62.0 L108.5 62.3 L108.0 62.0 L107.5 61.9 L107.0 61.0 L106.5 61.0 L106.0 62.0 L105.5 61.7 L105.0 61.6 L104.5 61.0 L104.0 61.0 L103.5 61.2 L103.0 61.2 L102.5 62.1 L102.0 62.6 L101.5 62.3 L101.0 62.0 L100.5 61.6 L100.0 60.4 L99.5 61.5 L99.0 62.1 L98.5 61.6 L98.0 62.8 L97.5 61.7 L97.0 61.0 L96.5 61.1 L96.0 61.3 L95.5 61.3 L95.0 62.1 L94.5 62.0 L94.0 62.1 L93.5 61.9 L93.0 62.1 L92.5 62.6 L92.0 62.7 L91.5 61.8 L91.0 61.5 L90.5 61.7 L90.0 61.5 L89.5 60.9 L89.0 60.7 L88.5 61.9 L88.0 62.4 L87.5 61.7 L87.0 62.3 L86.5 62.2 L86.0 62.0 L85.5 61.7 L85.0 61.0 L84.5 60.8 L84.0 60.8 L83.5 61.6 L83.0 61.6 L82.5 61.4 L82.0 61.0 L81.5 59.9 L81.0 59.7 L80.5 60.5 L80.0 61.0 L79.5 60.7 L79.0 60.9 L78.5 61.4 L78.0 61.2 L77.5 60.9 L77.0 61.2 L76.5 61.6 L76.0 61.1 L75.5 60.8 L75.0 60.4 L74.5 60.3 L74.0 60.3 L73.5 60.0 L73.0 60.0 L72.5 60.8 L72.0 59.5 L71.5 59.3 L71.0 59.3 L70.5 59.4 L70.0 59.3 L69.5 59.8 L69.0 59.6 L68.5 59.5 L68.0 58.9 L67.5 59.7 L67.0 59.1 L66.5 59.5 L66.0 58.8 L65.5 58.6 L65.0 59.1 L64.5 59.6 L64.0 59.2 L63.5 59.0 L63.0 58.5 L62.5 58.8 L62.0 59.1 L61.5 59.5 L61.0 58.5 L60.5 58.2 L60.0 58.3 L59.5 58.1 L59.0 58.2 L58.5 58.4 L58.0 58.3 L57.5 58.2 L57.0 58.5 L56.5 58.4 L56.0 58.4 L55.5 58.4 L55.0 58.6 L54.5 58.4 L54.0 57.5 L53.5 57.6 L53.0 58.5 L52.5 58.5 L52.0 58.4 L51.5 58.2 L51.0 57.6 L50.5 56.9 L50.0 58.0 L49.5 58.0 L49.0 58.2 L48.5 57.8 L48.0 57.3 L47.5 57.6 L47.0 57.0 L46.5 56.6 L46.0 56.6 L45.5 56.2 L45.0 56.2 L44.5 56.1 L44.0 55.8 L43.5 56.3 L43.0 56.3 L42.5 56.0 L42.0 55.5 L41.5 55.8 L41.0 56.1 L40.5 56.1 L40.0 55.7 L39.5 55.4 L39.0 55.5 L38.5 55.7 L38.0 55.5 L37.5 55.0 L37.0 54.8 L36.5 54.6 L36.0 54.8 L35.5 54.9 L35.0 54.9 L34.5 54.8 L34.0 54.7 L33.5 54.3 L33.0 54.3 L32.5 54.2 L32.0 54.0 L31.5 54.0 L31.0 54.1 L30.5 53.9 L30.0 53.6 L29.5 53.2 L29.0 53.3 L28.5 53.1 L28.0 53.2 L27.5 53.3 L27.0 53.1 L26.5 52.9 L26.0 52.9 L25.5 53.0 L25.0 52.9 L24.5 52.9 L24.0 52.8 L23.5 52.8 L23.0 53.0 L22.5 52.7 L22.0 52.8 L21.5 52.6 L21.0 52.4 L20.5 52.2 L20.0 52.3 L19.5 52.2 L19.0 52.0 L18.5 51.9 L18.0 51.8 L17.5 51.7 L17.0 51.9 L16.5 51.9 L16.0 51.7 L15.5 51.6 L15.0 51.5 L14.5 51.4 L14.0 51.4 L13.5 51.4 L13.0 51.4 L12.5 51.5 L12.0 51.5 L11.5 51.5 L11.0 51.5 L10.5 51.3 L10.0 51.2 L9.5 51.3 L9.0 51.3 L8.5 51.2 L8.0 51.2 L7.5 51.2 L7.0 51.2 L6.5 51.2 L6.0 51.3 L5.5 51.3 L5.0 51.2 L4.5 51.1 L4.0 51.1 L3.5 51.1 L3.0 51.1 L2.5 51.0 L2.0 51.1 L1.5 51.1 L1.0 51.2 L0.5 51.1 L0.0 51.1 Z" fill="#3393f0"/></svg>
<div class="t" style="left:5.50px;top:3.61px;font-size:10.61px;font-weight:bold;color:#fff;;transform:scaleX(1.0169);transform-origin:0 0">Street_90_Am_Drone_32bar</div>
</div>
<div class="abs" style="left:739.80px;top:547.50px;width:281.40px;height:83.8px;border-radius:4px;overflow:hidden;background:#225b93"><svg style="left:0;top:0" width="281.40" height="83.8" viewBox="0 0 281.40 83.8"><rect x="0" y="0" width="281.40" height="16.8" fill="#1c4878"/><path d="M0.0 49.8 L0.5 49.8 L1.0 49.8 L1.5 49.8 L2.0 49.6 L2.5 49.7 L3.0 49.6 L3.5 49.6 L4.0 49.6 L4.5 49.7 L5.0 49.6 L5.5 49.4 L6.0 49.4 L6.5 49.1 L7.0 49.2 L7.5 49.1 L8.0 49.1 L8.5 49.3 L9.0 49.4 L9.5 49.3 L10.0 49.3 L10.5 49.1 L11.0 49.0 L11.5 48.8 L12.0 48.6 L12.5 48.7 L13.0 48.5 L13.5 48.6 L14.0 47.9 L14.5 48.8 L15.0 48.4 L15.5 48.1 L16.0 48.3 L16.5 47.6 L17.0 48.3 L17.5 47.9 L18.0 48.0 L18.5 47.9 L19.0 48.0 L19.5 47.7 L20.0 48.3 L20.5 47.2 L21.0 47.7 L21.5 47.7 L22.0 47.3 L22.5 47.3 L23.0 48.1 L23.5 48.0 L24.0 47.7 L24.5 47.8 L25.0 48.1 L25.5 47.9 L26.0 47.5 L26.5 47.2 L27.0 46.5 L27.5 46.5 L28.0 47.2 L28.5 47.4 L29.0 47.5 L29.5 47.3 L30.0 47.4 L30.5 46.8 L31.0 46.8 L31.5 46.9 L32.0 46.8 L32.5 47.0 L33.0 47.1 L33.5 47.0 L34.0 47.3 L34.5 47.3 L35.0 47.0 L35.5 46.9 L36.0 46.9 L36.5 47.0 L37.0 46.7 L37.5 46.4 L38.0 46.0 L38.5 45.9 L39.0 46.2 L39.5 46.9 L40.0 46.7 L40.5 46.3 L41.0 46.1 L41.5 45.3 L42.0 45.7 L42.5 46.4 L43.0 46.7 L43.5 46.4 L44.0 46.9 L44.5 45.2 L45.0 46.7 L45.5 46.1 L46.0 45.8 L46.5 45.9 L47.0 45.7 L47.5 45.5 L48.0 45.5 L48.5 45.8 L49.0 46.1 L49.5 46.5 L50.0 46.5 L50.5 46.6 L51.0 46.5 L51.5 46.6 L52.0 46.5 L52.5 45.5 L53.0 45.3 L53.5 45.8 L54.0 45.4 L54.5 45.7 L55.0 45.6 L55.5 43.2 L56.0 44.7 L56.5 45.3 L57.0 45.5 L57.5 45.9 L58.0 46.5 L58.5 46.1 L59.0 45.8 L59.5 45.7 L60.0 45.9 L60.5 46.5 L61.0 46.4 L61.5 46.1 L62.0 45.8 L62.5 44.6 L63.0 45.5 L63.5 45.6 L64.0 46.2 L64.5 46.6 L65.0 46.4 L65.5 43.6 L66.0 45.2 L66.5 45.6 L67.0 43.1 L67.5 46.0 L68.0 45.8 L68.5 45.5 L69.0 45.3 L69.5 45.1 L70.0 44.8 L70.5 44.8 L71.0 45.3 L71.5 46.3 L72.0 45.7 L72.5 44.7 L73.0 45.2 L73.5 45.4 L74.0 44.7 L74.5 41.5 L75.0 35.3 L75.5 37.1 L76.0 35.0 L76.5 39.2 L77.0 40.6 L77.5 42.2 L78.0 44.7 L78.5 42.6 L79.0 44.9 L79.5 45.2 L80.0 45.6 L80.5 46.2 L81.0 45.8 L81.5 45.9 L82.0 45.4 L82.5 44.6 L83.0 43.4 L83.5 45.0 L84.0 44.8 L84.5 45.1 L85.0 45.2 L85.5 45.8 L86.0 45.9 L86.5 45.3 L87.0 45.4 L87.5 46.1 L88.0 46.2 L88.5 45.8 L89.0 45.8 L89.5 46.4 L90.0 44.5 L90.5 46.4 L91.0 46.6 L91.5 46.4 L92.0 46.9 L92.5 46.7 L93.0 46.5 L93.5 46.8 L94.0 45.6 L94.5 44.7 L95.0 44.7 L95.5 44.6 L96.0 44.0 L96.5 45.3 L97.0 45.2 L97.5 44.5 L98.0 43.8 L98.5 43.8 L99.0 43.7 L99.5 42.7 L100.0 42.8 L100.5 42.9 L101.0 43.1 L101.5 43.3 L102.0 44.0 L102.5 44.6 L103.0 41.3 L103.5 44.5 L104.0 43.5 L104.5 43.7 L105.0 43.9 L105.5 43.3 L106.0 43.2 L106.5 43.5 L107.0 43.2 L107.5 43.4 L108.0 42.6 L108.5 41.9 L109.0 42.1 L109.5 40.2 L110.0 43.5 L110.5 41.3 L111.0 41.9 L111.5 41.2 L112.0 41.3 L112.5 41.3 L113.0 41.2 L113.5 42.4 L114.0 43.1 L114.5 43.5 L115.0 43.3 L115.5 43.4 L116.0 38.0 L116.5 41.2 L117.0 41.3 L117.5 40.5 L118.0 40.5 L118.5 42.0 L119.0 42.7 L119.5 43.6 L120.0 43.5 L120.5 42.7 L121.0 41.9 L121.5 41.4 L122.0 42.5 L122.5 42.7 L123.0 43.1 L123.5 42.3 L124.0 41.4 L124.5 40.7 L125.0 41.0 L125.5 41.4 L126.0 41.3 L126.5 41.3 L127.0 42.8 L127.5 43.5 L128.0 42.9 L128.5 42.0 L129.0 42.0 L129.5 40.2 L130.0 40.2 L130.5 41.3 L131.0 41.5 L131.5 42.7 L132.0 42.6 L132.5 41.0 L133.0 40.2 L133.5 41.6 L134.0 42.0 L134.5 43.1 L135.0 43.3 L135.5 43.2 L136.0 40.2 L136.5 40.8 L137.0 41.6 L137.5 41.5 L138.0 42.3 L138.5 41.8 L139.0 42.7 L139.5 43.8 L140.0 44.6 L140.5 41.9 L141.0 44.8 L141.5 44.5 L142.0 44.6 L142.5 44.8 L143.0 44.6 L143.5 44.8 L144.0 44.7 L144.5 45.1 L145.0 46.2 L145.5 45.9 L146.0 45.3 L146.5 45.0 L147.0 45.3 L147.5 45.8 L148.0 44.9 L148.5 45.7 L149.0 45.4 L149.5 46.4 L150.0 46.2 L150.5 45.8 L151.0 45.9 L151.5 45.8 L152.0 46.2 L152.5 45.4 L153.0 45.1 L153.5 45.9 L154.0 46.0 L154.5 45.0 L155.0 46.2 L155.5 46.5 L156.0 46.1 L156.5 46.5 L157.0 46.0 L157.5 44.1 L158.0 46.7 L158.5 46.4 L159.0 45.8 L159.5 44.9 L160.0 45.5 L160.5 46.2 L161.0 44.8 L161.5 45.8 L162.0 45.6 L162.5 45.9 L163.0 45.9 L163.5 45.9 L164.0 45.5 L164.5 46.5 L165.0 46.6 L165.5 46.4 L166.0 46.3 L166.5 46.0 L167.0 46.6 L167.5 46.9 L168.0 47.0 L168.5 47.1 L169.0 45.4 L169.5 46.4 L170.0 46.6 L170.5 46.6 L171.0 46.9 L171.5 46.6 L172.0 46.6 L172.5 46.4 L173.0 46.5 L173.5 47.1 L174.0 46.9 L174.5 47.3 L175.0 47.7 L175.5 47.8 L176.0 48.1 L176.5 48.2 L177.0 48.7 L177.5 48.7 L178.0 48.3 L178.5 48.9 L179.0 48.9 L179.5 49.0 L180.0 49.1 L180.5 49.2 L181.0 49.0 L181.5 48.7 L182.0 48.7 L182.5 48.9 L183.0 49.1 L183.5 49.1 L184.0 49.1 L184.5 48.9 L185.0 48.7 L185.5 49.0 L186.0 48.9 L186.5 49.1 L187.0 49.2 L187.5 48.8 L188.0 48.7 L188.5 49.1 L189.0 49.2 L189.5 49.1 L190.0 49.1 L190.5 48.9 L191.0 49.2 L191.5 49.2 L192.0 48.6 L192.5 48.3 L193.0 49.1 L193.5 49.1 L194.0 49.1 L194.5 48.9 L195.0 47.6 L195.5 47.9 L196.0 47.3 L196.5 47.3 L197.0 46.9 L197.5 47.1 L198.0 47.1 L198.5 47.3 L199.0 47.6 L199.5 47.3 L200.0 47.2 L200.5 47.3 L201.0 47.0 L201.5 47.1 L202.0 47.3 L202.5 47.4 L203.0 47.6 L203.5 47.3 L204.0 47.0 L204.5 46.5 L205.0 46.7 L205.5 47.3 L206.0 47.2 L206.5 47.3 L207.0 47.5 L207.5 47.6 L208.0 47.5 L208.5 47.1 L209.0 46.6 L209.5 46.0 L210.0 46.9 L210.5 46.8 L211.0 45.7 L211.5 47.1 L212.0 47.5 L212.5 47.3 L213.0 47.6 L213.5 47.8 L214.0 47.5 L214.5 47.4 L215.0 48.0 L215.5 48.5 L216.0 48.7 L216.5 48.9 L217.0 48.7 L217.5 48.7 L218.0 48.7 L218.5 49.0 L219.0 49.0 L219.5 48.6 L220.0 48.6 L220.5 48.5 L221.0 48.6 L221.5 48.7 L222.0 48.9 L222.5 48.7 L223.0 48.5 L223.5 47.9 L224.0 48.5 L224.5 48.5 L225.0 48.6 L225.5 48.6 L226.0 48.6 L226.5 48.6 L227.0 48.5 L227.5 48.8 L228.0 48.8 L228.5 48.9 L229.0 48.9 L229.5 48.7 L230.0 48.7 L230.5 48.9 L231.0 49.1 L231.5 48.8 L232.0 48.9 L232.5 48.9 L233.0 49.1 L233.5 49.1 L234.0 49.1 L234.5 49.3 L235.0 49.5 L235.5 49.7 L236.0 49.8 L236.5 49.8 L237.0 49.8 L237.5 49.8 L238.0 49.8 L238.5 49.8 L239.0 49.8 L239.5 49.8 L240.0 49.8 L240.5 49.8 L241.0 49.8 L241.5 49.8 L242.0 49.8 L242.5 49.8 L243.0 49.8 L243.5 49.8 L244.0 49.8 L244.5 49.8 L245.0 49.8 L245.5 49.8 L246.0 49.8 L246.5 49.8 L247.0 49.8 L247.5 49.8 L248.0 49.8 L248.5 49.8 L249.0 49.8 L249.5 49.8 L250.0 49.8 L250.5 49.8 L251.0 49.8 L251.5 49.8 L252.0 49.8 L252.5 49.8 L253.0 49.8 L253.5 49.8 L254.0 49.8 L254.5 49.8 L255.0 49.8 L255.5 49.8 L256.0 49.8 L256.5 49.8 L257.0 49.8 L257.5 49.8 L258.0 49.8 L258.5 49.8 L259.0 49.8 L259.5 49.8 L260.0 49.8 L260.5 49.8 L261.0 49.8 L261.5 49.8 L262.0 49.8 L262.5 49.8 L263.0 49.8 L263.5 49.8 L264.0 49.8 L264.5 49.8 L265.0 49.8 L265.5 49.8 L266.0 49.8 L266.5 49.8 L267.0 49.8 L267.5 49.8 L268.0 49.8 L268.5 49.8 L269.0 49.8 L269.5 49.8 L270.0 49.8 L270.5 49.8 L271.0 49.8 L271.5 49.8 L272.0 49.8 L272.5 49.8 L273.0 49.8 L273.5 49.8 L274.0 49.8 L274.5 49.8 L275.0 49.8 L275.5 49.8 L276.0 49.8 L276.5 49.8 L277.0 49.8 L277.5 49.8 L278.0 49.8 L278.5 49.8 L279.0 49.8 L279.5 49.8 L280.0 49.8 L280.5 49.8 L281.0 49.8 L281.4 49.8 L281.4 50.8 L281.0 50.8 L280.5 50.8 L280.0 50.8 L279.5 50.8 L279.0 50.8 L278.5 50.8 L278.0 50.8 L277.5 50.8 L277.0 50.8 L276.5 50.8 L276.0 50.9 L275.5 50.8 L275.0 50.8 L274.5 50.8 L274.0 50.8 L273.5 50.8 L273.0 50.8 L272.5 50.8 L272.0 50.8 L271.5 50.8 L271.0 50.8 L270.5 50.8 L270.0 50.8 L269.5 50.8 L269.0 50.8 L268.5 50.8 L268.0 50.8 L267.5 50.8 L267.0 50.8 L266.5 50.8 L266.0 50.8 L265.5 50.8 L265.0 50.8 L264.5 50.8 L264.0 50.8 L263.5 50.8 L263.0 50.8 L262.5 50.8 L262.0 50.8 L261.5 50.8 L261.0 50.8 L260.5 50.8 L260.0 50.8 L259.5 50.8 L259.0 50.8 L258.5 50.8 L258.0 50.8 L257.5 50.8 L257.0 50.8 L256.5 50.8 L256.0 50.8 L255.5 50.8 L255.0 50.8 L254.5 50.8 L254.0 50.8 L253.5 50.8 L253.0 50.8 L252.5 50.8 L252.0 50.8 L251.5 50.8 L251.0 50.8 L250.5 50.8 L250.0 50.8 L249.5 50.8 L249.0 50.8 L248.5 50.8 L248.0 50.8 L247.5 50.8 L247.0 50.8 L246.5 50.8 L246.0 50.8 L245.5 50.8 L245.0 50.8 L244.5 50.8 L244.0 50.8 L243.5 50.8 L243.0 50.8 L242.5 50.8 L242.0 50.8 L241.5 50.8 L241.0 50.8 L240.5 50.8 L240.0 50.8 L239.5 50.8 L239.0 50.8 L238.5 50.8 L238.0 50.8 L237.5 50.8 L237.0 50.8 L236.5 50.8 L236.0 50.8 L235.5 51.0 L235.0 51.3 L234.5 51.4 L234.0 51.5 L233.5 51.6 L233.0 51.6 L232.5 51.7 L232.0 51.7 L231.5 51.8 L231.0 51.7 L230.5 51.8 L230.0 51.8 L229.5 51.8 L229.0 51.9 L228.5 52.2 L228.0 51.9 L227.5 51.8 L227.0 51.8 L226.5 51.9 L226.0 51.9 L225.5 52.1 L225.0 51.8 L224.5 51.8 L224.0 51.9 L223.5 51.8 L223.0 52.0 L222.5 51.8 L222.0 51.8 L221.5 51.9 L221.0 51.7 L220.5 52.0 L220.0 52.1 L219.5 52.0 L219.0 51.9 L218.5 51.9 L218.0 51.8 L217.5 51.7 L217.0 52.0 L216.5 52.4 L216.0 52.0 L215.5 51.9 L215.0 52.6 L214.5 52.3 L214.0 52.7 L213.5 52.9 L213.0 53.2 L212.5 54.8 L212.0 54.2 L211.5 53.8 L211.0 53.9 L210.5 53.2 L210.0 53.1 L209.5 53.8 L209.0 53.7 L208.5 54.0 L208.0 53.6 L207.5 53.5 L207.0 53.9 L206.5 54.2 L206.0 53.3 L205.5 53.4 L205.0 53.4 L204.5 53.6 L204.0 53.7 L203.5 54.1 L203.0 54.3 L202.5 54.2 L202.0 55.2 L201.5 53.3 L201.0 53.1 L200.5 53.5 L200.0 54.0 L199.5 53.4 L199.0 53.3 L198.5 53.9 L198.0 54.1 L197.5 53.9 L197.0 53.5 L196.5 52.9 L196.0 52.9 L195.5 52.7 L195.0 52.4 L194.5 52.5 L194.0 51.7 L193.5 51.6 L193.0 52.0 L192.5 51.5 L192.0 51.6 L191.5 51.8 L191.0 52.0 L190.5 51.7 L190.0 51.7 L189.5 51.8 L189.0 51.6 L188.5 51.7 L188.0 51.8 L187.5 51.7 L187.0 51.7 L186.5 51.8 L186.0 51.6 L185.5 51.6 L185.0 51.5 L184.5 51.6 L184.0 51.6 L183.5 51.6 L183.0 51.6 L182.5 51.9 L182.0 51.8 L181.5 51.8 L181.0 51.6 L180.5 51.6 L180.0 51.6 L179.5 51.7 L179.0 51.6 L178.5 51.7 L178.0 51.8 L177.5 51.6 L177.0 51.6 L176.5 52.0 L176.0 52.0 L175.5 52.7 L175.0 53.1 L174.5 53.5 L174.0 53.5 L173.5 53.1 L173.0 53.6 L172.5 54.0 L172.0 53.8 L171.5 54.0 L171.0 53.8 L170.5 53.3 L170.0 53.5 L169.5 53.6 L169.0 53.5 L168.5 53.9 L168.0 53.7 L167.5 53.7 L167.0 53.4 L166.5 54.5 L166.0 55.1 L165.5 54.2 L165.0 54.6 L164.5 54.4 L164.0 54.0 L163.5 54.8 L163.0 53.9 L162.5 54.1 L162.0 54.1 L161.5 54.2 L161.0 55.7 L160.5 56.5 L160.0 54.9 L159.5 54.7 L159.0 55.3 L158.5 55.4 L158.0 55.1 L157.5 55.3 L157.0 56.5 L156.5 54.7 L156.0 54.0 L155.5 55.3 L155.0 55.7 L154.5 54.4 L154.0 53.9 L153.5 54.4 L153.0 55.3 L152.5 55.3 L152.0 54.6 L151.5 55.1 L151.0 55.5 L150.5 54.8 L150.0 55.6 L149.5 55.3 L149.0 54.9 L148.5 54.9 L148.0 56.6 L147.5 55.9 L147.0 56.1 L146.5 55.8 L146.0 55.9 L145.5 56.3 L145.0 56.3 L144.5 55.9 L144.0 55.7 L143.5 55.8 L143.0 56.6 L142.5 56.5 L142.0 56.8 L141.5 56.8 L141.0 57.0 L140.5 58.0 L140.0 57.4 L139.5 58.4 L139.0 57.7 L138.5 58.5 L138.0 58.8 L137.5 59.1 L137.0 59.2 L136.5 57.4 L136.0 58.4 L135.5 59.8 L135.0 60.7 L134.5 59.9 L134.0 59.5 L133.5 59.1 L133.0 58.1 L132.5 59.9 L132.0 57.8 L131.5 58.2 L131.0 57.3 L130.5 58.2 L130.0 59.4 L129.5 58.4 L129.0 59.7 L128.5 58.7 L128.0 58.0 L127.5 56.9 L127.0 59.1 L126.5 59.3 L126.0 59.0 L125.5 58.1 L125.0 58.0 L124.5 58.7 L124.0 59.2 L123.5 57.1 L123.0 57.7 L122.5 58.3 L122.0 59.7 L121.5 59.1 L121.0 60.0 L120.5 58.1 L120.0 57.9 L119.5 57.9 L119.0 59.0 L118.5 59.3 L118.0 59.9 L117.5 59.0 L117.0 57.8 L116.5 56.8 L116.0 59.4 L115.5 58.3 L115.0 58.1 L114.5 57.0 L114.0 57.2 L113.5 57.9 L113.0 57.9 L112.5 57.5 L112.0 57.1 L111.5 57.3 L111.0 58.7 L110.5 57.5 L110.0 57.7 L109.5 57.8 L109.0 58.1 L108.5 58.4 L108.0 57.8 L107.5 59.8 L107.0 57.2 L106.5 56.2 L106.0 57.6 L105.5 58.0 L105.0 57.4 L104.5 55.9 L104.0 56.7 L103.5 57.4 L103.0 56.8 L102.5 60.0 L102.0 56.8 L101.5 57.3 L101.0 57.0 L100.5 56.0 L100.0 57.1 L99.5 56.9 L99.0 56.9 L98.5 56.7 L98.0 57.7 L97.5 56.8 L97.0 55.9 L96.5 56.3 L96.0 56.7 L95.5 56.7 L95.0 56.1 L94.5 56.2 L94.0 55.5 L93.5 54.4 L93.0 54.7 L92.5 54.4 L92.0 54.6 L91.5 55.0 L91.0 54.9 L90.5 54.2 L90.0 54.3 L89.5 54.5 L89.0 54.5 L88.5 54.9 L88.0 55.8 L87.5 55.2 L87.0 54.2 L86.5 54.6 L86.0 55.9 L85.5 54.8 L85.0 56.8 L84.5 54.7 L84.0 54.6 L83.5 54.7 L83.0 55.0 L82.5 55.0 L82.0 55.2 L81.5 55.9 L81.0 58.4 L80.5 55.0 L80.0 55.0 L79.5 54.6 L79.0 56.5 L78.5 56.7 L78.0 57.8 L77.5 59.0 L77.0 59.5 L76.5 64.1 L76.0 68.8 L75.5 65.4 L75.0 61.1 L74.5 58.5 L74.0 57.0 L73.5 55.8 L73.0 55.7 L72.5 56.4 L72.0 55.8 L71.5 56.4 L71.0 55.7 L70.5 56.2 L70.0 55.2 L69.5 55.1 L69.0 57.8 L68.5 55.8 L68.0 55.6 L67.5 56.0 L67.0 56.0 L66.5 54.8 L66.0 54.7 L65.5 55.0 L65.0 54.9 L64.5 55.0 L64.0 55.7 L63.5 55.3 L63.0 55.3 L62.5 55.7 L62.0 54.9 L61.5 57.0 L61.0 55.0 L60.5 54.6 L60.0 54.7 L59.5 56.2 L59.0 54.9 L58.5 54.8 L58.0 54.8 L57.5 54.0 L57.0 54.5 L56.5 54.5 L56.0 54.8 L55.5 55.9 L55.0 55.6 L54.5 55.0 L54.0 54.4 L53.5 54.8 L53.0 54.7 L52.5 54.8 L52.0 55.2 L51.5 55.4 L51.0 55.1 L50.5 55.3 L50.0 57.0 L49.5 55.1 L49.0 54.6 L48.5 54.2 L48.0 54.3 L47.5 54.3 L47.0 55.4 L46.5 54.2 L46.0 54.3 L45.5 54.9 L45.0 55.3 L44.5 55.0 L44.0 55.3 L43.5 55.2 L43.0 54.7 L42.5 54.2 L42.0 54.1 L41.5 54.4 L41.0 54.7 L40.5 54.7 L40.0 54.6 L39.5 54.9 L39.0 54.5 L38.5 54.6 L38.0 55.0 L37.5 54.4 L37.0 54.1 L36.5 54.2 L36.0 54.2 L35.5 55.8 L35.0 54.3 L34.5 54.4 L34.0 54.3 L33.5 53.9 L33.0 53.5 L32.5 53.7 L32.0 54.6 L31.5 54.0 L31.0 54.1 L30.5 53.7 L30.0 54.0 L29.5 54.0 L29.0 53.9 L28.5 53.6 L28.0 53.1 L27.5 53.0 L27.0 53.0 L26.5 53.4 L26.0 53.1 L25.5 53.5 L25.0 53.5 L24.5 52.8 L24.0 52.5 L23.5 53.1 L23.0 53.7 L22.5 54.2 L22.0 53.0 L21.5 53.0 L21.0 52.9 L20.5 53.5 L20.0 52.2 L19.5 52.4 L19.0 52.5 L18.5 52.7 L18.0 52.6 L17.5 52.6 L17.0 52.3 L16.5 53.0 L16.0 52.0 L15.5 52.1 L15.0 52.1 L14.5 52.4 L14.0 52.2 L13.5 51.8 L13.0 51.7 L12.5 51.8 L12.0 51.7 L11.5 51.7 L11.0 51.8 L10.5 51.6 L10.0 51.5 L9.5 51.4 L9.0 51.4 L8.5 51.5 L8.0 51.4 L7.5 51.4 L7.0 51.4 L6.5 51.2 L6.0 51.1 L5.5 51.2 L5.0 51.1 L4.5 51.2 L4.0 51.0 L3.5 50.9 L3.0 50.8 L2.5 51.0 L2.0 50.8 L1.5 50.8 L1.0 50.8 L0.5 50.8 L0.0 50.8 Z" fill="#3393f0"/><path d="M0 16.8 L54 16.8 L0 83.8 Z" fill="#000" fill-opacity="0.14"/></svg>
<div class="t" style="left:5.50px;top:3.61px;font-size:10.61px;font-weight:bold;color:#fff;;transform:scaleX(0.9909);transform-origin:0 0">ATS_140_Eb_Mystery Journey_Ambient Pad_3</div>
</div>
<div class="abs" style="left:1464.50px;top:547.50px;width:139.80px;height:83.8px;border-radius:4px;overflow:hidden;background:#225b93"><svg style="left:0;top:0" width="139.80" height="83.8" viewBox="0 0 139.80 83.8"><rect x="0" y="0" width="139.80" height="16.8" fill="#1c4878"/><path d="M0.0 49.8 L0.5 49.8 L1.0 49.8 L1.5 49.8 L2.0 49.8 L2.5 49.8 L3.0 49.6 L3.5 49.7 L4.0 49.6 L4.5 49.6 L5.0 49.5 L5.5 49.5 L6.0 49.5 L6.5 49.4 L7.0 49.4 L7.5 49.2 L8.0 49.3 L8.5 49.4 L9.0 49.3 L9.5 49.3 L10.0 49.3 L10.5 49.1 L11.0 49.0 L11.5 48.8 L12.0 48.5 L12.5 48.7 L13.0 48.7 L13.5 48.6 L14.0 48.5 L14.5 48.5 L15.0 48.4 L15.5 48.3 L16.0 48.2 L16.5 48.3 L17.0 48.1 L17.5 48.2 L18.0 48.2 L18.5 47.8 L19.0 48.2 L19.5 48.3 L20.0 48.2 L20.5 47.9 L21.0 48.1 L21.5 47.6 L22.0 47.6 L22.5 47.1 L23.0 48.1 L23.5 48.2 L24.0 47.9 L24.5 47.7 L25.0 47.5 L25.5 47.1 L26.0 47.2 L26.5 47.2 L27.0 45.5 L27.5 47.3 L28.0 47.3 L28.5 46.3 L29.0 47.2 L29.5 47.2 L30.0 47.4 L30.5 46.8 L31.0 46.3 L31.5 46.3 L32.0 46.3 L32.5 46.8 L33.0 47.1 L33.5 47.2 L34.0 46.8 L34.5 46.7 L35.0 46.7 L35.5 46.8 L36.0 46.7 L36.5 46.7 L37.0 46.2 L37.5 46.3 L38.0 46.4 L38.5 46.9 L39.0 45.7 L39.5 46.3 L40.0 45.5 L40.5 45.4 L41.0 45.6 L41.5 45.4 L42.0 45.7 L42.5 45.6 L43.0 45.4 L43.5 44.6 L44.0 46.2 L44.5 45.7 L45.0 45.4 L45.5 45.5 L46.0 45.6 L46.5 45.4 L47.0 45.8 L47.5 45.4 L48.0 46.0 L48.5 45.4 L49.0 46.2 L49.5 46.6 L50.0 45.9 L50.5 45.2 L51.0 45.6 L51.5 46.0 L52.0 46.4 L52.5 45.7 L53.0 45.5 L53.5 46.2 L54.0 46.1 L54.5 45.7 L55.0 46.1 L55.5 46.2 L56.0 46.7 L56.5 46.2 L57.0 45.8 L57.5 44.5 L58.0 45.1 L58.5 45.3 L59.0 45.6 L59.5 43.7 L60.0 45.8 L60.5 45.2 L61.0 45.2 L61.5 45.2 L62.0 45.3 L62.5 45.3 L63.0 44.0 L63.5 45.7 L64.0 45.4 L64.5 45.7 L65.0 46.1 L65.5 45.9 L66.0 45.9 L66.5 45.6 L67.0 45.0 L67.5 44.7 L68.0 44.4 L68.5 44.9 L69.0 44.9 L69.5 45.1 L70.0 44.7 L70.5 44.5 L71.0 44.9 L71.5 44.2 L72.0 44.4 L72.5 45.3 L73.0 44.2 L73.5 43.8 L74.0 41.6 L74.5 40.6 L75.0 39.0 L75.5 35.0 L76.0 38.0 L76.5 39.6 L77.0 40.7 L77.5 44.1 L78.0 45.1 L78.5 45.0 L79.0 44.8 L79.5 44.6 L80.0 45.5 L80.5 45.1 L81.0 44.8 L81.5 43.2 L82.0 45.0 L82.5 46.1 L83.0 46.1 L83.5 45.2 L84.0 46.0 L84.5 45.6 L85.0 45.8 L85.5 45.8 L86.0 45.5 L86.5 45.5 L87.0 45.4 L87.5 46.0 L88.0 45.9 L88.5 46.1 L89.0 45.3 L89.5 45.6 L90.0 45.8 L90.5 45.9 L91.0 46.1 L91.5 46.3 L92.0 46.8 L92.5 46.8 L93.0 46.1 L93.5 44.5 L94.0 43.8 L94.5 45.6 L95.0 44.3 L95.5 43.8 L96.0 43.2 L96.5 42.8 L97.0 43.8 L97.5 43.5 L98.0 43.5 L98.5 44.5 L99.0 45.2 L99.5 44.2 L100.0 41.4 L100.5 44.0 L101.0 44.5 L101.5 44.5 L102.0 42.8 L102.5 43.7 L103.0 43.7 L103.5 43.1 L104.0 43.8 L104.5 43.8 L105.0 43.3 L105.5 43.4 L106.0 41.9 L106.5 42.6 L107.0 43.4 L107.5 43.8 L108.0 44.3 L108.5 43.1 L109.0 43.1 L109.5 44.0 L110.0 43.3 L110.5 44.1 L111.0 44.3 L111.5 43.6 L112.0 43.3 L112.5 44.0 L113.0 41.8 L113.5 43.5 L114.0 42.4 L114.5 42.7 L115.0 41.6 L115.5 41.8 L116.0 41.9 L116.5 41.0 L117.0 41.4 L117.5 40.9 L118.0 41.4 L118.5 42.0 L119.0 42.8 L119.5 41.8 L120.0 41.8 L120.5 42.3 L121.0 40.4 L121.5 44.0 L122.0 42.4 L122.5 43.3 L123.0 41.1 L123.5 41.6 L124.0 41.2 L124.5 40.9 L125.0 41.0 L125.5 42.3 L126.0 41.8 L126.5 41.3 L127.0 40.4 L127.5 41.1 L128.0 42.0 L128.5 42.8 L129.0 42.5 L129.5 42.7 L130.0 43.2 L130.5 43.2 L131.0 43.1 L131.5 43.2 L132.0 42.5 L132.5 43.1 L133.0 42.6 L133.5 42.9 L134.0 41.2 L134.5 41.8 L135.0 42.3 L135.5 43.0 L136.0 41.0 L136.5 41.0 L137.0 41.9 L137.5 42.8 L138.0 42.8 L138.5 42.7 L139.0 42.2 L139.5 42.5 L139.8 43.7 L139.8 56.3 L139.5 56.4 L139.0 57.6 L138.5 58.4 L138.0 57.6 L137.5 57.7 L137.0 57.9 L136.5 59.4 L136.0 58.4 L135.5 58.0 L135.0 58.4 L134.5 58.2 L134.0 60.2 L133.5 59.8 L133.0 59.3 L132.5 59.3 L132.0 59.8 L131.5 59.0 L131.0 59.6 L130.5 59.5 L130.0 59.0 L129.5 59.7 L129.0 58.0 L128.5 59.0 L128.0 62.6 L127.5 57.7 L127.0 56.9 L126.5 57.9 L126.0 56.7 L125.5 57.4 L125.0 58.2 L124.5 58.8 L124.0 58.0 L123.5 57.1 L123.0 57.3 L122.5 57.1 L122.0 58.0 L121.5 57.6 L121.0 58.2 L120.5 57.7 L120.0 57.5 L119.5 57.7 L119.0 57.0 L118.5 58.0 L118.0 57.9 L117.5 58.1 L117.0 57.0 L116.5 57.3 L116.0 58.1 L115.5 57.7 L115.0 58.3 L114.5 59.2 L114.0 58.9 L113.5 58.3 L113.0 58.1 L112.5 58.8 L112.0 62.5 L111.5 58.5 L111.0 58.3 L110.5 58.9 L110.0 58.6 L109.5 58.2 L109.0 58.4 L108.5 58.7 L108.0 59.0 L107.5 58.8 L107.0 58.1 L106.5 59.0 L106.0 58.1 L105.5 58.6 L105.0 58.4 L104.5 57.6 L104.0 56.6 L103.5 55.8 L103.0 56.4 L102.5 56.8 L102.0 56.7 L101.5 57.5 L101.0 56.9 L100.5 56.6 L100.0 57.1 L99.5 57.4 L99.0 57.1 L98.5 56.6 L98.0 56.6 L97.5 56.2 L97.0 56.1 L96.5 57.3 L96.0 56.4 L95.5 56.7 L95.0 57.9 L94.5 54.9 L94.0 54.8 L93.5 54.7 L93.0 55.1 L92.5 57.7 L92.0 56.4 L91.5 54.4 L91.0 54.7 L90.5 54.9 L90.0 54.9 L89.5 55.6 L89.0 55.1 L88.5 54.2 L88.0 53.7 L87.5 54.4 L87.0 54.6 L86.5 54.5 L86.0 54.3 L85.5 54.3 L85.0 54.9 L84.5 56.5 L84.0 54.8 L83.5 54.6 L83.0 56.1 L82.5 55.8 L82.0 55.7 L81.5 55.3 L81.0 55.5 L80.5 56.9 L80.0 56.4 L79.5 56.0 L79.0 58.7 L78.5 56.2 L78.0 55.7 L77.5 56.3 L77.0 58.3 L76.5 60.1 L76.0 69.8 L75.5 63.5 L75.0 69.0 L74.5 60.4 L74.0 59.0 L73.5 58.4 L73.0 56.2 L72.5 56.1 L72.0 56.1 L71.5 56.0 L71.0 55.8 L70.5 54.9 L70.0 54.7 L69.5 54.8 L69.0 55.2 L68.5 55.5 L68.0 55.8 L67.5 55.6 L67.0 55.8 L66.5 55.5 L66.0 55.9 L65.5 57.2 L65.0 54.6 L64.5 54.8 L64.0 54.8 L63.5 54.7 L63.0 55.1 L62.5 55.3 L62.0 56.0 L61.5 56.0 L61.0 55.0 L60.5 54.5 L60.0 54.7 L59.5 55.3 L59.0 55.1 L58.5 55.2 L58.0 55.4 L57.5 54.3 L57.0 54.5 L56.5 55.0 L56.0 55.4 L55.5 55.2 L55.0 55.7 L54.5 55.5 L54.0 55.4 L53.5 55.0 L53.0 54.5 L52.5 54.7 L52.0 54.9 L51.5 55.4 L51.0 55.0 L50.5 55.3 L50.0 54.7 L49.5 54.6 L49.0 54.6 L48.5 55.1 L48.0 54.6 L47.5 54.7 L47.0 55.2 L46.5 55.2 L46.0 54.9 L45.5 55.2 L45.0 55.2 L44.5 54.7 L44.0 53.8 L43.5 55.0 L43.0 54.6 L42.5 54.6 L42.0 53.9 L41.5 54.0 L41.0 53.9 L40.5 54.5 L40.0 55.1 L39.5 56.2 L39.0 54.0 L38.5 54.0 L38.0 54.1 L37.5 55.0 L37.0 54.7 L36.5 55.1 L36.0 54.8 L35.5 54.4 L35.0 54.0 L34.5 54.0 L34.0 54.2 L33.5 53.7 L33.0 53.4 L32.5 53.9 L32.0 53.4 L31.5 53.5 L31.0 53.7 L30.5 53.5 L30.0 53.1 L29.5 52.9 L29.0 53.0 L28.5 52.8 L28.0 52.9 L27.5 54.1 L27.0 53.4 L26.5 53.7 L26.0 53.2 L25.5 53.0 L25.0 53.1 L24.5 52.7 L24.0 52.7 L23.5 52.7 L23.0 54.0 L22.5 53.0 L22.0 53.0 L21.5 52.9 L21.0 52.9 L20.5 52.8 L20.0 52.2 L19.5 52.4 L19.0 52.6 L18.5 52.9 L18.0 52.5 L17.5 53.1 L17.0 52.7 L16.5 52.3 L16.0 52.1 L15.5 52.2 L15.0 52.3 L14.5 52.2 L14.0 52.2 L13.5 51.9 L13.0 51.9 L12.5 51.7 L12.0 51.7 L11.5 51.7 L11.0 51.9 L10.5 51.8 L10.0 51.5 L9.5 51.4 L9.0 51.5 L8.5 51.6 L8.0 51.5 L7.5 51.5 L7.0 51.2 L6.5 51.2 L6.0 51.3 L5.5 51.1 L5.0 51.0 L4.5 51.0 L4.0 51.1 L3.5 51.0 L3.0 51.0 L2.5 50.9 L2.0 50.9 L1.5 50.8 L1.0 50.8 L0.5 50.8 L0.0 50.8 Z" fill="#3393f0"/><path d="M0 16.8 L59 16.8 L0 83.8 Z" fill="#000" fill-opacity="0.14"/><path d="M139.80 16.8 L105.80 16.8 L139.80 83.8 Z" fill="#000" fill-opacity="0.14"/></svg>
<div class="t" style="left:5.50px;top:3.61px;font-size:10.61px;font-weight:bold;color:#fff;;transform:scaleX(0.9725);transform-origin:0 0">ATS_140_Eb_Mystery ...</div>
</div>
<div class="abs" style="left:616.80px;top:638.05px;width:281.40px;height:83.8px;border-radius:4px;overflow:hidden;background:#225b93"><svg style="left:0;top:0" width="281.40" height="83.8" viewBox="0 0 281.40 83.8"><rect x="0" y="0" width="281.40" height="16.8" fill="#1c4878"/><path d="M0.0 49.8 L0.5 49.8 L1.0 49.8 L1.5 49.8 L2.0 49.8 L2.5 49.8 L3.0 49.7 L3.5 49.7 L4.0 49.5 L4.5 49.5 L5.0 49.5 L5.5 49.6 L6.0 49.4 L6.5 49.3 L7.0 48.8 L7.5 49.4 L8.0 49.3 L8.5 49.1 L9.0 49.0 L9.5 49.0 L10.0 48.4 L10.5 48.9 L11.0 49.2 L11.5 48.9 L12.0 48.7 L12.5 48.9 L13.0 48.9 L13.5 48.8 L14.0 48.7 L14.5 48.5 L15.0 48.3 L15.5 48.2 L16.0 48.4 L16.5 48.6 L17.0 48.6 L17.5 48.4 L18.0 48.5 L18.5 48.4 L19.0 48.5 L19.5 48.5 L20.0 48.4 L20.5 48.1 L21.0 47.9 L21.5 46.8 L22.0 48.0 L22.5 48.1 L23.0 47.2 L23.5 47.8 L24.0 47.6 L24.5 47.4 L25.0 46.7 L25.5 47.7 L26.0 46.0 L26.5 47.4 L27.0 47.5 L27.5 47.5 L28.0 47.3 L28.5 45.7 L29.0 47.1 L29.5 46.4 L30.0 47.3 L30.5 45.2 L31.0 46.9 L31.5 46.5 L32.0 45.0 L32.5 46.4 L33.0 46.6 L33.5 47.0 L34.0 47.1 L34.5 47.2 L35.0 47.2 L35.5 46.9 L36.0 46.5 L36.5 46.0 L37.0 46.9 L37.5 46.4 L38.0 45.5 L38.5 46.4 L39.0 46.3 L39.5 45.8 L40.0 45.5 L40.5 45.7 L41.0 46.1 L41.5 46.2 L42.0 46.2 L42.5 46.2 L43.0 46.4 L43.5 46.0 L44.0 46.4 L44.5 46.1 L45.0 46.0 L45.5 45.9 L46.0 46.2 L46.5 45.9 L47.0 46.7 L47.5 44.8 L48.0 46.7 L48.5 46.5 L49.0 46.4 L49.5 46.3 L50.0 46.3 L50.5 46.1 L51.0 45.9 L51.5 45.0 L52.0 46.2 L52.5 46.1 L53.0 45.3 L53.5 45.8 L54.0 46.2 L54.5 45.6 L55.0 45.5 L55.5 43.9 L56.0 45.1 L56.5 44.9 L57.0 45.9 L57.5 46.0 L58.0 45.1 L58.5 45.5 L59.0 44.2 L59.5 46.0 L60.0 46.2 L60.5 45.4 L61.0 45.5 L61.5 42.9 L62.0 45.8 L62.5 46.0 L63.0 45.7 L63.5 44.6 L64.0 46.0 L64.5 45.7 L65.0 45.8 L65.5 45.5 L66.0 44.5 L66.5 45.1 L67.0 46.1 L67.5 45.9 L68.0 45.5 L68.5 45.7 L69.0 45.4 L69.5 44.8 L70.0 45.3 L70.5 45.1 L71.0 44.6 L71.5 44.3 L72.0 45.5 L72.5 46.1 L73.0 45.8 L73.5 45.9 L74.0 44.9 L74.5 42.2 L75.0 36.9 L75.5 30.2 L76.0 32.0 L76.5 36.8 L77.0 39.6 L77.5 41.5 L78.0 43.4 L78.5 44.4 L79.0 45.0 L79.5 45.4 L80.0 45.1 L80.5 44.9 L81.0 44.5 L81.5 44.5 L82.0 45.0 L82.5 45.7 L83.0 46.0 L83.5 45.4 L84.0 45.6 L84.5 45.3 L85.0 45.0 L85.5 45.1 L86.0 45.2 L86.5 45.3 L87.0 45.1 L87.5 45.6 L88.0 45.9 L88.5 46.0 L89.0 46.5 L89.5 46.6 L90.0 46.4 L90.5 46.8 L91.0 46.8 L91.5 46.8 L92.0 46.8 L92.5 46.9 L93.0 46.2 L93.5 45.4 L94.0 44.7 L94.5 45.3 L95.0 45.6 L95.5 45.4 L96.0 45.6 L96.5 44.6 L97.0 43.8 L97.5 41.8 L98.0 44.1 L98.5 43.8 L99.0 43.8 L99.5 44.1 L100.0 42.1 L100.5 43.8 L101.0 44.8 L101.5 44.4 L102.0 43.6 L102.5 44.2 L103.0 43.1 L103.5 43.0 L104.0 43.6 L104.5 43.9 L105.0 43.2 L105.5 44.2 L106.0 43.4 L106.5 42.7 L107.0 42.4 L107.5 41.8 L108.0 40.6 L108.5 41.3 L109.0 41.9 L109.5 42.4 L110.0 40.0 L110.5 42.5 L111.0 43.1 L111.5 42.8 L112.0 43.0 L112.5 42.3 L113.0 43.3 L113.5 43.8 L114.0 41.2 L114.5 41.6 L115.0 39.5 L115.5 42.2 L116.0 42.6 L116.5 42.4 L117.0 43.6 L117.5 43.1 L118.0 41.7 L118.5 42.9 L119.0 43.1 L119.5 41.7 L120.0 41.3 L120.5 41.1 L121.0 41.7 L121.5 40.0 L122.0 43.0 L122.5 43.8 L123.0 42.9 L123.5 43.1 L124.0 41.2 L124.5 39.9 L125.0 39.7 L125.5 43.0 L126.0 42.0 L126.5 41.7 L127.0 41.1 L127.5 41.6 L128.0 38.0 L128.5 43.2 L129.0 43.5 L129.5 41.6 L130.0 40.9 L130.5 41.1 L131.0 40.4 L131.5 39.8 L132.0 40.4 L132.5 40.1 L133.0 43.0 L133.5 42.9 L134.0 41.9 L134.5 42.2 L135.0 42.1 L135.5 42.0 L136.0 39.5 L136.5 41.4 L137.0 41.8 L137.5 42.5 L138.0 41.9 L138.5 41.1 L139.0 42.3 L139.5 42.8 L140.0 43.4 L140.5 41.1 L141.0 44.7 L141.5 44.8 L142.0 44.0 L142.5 44.8 L143.0 46.0 L143.5 45.6 L144.0 44.8 L144.5 44.9 L145.0 46.2 L145.5 45.2 L146.0 45.8 L146.5 45.1 L147.0 45.5 L147.5 45.4 L148.0 44.8 L148.5 45.1 L149.0 45.8 L149.5 45.9 L150.0 46.1 L150.5 45.5 L151.0 45.4 L151.5 46.4 L152.0 46.5 L152.5 44.0 L153.0 45.8 L153.5 45.5 L154.0 45.5 L154.5 44.6 L155.0 44.5 L155.5 45.8 L156.0 45.7 L156.5 45.6 L157.0 46.1 L157.5 45.8 L158.0 45.9 L158.5 45.7 L159.0 45.5 L159.5 46.0 L160.0 45.9 L160.5 46.3 L161.0 46.2 L161.5 45.5 L162.0 46.6 L162.5 47.1 L163.0 47.0 L163.5 45.9 L164.0 46.6 L164.5 46.5 L165.0 46.9 L165.5 47.0 L166.0 46.8 L166.5 46.9 L167.0 47.0 L167.5 47.2 L168.0 47.3 L168.5 47.0 L169.0 46.3 L169.5 46.0 L170.0 46.8 L170.5 47.3 L171.0 46.8 L171.5 46.3 L172.0 46.9 L172.5 47.3 L173.0 47.6 L173.5 47.2 L174.0 47.0 L174.5 45.5 L175.0 47.2 L175.5 47.6 L176.0 48.1 L176.5 48.6 L177.0 48.9 L177.5 49.0 L178.0 48.9 L178.5 49.0 L179.0 48.3 L179.5 49.0 L180.0 49.0 L180.5 48.9 L181.0 49.1 L181.5 48.9 L182.0 48.8 L182.5 48.9 L183.0 48.9 L183.5 48.9 L184.0 48.9 L184.5 49.1 L185.0 49.2 L185.5 48.9 L186.0 48.5 L186.5 48.9 L187.0 49.0 L187.5 49.0 L188.0 48.9 L188.5 49.2 L189.0 49.2 L189.5 49.2 L190.0 49.2 L190.5 49.0 L191.0 49.1 L191.5 49.2 L192.0 49.0 L192.5 48.9 L193.0 49.0 L193.5 49.1 L194.0 49.1 L194.5 49.0 L195.0 48.6 L195.5 48.2 L196.0 47.7 L196.5 47.0 L197.0 47.0 L197.5 47.0 L198.0 47.5 L198.5 47.2 L199.0 45.8 L199.5 46.9 L200.0 46.8 L200.5 46.7 L201.0 46.7 L201.5 46.9 L202.0 47.3 L202.5 47.7 L203.0 47.0 L203.5 46.9 L204.0 47.0 L204.5 46.9 L205.0 46.2 L205.5 47.0 L206.0 46.9 L206.5 46.9 L207.0 46.2 L207.5 47.2 L208.0 47.2 L208.5 47.7 L209.0 47.4 L209.5 45.9 L210.0 46.5 L210.5 46.9 L211.0 46.5 L211.5 47.2 L212.0 47.0 L212.5 46.9 L213.0 47.0 L213.5 47.3 L214.0 47.7 L214.5 47.8 L215.0 48.1 L215.5 48.0 L216.0 48.3 L216.5 48.6 L217.0 48.7 L217.5 48.7 L218.0 48.8 L218.5 48.6 L219.0 48.4 L219.5 48.0 L220.0 48.6 L220.5 48.8 L221.0 48.9 L221.5 48.6 L222.0 47.9 L222.5 48.0 L223.0 48.4 L223.5 48.0 L224.0 48.6 L224.5 48.7 L225.0 47.9 L225.5 48.5 L226.0 48.6 L226.5 48.4 L227.0 48.3 L227.5 48.5 L228.0 48.6 L228.5 48.8 L229.0 48.9 L229.5 48.7 L230.0 47.9 L230.5 48.7 L231.0 48.7 L231.5 48.9 L232.0 49.0 L232.5 49.0 L233.0 48.6 L233.5 48.9 L234.0 49.2 L234.5 49.5 L235.0 49.4 L235.5 49.6 L236.0 49.8 L236.5 49.8 L237.0 49.8 L237.5 49.8 L238.0 49.8 L238.5 49.8 L239.0 49.8 L239.5 49.8 L240.0 49.8 L240.5 49.8 L241.0 49.8 L241.5 49.8 L242.0 49.8 L242.5 49.8 L243.0 49.8 L243.5 49.8 L244.0 49.8 L244.5 49.8 L245.0 49.8 L245.5 49.8 L246.0 49.8 L246.5 49.8 L247.0 49.8 L247.5 49.8 L248.0 49.8 L248.5 49.8 L249.0 49.8 L249.5 49.8 L250.0 49.8 L250.5 49.8 L251.0 49.8 L251.5 49.8 L252.0 49.8 L252.5 49.8 L253.0 49.8 L253.5 49.8 L254.0 49.8 L254.5 49.8 L255.0 49.8 L255.5 49.8 L256.0 49.8 L256.5 49.8 L257.0 49.8 L257.5 49.8 L258.0 49.8 L258.5 49.8 L259.0 49.8 L259.5 49.8 L260.0 49.8 L260.5 49.8 L261.0 49.8 L261.5 49.8 L262.0 49.8 L262.5 49.8 L263.0 49.8 L263.5 49.8 L264.0 49.8 L264.5 49.8 L265.0 49.8 L265.5 49.8 L266.0 49.8 L266.5 49.8 L267.0 49.8 L267.5 49.8 L268.0 49.8 L268.5 49.8 L269.0 49.8 L269.5 49.8 L270.0 49.8 L270.5 49.8 L271.0 49.8 L271.5 49.8 L272.0 49.8 L272.5 49.8 L273.0 49.8 L273.5 49.8 L274.0 49.8 L274.5 49.8 L275.0 49.8 L275.5 49.8 L276.0 49.8 L276.5 49.8 L277.0 49.8 L277.5 49.8 L278.0 49.8 L278.5 49.8 L279.0 49.8 L279.5 49.8 L280.0 49.8 L280.5 49.8 L281.0 49.8 L281.4 49.8 L281.4 50.8 L281.0 50.8 L280.5 50.8 L280.0 50.8 L279.5 50.8 L279.0 50.8 L278.5 50.8 L278.0 50.8 L277.5 50.8 L277.0 50.8 L276.5 50.8 L276.0 50.8 L275.5 50.8 L275.0 50.8 L274.5 50.8 L274.0 50.8 L273.5 50.8 L273.0 50.8 L272.5 50.8 L272.0 50.8 L271.5 50.8 L271.0 50.8 L270.5 50.8 L270.0 50.8 L269.5 50.8 L269.0 50.8 L268.5 50.8 L268.0 50.8 L267.5 50.8 L267.0 50.8 L266.5 50.8 L266.0 50.8 L265.5 50.8 L265.0 50.8 L264.5 50.8 L264.0 50.8 L263.5 50.8 L263.0 50.8 L262.5 50.8 L262.0 50.8 L261.5 50.8 L261.0 50.8 L260.5 50.8 L260.0 50.8 L259.5 50.8 L259.0 50.8 L258.5 50.8 L258.0 50.8 L257.5 50.8 L257.0 50.8 L256.5 50.8 L256.0 50.8 L255.5 50.8 L255.0 50.8 L254.5 50.8 L254.0 50.8 L253.5 50.8 L253.0 50.8 L252.5 50.8 L252.0 50.8 L251.5 50.8 L251.0 50.8 L250.5 50.8 L250.0 50.8 L249.5 50.8 L249.0 50.8 L248.5 50.8 L248.0 50.8 L247.5 50.8 L247.0 50.8 L246.5 50.8 L246.0 50.8 L245.5 50.8 L245.0 50.8 L244.5 50.8 L244.0 50.8 L243.5 50.8 L243.0 50.8 L242.5 50.8 L242.0 50.8 L241.5 50.8 L241.0 50.8 L240.5 50.8 L240.0 50.8 L239.5 50.8 L239.0 50.8 L238.5 50.8 L238.0 50.8 L237.5 50.8 L237.0 50.8 L236.5 50.8 L236.0 50.8 L235.5 51.1 L235.0 51.1 L234.5 51.3 L234.0 51.6 L233.5 51.6 L233.0 51.9 L232.5 52.2 L232.0 51.4 L231.5 51.7 L231.0 51.6 L230.5 51.6 L230.0 51.7 L229.5 51.8 L229.0 51.8 L228.5 51.8 L228.0 52.2 L227.5 52.1 L227.0 52.7 L226.5 52.1 L226.0 52.0 L225.5 51.9 L225.0 52.3 L224.5 52.2 L224.0 52.1 L223.5 52.2 L223.0 52.1 L222.5 52.0 L222.0 52.2 L221.5 52.3 L221.0 52.3 L220.5 52.0 L220.0 51.8 L219.5 51.8 L219.0 52.2 L218.5 52.2 L218.0 52.1 L217.5 52.0 L217.0 52.0 L216.5 51.9 L216.0 52.3 L215.5 52.6 L215.0 52.5 L214.5 52.8 L214.0 52.9 L213.5 53.2 L213.0 53.3 L212.5 53.8 L212.0 53.7 L211.5 53.6 L211.0 53.6 L210.5 53.7 L210.0 53.6 L209.5 53.7 L209.0 55.0 L208.5 53.5 L208.0 53.0 L207.5 54.1 L207.0 53.8 L206.5 54.2 L206.0 53.5 L205.5 53.9 L205.0 53.1 L204.5 53.0 L204.0 53.5 L203.5 53.4 L203.0 53.7 L202.5 53.9 L202.0 53.6 L201.5 54.5 L201.0 53.0 L200.5 53.1 L200.0 53.3 L199.5 53.7 L199.0 53.7 L198.5 53.5 L198.0 52.8 L197.5 53.0 L197.0 53.2 L196.5 53.0 L196.0 52.8 L195.5 52.7 L195.0 52.2 L194.5 52.1 L194.0 51.6 L193.5 51.5 L193.0 51.5 L192.5 51.7 L192.0 52.0 L191.5 51.4 L191.0 51.4 L190.5 51.5 L190.0 51.5 L189.5 52.3 L189.0 51.6 L188.5 51.5 L188.0 51.7 L187.5 51.4 L187.0 51.5 L186.5 51.6 L186.0 51.7 L185.5 51.9 L185.0 51.7 L184.5 51.6 L184.0 51.8 L183.5 51.7 L183.0 51.6 L182.5 51.5 L182.0 51.6 L181.5 51.5 L181.0 51.5 L180.5 51.6 L180.0 51.6 L179.5 51.4 L179.0 51.4 L178.5 51.6 L178.0 51.7 L177.5 51.5 L177.0 51.9 L176.5 52.3 L176.0 52.6 L175.5 53.2 L175.0 53.8 L174.5 54.0 L174.0 54.8 L173.5 54.3 L173.0 54.2 L172.5 54.1 L172.0 53.8 L171.5 53.6 L171.0 53.5 L170.5 53.5 L170.0 53.7 L169.5 53.8 L169.0 54.5 L168.5 54.1 L168.0 54.1 L167.5 54.2 L167.0 54.1 L166.5 54.2 L166.0 54.6 L165.5 53.9 L165.0 54.2 L164.5 53.9 L164.0 54.5 L163.5 55.1 L163.0 54.2 L162.5 54.3 L162.0 54.8 L161.5 54.7 L161.0 54.8 L160.5 56.7 L160.0 55.5 L159.5 55.3 L159.0 54.7 L158.5 54.6 L158.0 55.3 L157.5 56.6 L157.0 55.6 L156.5 55.3 L156.0 55.2 L155.5 56.1 L155.0 56.4 L154.5 55.0 L154.0 54.4 L153.5 55.1 L153.0 55.8 L152.5 55.6 L152.0 55.1 L151.5 55.5 L151.0 55.8 L150.5 55.3 L150.0 55.0 L149.5 55.0 L149.0 54.7 L148.5 54.6 L148.0 55.4 L147.5 55.5 L147.0 55.7 L146.5 56.0 L146.0 58.5 L145.5 55.7 L145.0 55.9 L144.5 55.5 L144.0 55.2 L143.5 55.6 L143.0 57.1 L142.5 55.3 L142.0 55.6 L141.5 56.1 L141.0 55.8 L140.5 56.4 L140.0 57.8 L139.5 58.7 L139.0 58.5 L138.5 58.2 L138.0 58.2 L137.5 58.7 L137.0 57.9 L136.5 57.4 L136.0 58.1 L135.5 59.1 L135.0 59.5 L134.5 59.4 L134.0 59.9 L133.5 59.7 L133.0 62.6 L132.5 60.1 L132.0 60.1 L131.5 58.8 L131.0 58.4 L130.5 59.1 L130.0 59.3 L129.5 59.9 L129.0 58.2 L128.5 58.6 L128.0 58.5 L127.5 59.7 L127.0 59.0 L126.5 58.9 L126.0 58.8 L125.5 58.4 L125.0 58.4 L124.5 58.8 L124.0 59.3 L123.5 58.5 L123.0 57.6 L122.5 58.8 L122.0 60.4 L121.5 59.3 L121.0 60.2 L120.5 59.7 L120.0 58.3 L119.5 58.4 L119.0 58.8 L118.5 58.6 L118.0 58.6 L117.5 59.2 L117.0 58.7 L116.5 57.7 L116.0 58.8 L115.5 59.6 L115.0 59.1 L114.5 58.5 L114.0 58.5 L113.5 58.5 L113.0 58.3 L112.5 57.5 L112.0 57.1 L111.5 57.4 L111.0 61.4 L110.5 57.6 L110.0 57.1 L109.5 57.0 L109.0 56.7 L108.5 56.9 L108.0 57.6 L107.5 57.3 L107.0 57.3 L106.5 57.1 L106.0 57.7 L105.5 57.7 L105.0 57.6 L104.5 58.3 L104.0 57.6 L103.5 57.5 L103.0 57.5 L102.5 56.1 L102.0 56.4 L101.5 57.1 L101.0 57.6 L100.5 57.5 L100.0 57.2 L99.5 56.8 L99.0 56.8 L98.5 56.9 L98.0 56.2 L97.5 56.6 L97.0 56.8 L96.5 57.0 L96.0 57.0 L95.5 57.2 L95.0 58.3 L94.5 56.0 L94.0 56.9 L93.5 55.8 L93.0 54.8 L92.5 53.9 L92.0 54.6 L91.5 55.5 L91.0 54.8 L90.5 54.2 L90.0 54.5 L89.5 54.6 L89.0 54.6 L88.5 55.0 L88.0 54.6 L87.5 55.1 L87.0 55.1 L86.5 55.1 L86.0 55.1 L85.5 55.2 L85.0 55.9 L84.5 55.9 L84.0 55.8 L83.5 55.6 L83.0 54.9 L82.5 54.4 L82.0 55.8 L81.5 55.7 L81.0 55.7 L80.5 54.8 L80.0 54.6 L79.5 54.8 L79.0 56.1 L78.5 54.7 L78.0 56.0 L77.5 59.1 L77.0 63.6 L76.5 64.2 L76.0 65.4 L75.5 64.5 L75.0 63.2 L74.5 61.0 L74.0 58.1 L73.5 55.9 L73.0 55.1 L72.5 55.6 L72.0 55.3 L71.5 54.9 L71.0 55.4 L70.5 55.7 L70.0 55.9 L69.5 54.8 L69.0 55.2 L68.5 54.9 L68.0 55.1 L67.5 54.4 L67.0 54.4 L66.5 54.9 L66.0 55.2 L65.5 55.1 L65.0 56.3 L64.5 55.1 L64.0 54.7 L63.5 55.4 L63.0 55.4 L62.5 56.7 L62.0 55.7 L61.5 58.0 L61.0 56.1 L60.5 55.8 L60.0 55.4 L59.5 55.4 L59.0 55.1 L58.5 54.8 L58.0 56.0 L57.5 56.4 L57.0 54.2 L56.5 55.1 L56.0 55.3 L55.5 55.5 L55.0 55.5 L54.5 54.9 L54.0 54.5 L53.5 54.7 L53.0 55.4 L52.5 55.0 L52.0 54.1 L51.5 54.4 L51.0 55.2 L50.5 55.6 L50.0 55.1 L49.5 54.9 L49.0 54.9 L48.5 54.5 L48.0 54.7 L47.5 57.2 L47.0 55.3 L46.5 56.9 L46.0 55.2 L45.5 54.6 L45.0 53.9 L44.5 54.5 L44.0 54.4 L43.5 55.0 L43.0 55.0 L42.5 54.7 L42.0 55.0 L41.5 54.7 L41.0 54.7 L40.5 55.0 L40.0 54.1 L39.5 53.7 L39.0 54.0 L38.5 55.1 L38.0 54.5 L37.5 54.5 L37.0 54.8 L36.5 55.6 L36.0 54.2 L35.5 55.2 L35.0 53.7 L34.5 53.6 L34.0 53.2 L33.5 53.7 L33.0 54.2 L32.5 53.8 L32.0 54.8 L31.5 53.6 L31.0 53.5 L30.5 53.1 L30.0 53.5 L29.5 53.6 L29.0 53.4 L28.5 53.2 L28.0 53.2 L27.5 52.9 L27.0 53.8 L26.5 53.3 L26.0 53.0 L25.5 53.4 L25.0 53.5 L24.5 53.1 L24.0 53.3 L23.5 53.0 L23.0 53.2 L22.5 52.9 L22.0 53.1 L21.5 52.8 L21.0 52.6 L20.5 52.4 L20.0 52.6 L19.5 52.3 L19.0 52.3 L18.5 52.2 L18.0 52.0 L17.5 52.2 L17.0 52.3 L16.5 52.4 L16.0 52.3 L15.5 51.8 L15.0 51.9 L14.5 52.0 L14.0 51.9 L13.5 51.8 L13.0 51.6 L12.5 51.9 L12.0 52.0 L11.5 51.8 L11.0 51.7 L10.5 51.8 L10.0 51.7 L9.5 51.6 L9.0 51.7 L8.5 51.5 L8.0 51.3 L7.5 51.4 L7.0 51.3 L6.5 51.2 L6.0 51.3 L5.5 51.3 L5.0 51.3 L4.5 51.1 L4.0 51.1 L3.5 51.0 L3.0 51.0 L2.5 50.9 L2.0 50.9 L1.5 51.0 L1.0 51.0 L0.5 50.8 L0.0 50.8 Z" fill="#3393f0"/><path d="M0 16.8 L54 16.8 L0 83.8 Z" fill="#000" fill-opacity="0.14"/></svg>
<div class="t" style="left:5.50px;top:3.61px;font-size:10.61px;font-weight:bold;color:#fff;;transform:scaleX(0.9909);transform-origin:0 0">ATS_140_Eb_Mystery Journey_Ambient Pad_3</div>
</div>
<div class="abs" style="left:439.80px;top:728.60px;width:281.40px;height:83.8px;border-radius:4px;overflow:hidden;background:#225b93"><svg style="left:0;top:0" width="281.40" height="83.8" viewBox="0 0 281.40 83.8"><rect x="0" y="0" width="281.40" height="16.8" fill="#1c4878"/><path d="M0.0 49.8 L0.5 49.8 L1.0 49.8 L1.5 49.8 L2.0 49.8 L2.5 49.8 L3.0 49.7 L3.5 49.6 L4.0 49.6 L4.5 49.5 L5.0 49.4 L5.5 49.6 L6.0 49.6 L6.5 49.5 L7.0 49.3 L7.5 49.2 L8.0 49.2 L8.5 49.0 L9.0 49.2 L9.5 49.1 L10.0 49.0 L10.5 49.0 L11.0 48.9 L11.5 48.7 L12.0 48.7 L12.5 48.7 L13.0 48.6 L13.5 48.6 L14.0 48.5 L14.5 48.3 L15.0 48.5 L15.5 48.5 L16.0 48.6 L16.5 48.2 L17.0 48.5 L17.5 48.6 L18.0 48.6 L18.5 48.6 L19.0 48.3 L19.5 48.1 L20.0 48.1 L20.5 48.0 L21.0 48.0 L21.5 47.7 L22.0 47.6 L22.5 47.8 L23.0 48.1 L23.5 47.9 L24.0 47.8 L24.5 47.0 L25.0 47.1 L25.5 47.0 L26.0 47.1 L26.5 46.9 L27.0 47.3 L27.5 47.0 L28.0 47.0 L28.5 46.9 L29.0 46.9 L29.5 46.6 L30.0 46.1 L30.5 47.1 L31.0 47.3 L31.5 47.0 L32.0 46.8 L32.5 46.4 L33.0 47.1 L33.5 47.2 L34.0 46.8 L34.5 47.1 L35.0 46.3 L35.5 44.4 L36.0 46.9 L36.5 47.0 L37.0 46.4 L37.5 46.5 L38.0 46.0 L38.5 46.8 L39.0 46.7 L39.5 46.5 L40.0 46.5 L40.5 46.5 L41.0 45.2 L41.5 45.8 L42.0 43.8 L42.5 45.6 L43.0 46.1 L43.5 45.2 L44.0 46.0 L44.5 46.1 L45.0 46.4 L45.5 46.2 L46.0 45.5 L46.5 45.5 L47.0 45.5 L47.5 45.6 L48.0 45.3 L48.5 46.1 L49.0 45.8 L49.5 46.1 L50.0 46.4 L50.5 46.6 L51.0 46.5 L51.5 46.4 L52.0 46.5 L52.5 46.7 L53.0 46.7 L53.5 43.3 L54.0 44.8 L54.5 45.4 L55.0 45.3 L55.5 45.6 L56.0 46.2 L56.5 45.8 L57.0 45.7 L57.5 45.7 L58.0 45.6 L58.5 43.7 L59.0 45.3 L59.5 45.4 L60.0 45.8 L60.5 45.8 L61.0 45.9 L61.5 45.9 L62.0 46.0 L62.5 46.1 L63.0 46.5 L63.5 46.0 L64.0 44.2 L64.5 45.9 L65.0 45.5 L65.5 43.5 L66.0 44.9 L66.5 44.8 L67.0 46.1 L67.5 45.7 L68.0 45.7 L68.5 45.2 L69.0 45.1 L69.5 45.1 L70.0 46.0 L70.5 46.2 L71.0 45.8 L71.5 45.7 L72.0 45.4 L72.5 44.8 L73.0 45.1 L73.5 44.6 L74.0 41.7 L74.5 39.7 L75.0 36.8 L75.5 34.1 L76.0 34.4 L76.5 36.3 L77.0 38.4 L77.5 42.0 L78.0 44.2 L78.5 45.5 L79.0 45.6 L79.5 45.4 L80.0 45.5 L80.5 45.0 L81.0 45.2 L81.5 42.1 L82.0 45.0 L82.5 45.0 L83.0 44.7 L83.5 45.5 L84.0 45.2 L84.5 43.9 L85.0 45.3 L85.5 45.2 L86.0 45.2 L86.5 45.5 L87.0 45.1 L87.5 45.5 L88.0 46.0 L88.5 46.0 L89.0 46.3 L89.5 46.0 L90.0 45.5 L90.5 45.5 L91.0 45.9 L91.5 46.1 L92.0 46.4 L92.5 46.1 L93.0 45.7 L93.5 45.4 L94.0 44.6 L94.5 44.2 L95.0 43.5 L95.5 44.2 L96.0 44.3 L96.5 43.6 L97.0 40.6 L97.5 43.5 L98.0 43.7 L98.5 43.8 L99.0 44.1 L99.5 44.8 L100.0 44.9 L100.5 44.6 L101.0 43.7 L101.5 43.2 L102.0 43.2 L102.5 43.0 L103.0 43.1 L103.5 43.7 L104.0 43.4 L104.5 42.6 L105.0 42.8 L105.5 43.2 L106.0 43.7 L106.5 44.2 L107.0 43.5 L107.5 42.9 L108.0 43.4 L108.5 41.7 L109.0 43.6 L109.5 42.7 L110.0 42.8 L110.5 42.2 L111.0 40.9 L111.5 41.4 L112.0 40.6 L112.5 40.5 L113.0 41.3 L113.5 40.9 L114.0 41.5 L114.5 42.0 L115.0 42.0 L115.5 42.3 L116.0 42.0 L116.5 41.9 L117.0 41.4 L117.5 41.1 L118.0 40.5 L118.5 42.8 L119.0 44.2 L119.5 44.0 L120.0 43.6 L120.5 43.0 L121.0 43.7 L121.5 43.0 L122.0 42.3 L122.5 41.2 L123.0 37.9 L123.5 41.1 L124.0 41.6 L124.5 40.9 L125.0 42.4 L125.5 42.7 L126.0 40.9 L126.5 41.6 L127.0 41.9 L127.5 41.3 L128.0 41.6 L128.5 39.7 L129.0 39.7 L129.5 42.4 L130.0 42.6 L130.5 42.3 L131.0 42.7 L131.5 43.1 L132.0 42.2 L132.5 41.7 L133.0 40.2 L133.5 37.3 L134.0 40.3 L134.5 40.6 L135.0 41.7 L135.5 41.8 L136.0 42.4 L136.5 41.9 L137.0 42.6 L137.5 42.4 L138.0 43.4 L138.5 43.9 L139.0 42.6 L139.5 43.6 L140.0 43.3 L140.5 43.2 L141.0 43.1 L141.5 43.2 L142.0 43.8 L142.5 44.4 L143.0 44.7 L143.5 45.4 L144.0 45.3 L144.5 45.3 L145.0 45.7 L145.5 45.7 L146.0 45.3 L146.5 46.1 L147.0 46.2 L147.5 45.4 L148.0 45.9 L148.5 46.1 L149.0 45.9 L149.5 46.4 L150.0 46.1 L150.5 45.1 L151.0 42.2 L151.5 45.7 L152.0 45.4 L152.5 45.2 L153.0 45.2 L153.5 45.6 L154.0 46.0 L154.5 46.2 L155.0 46.5 L155.5 46.0 L156.0 43.9 L156.5 46.0 L157.0 45.9 L157.5 46.3 L158.0 45.8 L158.5 45.5 L159.0 46.3 L159.5 46.4 L160.0 46.4 L160.5 45.5 L161.0 46.0 L161.5 46.6 L162.0 47.1 L162.5 46.2 L163.0 46.3 L163.5 46.6 L164.0 46.6 L164.5 46.9 L165.0 46.8 L165.5 46.5 L166.0 46.1 L166.5 46.1 L167.0 46.0 L167.5 44.3 L168.0 46.3 L168.5 46.9 L169.0 47.0 L169.5 46.6 L170.0 46.8 L170.5 46.8 L171.0 46.4 L171.5 46.5 L172.0 46.5 L172.5 47.2 L173.0 47.3 L173.5 46.9 L174.0 46.7 L174.5 46.9 L175.0 47.1 L175.5 47.9 L176.0 48.4 L176.5 48.7 L177.0 48.3 L177.5 49.2 L178.0 49.0 L178.5 48.9 L179.0 49.1 L179.5 49.1 L180.0 49.0 L180.5 49.2 L181.0 48.9 L181.5 48.7 L182.0 48.8 L182.5 49.2 L183.0 49.0 L183.5 49.2 L184.0 49.1 L184.5 48.7 L185.0 48.8 L185.5 48.8 L186.0 48.4 L186.5 49.0 L187.0 49.2 L187.5 49.2 L188.0 49.2 L188.5 49.2 L189.0 49.3 L189.5 49.3 L190.0 49.2 L190.5 49.2 L191.0 49.1 L191.5 49.1 L192.0 49.2 L192.5 49.0 L193.0 49.1 L193.5 49.1 L194.0 49.1 L194.5 48.9 L195.0 48.6 L195.5 48.2 L196.0 47.9 L196.5 47.1 L197.0 47.3 L197.5 47.2 L198.0 47.5 L198.5 47.5 L199.0 47.7 L199.5 47.4 L200.0 47.3 L200.5 47.3 L201.0 47.3 L201.5 47.3 L202.0 47.1 L202.5 46.9 L203.0 47.1 L203.5 46.9 L204.0 46.7 L204.5 46.5 L205.0 46.8 L205.5 46.5 L206.0 47.2 L206.5 47.3 L207.0 47.0 L207.5 47.3 L208.0 46.8 L208.5 45.1 L209.0 47.0 L209.5 47.0 L210.0 46.8 L210.5 46.9 L211.0 47.7 L211.5 47.4 L212.0 47.4 L212.5 47.2 L213.0 47.0 L213.5 47.1 L214.0 47.1 L214.5 47.4 L215.0 47.9 L215.5 48.6 L216.0 48.8 L216.5 48.7 L217.0 48.8 L217.5 49.0 L218.0 49.0 L218.5 48.8 L219.0 48.9 L219.5 48.4 L220.0 48.4 L220.5 47.9 L221.0 48.7 L221.5 48.7 L222.0 48.7 L222.5 48.6 L223.0 48.6 L223.5 48.5 L224.0 48.5 L224.5 48.6 L225.0 48.8 L225.5 48.7 L226.0 48.8 L226.5 48.7 L227.0 48.8 L227.5 48.9 L228.0 48.8 L228.5 48.6 L229.0 49.0 L229.5 48.9 L230.0 48.9 L230.5 48.7 L231.0 48.7 L231.5 48.7 L232.0 49.0 L232.5 48.8 L233.0 48.9 L233.5 48.9 L234.0 49.1 L234.5 49.3 L235.0 49.6 L235.5 49.8 L236.0 49.8 L236.5 49.8 L237.0 49.8 L237.5 49.8 L238.0 49.8 L238.5 49.8 L239.0 49.8 L239.5 49.8 L240.0 49.8 L240.5 49.8 L241.0 49.8 L241.5 49.8 L242.0 49.8 L242.5 49.8 L243.0 49.8 L243.5 49.8 L244.0 49.8 L244.5 49.8 L245.0 49.8 L245.5 49.8 L246.0 49.8 L246.5 49.8 L247.0 49.8 L247.5 49.8 L248.0 49.8 L248.5 49.8 L249.0 49.8 L249.5 49.8 L250.0 49.8 L250.5 49.8 L251.0 49.8 L251.5 49.8 L252.0 49.8 L252.5 49.8 L253.0 49.8 L253.5 49.8 L254.0 49.8 L254.5 49.8 L255.0 49.8 L255.5 49.8 L256.0 49.8 L256.5 49.8 L257.0 49.8 L257.5 49.8 L258.0 49.8 L258.5 49.8 L259.0 49.8 L259.5 49.8 L260.0 49.8 L260.5 49.8 L261.0 49.8 L261.5 49.8 L262.0 49.8 L262.5 49.8 L263.0 49.8 L263.5 49.8 L264.0 49.8 L264.5 49.8 L265.0 49.8 L265.5 49.8 L266.0 49.8 L266.5 49.8 L267.0 49.8 L267.5 49.8 L268.0 49.8 L268.5 49.8 L269.0 49.8 L269.5 49.8 L270.0 49.8 L270.5 49.8 L271.0 49.8 L271.5 49.8 L272.0 49.8 L272.5 49.8 L273.0 49.8 L273.5 49.8 L274.0 49.8 L274.5 49.8 L275.0 49.8 L275.5 49.8 L276.0 49.8 L276.5 49.8 L277.0 49.8 L277.5 49.8 L278.0 49.8 L278.5 49.8 L279.0 49.8 L279.5 49.8 L280.0 49.8 L280.5 49.8 L281.0 49.8 L281.4 49.8 L281.4 50.8 L281.0 50.8 L280.5 50.8 L280.0 50.8 L279.5 50.8 L279.0 50.8 L278.5 50.8 L278.0 50.8 L277.5 50.8 L277.0 50.8 L276.5 50.8 L276.0 50.8 L275.5 50.8 L275.0 50.8 L274.5 50.8 L274.0 50.8 L273.5 50.8 L273.0 50.8 L272.5 50.8 L272.0 50.8 L271.5 50.8 L271.0 50.8 L270.5 50.8 L270.0 50.8 L269.5 50.8 L269.0 50.8 L268.5 50.8 L268.0 50.8 L267.5 50.8 L267.0 50.8 L266.5 50.8 L266.0 50.8 L265.5 50.8 L265.0 50.8 L264.5 50.8 L264.0 50.8 L263.5 50.8 L263.0 50.8 L262.5 50.8 L262.0 50.8 L261.5 50.8 L261.0 50.8 L260.5 50.8 L260.0 50.8 L259.5 50.8 L259.0 50.8 L258.5 50.8 L258.0 50.8 L257.5 50.8 L257.0 50.8 L256.5 50.8 L256.0 50.8 L255.5 50.8 L255.0 50.8 L254.5 50.8 L254.0 50.8 L253.5 50.8 L253.0 50.8 L252.5 50.8 L252.0 50.8 L251.5 50.8 L251.0 50.8 L250.5 50.8 L250.0 50.8 L249.5 50.8 L249.0 50.8 L248.5 50.8 L248.0 50.8 L247.5 50.8 L247.0 50.8 L246.5 50.8 L246.0 50.8 L245.5 50.8 L245.0 50.8 L244.5 50.8 L244.0 50.8 L243.5 50.8 L243.0 50.8 L242.5 50.8 L242.0 50.8 L241.5 50.8 L241.0 50.8 L240.5 50.8 L240.0 50.8 L239.5 50.8 L239.0 50.8 L238.5 50.8 L238.0 50.8 L237.5 50.8 L237.0 50.8 L236.5 50.8 L236.0 50.8 L235.5 50.9 L235.0 51.0 L234.5 51.1 L234.0 51.3 L233.5 51.6 L233.0 51.6 L232.5 51.9 L232.0 51.9 L231.5 51.7 L231.0 51.5 L230.5 51.7 L230.0 52.9 L229.5 51.8 L229.0 51.8 L228.5 51.8 L228.0 52.2 L227.5 52.1 L227.0 51.8 L226.5 51.9 L226.0 51.9 L225.5 52.2 L225.0 52.1 L224.5 51.9 L224.0 51.9 L223.5 51.8 L223.0 51.8 L222.5 51.8 L222.0 51.8 L221.5 52.1 L221.0 52.1 L220.5 52.1 L220.0 52.0 L219.5 52.0 L219.0 52.8 L218.5 52.1 L218.0 52.2 L217.5 51.9 L217.0 51.8 L216.5 51.8 L216.0 52.2 L215.5 52.6 L215.0 52.7 L214.5 52.9 L214.0 53.5 L213.5 54.5 L213.0 53.2 L212.5 53.7 L212.0 53.7 L211.5 53.5 L211.0 53.6 L210.5 53.5 L210.0 53.8 L209.5 53.4 L209.0 53.3 L208.5 53.8 L208.0 53.8 L207.5 53.9 L207.0 53.5 L206.5 53.8 L206.0 53.3 L205.5 53.1 L205.0 53.6 L204.5 53.8 L204.0 53.6 L203.5 53.1 L203.0 53.5 L202.5 53.7 L202.0 54.2 L201.5 54.2 L201.0 53.2 L200.5 53.3 L200.0 53.2 L199.5 53.3 L199.0 53.0 L198.5 53.3 L198.0 53.2 L197.5 53.2 L197.0 53.5 L196.5 53.3 L196.0 53.0 L195.5 52.8 L195.0 52.2 L194.5 51.9 L194.0 51.7 L193.5 51.8 L193.0 51.7 L192.5 51.7 L192.0 51.3 L191.5 51.4 L191.0 51.3 L190.5 51.5 L190.0 51.4 L189.5 51.3 L189.0 51.6 L188.5 51.4 L188.0 51.4 L187.5 51.4 L187.0 51.3 L186.5 51.4 L186.0 51.5 L185.5 51.4 L185.0 51.3 L184.5 51.4 L184.0 51.5 L183.5 51.4 L183.0 51.4 L182.5 51.3 L182.0 51.5 L181.5 51.4 L181.0 51.6 L180.5 51.7 L180.0 51.5 L179.5 51.6 L179.0 51.5 L178.5 52.0 L178.0 51.5 L177.5 51.4 L177.0 51.7 L176.5 52.0 L176.0 52.6 L175.5 52.8 L175.0 54.5 L174.5 55.0 L174.0 53.3 L173.5 53.1 L173.0 53.8 L172.5 54.0 L172.0 53.7 L171.5 53.8 L171.0 53.1 L170.5 53.1 L170.0 54.6 L169.5 54.1 L169.0 53.7 L168.5 53.2 L168.0 53.7 L167.5 53.4 L167.0 54.0 L166.5 53.9 L166.0 53.9 L165.5 54.0 L165.0 53.5 L164.5 54.0 L164.0 54.4 L163.5 54.4 L163.0 54.2 L162.5 54.7 L162.0 56.4 L161.5 54.6 L161.0 54.7 L160.5 54.3 L160.0 54.6 L159.5 54.8 L159.0 54.9 L158.5 55.0 L158.0 54.8 L157.5 55.1 L157.0 55.1 L156.5 54.3 L156.0 54.4 L155.5 54.9 L155.0 55.5 L154.5 55.1 L154.0 54.9 L153.5 55.3 L153.0 55.1 L152.5 54.4 L152.0 54.8 L151.5 55.0 L151.0 55.0 L150.5 54.3 L150.0 55.3 L149.5 55.7 L149.0 55.2 L148.5 54.9 L148.0 57.3 L147.5 55.6 L147.0 54.8 L146.5 54.1 L146.0 54.6 L145.5 54.8 L145.0 55.3 L144.5 55.9 L144.0 55.7 L143.5 55.1 L143.0 56.0 L142.5 55.8 L142.0 55.2 L141.5 56.2 L141.0 56.8 L140.5 57.2 L140.0 57.2 L139.5 57.8 L139.0 58.0 L138.5 59.2 L138.0 59.6 L137.5 59.1 L137.0 58.9 L136.5 59.0 L136.0 59.8 L135.5 59.7 L135.0 59.1 L134.5 58.6 L134.0 58.6 L133.5 59.8 L133.0 58.0 L132.5 60.9 L132.0 57.1 L131.5 58.6 L131.0 59.0 L130.5 59.2 L130.0 59.1 L129.5 59.4 L129.0 59.3 L128.5 59.9 L128.0 59.2 L127.5 58.1 L127.0 61.5 L126.5 57.0 L126.0 56.9 L125.5 57.3 L125.0 57.4 L124.5 57.2 L124.0 57.4 L123.5 58.8 L123.0 63.4 L122.5 57.6 L122.0 57.2 L121.5 57.7 L121.0 60.5 L120.5 59.4 L120.0 61.5 L119.5 60.3 L119.0 59.1 L118.5 58.6 L118.0 59.0 L117.5 59.4 L117.0 58.8 L116.5 58.9 L116.0 58.5 L115.5 58.9 L115.0 62.1 L114.5 56.9 L114.0 57.2 L113.5 59.2 L113.0 59.0 L112.5 60.1 L112.0 58.7 L111.5 59.0 L111.0 58.9 L110.5 58.1 L110.0 60.4 L109.5 58.3 L109.0 58.8 L108.5 57.2 L108.0 56.7 L107.5 57.2 L107.0 61.6 L106.5 58.0 L106.0 57.1 L105.5 59.7 L105.0 57.7 L104.5 57.4 L104.0 57.5 L103.5 56.9 L103.0 57.1 L102.5 55.6 L102.0 55.7 L101.5 55.6 L101.0 56.0 L100.5 56.6 L100.0 56.6 L99.5 56.1 L99.0 58.6 L98.5 56.2 L98.0 55.5 L97.5 55.4 L97.0 55.1 L96.5 56.7 L96.0 56.4 L95.5 56.2 L95.0 55.5 L94.5 55.0 L94.0 54.6 L93.5 54.7 L93.0 53.8 L92.5 54.3 L92.0 54.6 L91.5 55.2 L91.0 55.5 L90.5 54.7 L90.0 54.4 L89.5 54.6 L89.0 55.0 L88.5 55.2 L88.0 54.8 L87.5 55.3 L87.0 55.3 L86.5 55.3 L86.0 54.3 L85.5 55.6 L85.0 56.0 L84.5 56.5 L84.0 55.7 L83.5 55.7 L83.0 55.1 L82.5 55.5 L82.0 55.1 L81.5 55.6 L81.0 55.4 L80.5 55.2 L80.0 55.4 L79.5 56.4 L79.0 56.5 L78.5 55.7 L78.0 57.0 L77.5 59.5 L77.0 62.3 L76.5 65.2 L76.0 64.7 L75.5 62.2 L75.0 61.4 L74.5 58.9 L74.0 56.6 L73.5 57.2 L73.0 55.9 L72.5 55.1 L72.0 54.6 L71.5 54.5 L71.0 55.1 L70.5 54.8 L70.0 55.2 L69.5 54.7 L69.0 54.5 L68.5 55.4 L68.0 54.7 L67.5 54.6 L67.0 56.4 L66.5 55.2 L66.0 55.0 L65.5 55.0 L65.0 55.0 L64.5 54.6 L64.0 54.2 L63.5 54.4 L63.0 55.1 L62.5 55.1 L62.0 55.0 L61.5 56.4 L61.0 54.6 L60.5 54.7 L60.0 55.0 L59.5 54.8 L59.0 55.6 L58.5 54.2 L58.0 54.1 L57.5 54.8 L57.0 54.7 L56.5 54.4 L56.0 54.7 L55.5 55.4 L55.0 55.1 L54.5 54.9 L54.0 54.7 L53.5 56.1 L53.0 55.0 L52.5 55.3 L52.0 54.6 L51.5 54.8 L51.0 54.5 L50.5 54.6 L50.0 54.3 L49.5 54.6 L49.0 54.5 L48.5 54.7 L48.0 54.3 L47.5 54.3 L47.0 53.7 L46.5 54.5 L46.0 54.7 L45.5 54.7 L45.0 55.2 L44.5 54.5 L44.0 54.0 L43.5 54.6 L43.0 54.5 L42.5 54.5 L42.0 55.7 L41.5 55.5 L41.0 55.0 L40.5 55.1 L40.0 55.1 L39.5 54.7 L39.0 54.9 L38.5 55.1 L38.0 56.2 L37.5 54.9 L37.0 54.6 L36.5 54.6 L36.0 54.3 L35.5 54.0 L35.0 54.0 L34.5 53.8 L34.0 56.2 L33.5 53.7 L33.0 53.8 L32.5 53.7 L32.0 53.7 L31.5 53.7 L31.0 53.3 L30.5 53.4 L30.0 53.4 L29.5 53.8 L29.0 55.0 L28.5 53.8 L28.0 53.3 L27.5 53.1 L27.0 53.5 L26.5 53.6 L26.0 54.9 L25.5 52.6 L25.0 52.6 L24.5 53.0 L24.0 53.1 L23.5 52.9 L23.0 52.8 L22.5 52.3 L22.0 52.6 L21.5 53.4 L21.0 52.5 L20.5 52.6 L20.0 52.4 L19.5 52.2 L19.0 53.4 L18.5 52.6 L18.0 52.2 L17.5 52.3 L17.0 52.4 L16.5 52.2 L16.0 52.2 L15.5 51.9 L15.0 52.0 L14.5 51.8 L14.0 51.9 L13.5 52.1 L13.0 52.0 L12.5 51.9 L12.0 51.9 L11.5 51.8 L11.0 51.8 L10.5 51.5 L10.0 51.5 L9.5 51.5 L9.0 51.4 L8.5 51.4 L8.0 51.5 L7.5 51.4 L7.0 51.3 L6.5 51.3 L6.0 51.2 L5.5 51.2 L5.0 51.1 L4.5 51.0 L4.0 51.0 L3.5 50.9 L3.0 50.9 L2.5 50.9 L2.0 50.9 L1.5 50.8 L1.0 50.8 L0.5 50.8 L0.0 50.8 Z" fill="#3393f0"/><path d="M0 16.8 L54 16.8 L0 83.8 Z" fill="#000" fill-opacity="0.14"/></svg>
<div class="t" style="left:5.50px;top:3.61px;font-size:10.61px;font-weight:bold;color:#fff;;transform:scaleX(0.9909);transform-origin:0 0">ATS_140_Eb_Mystery Journey_Ambient Pad_3</div>
</div>
<div class="abs" style="left:302px;top:741.20px;width:1611px;height:9.4px;border-radius:5px 0 0 5px;background:rgba(128,130,134,0.68)"></div>
<div class="abs" style="left:1901px;top:97px;width:10px;height:456px;border-radius:5px;background:rgba(98,102,106,0.9)"></div>
<div class="abs" style="left:1604.5px;top:0;width:1.3px;height:755.5px;background:#fff"></div>
</div>
<div class="abs" style="left:1604.5px;top:156px;width:1.3px;height:12px;background:#fff"></div>
<div class="abs" style="left:1600.9px;top:151.8px;width:8.6px;height:8.6px;border-radius:50%;background:#fff"></div>
<div class="abs" style="left:0;top:922.5px;width:1913px;height:57px;background:#131416"></div>
<div class="pill" style="left:6px;top:934px;width:347.3px;height:34.6px;background:#1d1f22"></div>
<svg style="left:22px;top:942px" width="17" height="17" viewBox="0 0 17 17">
<path d="M6.2 2.3 Q8 3 10.6 1.3 M5 6.7 Q8 7.9 12.1 5.3 M3.2 10.7 Q8 12.4 13.8 9 M1.5 14.2 Q7 16.6 15.8 12.7" fill="none" stroke="#9fa3b0" stroke-width="1.5" stroke-linecap="round"/>
</svg>
<div class="t" style="left:50.00px;top:943.27px;font-size:14.80px;font-weight:bold;color:#a6abc2;;transform:scaleX(0.9895);transform-origin:0 0">AutoPitch™</div>
<div class="t" style="left:161.30px;top:943.23px;font-size:13.55px;font-weight:normal;color:#9a9fae;font-style:italic;transform:scaleX(0.8479);transform-origin:0 0">Fx</div>
<div class="t" style="left:189.50px;top:943.60px;font-size:14.53px;font-weight:bold;color:#a6abc2;;transform:scaleX(0.9747);transform-origin:0 0">Efeitos</div>
<svg style="left:267.5px;top:943.5px" width="15" height="15" viewBox="0 0 15 15">
<path d="M1 14 L1.5 10.5 L10.3 1.7 A1.4 1.4 0 0 1 12.3 1.7 L13.3 2.7 A1.4 1.4 0 0 1 13.3 4.7 L4.5 13.5 Z M8.8 3.2 L11.8 6.2" fill="none" stroke="#8f94a6" stroke-width="1.4" stroke-linejoin="round"/>
</svg>
<div class="t" style="left:294.70px;top:943.60px;font-size:14.53px;font-weight:bold;color:#a6abc2;;transform:scaleX(0.9933);transform-origin:0 0">Editor</div>
<div class="pill" style="left:1454.2px;top:933.6px;width:330.6px;height:35.5px;background:#1d1f22"></div>
<svg style="left:1469.5px;top:942.5px" width="16" height="16" viewBox="0 0 16 16">
<path d="M1 15.2 L8 7.5 M3.2 12.4 C1.8 7.5 7 1.8 15 0.8 C15.2 7.6 10.5 12.5 4.2 12.6" fill="none" stroke="#8f94a6" stroke-width="1.4" stroke-linecap="round" stroke-linejoin="round"/>
</svg>
<div class="t" style="left:1498.10px;top:943.49px;font-size:14.66px;font-weight:bold;color:#a6abc2;;transform:scaleX(1.0719);transform-origin:0 0">Letras/Notas</div>
<svg style="left:1622.8px;top:942.2px" width="17" height="17" viewBox="0 0 17 17">
<path d="M5 5.8 C3 7.5 1.4 9.6 1.4 11.8 C1.4 14.5 3.4 15.8 6 15.8 H11 C13.6 15.8 15.6 14.5 15.6 11.8 C15.6 9.6 14 7.5 12 5.8" fill="none" stroke="#8f94a6" stroke-width="1.6" stroke-linecap="round"/>
<path d="M6 1.2 H11.5 L10.8 3 H8.6 L9.2 9.5" fill="none" stroke="#8f94a6" stroke-width="1.4" stroke-linejoin="round"/>
<circle cx="8.5" cy="10.8" r="1.7" fill="#8f94a6"/>
</svg>
<div class="t" style="left:1641.80px;top:943.50px;font-size:15.36px;font-weight:normal;color:#a2a6b4;-webkit-text-stroke:0.35px #a2a6b4;transform:scaleX(1.0992);transform-origin:0 0">BandLab</div>
<div class="t" style="left:1713.70px;top:943.50px;font-size:15.36px;font-weight:normal;color:#a2a6b4;-webkit-text-stroke:0.15px #a2a6b4;transform:scaleX(0.9997);transform-origin:0 0">Sounds</div>
<div class="pill" style="left:1792.9px;top:933.6px;width:108.6px;height:35.5px;background:#26282c"></div>
<svg style="left:1807.5px;top:943px" width="16" height="16" viewBox="0 0 16 16">
<path d="M5.4 5.4 H10.6 V10.6 H5.4 Z M5.4 5.4 V3.6 A2.1 2.1 0 1 0 3.4 5.4 H5.4 M10.6 5.4 V3.6 A2.1 2.1 0 1 1 12.6 5.4 H10.6 M5.4 10.6 V12.4 A2.1 2.1 0 1 1 3.4 10.6 H5.4 M10.6 10.6 V12.4 A2.1 2.1 0 1 0 12.6 10.6 H10.6" fill="none" stroke="#fff" stroke-width="1.5"/>
</svg>
<div class="t" style="left:1831.00px;top:943.49px;font-size:14.66px;font-weight:bold;color:#fff;;transform:scaleX(1.0262);transform-origin:0 0">Atalhos</div>
</body></html>
